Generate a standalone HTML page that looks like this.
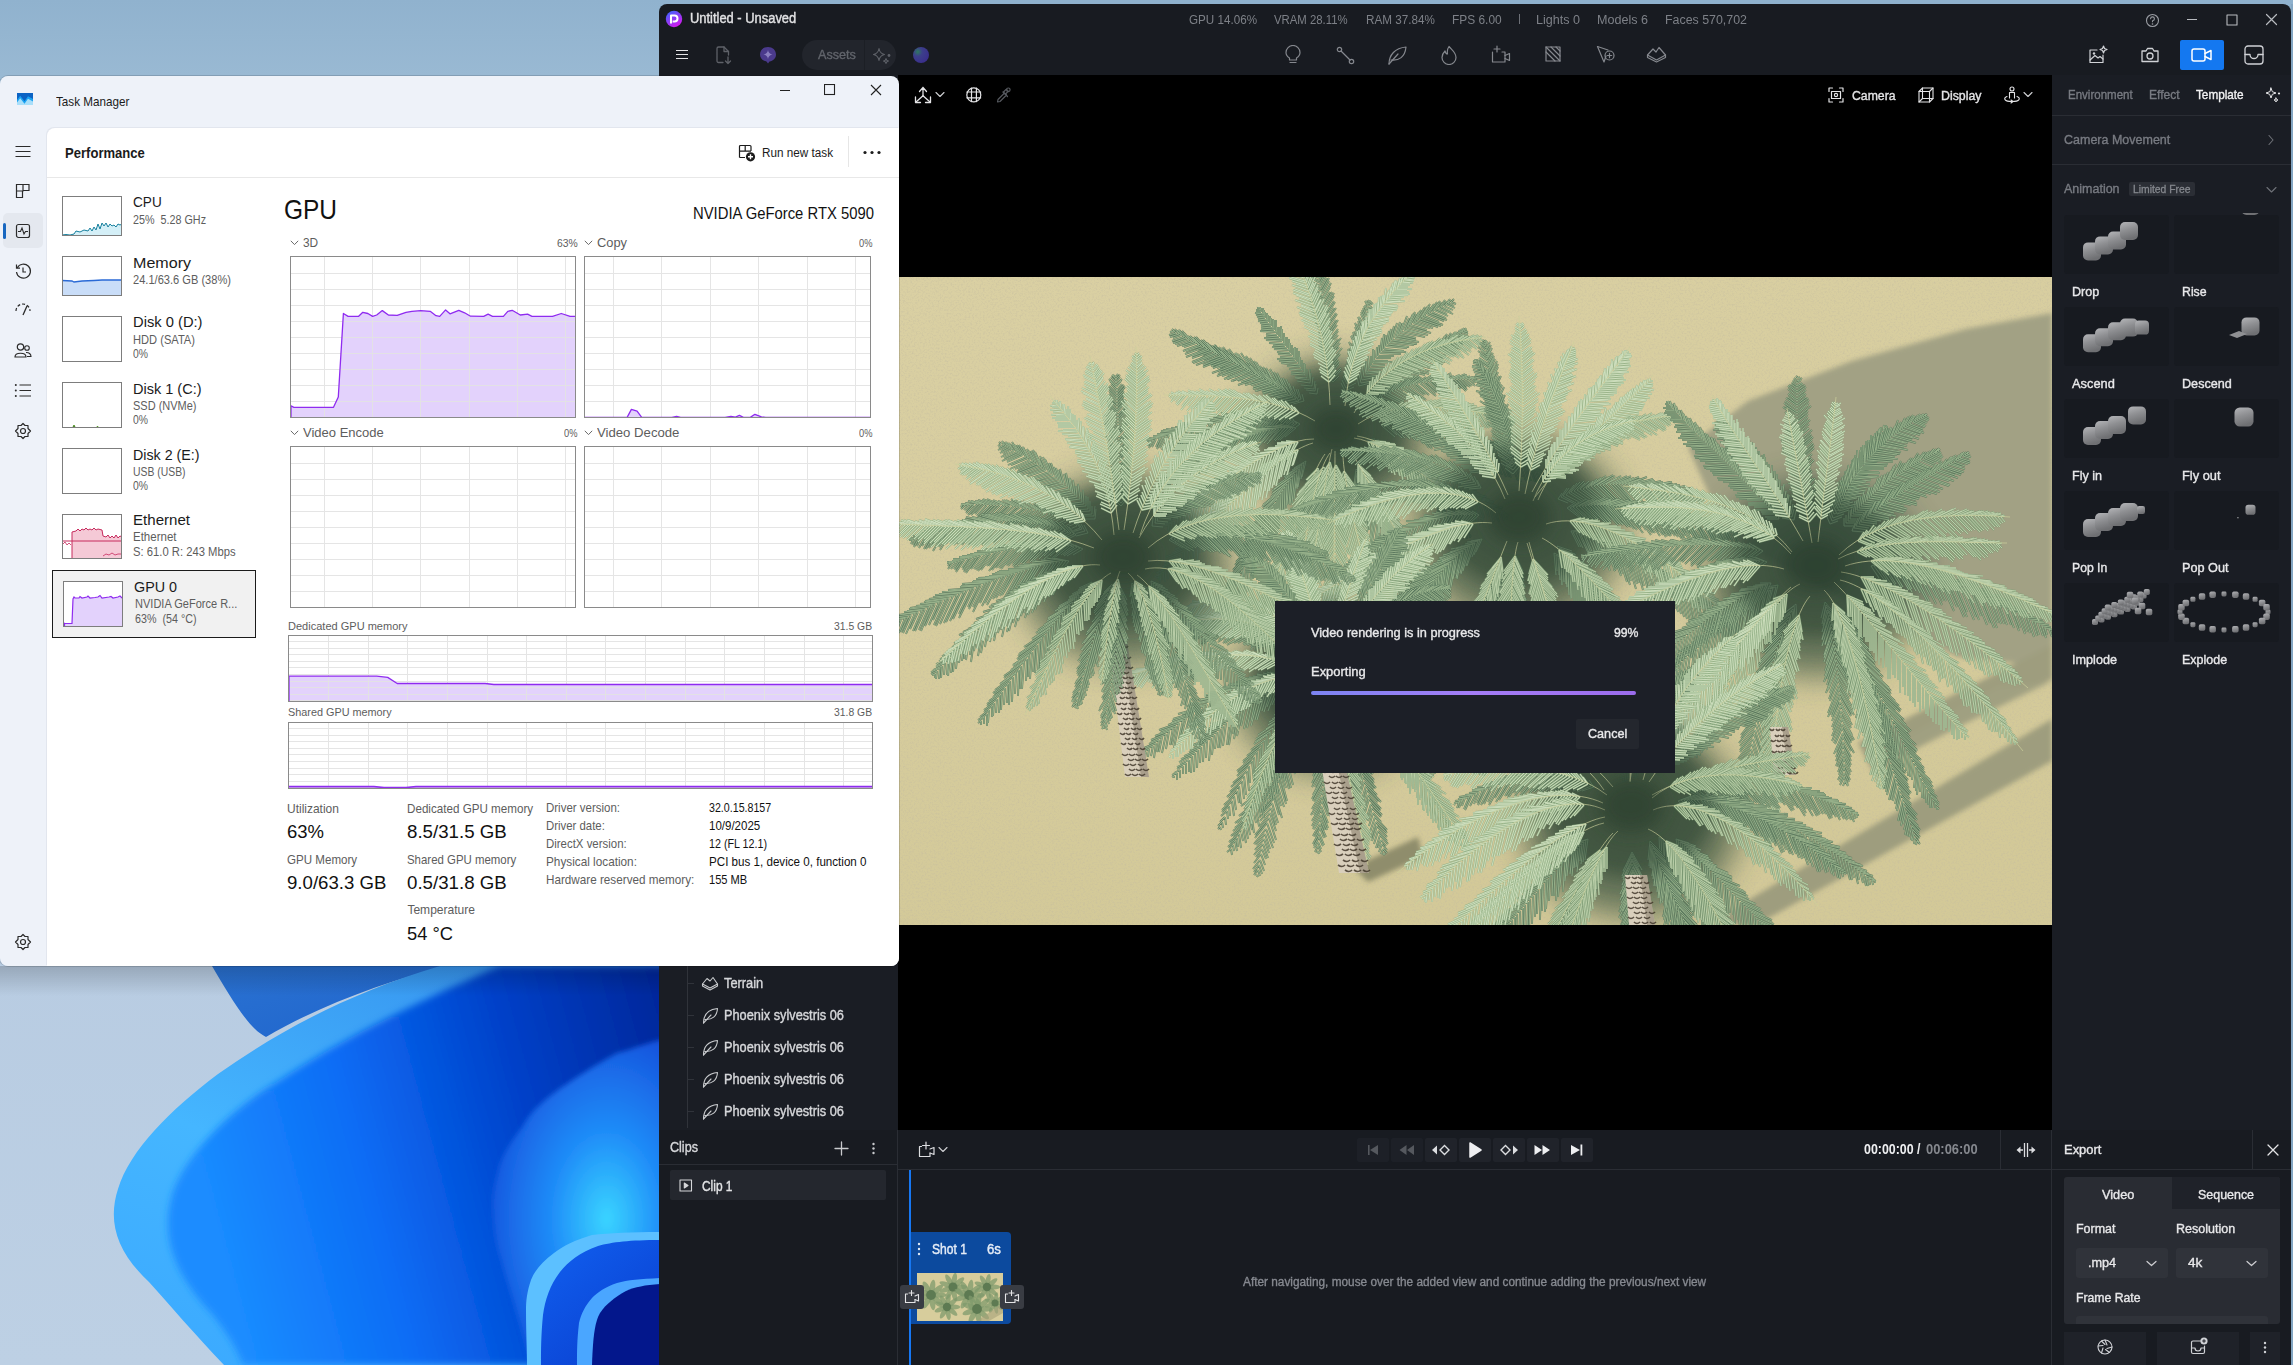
<!DOCTYPE html>
<html><head><meta charset="utf-8"><title>Screen</title>
<style>
html,body{margin:0;padding:0;}
body{width:2293px;height:1365px;position:relative;overflow:hidden;background:#8fb1cd;font-family:"Liberation Sans",sans-serif;}
.r{position:absolute;display:block;}
.t{position:absolute;white-space:pre;line-height:1;font-family:"Liberation Sans",sans-serif;}
</style></head><body>
<svg class="r" style="left:0px;top:0px;" width="700" height="1365" viewBox="0 0 700 1365"><defs>
<linearGradient id="dsk" x1="0" y1="0" x2="0" y2="1"><stop offset="0" stop-color="#90b2ce"/><stop offset="0.055" stop-color="#99b9d3"/><stop offset="0.7" stop-color="#b8cce2"/><stop offset="1" stop-color="#bdd0e4"/></linearGradient>
<linearGradient id="p1" x1="0" y1="0" x2="1" y2="1"><stop offset="0" stop-color="#2a72d2"/><stop offset="1" stop-color="#1f64cc"/></linearGradient>
<linearGradient id="p2" x1="0" y1="0.2" x2="1" y2="0"><stop offset="0" stop-color="#1a8cff"/><stop offset="0.3" stop-color="#0b6cf5"/><stop offset="0.62" stop-color="#0040c8"/><stop offset="1" stop-color="#02208e"/></linearGradient>
<linearGradient id="rim" x1="0" y1="1" x2="0.6" y2="0"><stop offset="0" stop-color="#3aa8ff"/><stop offset="0.5" stop-color="#45b6ff"/><stop offset="1" stop-color="#3796f0"/></linearGradient>
<linearGradient id="p3" x1="0" y1="0" x2="1" y2="0.2"><stop offset="0" stop-color="#2a84f5"/><stop offset="0.5" stop-color="#39c4ff"/><stop offset="1" stop-color="#2a8af5"/></linearGradient>
<radialGradient id="p3r" cx="0.55" cy="0.55" r="0.6"><stop offset="0" stop-color="#3ad4ff"/><stop offset="0.45" stop-color="#1f8cf8"/><stop offset="1" stop-color="#1652dc"/></radialGradient>
<linearGradient id="p5" x1="0" y1="0" x2="1" y2="1"><stop offset="0" stop-color="#1160f0"/><stop offset="1" stop-color="#0838c8"/></linearGradient>
<linearGradient id="p4" x1="0" y1="0" x2="1" y2="1"><stop offset="0" stop-color="#0b4fd8"/><stop offset="1" stop-color="#001a78"/></linearGradient>
<filter id="sb" x="-10%" y="-10%" width="120%" height="120%"><feGaussianBlur stdDeviation="3.5"/></filter><filter id="sb2" x="-10%" y="-10%" width="120%" height="120%"><feGaussianBlur stdDeviation="2.5"/></filter>
<linearGradient id="shd" x1="0" y1="0" x2="0" y2="1"><stop offset="0" stop-color="#000" stop-opacity="0.18"/><stop offset="1" stop-color="#000" stop-opacity="0"/></linearGradient>
</defs>
<rect width="700" height="1365" fill="url(#dsk)"/>
<path d="M212 966 C232 1000 250 1030 266 1037 C320 1005 390 980 448 966Z" fill="url(#p1)"/>
<path d="M440 966 C352 992 280 1030 218 1074 C170 1110 130 1150 118 1189 C108 1220 115 1250 149 1282 C170 1305 195 1335 224 1365 L700 1365 L700 966Z" fill="url(#rim)"/>
<path d="M500 966 C420 1000 340 1040 280 1080 C230 1110 190 1150 174 1189 C160 1230 170 1270 212 1314 C225 1330 235 1345 243 1365 L700 1365 L700 966Z" fill="url(#p2)" filter="url(#sb)"/>
<path d="M660 1040 C640 1045 630 1050 617 1053 C600 1062 585 1072 571 1081 C545 1098 530 1112 523 1126 C508 1145 500 1160 498 1172 C493 1190 492 1200 493 1212 C494 1235 497 1248 501 1260 C506 1280 512 1295 516 1311 C522 1330 527 1348 531 1365 L700 1365 L700 1040Z" fill="url(#p3r)" filter="url(#sb2)"/>
<path d="M660 1040 L700 1040 L700 1365 L640 1365 C650 1250 655 1150 660 1040Z" fill="#0b2aa8" opacity="0.0"/>
<path d="M660 1232 C630 1232 610 1233 592 1235 C575 1240 563 1246 554 1253 C542 1262 535 1270 531 1280 C527 1292 526 1300 526 1311 C526 1330 527 1350 527 1365 L700 1365 L700 1230Z" fill="#5cc0ff"/>
<path d="M660 1240 C630 1240 612 1242 598 1246 C580 1252 568 1262 560 1272 C550 1285 545 1300 543 1315 C541 1335 541 1350 541 1365 L700 1365 L700 1238Z" fill="url(#p5)"/>
<path d="M660 1278 C640 1279 628 1280 617 1283 C605 1287 598 1292 592 1298 C585 1306 581 1314 579 1323 C577 1340 577 1352 577 1365 L700 1365 L700 1275Z" fill="#4aa6ff"/>
<path d="M660 1284 C645 1285 635 1287 626 1291 C615 1297 606 1304 600 1313 C595 1322 593 1335 592 1365 L700 1365 L700 1282Z" fill="#03178c"/>
<rect x="0" y="966" width="700" height="30" fill="url(#shd)"/>
</svg>
<div class="r" style="left:659px;top:4px;width:1632px;height:1361px;background:#181b21;border-top-left-radius:8px;border-top-right-radius:8px;"></div>
<div class="r" style="left:659px;top:75px;width:239px;height:1055px;background:#1a1d24;"></div>
<div class="r" style="left:2052px;top:75px;width:239px;height:1055px;background:#1a1d24;"></div>
<div class="r" style="left:898px;top:75px;width:1154px;height:1055px;background:#000;"></div>
<div class="r" style="left:659px;top:1130px;width:1632px;height:235px;background:#181b21;"></div>
<div class="r" style="left:897px;top:1130px;width:1px;height:235px;background:#2a2d34;"></div>
<div class="r" style="left:2051px;top:1130px;width:1px;height:235px;background:#2a2d34;"></div>
<div class="r" style="left:659px;top:1164px;width:239px;height:1px;background:#2a2d34;"></div>
<div class="r" style="left:898px;top:1169px;width:1153px;height:1px;background:#2a2d34;"></div>
<div class="r" style="left:2052px;top:1169px;width:239px;height:1px;background:#2a2d34;"></div>
<svg class="r" style="left:665px;top:10px;" width="18" height="18" viewBox="0 0 18 18"><defs><linearGradient id="lg1" x1="0" y1="0" x2="0.6" y2="1"><stop offset="0" stop-color="#2f6bff"/><stop offset="1" stop-color="#d41bf0"/></linearGradient></defs><circle cx="9" cy="9" r="8.2" fill="url(#lg1)"/><path d="M6 13.5 V5.5 H9.5 A3 3 0 0 1 9.5 11.5 H7.6" fill="none" stroke="#fff" stroke-width="2" stroke-linejoin="round"/></svg>
<div class="t" style="left:690.00px;top:11.61px;font-size:13.81px;color:#e2e2e4;-webkit-text-stroke:0.39px #e2e2e4;transform:scaleX(0.9360);transform-origin:0 0;">Untitled - Unsaved</div>
<div class="t" style="left:1188.70px;top:12.86px;font-size:13.52px;color:#7d8087;transform:scaleX(0.8621);transform-origin:0 0;">GPU 14.06%</div>
<div class="t" style="left:1274.30px;top:12.86px;font-size:13.52px;color:#7d8087;transform:scaleX(0.8407);transform-origin:0 0;">VRAM 28.11%</div>
<div class="t" style="left:1365.90px;top:12.86px;font-size:13.52px;color:#7d8087;transform:scaleX(0.8641);transform-origin:0 0;">RAM 37.84%</div>
<div class="t" style="left:1452.20px;top:12.86px;font-size:13.52px;color:#7d8087;transform:scaleX(0.8817);transform-origin:0 0;">FPS 6.00</div>
<div class="t" style="left:1536.40px;top:12.86px;font-size:13.52px;color:#7d8087;transform:scaleX(0.9287);transform-origin:0 0;">Lights 0</div>
<div class="t" style="left:1597.40px;top:12.86px;font-size:13.52px;color:#7d8087;transform:scaleX(0.9293);transform-origin:0 0;">Models 6</div>
<div class="t" style="left:1665.40px;top:12.86px;font-size:13.52px;color:#7d8087;transform:scaleX(0.9170);transform-origin:0 0;">Faces 570,702</div>
<div class="r" style="left:1519px;top:14px;width:1px;height:10px;background:#6d7077;"></div>
<svg class="r" style="left:2145px;top:13px;" width="15" height="15" viewBox="0 0 15 15"><g fill="none" stroke="#9a9da3" stroke-width="1.1" stroke-linecap="round" stroke-linejoin="round"><circle cx="7.5" cy="7.5" r="6"/><path d="M5.6 5.8 A1.9 1.9 0 1 1 7.5 7.7 V8.8"/></g><circle cx="7.5" cy="11" r="0.8" fill="#9a9da3"/></svg>
<div class="r" style="left:2187px;top:19px;width:10px;height:1px;background:#b8bbc0;"></div>
<svg class="r" style="left:2226px;top:14px;" width="12" height="12" viewBox="0 0 12 12"><g fill="none" stroke="#b8bbc0" stroke-width="1.1" stroke-linecap="round" stroke-linejoin="round"><rect x="1" y="1" width="10" height="10"/></g></svg>
<svg class="r" style="left:2265px;top:13px;" width="13" height="13" viewBox="0 0 13 13"><g fill="none" stroke="#b8bbc0" stroke-width="1.2" stroke-linecap="round" stroke-linejoin="round"><path d="M1.5 1.5 L11.5 11.5 M11.5 1.5 L1.5 11.5"/></g></svg>
<svg class="r" style="left:675px;top:49px;" width="14" height="11" viewBox="0 0 14 11"><path d="M1 1.5 H13 M1 5.5 H13 M1 9.5 H13" stroke="#e4e4e6" stroke-width="1.1" fill="none"/></svg>
<svg class="r" style="left:714px;top:45px;" width="20" height="20" viewBox="0 0 20 20"><g fill="none" stroke="#5e6168" stroke-width="1.3" stroke-linecap="round" stroke-linejoin="round"><path d="M9 17.5 H4.5 A1.5 1.5 0 0 1 3 16 V3.5 A1.5 1.5 0 0 1 4.5 2 H10 L14.5 6.5 V10"/><path d="M10 2 V6.5 H14.5"/><path d="M14 12 V18.5 M11.5 16 L14 18.5 L16.5 16"/></g></svg>
<svg class="r" style="left:759px;top:46px;" width="18" height="18" viewBox="0 0 18 18"><path d="M9 1 C13.5 1 17 4 17 8.5 C17 12.5 14 15 10.5 15.5 L9 17.5 L7.5 15.5 C4 15 1 12.5 1 8.5 C1 4 4.5 1 9 1Z" fill="#4a3a8c"/><path d="M9 4 Q9.6 7.9 13.5 8.5 Q9.6 9.1 9 13 Q8.4 9.1 4.5 8.5 Q8.4 7.9 9 4Z" fill="#8a7fc0"/></svg>
<div class="r" style="left:802px;top:40px;width:94px;height:30px;background:#22252c;border-radius:15px;"></div>
<div class="r" style="left:864px;top:40px;width:1px;height:30px;background:#1c1f25;"></div>
<div class="t" style="left:818.30px;top:48.64px;font-size:12.35px;color:#62656c;-webkit-text-stroke:0.35px #62656c;transform:scaleX(1.0226);transform-origin:0 0;">Assets</div>
<svg class="r" style="left:872px;top:47px;" width="20" height="18" viewBox="0 0 20 18"><g fill="none" stroke="#5e6168" stroke-width="1.1" stroke-linecap="round" stroke-linejoin="round"><path d="M7 1.5 Q7.8 6.5 12.5 7.5 Q7.8 8.5 7 13.5 Q6.2 8.5 1.5 7.5 Q6.2 6.5 7 1.5Z"/><path d="M14 11.5 Q14.3 13.7 16.5 14 Q14.3 14.3 14 16.5 Q13.7 14.3 11.5 14 Q13.7 13.7 14 11.5Z"/></g><circle cx="17" cy="8.5" r="1.4" fill="#5e6168"/></svg>
<svg class="r" style="left:912px;top:46px;" width="18" height="18" viewBox="0 0 18 18"><defs><radialGradient id="orb" cx="0.3" cy="0.3" r="0.8"><stop offset="0" stop-color="#2e7a5e"/><stop offset="0.35" stop-color="#3c3f8a"/><stop offset="1" stop-color="#3a2d8c"/></radialGradient></defs><circle cx="9" cy="9" r="8" fill="url(#orb)"/></svg>
<svg class="r" style="left:1284px;top:45px;" width="18" height="20" viewBox="0 0 18 20"><g fill="none" stroke="#85888e" stroke-width="1.2" stroke-linecap="round" stroke-linejoin="round"><path d="M5.5 13 C3 11.5 2 9.5 2 7.5 A7 7 0 0 1 16 7.5 C16 9.5 15 11.5 12.5 13 V15 H5.5Z"/><path d="M6 17.5 H12"/></g></svg>
<svg class="r" style="left:1336px;top:46px;" width="19" height="19" viewBox="0 0 19 19"><g fill="none" stroke="#85888e" stroke-width="1.2" stroke-linecap="round" stroke-linejoin="round"><circle cx="3.5" cy="3.5" r="2.2"/><circle cx="15.5" cy="15.5" r="2.2"/><path d="M5 5 L14 14"/></g></svg>
<svg class="r" style="left:1387px;top:45px;" width="20" height="20" viewBox="0 0 20 20"><g fill="none" stroke="#85888e" stroke-width="1.2" stroke-linecap="round" stroke-linejoin="round"><path d="M2 19 C2 10 8 3 19 2 C18 12 12 16 4 15"/><path d="M2 19 L11 9"/></g></svg>
<svg class="r" style="left:1440px;top:45px;" width="18" height="20" viewBox="0 0 18 20"><g fill="none" stroke="#85888e" stroke-width="1.2" stroke-linecap="round" stroke-linejoin="round"><path d="M9 1.5 C12 5 16 7.5 16 12.5 A7 7 0 0 1 2 12.5 C2 9.5 3.5 7.5 5 6 C5.5 8 6.5 9 7.5 9 C7 6 7.5 3.5 9 1.5Z"/></g></svg>
<svg class="r" style="left:1491px;top:45px;" width="20" height="19" viewBox="0 0 20 19"><g fill="none" stroke="#85888e" stroke-width="1.2" stroke-linecap="round" stroke-linejoin="round"><path d="M6 1 V7 M3 4 H9"/><path d="M1.5 7 V17 H14 V7 H11"/><path d="M14 10.5 L18.5 8.5 V15.5 L14 13.5"/></g></svg>
<svg class="r" style="left:1545px;top:46px;" width="17" height="17" viewBox="0 0 17 17"><g fill="none" stroke="#85888e" stroke-width="1.2" stroke-linecap="round" stroke-linejoin="round"><rect x="1" y="1" width="14" height="14"/><path d="M6 1 L15 10 M1 1 L15 15 M1 6 L10 15 M11 1 L15 5"/></g></svg>
<svg class="r" style="left:1596px;top:45px;" width="20" height="20" viewBox="0 0 20 20"><g fill="none" stroke="#85888e" stroke-width="1.2" stroke-linecap="round" stroke-linejoin="round"><path d="M1.5 1.5 L8 17 L10 11"/><path d="M1.5 1.5 L12 5"/><circle cx="13.5" cy="10.5" r="4.5"/><path d="M13.5 8.3 V12.7 M11.3 10.5 H15.7"/></g></svg>
<svg class="r" style="left:1646px;top:46px;" width="21" height="17" viewBox="0 0 21 17"><g fill="none" stroke="#85888e" stroke-width="1.2" stroke-linecap="round" stroke-linejoin="round"><path d="M1.5 9 L10.5 14 L19.5 9 V11.5 L10.5 16 L1.5 11.5Z"/><path d="M1.5 9 L7 3 L10 6 L13 1.5 L19.5 9"/></g></svg>
<svg class="r" style="left:2088px;top:45px;" width="21" height="20" viewBox="0 0 21 20"><g fill="none" stroke="#d0d2d6" stroke-width="1.2" stroke-linecap="round" stroke-linejoin="round"><path d="M15 10 V17.5 H2 V5 H9"/><path d="M2 15 L7 10.5 L10 13 L12 11.5 L15 14"/><path d="M15.5 1 L16.5 3.5 L19 4.5 L16.5 5.5 L15.5 8 L14.5 5.5 L12 4.5 L14.5 3.5Z"/></g><circle cx="6" cy="8.5" r="1.2" fill="#d0d2d6"/></svg>
<svg class="r" style="left:2140px;top:45px;" width="20" height="19" viewBox="0 0 20 19"><g fill="none" stroke="#d0d2d6" stroke-width="1.3" stroke-linecap="round" stroke-linejoin="round"><path d="M2 6 H6 L7.5 3.5 H12.5 L14 6 H18 V16.5 H2Z"/><circle cx="10" cy="11" r="3"/></g></svg>
<div class="r" style="left:2180px;top:40px;width:44px;height:30px;background:#1478f0;border-radius:2px;"></div>
<svg class="r" style="left:2191px;top:47px;" width="22" height="16" viewBox="0 0 22 16"><g fill="none" stroke="#ffffff" stroke-width="1.5" stroke-linecap="round" stroke-linejoin="round"><rect x="1" y="2" width="13" height="12" rx="2"/><path d="M14 6.5 L20 3.5 V12.5 L14 9.5"/></g></svg>
<svg class="r" style="left:2244px;top:45px;" width="20" height="20" viewBox="0 0 20 20"><g fill="none" stroke="#d0d2d6" stroke-width="1.3" stroke-linecap="round" stroke-linejoin="round"><rect x="1" y="1" width="18" height="18" rx="3"/><path d="M1 9.5 H6 C6 12 8 13.5 10 13.5 C12 13.5 14 12 14 9.5 H19"/></g></svg>
<svg class="r" style="left:912px;top:85px;" width="22" height="20" viewBox="0 0 22 20"><g fill="none" stroke="#e4e4e6" stroke-width="1.3" stroke-linecap="round" stroke-linejoin="round"><path d="M11 10.7 V2.5 M7.5 6.5 L11 2.5 L14.5 6.5"/><path d="M11 10.7 L4 17 M11 10.7 L18 17"/><path d="M3.5 12 V17.5 H8.5 M18.5 12 V17.5 H13.5"/></g></svg>
<svg class="r" style="left:935px;top:91px;" width="10" height="7" viewBox="0 0 10 7"><g fill="none" stroke="#cfd0d3" stroke-width="1.1" stroke-linecap="round" stroke-linejoin="round"><path d="M1 1.5 L5 5.5 L9 1.5"/></g></svg>
<svg class="r" style="left:965px;top:86px;" width="18" height="18" viewBox="0 0 18 18"><g fill="none" stroke="#e4e4e6" stroke-width="1.2" stroke-linecap="round" stroke-linejoin="round"><circle cx="8.8" cy="8.9" r="7"/><path d="M6.5 2.2 V15.6 M11.4 2.2 V15.6 M1.9 6 H15.7 M1.9 11.8 H15.7"/></g></svg>
<svg class="r" style="left:995px;top:86px;" width="17" height="18" viewBox="0 0 17 18"><g fill="none" stroke="#55585e" stroke-width="1.2" stroke-linecap="round" stroke-linejoin="round"><path d="M2.5 16 L3 13.5 L9.5 7 L11.5 9 L5 15.5Z"/><path d="M8 6 L12.5 10.5"/><path d="M10.5 8 L13 5.5 A2 2 0 0 0 11 3.5 L8.5 6"/><circle cx="13.3" cy="3.8" r="1.8"/></g></svg>
<svg class="r" style="left:1828px;top:87px;" width="16" height="16" viewBox="0 0 16 16"><g fill="none" stroke="#e4e4e6" stroke-width="1.2" stroke-linecap="round" stroke-linejoin="round"><path d="M1 4.5 V1 H4.5 M11.5 1 H15 V4.5 M15 11.5 V15 H11.5 M4.5 15 H1 V11.5"/><rect x="3.5" y="4.5" width="9" height="7"/><circle cx="8" cy="8" r="1.6"/></g></svg>
<div class="t" style="left:1852.20px;top:88.93px;font-size:13.08px;color:#e4e4e6;-webkit-text-stroke:0.37px #e4e4e6;transform:scaleX(0.9362);transform-origin:0 0;">Camera</div>
<svg class="r" style="left:1918px;top:87px;" width="16" height="16" viewBox="0 0 16 16"><g fill="none" stroke="#e4e4e6" stroke-width="1.1" stroke-linecap="round" stroke-linejoin="round"><rect x="1" y="4.5" width="10.5" height="10.5"/><rect x="4.5" y="1" width="10.5" height="10.5"/><path d="M1 4.5 L4.5 1 M11.5 4.5 L15 1 M11.5 15 L15 11.5 M1 15 L4.5 11.5"/></g></svg>
<div class="t" style="left:1941.20px;top:88.93px;font-size:13.08px;color:#e4e4e6;-webkit-text-stroke:0.37px #e4e4e6;transform:scaleX(0.9439);transform-origin:0 0;">Display</div>
<svg class="r" style="left:2003px;top:86px;" width="18" height="18" viewBox="0 0 18 18"><g fill="none" stroke="#e4e4e6" stroke-width="1.1" stroke-linecap="round" stroke-linejoin="round"><circle cx="9" cy="3" r="2"/><path d="M6.5 12 V6.5 H11.5 V12"/><path d="M4 10.5 C0 12 1 15.5 9 15.5 C17 15.5 18 12 14 10.5"/><path d="M8 14 L10 15.5 L8 17"/></g></svg>
<svg class="r" style="left:2023px;top:91px;" width="10" height="7" viewBox="0 0 10 7"><g fill="none" stroke="#cfd0d3" stroke-width="1.1" stroke-linecap="round" stroke-linejoin="round"><path d="M1 1.5 L5 5.5 L9 1.5"/></g></svg>
<div class="t" style="left:2067.80px;top:88.48px;font-size:13.37px;color:#787b82;-webkit-text-stroke:0.37px #787b82;transform:scaleX(0.8630);transform-origin:0 0;">Environment</div>
<div class="t" style="left:2148.90px;top:88.48px;font-size:13.37px;color:#787b82;-webkit-text-stroke:0.37px #787b82;transform:scaleX(0.9039);transform-origin:0 0;">Effect</div>
<div class="t" style="left:2196.00px;top:88.48px;font-size:13.37px;color:#f2f2f3;-webkit-text-stroke:0.37px #f2f2f3;transform:scaleX(0.8786);transform-origin:0 0;">Template</div>
<svg class="r" style="left:2265px;top:87px;" width="16" height="16" viewBox="0 0 16 16"><g fill="none" stroke="#e4e4e6" stroke-width="1.0" stroke-linecap="round" stroke-linejoin="round"><path d="M6 1 L7.3 4.7 L11 6 L7.3 7.3 L6 11 L4.7 7.3 L1 6 L4.7 4.7Z"/><path d="M11 11 L11.6 12.4 L13 13 L11.6 13.6 L11 15 L10.4 13.6 L9 13 L10.4 12.4Z"/></g><circle cx="14" cy="6.5" r="1.1" fill="#e4e4e6"/></svg>
<div class="r" style="left:2052px;top:115px;width:239px;height:1px;background:#2a2d34;"></div>
<div class="t" style="left:2064.20px;top:132.98px;font-size:13.37px;color:#787b82;-webkit-text-stroke:0.37px #787b82;transform:scaleX(0.9356);transform-origin:0 0;">Camera Movement</div>
<svg class="r" style="left:2267px;top:134px;" width="8" height="12" viewBox="0 0 8 12"><g fill="none" stroke="#6e7177" stroke-width="1.1" stroke-linecap="round" stroke-linejoin="round"><path d="M2 1.5 L6 6 L2 10.5"/></g></svg>
<div class="r" style="left:2052px;top:164px;width:239px;height:1px;background:#2a2d34;"></div>
<div class="t" style="left:2064.20px;top:182.08px;font-size:13.37px;color:#787b82;-webkit-text-stroke:0.37px #787b82;transform:scaleX(0.9354);transform-origin:0 0;">Animation</div>
<div class="r" style="left:2129px;top:182px;width:66px;height:14px;background:#2b2e35;border-radius:2px;"></div>
<div class="t" style="left:2133.00px;top:183.90px;font-size:10.76px;color:#85888e;-webkit-text-stroke:0.30px #85888e;transform:scaleX(0.9615);transform-origin:0 0;">Limited Free</div>
<svg class="r" style="left:2266px;top:186px;" width="11" height="8" viewBox="0 0 11 8"><g fill="none" stroke="#6e7177" stroke-width="1.1" stroke-linecap="round" stroke-linejoin="round"><path d="M1 1.5 L5.5 6 L10 1.5"/></g></svg>
<div class="r" style="left:2064px;top:215px;width:105px;height:59px;background:#171a20;border-radius:3px;"></div>
<div class="r" style="left:2174px;top:215px;width:105px;height:59px;background:#171a20;border-radius:3px;"></div>
<div class="t" style="left:2072.00px;top:285.16px;font-size:13.52px;color:#e8e8ea;-webkit-text-stroke:0.38px #e8e8ea;transform:scaleX(0.9307);transform-origin:0 0;">Drop</div>
<div class="t" style="left:2182.00px;top:285.16px;font-size:13.52px;color:#e8e8ea;-webkit-text-stroke:0.38px #e8e8ea;transform:scaleX(0.9099);transform-origin:0 0;">Rise</div>
<div class="r" style="left:2064px;top:307px;width:105px;height:59px;background:#171a20;border-radius:3px;"></div>
<div class="r" style="left:2174px;top:307px;width:105px;height:59px;background:#171a20;border-radius:3px;"></div>
<div class="t" style="left:2072.00px;top:377.16px;font-size:13.52px;color:#e8e8ea;-webkit-text-stroke:0.38px #e8e8ea;transform:scaleX(0.9494);transform-origin:0 0;">Ascend</div>
<div class="t" style="left:2182.00px;top:377.16px;font-size:13.52px;color:#e8e8ea;-webkit-text-stroke:0.38px #e8e8ea;transform:scaleX(0.9339);transform-origin:0 0;">Descend</div>
<div class="r" style="left:2064px;top:399px;width:105px;height:59px;background:#171a20;border-radius:3px;"></div>
<div class="r" style="left:2174px;top:399px;width:105px;height:59px;background:#171a20;border-radius:3px;"></div>
<div class="t" style="left:2072.00px;top:469.16px;font-size:13.52px;color:#e8e8ea;-webkit-text-stroke:0.38px #e8e8ea;transform:scaleX(0.9286);transform-origin:0 0;">Fly in</div>
<div class="t" style="left:2182.00px;top:469.16px;font-size:13.52px;color:#e8e8ea;-webkit-text-stroke:0.38px #e8e8ea;transform:scaleX(0.9494);transform-origin:0 0;">Fly out</div>
<div class="r" style="left:2064px;top:491px;width:105px;height:59px;background:#171a20;border-radius:3px;"></div>
<div class="r" style="left:2174px;top:491px;width:105px;height:59px;background:#171a20;border-radius:3px;"></div>
<div class="t" style="left:2072.00px;top:561.16px;font-size:13.52px;color:#e8e8ea;-webkit-text-stroke:0.38px #e8e8ea;transform:scaleX(0.9036);transform-origin:0 0;">Pop In</div>
<div class="t" style="left:2182.00px;top:561.16px;font-size:13.52px;color:#e8e8ea;-webkit-text-stroke:0.38px #e8e8ea;transform:scaleX(0.9393);transform-origin:0 0;">Pop Out</div>
<div class="r" style="left:2064px;top:583px;width:105px;height:59px;background:#171a20;border-radius:3px;"></div>
<div class="r" style="left:2174px;top:583px;width:105px;height:59px;background:#171a20;border-radius:3px;"></div>
<div class="t" style="left:2072.00px;top:653.16px;font-size:13.52px;color:#e8e8ea;-webkit-text-stroke:0.38px #e8e8ea;transform:scaleX(0.9351);transform-origin:0 0;">Implode</div>
<div class="t" style="left:2182.00px;top:653.16px;font-size:13.52px;color:#e8e8ea;-webkit-text-stroke:0.38px #e8e8ea;transform:scaleX(0.9250);transform-origin:0 0;">Explode</div>
<svg class="r" style="left:2064px;top:213px;overflow:hidden;" width="216" height="430" viewBox="0 0 216 430"><defs><linearGradient id="cg" x1="0" y1="0" x2="0.3" y2="1"><stop offset="0" stop-color="#b4b5b8"/><stop offset="0.5" stop-color="#8e8f92"/><stop offset="1" stop-color="#6f7073"/></linearGradient></defs><rect x="19.0" y="29.4" width="18.0" height="18.0" rx="5.0" fill="url(#cg)"/><rect x="31.0" y="23.4" width="18.0" height="18.0" rx="5.0" fill="url(#cg)"/><rect x="44.0" y="18.5" width="18.0" height="18.0" rx="5.0" fill="url(#cg)"/><rect x="56.0" y="9.0" width="18.0" height="18.0" rx="5.0" fill="url(#cg)"/><rect x="177.5" y="-16.0" width="18.0" height="18.0" rx="5.0" fill="url(#cg)"/><rect x="19.0" y="121.3" width="18.0" height="18.0" rx="5.0" fill="url(#cg)"/><rect x="31.0" y="115.3" width="18.0" height="18.0" rx="5.0" fill="url(#cg)"/><rect x="44.0" y="109.3" width="18.0" height="18.0" rx="5.0" fill="url(#cg)"/><rect x="56.0" y="105.6" width="18.0" height="18.0" rx="5.0" fill="url(#cg)"/><rect x="71.0" y="107.6" width="14.0" height="14.0" rx="3.9" fill="url(#cg)"/><rect x="177.5" y="104.4" width="18.0" height="18.0" rx="5.0" fill="url(#cg)"/><path d="M165.0 122.0 l10 -4 l8 3 l-10 4z" fill="#8f9093"/><rect x="19.0" y="214.0" width="18.0" height="18.0" rx="5.0" fill="url(#cg)"/><rect x="31.0" y="208.0" width="18.0" height="18.0" rx="5.0" fill="url(#cg)"/><rect x="44.0" y="203.0" width="18.0" height="18.0" rx="5.0" fill="url(#cg)"/><rect x="64.0" y="193.4" width="18.0" height="18.0" rx="5.0" fill="url(#cg)"/><rect x="170.5" y="194.5" width="19.0" height="19.0" rx="5.3" fill="url(#cg)"/><rect x="19.0" y="306.0" width="18.0" height="18.0" rx="5.0" fill="url(#cg)"/><rect x="31.0" y="300.0" width="18.0" height="18.0" rx="5.0" fill="url(#cg)"/><rect x="44.0" y="295.0" width="18.0" height="18.0" rx="5.0" fill="url(#cg)"/><rect x="56.0" y="290.0" width="18.0" height="18.0" rx="5.0" fill="url(#cg)"/><rect x="73.0" y="293.0" width="8.0" height="8.0" rx="2.2" fill="url(#cg)"/><rect x="181.5" y="291.7" width="10.0" height="10.0" rx="2.8" fill="url(#cg)"/><rect x="173.2" y="304.0" width="1.5" height="1.5" rx="0.4" fill="url(#cg)"/><rect x="28.0" y="406.0" width="6.0" height="6.0" rx="1.7" fill="url(#cg)"/><rect x="34.5" y="403.4" width="6.0" height="6.0" rx="1.7" fill="url(#cg)"/><rect x="41.0" y="400.8" width="6.0" height="6.0" rx="1.7" fill="url(#cg)"/><rect x="47.5" y="398.2" width="6.0" height="6.0" rx="1.7" fill="url(#cg)"/><rect x="54.0" y="395.6" width="6.0" height="6.0" rx="1.7" fill="url(#cg)"/><rect x="60.5" y="393.0" width="6.0" height="6.0" rx="1.7" fill="url(#cg)"/><rect x="67.0" y="390.4" width="6.0" height="6.0" rx="1.7" fill="url(#cg)"/><rect x="31.2" y="402.4" width="6.0" height="6.0" rx="1.7" fill="url(#cg)"/><rect x="37.7" y="399.8" width="6.0" height="6.0" rx="1.7" fill="url(#cg)"/><rect x="44.2" y="397.2" width="6.0" height="6.0" rx="1.7" fill="url(#cg)"/><rect x="50.7" y="394.6" width="6.0" height="6.0" rx="1.7" fill="url(#cg)"/><rect x="57.2" y="392.0" width="6.0" height="6.0" rx="1.7" fill="url(#cg)"/><rect x="63.7" y="389.4" width="6.0" height="6.0" rx="1.7" fill="url(#cg)"/><rect x="70.2" y="386.8" width="6.0" height="6.0" rx="1.7" fill="url(#cg)"/><rect x="34.4" y="398.8" width="6.0" height="6.0" rx="1.7" fill="url(#cg)"/><rect x="40.9" y="396.2" width="6.0" height="6.0" rx="1.7" fill="url(#cg)"/><rect x="47.4" y="393.6" width="6.0" height="6.0" rx="1.7" fill="url(#cg)"/><rect x="53.9" y="391.0" width="6.0" height="6.0" rx="1.7" fill="url(#cg)"/><rect x="60.4" y="388.4" width="6.0" height="6.0" rx="1.7" fill="url(#cg)"/><rect x="66.9" y="385.8" width="6.0" height="6.0" rx="1.7" fill="url(#cg)"/><rect x="73.4" y="383.2" width="6.0" height="6.0" rx="1.7" fill="url(#cg)"/><rect x="37.6" y="395.2" width="6.0" height="6.0" rx="1.7" fill="url(#cg)"/><rect x="44.1" y="392.6" width="6.0" height="6.0" rx="1.7" fill="url(#cg)"/><rect x="50.6" y="390.0" width="6.0" height="6.0" rx="1.7" fill="url(#cg)"/><rect x="57.1" y="387.4" width="6.0" height="6.0" rx="1.7" fill="url(#cg)"/><rect x="63.6" y="384.8" width="6.0" height="6.0" rx="1.7" fill="url(#cg)"/><rect x="70.1" y="382.2" width="6.0" height="6.0" rx="1.7" fill="url(#cg)"/><rect x="76.6" y="379.6" width="6.0" height="6.0" rx="1.7" fill="url(#cg)"/><rect x="40.8" y="391.6" width="6.0" height="6.0" rx="1.7" fill="url(#cg)"/><rect x="47.3" y="389.0" width="6.0" height="6.0" rx="1.7" fill="url(#cg)"/><rect x="53.8" y="386.4" width="6.0" height="6.0" rx="1.7" fill="url(#cg)"/><rect x="60.3" y="383.8" width="6.0" height="6.0" rx="1.7" fill="url(#cg)"/><rect x="66.8" y="381.2" width="6.0" height="6.0" rx="1.7" fill="url(#cg)"/><rect x="73.3" y="378.6" width="6.0" height="6.0" rx="1.7" fill="url(#cg)"/><rect x="79.8" y="376.0" width="6.0" height="6.0" rx="1.7" fill="url(#cg)"/><rect x="62.8" y="378.8" width="6.5" height="6.5" rx="1.8" fill="url(#cg)"/><rect x="67.8" y="384.8" width="6.5" height="6.5" rx="1.8" fill="url(#cg)"/><rect x="74.8" y="389.8" width="6.5" height="6.5" rx="1.8" fill="url(#cg)"/><rect x="81.8" y="395.8" width="6.5" height="6.5" rx="1.8" fill="url(#cg)"/><rect x="70.8" y="394.8" width="6.5" height="6.5" rx="1.8" fill="url(#cg)"/><rect x="201.5" y="396.5" width="5.0" height="5.0" rx="1.4" fill="url(#cg)"/><rect x="199.3" y="400.4" width="6.5" height="6.5" rx="1.8" fill="url(#cg)"/><rect x="194.9" y="404.8" width="6.5" height="6.5" rx="1.8" fill="url(#cg)"/><rect x="188.6" y="409.2" width="5.0" height="5.0" rx="1.4" fill="url(#cg)"/><rect x="178.8" y="411.3" width="6.5" height="6.5" rx="1.8" fill="url(#cg)"/><rect x="168.1" y="413.1" width="6.5" height="6.5" rx="1.8" fill="url(#cg)"/><rect x="157.5" y="414.5" width="5.0" height="5.0" rx="1.4" fill="url(#cg)"/><rect x="145.4" y="413.1" width="6.5" height="6.5" rx="1.8" fill="url(#cg)"/><rect x="134.8" y="411.3" width="6.5" height="6.5" rx="1.8" fill="url(#cg)"/><rect x="126.4" y="409.2" width="5.0" height="5.0" rx="1.4" fill="url(#cg)"/><rect x="118.6" y="404.8" width="6.5" height="6.5" rx="1.8" fill="url(#cg)"/><rect x="114.2" y="400.4" width="6.5" height="6.5" rx="1.8" fill="url(#cg)"/><rect x="113.5" y="396.5" width="5.0" height="5.0" rx="1.4" fill="url(#cg)"/><rect x="114.2" y="391.1" width="6.5" height="6.5" rx="1.8" fill="url(#cg)"/><rect x="118.6" y="386.8" width="6.5" height="6.5" rx="1.8" fill="url(#cg)"/><rect x="126.4" y="383.8" width="5.0" height="5.0" rx="1.4" fill="url(#cg)"/><rect x="134.8" y="380.2" width="6.5" height="6.5" rx="1.8" fill="url(#cg)"/><rect x="145.4" y="378.4" width="6.5" height="6.5" rx="1.8" fill="url(#cg)"/><rect x="157.5" y="378.5" width="5.0" height="5.0" rx="1.4" fill="url(#cg)"/><rect x="168.1" y="378.4" width="6.5" height="6.5" rx="1.8" fill="url(#cg)"/><rect x="178.8" y="380.2" width="6.5" height="6.5" rx="1.8" fill="url(#cg)"/><rect x="188.6" y="383.8" width="5.0" height="5.0" rx="1.4" fill="url(#cg)"/><rect x="194.9" y="386.8" width="6.5" height="6.5" rx="1.8" fill="url(#cg)"/><rect x="199.3" y="391.1" width="6.5" height="6.5" rx="1.8" fill="url(#cg)"/></svg>
<div class="r" style="left:687px;top:966px;width:1px;height:162px;background:#30333a;"></div>
<div class="r" style="left:688px;top:983px;width:6px;height:1px;background:#30333a;"></div>
<svg class="r" style="left:701px;top:976px;" width="18" height="16" viewBox="0 0 18 16"><g fill="none" stroke="#c8cacd" stroke-width="1.1" stroke-linecap="round" stroke-linejoin="round"><path d="M1.5 8 L9 12 L16.5 8 V10 L9 14 L1.5 10Z"/><path d="M1.5 8 L6 2.5 L9 5 L12 1.5 L16.5 8"/></g></svg>
<div class="t" style="left:724.10px;top:977.21px;font-size:13.81px;color:#d6d7da;-webkit-text-stroke:0.39px #d6d7da;transform:scaleX(0.9293);transform-origin:0 0;">Terrain</div>
<div class="r" style="left:688px;top:1015px;width:6px;height:1px;background:#30333a;"></div>
<svg class="r" style="left:702px;top:1007px;" width="17" height="17" viewBox="0 0 17 17"><g fill="none" stroke="#c8cacd" stroke-width="1.1" stroke-linecap="round" stroke-linejoin="round"><path d="M1.5 16 C1.5 8 6 2.5 15.5 1.5 C15 9.5 10 13 3 12.5"/><path d="M1.5 16 L9 8"/></g></svg>
<div class="t" style="left:724.10px;top:1009.21px;font-size:13.81px;color:#d6d7da;-webkit-text-stroke:0.39px #d6d7da;transform:scaleX(0.9250);transform-origin:0 0;">Phoenix sylvestris 06</div>
<div class="r" style="left:688px;top:1047px;width:6px;height:1px;background:#30333a;"></div>
<svg class="r" style="left:702px;top:1039px;" width="17" height="17" viewBox="0 0 17 17"><g fill="none" stroke="#c8cacd" stroke-width="1.1" stroke-linecap="round" stroke-linejoin="round"><path d="M1.5 16 C1.5 8 6 2.5 15.5 1.5 C15 9.5 10 13 3 12.5"/><path d="M1.5 16 L9 8"/></g></svg>
<div class="t" style="left:724.10px;top:1041.21px;font-size:13.81px;color:#d6d7da;-webkit-text-stroke:0.39px #d6d7da;transform:scaleX(0.9250);transform-origin:0 0;">Phoenix sylvestris 06</div>
<div class="r" style="left:688px;top:1079px;width:6px;height:1px;background:#30333a;"></div>
<svg class="r" style="left:702px;top:1071px;" width="17" height="17" viewBox="0 0 17 17"><g fill="none" stroke="#c8cacd" stroke-width="1.1" stroke-linecap="round" stroke-linejoin="round"><path d="M1.5 16 C1.5 8 6 2.5 15.5 1.5 C15 9.5 10 13 3 12.5"/><path d="M1.5 16 L9 8"/></g></svg>
<div class="t" style="left:724.10px;top:1073.21px;font-size:13.81px;color:#d6d7da;-webkit-text-stroke:0.39px #d6d7da;transform:scaleX(0.9250);transform-origin:0 0;">Phoenix sylvestris 06</div>
<div class="r" style="left:688px;top:1111px;width:6px;height:1px;background:#30333a;"></div>
<svg class="r" style="left:702px;top:1103px;" width="17" height="17" viewBox="0 0 17 17"><g fill="none" stroke="#c8cacd" stroke-width="1.1" stroke-linecap="round" stroke-linejoin="round"><path d="M1.5 16 C1.5 8 6 2.5 15.5 1.5 C15 9.5 10 13 3 12.5"/><path d="M1.5 16 L9 8"/></g></svg>
<div class="t" style="left:724.10px;top:1105.21px;font-size:13.81px;color:#d6d7da;-webkit-text-stroke:0.39px #d6d7da;transform:scaleX(0.9250);transform-origin:0 0;">Phoenix sylvestris 06</div>
<div class="t" style="left:670.00px;top:1140.79px;font-size:13.95px;color:#d6d7da;-webkit-text-stroke:0.39px #d6d7da;transform:scaleX(0.9019);transform-origin:0 0;">Clips</div>
<svg class="r" style="left:834px;top:1141px;" width="15" height="15" viewBox="0 0 15 15"><g fill="none" stroke="#c8cacd" stroke-width="1.3" stroke-linecap="round" stroke-linejoin="round"><path d="M7.5 1 V14 M1 7.5 H14"/></g></svg>
<svg class="r" style="left:871px;top:1142px;" width="5" height="13" viewBox="0 0 5 13"><circle cx="2.5" cy="2" r="1.2" fill="#c8cacd"/><circle cx="2.5" cy="6.5" r="1.2" fill="#c8cacd"/><circle cx="2.5" cy="11" r="1.2" fill="#c8cacd"/></svg>
<div class="r" style="left:670px;top:1170px;width:216px;height:30px;background:#24272e;border-radius:2px;"></div>
<svg class="r" style="left:679px;top:1179px;" width="14" height="13" viewBox="0 0 14 13"><g fill="none" stroke="#d6d7da" stroke-width="1.1" stroke-linecap="round" stroke-linejoin="round"><rect x="1" y="1" width="11.5" height="11"/><path d="M5.3 4 L9 6.5 L5.3 9Z" fill="#d6d7da"/></g></svg>
<div class="t" style="left:701.70px;top:1178.54px;font-size:14.24px;color:#e2e3e5;-webkit-text-stroke:0.40px #e2e3e5;transform:scaleX(0.8381);transform-origin:0 0;">Clip 1</div>
<svg class="r" style="left:918px;top:1141px;" width="18" height="17" viewBox="0 0 18 17"><g fill="none" stroke="#dcdde0" stroke-width="1.2" stroke-linecap="round" stroke-linejoin="round"><path d="M3.5 5.5 H1.5 V15.5 H12 V12"/><path d="M8 1 V8 M4.5 4.5 H11.5"/><path d="M12 8 L16 6.5 V13.5 L12 12"/></g></svg>
<svg class="r" style="left:938px;top:1146px;" width="10" height="7" viewBox="0 0 10 7"><g fill="none" stroke="#cfd0d3" stroke-width="1.1" stroke-linecap="round" stroke-linejoin="round"><path d="M1 1.5 L5 5.5 L9 1.5"/></g></svg>
<div class="r" style="left:1357px;top:1138px;width:32px;height:24px;background:#1d2027;border-radius:2px;"></div>
<div class="r" style="left:1391px;top:1138px;width:32px;height:24px;background:#1d2027;border-radius:2px;"></div>
<div class="r" style="left:1425px;top:1138px;width:32px;height:24px;background:#20232a;border-radius:2px;"></div>
<div class="r" style="left:1459px;top:1138px;width:32px;height:24px;background:#20232a;border-radius:2px;"></div>
<div class="r" style="left:1493px;top:1138px;width:32px;height:24px;background:#20232a;border-radius:2px;"></div>
<div class="r" style="left:1527px;top:1138px;width:32px;height:24px;background:#20232a;border-radius:2px;"></div>
<div class="r" style="left:1561px;top:1138px;width:32px;height:24px;background:#20232a;border-radius:2px;"></div>
<svg class="r" style="left:1366px;top:1143px;" width="14" height="14" viewBox="0 0 14 14"><rect x="2" y="2" width="1.6" height="10" fill="#55585e"/><path d="M12 2 L4 7 L12 12Z" fill="#55585e"/></svg>
<svg class="r" style="left:1398px;top:1143px;" width="18" height="14" viewBox="0 0 18 14"><path d="M8.5 2 L1.5 7 L8.5 12Z M16 2 L9 7 L16 12Z" fill="#55585e"/></svg>
<svg class="r" style="left:1431px;top:1142px;" width="20" height="16" viewBox="0 0 20 16"><path d="M6 3.5 L1 8 L6 12.5Z" fill="#dcdde0"/><path d="M13.5 3.5 L18 8 L13.5 12.5 L9 8Z" fill="none" stroke="#dcdde0" stroke-width="1.4"/></svg>
<svg class="r" style="left:1467px;top:1141px;" width="16" height="18" viewBox="0 0 16 18"><path d="M3 2 L14 9 L3 16Z" fill="#eeeff1" stroke="#eeeff1" stroke-width="1.5" stroke-linejoin="round"/></svg>
<svg class="r" style="left:1499px;top:1142px;" width="20" height="16" viewBox="0 0 20 16"><path d="M6.5 3.5 L11 8 L6.5 12.5 L2 8Z" fill="none" stroke="#dcdde0" stroke-width="1.4"/><path d="M14 3.5 L19 8 L14 12.5Z" fill="#dcdde0"/></svg>
<svg class="r" style="left:1533px;top:1143px;" width="19" height="14" viewBox="0 0 19 14"><path d="M1.5 2 L9 7 L1.5 12Z M9.5 2 L17 7 L9.5 12Z" fill="#eeeff1"/></svg>
<svg class="r" style="left:1569px;top:1143px;" width="16" height="14" viewBox="0 0 16 14"><path d="M2 2 L11 7 L2 12Z" fill="#eeeff1"/><rect x="11.5" y="1.5" width="1.8" height="11" fill="#eeeff1"/></svg>
<div class="t" style="left:1864.30px;top:1142.20px;font-size:14.53px;color:#eeeff1;font-weight:700;transform:scaleX(0.8525);transform-origin:0 0;">00:00:00 /</div>
<div class="t" style="left:1926.30px;top:1142.20px;font-size:14.53px;color:#85888e;font-weight:700;transform:scaleX(0.8881);transform-origin:0 0;">00:06:00</div>
<div class="r" style="left:2000px;top:1130px;width:1px;height:39px;background:#2a2d34;"></div>
<svg class="r" style="left:2015px;top:1142px;" width="22" height="16" viewBox="0 0 22 16"><path d="M9.5 1 V15 M12.5 1 V15" stroke="#dcdde0" stroke-width="1.3"/><path d="M1.5 8 L5.5 4.5 V11.5Z M20.5 8 L16.5 4.5 V11.5Z" fill="#dcdde0"/><path d="M4 8 H8 M14 8 H18" stroke="#dcdde0" stroke-width="1.3"/></svg>
<div class="t" style="left:1243.00px;top:1276.06px;font-size:12.21px;color:#868990;-webkit-text-stroke:0.34px #868990;transform:scaleX(0.9684);transform-origin:0 0;">After navigating, mouse over the added view and continue adding the previous/next view</div>
<div class="r" style="left:909px;top:1170px;width:2px;height:195px;background:#1677f2;"></div>
<div class="r" style="left:911px;top:1232px;width:100px;height:92px;background:#0c4a9e;border-radius:0 4px 4px 0;"></div>
<svg class="r" style="left:917px;top:1242px;" width="4" height="14" viewBox="0 0 4 14"><circle cx="2" cy="2" r="1.2" fill="#dfe8f5"/><circle cx="2" cy="7" r="1.2" fill="#dfe8f5"/><circle cx="2" cy="12" r="1.2" fill="#dfe8f5"/></svg>
<div class="t" style="left:932.00px;top:1242.59px;font-size:13.95px;color:#e6edf7;-webkit-text-stroke:0.39px #e6edf7;transform:scaleX(0.8679);transform-origin:0 0;">Shot 1</div>
<div class="t" style="left:986.50px;top:1242.59px;font-size:13.95px;color:#e6edf7;-webkit-text-stroke:0.39px #e6edf7;transform:scaleX(0.9510);transform-origin:0 0;">6s</div>
<svg class="r" style="left:917px;top:1273px;" width="86" height="48" viewBox="0 0 86 48"><rect width="86" height="48" fill="#d7cd9c"/><ellipse cx="21.7" cy="22.0" rx="7.7" ry="2.8" transform="rotate(0 21.7 22.0)" fill="#7f9a6c" opacity="0.75"/><ellipse cx="19.9" cy="26.9" rx="7.7" ry="2.8" transform="rotate(40 19.9 26.9)" fill="#7f9a6c" opacity="0.75"/><ellipse cx="15.3" cy="29.6" rx="7.7" ry="2.8" transform="rotate(80 15.3 29.6)" fill="#7f9a6c" opacity="0.75"/><ellipse cx="10.2" cy="28.7" rx="7.7" ry="2.8" transform="rotate(120 10.2 28.7)" fill="#7f9a6c" opacity="0.75"/><ellipse cx="6.8" cy="24.6" rx="7.7" ry="2.8" transform="rotate(160 6.8 24.6)" fill="#7f9a6c" opacity="0.75"/><ellipse cx="6.8" cy="19.4" rx="7.7" ry="2.8" transform="rotate(200 6.8 19.4)" fill="#7f9a6c" opacity="0.75"/><ellipse cx="10.1" cy="15.3" rx="7.7" ry="2.8" transform="rotate(240 10.1 15.3)" fill="#7f9a6c" opacity="0.75"/><ellipse cx="15.3" cy="14.4" rx="7.7" ry="2.8" transform="rotate(280 15.3 14.4)" fill="#7f9a6c" opacity="0.75"/><ellipse cx="19.9" cy="17.1" rx="7.7" ry="2.8" transform="rotate(320 19.9 17.1)" fill="#7f9a6c" opacity="0.75"/><circle cx="14" cy="22" r="4.9" fill="#5d7a52"/><ellipse cx="43.1" cy="14.0" rx="7.2" ry="2.6" transform="rotate(0 43.1 14.0)" fill="#7f9a6c" opacity="0.75"/><ellipse cx="41.5" cy="18.6" rx="7.2" ry="2.6" transform="rotate(40 41.5 18.6)" fill="#7f9a6c" opacity="0.75"/><ellipse cx="37.2" cy="21.0" rx="7.2" ry="2.6" transform="rotate(80 37.2 21.0)" fill="#7f9a6c" opacity="0.75"/><ellipse cx="32.4" cy="20.2" rx="7.2" ry="2.6" transform="rotate(120 32.4 20.2)" fill="#7f9a6c" opacity="0.75"/><ellipse cx="29.3" cy="16.4" rx="7.2" ry="2.6" transform="rotate(160 29.3 16.4)" fill="#7f9a6c" opacity="0.75"/><ellipse cx="29.3" cy="11.6" rx="7.2" ry="2.6" transform="rotate(200 29.3 11.6)" fill="#7f9a6c" opacity="0.75"/><ellipse cx="32.4" cy="7.8" rx="7.2" ry="2.6" transform="rotate(240 32.4 7.8)" fill="#7f9a6c" opacity="0.75"/><ellipse cx="37.2" cy="7.0" rx="7.2" ry="2.6" transform="rotate(280 37.2 7.0)" fill="#7f9a6c" opacity="0.75"/><ellipse cx="41.5" cy="9.4" rx="7.2" ry="2.6" transform="rotate(320 41.5 9.4)" fill="#7f9a6c" opacity="0.75"/><circle cx="36" cy="14" r="4.5" fill="#5d7a52"/><ellipse cx="59.7" cy="22.0" rx="7.7" ry="2.8" transform="rotate(0 59.7 22.0)" fill="#7f9a6c" opacity="0.75"/><ellipse cx="57.9" cy="26.9" rx="7.7" ry="2.8" transform="rotate(40 57.9 26.9)" fill="#7f9a6c" opacity="0.75"/><ellipse cx="53.3" cy="29.6" rx="7.7" ry="2.8" transform="rotate(80 53.3 29.6)" fill="#7f9a6c" opacity="0.75"/><ellipse cx="48.1" cy="28.7" rx="7.7" ry="2.8" transform="rotate(120 48.1 28.7)" fill="#7f9a6c" opacity="0.75"/><ellipse cx="44.8" cy="24.6" rx="7.7" ry="2.8" transform="rotate(160 44.8 24.6)" fill="#7f9a6c" opacity="0.75"/><ellipse cx="44.8" cy="19.4" rx="7.7" ry="2.8" transform="rotate(200 44.8 19.4)" fill="#7f9a6c" opacity="0.75"/><ellipse cx="48.1" cy="15.3" rx="7.7" ry="2.8" transform="rotate(240 48.1 15.3)" fill="#7f9a6c" opacity="0.75"/><ellipse cx="53.3" cy="14.4" rx="7.7" ry="2.8" transform="rotate(280 53.3 14.4)" fill="#7f9a6c" opacity="0.75"/><ellipse cx="57.9" cy="17.1" rx="7.7" ry="2.8" transform="rotate(320 57.9 17.1)" fill="#7f9a6c" opacity="0.75"/><circle cx="52" cy="22" r="4.9" fill="#5d7a52"/><ellipse cx="76.6" cy="14.0" rx="6.6" ry="2.4" transform="rotate(0 76.6 14.0)" fill="#7f9a6c" opacity="0.75"/><ellipse cx="75.1" cy="18.2" rx="6.6" ry="2.4" transform="rotate(40 75.1 18.2)" fill="#7f9a6c" opacity="0.75"/><ellipse cx="71.1" cy="20.5" rx="6.6" ry="2.4" transform="rotate(80 71.1 20.5)" fill="#7f9a6c" opacity="0.75"/><ellipse cx="66.7" cy="19.7" rx="6.6" ry="2.4" transform="rotate(120 66.7 19.7)" fill="#7f9a6c" opacity="0.75"/><ellipse cx="63.8" cy="16.3" rx="6.6" ry="2.4" transform="rotate(160 63.8 16.3)" fill="#7f9a6c" opacity="0.75"/><ellipse cx="63.8" cy="11.7" rx="6.6" ry="2.4" transform="rotate(200 63.8 11.7)" fill="#7f9a6c" opacity="0.75"/><ellipse cx="66.7" cy="8.3" rx="6.6" ry="2.4" transform="rotate(240 66.7 8.3)" fill="#7f9a6c" opacity="0.75"/><ellipse cx="71.1" cy="7.5" rx="6.6" ry="2.4" transform="rotate(280 71.1 7.5)" fill="#7f9a6c" opacity="0.75"/><ellipse cx="75.1" cy="9.8" rx="6.6" ry="2.4" transform="rotate(320 75.1 9.8)" fill="#7f9a6c" opacity="0.75"/><circle cx="70" cy="14" r="4.2" fill="#5d7a52"/><ellipse cx="36.6" cy="34.0" rx="6.6" ry="2.4" transform="rotate(0 36.6 34.0)" fill="#7f9a6c" opacity="0.75"/><ellipse cx="35.1" cy="38.2" rx="6.6" ry="2.4" transform="rotate(40 35.1 38.2)" fill="#7f9a6c" opacity="0.75"/><ellipse cx="31.1" cy="40.5" rx="6.6" ry="2.4" transform="rotate(80 31.1 40.5)" fill="#7f9a6c" opacity="0.75"/><ellipse cx="26.7" cy="39.7" rx="6.6" ry="2.4" transform="rotate(120 26.7 39.7)" fill="#7f9a6c" opacity="0.75"/><ellipse cx="23.8" cy="36.3" rx="6.6" ry="2.4" transform="rotate(160 23.8 36.3)" fill="#7f9a6c" opacity="0.75"/><ellipse cx="23.8" cy="31.7" rx="6.6" ry="2.4" transform="rotate(200 23.8 31.7)" fill="#7f9a6c" opacity="0.75"/><ellipse cx="26.7" cy="28.3" rx="6.6" ry="2.4" transform="rotate(240 26.7 28.3)" fill="#7f9a6c" opacity="0.75"/><ellipse cx="31.1" cy="27.5" rx="6.6" ry="2.4" transform="rotate(280 31.1 27.5)" fill="#7f9a6c" opacity="0.75"/><ellipse cx="35.1" cy="29.8" rx="6.6" ry="2.4" transform="rotate(320 35.1 29.8)" fill="#7f9a6c" opacity="0.75"/><circle cx="30" cy="34" r="4.2" fill="#5d7a52"/><ellipse cx="67.7" cy="36.0" rx="7.7" ry="2.8" transform="rotate(0 67.7 36.0)" fill="#7f9a6c" opacity="0.75"/><ellipse cx="65.9" cy="40.9" rx="7.7" ry="2.8" transform="rotate(40 65.9 40.9)" fill="#7f9a6c" opacity="0.75"/><ellipse cx="61.3" cy="43.6" rx="7.7" ry="2.8" transform="rotate(80 61.3 43.6)" fill="#7f9a6c" opacity="0.75"/><ellipse cx="56.1" cy="42.7" rx="7.7" ry="2.8" transform="rotate(120 56.1 42.7)" fill="#7f9a6c" opacity="0.75"/><ellipse cx="52.8" cy="38.6" rx="7.7" ry="2.8" transform="rotate(160 52.8 38.6)" fill="#7f9a6c" opacity="0.75"/><ellipse cx="52.8" cy="33.4" rx="7.7" ry="2.8" transform="rotate(200 52.8 33.4)" fill="#7f9a6c" opacity="0.75"/><ellipse cx="56.1" cy="29.3" rx="7.7" ry="2.8" transform="rotate(240 56.1 29.3)" fill="#7f9a6c" opacity="0.75"/><ellipse cx="61.3" cy="28.4" rx="7.7" ry="2.8" transform="rotate(280 61.3 28.4)" fill="#7f9a6c" opacity="0.75"/><ellipse cx="65.9" cy="31.1" rx="7.7" ry="2.8" transform="rotate(320 65.9 31.1)" fill="#7f9a6c" opacity="0.75"/><circle cx="60" cy="36" r="4.9" fill="#5d7a52"/><ellipse cx="83.5" cy="30.0" rx="5.5" ry="2.0" transform="rotate(0 83.5 30.0)" fill="#7f9a6c" opacity="0.75"/><ellipse cx="82.2" cy="33.5" rx="5.5" ry="2.0" transform="rotate(40 82.2 33.5)" fill="#7f9a6c" opacity="0.75"/><ellipse cx="79.0" cy="35.4" rx="5.5" ry="2.0" transform="rotate(80 79.0 35.4)" fill="#7f9a6c" opacity="0.75"/><ellipse cx="75.2" cy="34.8" rx="5.5" ry="2.0" transform="rotate(120 75.2 34.8)" fill="#7f9a6c" opacity="0.75"/><ellipse cx="72.8" cy="31.9" rx="5.5" ry="2.0" transform="rotate(160 72.8 31.9)" fill="#7f9a6c" opacity="0.75"/><ellipse cx="72.8" cy="28.1" rx="5.5" ry="2.0" transform="rotate(200 72.8 28.1)" fill="#7f9a6c" opacity="0.75"/><ellipse cx="75.2" cy="25.2" rx="5.5" ry="2.0" transform="rotate(240 75.2 25.2)" fill="#7f9a6c" opacity="0.75"/><ellipse cx="79.0" cy="24.6" rx="5.5" ry="2.0" transform="rotate(280 79.0 24.6)" fill="#7f9a6c" opacity="0.75"/><ellipse cx="82.2" cy="26.5" rx="5.5" ry="2.0" transform="rotate(320 82.2 26.5)" fill="#7f9a6c" opacity="0.75"/><circle cx="78" cy="30" r="3.5" fill="#5d7a52"/><path d="M60 48 L86 30 V40 L72 48Z" fill="#a7a27a" opacity="0.6"/></svg>
<div class="r" style="left:900px;top:1285px;width:24px;height:24px;background:#393c43;border-radius:3px;"></div>
<svg class="r" style="left:904px;top:1289px;" width="16" height="16" viewBox="0 0 16 16"><g fill="none" stroke="#e4e4e6" stroke-width="1.1" stroke-linecap="round" stroke-linejoin="round"><path d="M3.5 5 H1.5 V13.5 H11 V10.5"/><path d="M7.5 1.5 V6.5 M5 4 H10"/><path d="M11 7 L14.5 5.5 V12 L11 10.5"/></g></svg>
<div class="r" style="left:1000px;top:1285px;width:24px;height:24px;background:#393c43;border-radius:3px;"></div>
<svg class="r" style="left:1004px;top:1289px;" width="16" height="16" viewBox="0 0 16 16"><g fill="none" stroke="#e4e4e6" stroke-width="1.1" stroke-linecap="round" stroke-linejoin="round"><path d="M3.5 5 H1.5 V13.5 H11 V10.5"/><path d="M7.5 1.5 V6.5 M5 4 H10"/><path d="M11 7 L14.5 5.5 V12 L11 10.5"/></g></svg>
<div class="t" style="left:2063.60px;top:1142.93px;font-size:13.08px;color:#e8e8ea;-webkit-text-stroke:0.37px #e8e8ea;transform:scaleX(0.9893);transform-origin:0 0;">Export</div>
<div class="r" style="left:2252px;top:1130px;width:1px;height:39px;background:#2a2d34;"></div>
<svg class="r" style="left:2266px;top:1143px;" width="14" height="14" viewBox="0 0 14 14"><g fill="none" stroke="#e4e4e6" stroke-width="1.3" stroke-linecap="round" stroke-linejoin="round"><path d="M2 2 L12 12 M12 2 L2 12"/></g></svg>
<div class="r" style="left:2064px;top:1177px;width:216px;height:147px;background:#292c33;border-radius:3px;"></div>
<div class="r" style="left:2172px;top:1177px;width:108px;height:32px;background:#1f2229;border-top-right-radius:3px;"></div>
<div class="t" style="left:2101.90px;top:1187.68px;font-size:13.37px;color:#e8e8ea;-webkit-text-stroke:0.37px #e8e8ea;transform:scaleX(0.9510);transform-origin:0 0;">Video</div>
<div class="t" style="left:2197.90px;top:1187.68px;font-size:13.37px;color:#e8e8ea;-webkit-text-stroke:0.37px #e8e8ea;transform:scaleX(0.9313);transform-origin:0 0;">Sequence</div>
<div class="t" style="left:2075.80px;top:1222.08px;font-size:13.37px;color:#e8e8ea;-webkit-text-stroke:0.37px #e8e8ea;transform:scaleX(0.9333);transform-origin:0 0;">Format</div>
<div class="t" style="left:2176.00px;top:1222.08px;font-size:13.37px;color:#e8e8ea;-webkit-text-stroke:0.37px #e8e8ea;transform:scaleX(0.9370);transform-origin:0 0;">Resolution</div>
<div class="r" style="left:2076px;top:1248px;width:92px;height:30px;background:#30333a;border-radius:3px;"></div>
<div class="r" style="left:2176px;top:1248px;width:92px;height:30px;background:#30333a;border-radius:3px;"></div>
<div class="t" style="left:2088.00px;top:1255.78px;font-size:13.37px;color:#e8e8ea;-webkit-text-stroke:0.37px #e8e8ea;transform:scaleX(0.9478);transform-origin:0 0;">.mp4</div>
<div class="t" style="left:2188.00px;top:1255.78px;font-size:13.37px;color:#e8e8ea;-webkit-text-stroke:0.37px #e8e8ea;transform:scaleX(1.0159);transform-origin:0 0;">4k</div>
<svg class="r" style="left:2146px;top:1260px;" width="11" height="7" viewBox="0 0 11 7"><g fill="none" stroke="#cfd0d3" stroke-width="1.2" stroke-linecap="round" stroke-linejoin="round"><path d="M1 1.5 L5.5 5.5 L10 1.5"/></g></svg>
<svg class="r" style="left:2246px;top:1260px;" width="11" height="7" viewBox="0 0 11 7"><g fill="none" stroke="#cfd0d3" stroke-width="1.2" stroke-linecap="round" stroke-linejoin="round"><path d="M1 1.5 L5.5 5.5 L10 1.5"/></g></svg>
<div class="t" style="left:2075.80px;top:1290.78px;font-size:13.37px;color:#e8e8ea;-webkit-text-stroke:0.37px #e8e8ea;transform:scaleX(0.9150);transform-origin:0 0;">Frame Rate</div>
<div class="r" style="left:2076px;top:1316px;width:192px;height:8px;background:#30333a;border-radius:3px 3px 0 0;"></div>
<div class="r" style="left:2064px;top:1332px;width:82px;height:33px;background:#1f2229;"></div>
<div class="r" style="left:2157px;top:1332px;width:82px;height:33px;background:#1f2229;"></div>
<div class="r" style="left:2250px;top:1332px;width:30px;height:33px;background:#1f2229;"></div>
<svg class="r" style="left:2097px;top:1339px;" width="16" height="16" viewBox="0 0 16 16"><g fill="none" stroke="#d0d2d6" stroke-width="1.1" stroke-linecap="round" stroke-linejoin="round"><circle cx="8" cy="8" r="7"/><path d="M8 1 L10 6 M15 8 L10 9.5 M12.5 13.5 L8.5 10.5 M4.5 14 L6 9 M1 7 L6 6.5 M4.5 2 L8 5.5"/></g></svg>
<svg class="r" style="left:2190px;top:1337px;" width="18" height="18" viewBox="0 0 18 18"><g fill="none" stroke="#d0d2d6" stroke-width="1.2" stroke-linecap="round" stroke-linejoin="round"><path d="M11 4 H3 A1.5 1.5 0 0 0 1.5 5.5 V15 A1.5 1.5 0 0 0 3 16.5 H13 A1.5 1.5 0 0 0 14.5 15 V9"/><path d="M1.5 11 H5 C5 13 6.5 14 8 14 C9.5 14 11 13 11 11 H14.5"/></g><circle cx="14" cy="4" r="3.6" fill="#d0d2d6"/><path d="M14 2.2 V5.8 M12.2 4 H15.8" stroke="#1f2229" stroke-width="1.1"/></svg>
<svg class="r" style="left:2263px;top:1341px;" width="4" height="13" viewBox="0 0 4 13"><circle cx="2" cy="2" r="1.2" fill="#d0d2d6"/><circle cx="2" cy="6.5" r="1.2" fill="#d0d2d6"/><circle cx="2" cy="11" r="1.2" fill="#d0d2d6"/></svg>
<div class="r" style="left:2291px;top:4px;width:2px;height:1361px;background:#84a6c2;"></div>
<svg class="r" style="left:898px;top:277px;overflow:hidden;" width="1154" height="648" viewBox="0 0 1154 648"><defs>
<linearGradient id="sand" x1="0" y1="0" x2="0.3" y2="1"><stop offset="0" stop-color="#dad0a3"/><stop offset="1" stop-color="#d3c998"/></linearGradient>
<filter id="bl" x="-50%" y="-50%" width="200%" height="200%"><feGaussianBlur stdDeviation="16"/></filter>
<filter id="bl3" x="-50%" y="-50%" width="200%" height="200%"><feGaussianBlur stdDeviation="9"/></filter>
<filter id="bl2" x="-20%" y="-20%" width="140%" height="140%"><feGaussianBlur stdDeviation="5"/></filter><filter id="bl3s" x="-20%" y="-20%" width="140%" height="140%"><feGaussianBlur stdDeviation="2.5"/></filter>
<filter id="nz" x="0" y="0" width="100%" height="100%"><feTurbulence type="fractalNoise" baseFrequency="0.55" numOctaves="2" seed="7" result="t"/><feColorMatrix in="t" type="matrix" values="0 0 0 0 0.55  0 0 0 0 0.5  0 0 0 0 0.35  2.2 0 0 0 -1.0"/></filter>
<path id="f1" d="M484 149l13 11M484 149l10-6M487 148l12 10M487 148l9-6M490 148l14 13M490 148l12-6M493 147l14 14M493 147l13-6M497 147l15 15M497 147l13-6M500 147l12 14M500 147l12-5M503 147l14 16M503 147l14-5M506 147l14 17M506 147l15-5M510 147l16 20M510 147l18-5M513 147l18 24M513 147l21-6M516 148l18 24M516 148l21-5M520 148l15 22M520 148l19-4M523 149l14 21M523 149l18-4M526 149l13 20M526 149l17-3M530 150l12 19M530 150l16-2M533 151l11 19M533 151l16-2M537 151l14 24M537 151l20-2M540 152l13 23M540 152l19-2M544 153l13 24M544 153l20-2M547 154l16 29M547 154l25-2M551 155l13 26M551 155l22-1M554 156l13 26M554 156l22-1M558 157l11 23M558 157l19 0M562 159l10 21M562 159l17 0M565 160l11 24M565 160l20 0M569 161l10 22M569 161l18 0M572 163l11 26M572 163l21 1M576 164l13 31M576 164l26 1M579 166l12 27M579 166l22 1M583 167l9 22M583 167l18 1M586 169l12 29M586 169l24 2M590 170l11 27M590 170l22 2M594 172l10 26M594 172l21 2M597 173l11 27M597 173l22 2M601 175l10 25M601 175l21 2M604 177l9 24M604 177l20 2M608 178l7 20M608 178l16 2M611 180l9 24M611 180l20 2M615 182l8 23M615 182l19 2M618 184l6 16M618 184l13 2M621 185l7 19M621 185l16 2M625 187l6 18M625 187l14 2M628 189l5 15M628 189l12 2M632 191l5 14M632 191l11 2M635 193l4 12M635 193l10 1M638 194l4 12M638 194l10 1M641 196l3 8M641 196l6 1M645 198l2 6M645 198l5 1M648 200l0 0M648 200l0 0M651 202l0 0M651 202l0 0"/><path id="f2" d="M402 147l-7-4M402 147l-9 7M399 146l-10-5M399 146l-12 9M396 146l-12-5M396 146l-13 11M393 146l-12-5M393 146l-13 12M390 146l-12-4M390 146l-13 12M387 145l-10-3M387 145l-10 9M384 145l-12-3M384 145l-12 12M381 145l-15-4M381 145l-15 15M378 145l-16-4M378 145l-16 17M375 146l-15-3M375 146l-13 15M372 146l-15-3M372 146l-14 16M369 146l-16-3M369 146l-14 17M365 146l-14-2M365 146l-12 14M362 147l-17-2M362 147l-14 18M359 147l-15-2M359 147l-12 16M356 148l-19-2M356 148l-15 20M352 148l-16-1M352 148l-13 17M349 149l-18-1M349 149l-14 19M346 150l-17-1M346 150l-13 18M342 150l-17-1M342 150l-13 18M339 151l-16-1M339 151l-12 18M336 152l-20-1M336 152l-14 21M332 153l-18 0M332 153l-13 20M329 153l-16 0M329 153l-11 17M326 154l-16 0M326 154l-11 17M322 155l-18 0M322 155l-13 20M319 156l-17 0M319 156l-12 19M315 157l-16 0M315 157l-11 17M312 158l-17 0M312 158l-12 19M309 159l-12 0M309 159l-8 13M305 160l-14 1M305 160l-9 15M302 161l-13 1M302 161l-9 15M299 162l-12 1M299 162l-8 13M296 163l-14 1M296 163l-9 15M292 164l-13 1M292 164l-8 14M289 165l-9 1M289 165l-6 10M286 167l-9 1M286 167l-6 10M283 168l-8 1M283 168l-5 9M280 169l-7 0M280 169l-4 7M277 170l-4 0M277 170l-3 5M273 171l-2 0M273 171l-1 2M270 172l0 0M270 172l0 0"/><path id="f3" d="M396 143l-9-7M396 143l-13 11M393 143l-8-6M393 143l-11 10M390 142l-11-8M390 142l-14 14M387 142l-10-7M387 142l-13 13M384 141l-10-6M384 141l-13 13M381 141l-12-7M381 141l-14 15M378 141l-14-7M378 141l-15 17M375 141l-15-8M375 141l-16 18M372 140l-14-7M372 140l-15 18M369 140l-15-7M369 140l-15 18M365 140l-14-6M365 140l-14 17M362 140l-12-5M362 140l-12 15M359 141l-15-6M359 141l-14 19M356 141l-13-5M356 141l-12 16M352 141l-19-7M352 141l-17 24M349 141l-16-5M349 141l-13 19M346 142l-18-5M346 142l-15 22M342 142l-19-6M342 142l-15 23M339 142l-15-4M339 142l-12 18M336 143l-20-5M336 143l-16 24M332 143l-16-4M332 143l-13 20M329 144l-14-3M329 144l-11 18M325 144l-18-4M325 144l-14 23M322 145l-17-4M322 145l-12 21M319 146l-21-4M319 146l-15 25M315 146l-17-3M315 146l-12 21M312 147l-14-3M312 147l-10 18M308 148l-14-2M308 148l-9 17M305 149l-13-2M305 149l-9 17M302 149l-16-3M302 149l-11 20M298 150l-18-3M298 150l-12 22M295 151l-13-2M295 151l-8 16M291 152l-14-2M291 152l-9 18M288 153l-15-2M288 153l-9 18M285 154l-17-2M285 154l-10 21M281 155l-16-2M281 155l-10 20M278 156l-15-2M278 156l-9 19M275 157l-13-1M275 157l-8 16M271 158l-12-1M271 158l-7 15M268 159l-9-1M268 159l-6 12M265 160l-10-1M265 160l-6 12M262 161l-7-1M262 161l-4 9M258 162l-7-1M258 162l-4 8M255 163l-7-1M255 163l-4 8M252 164l-4 0M252 164l-2 5M249 165l0 0M249 165l0 0M246 166l0 0M246 166l0 0"/><path id="f4" d="M398 151l-10-3M398 151l-11 9M395 151l-13-4M395 151l-13 12M393 151l-13-3M393 151l-13 12M390 151l-13-3M390 151l-13 13M387 151l-12-2M387 151l-11 12M384 151l-16-2M384 151l-15 16M381 152l-12-1M381 152l-10 12M378 152l-14-1M378 152l-12 14M375 152l-18-1M375 152l-15 18M372 153l-19-1M372 153l-15 20M369 153l-16 0M369 153l-13 17M366 154l-20 0M366 154l-15 21M363 155l-15 0M363 155l-11 16M360 156l-19 1M360 156l-13 20M357 157l-15 1M357 157l-10 16M354 158l-17 1M354 158l-11 18M351 159l-16 2M351 159l-11 18M348 160l-15 2M348 160l-10 16M345 161l-18 2M345 161l-12 20M341 162l-19 3M341 162l-12 21M338 163l-17 3M338 163l-11 19M335 165l-20 4M335 165l-12 23M332 166l-15 3M332 166l-9 17M329 167l-19 4M329 167l-11 22M326 169l-19 4M326 169l-11 22M322 170l-18 4M322 170l-10 20M319 172l-22 5M319 172l-12 25M316 174l-15 4M316 174l-8 17M313 175l-17 4M313 175l-9 20M310 177l-17 4M310 177l-9 20M307 179l-16 4M307 179l-8 19M303 180l-20 6M303 180l-10 23M300 182l-16 5M300 182l-8 19M297 184l-16 5M297 184l-8 18M294 186l-14 4M294 186l-7 17M291 188l-14 4M291 188l-7 16M288 189l-16 5M288 189l-8 19M285 191l-14 5M285 191l-7 17M282 193l-13 4M282 193l-6 15M279 195l-9 3M279 195l-4 11M276 197l-10 3M276 197l-5 12M273 199l-7 3M273 199l-3 9M270 201l-7 2M270 201l-3 8M267 203l-5 2M267 203l-2 6M264 205l-4 2M264 205l-2 5M261 207l0 0M261 207l0 0M258 208l0 0M258 208l0 0"/><path id="f5" d="M435 105l6-6M435 105l-6-6M435 102l8-9M435 102l-9-8M435 99l8-8M435 99l-9-8M434 95l7-8M434 95l-8-7M434 92l7-8M434 92l-8-7M434 89l6-7M434 89l-8-6M434 86l8-9M434 86l-9-8M434 83l10-12M434 83l-13-10M433 80l8-10M433 80l-11-8M433 77l9-11M433 77l-12-9M433 74l10-13M433 74l-13-10M433 71l7-9M433 71l-10-7M432 68l8-10M432 68l-11-8M432 65l8-11M432 65l-12-9M432 62l8-10M432 62l-11-8M431 59l8-11M431 59l-12-9M431 56l9-13M431 56l-14-10M431 53l7-10M431 53l-11-8M430 50l9-13M430 50l-15-10M430 47l8-11M430 47l-13-8M429 44l9-13M429 44l-15-10M429 42l7-11M429 42l-12-8M428 39l9-14M428 39l-16-10M428 36l8-12M428 36l-13-8M427 33l9-14M427 33l-16-10M427 31l9-15M427 31l-17-10M426 28l8-13M426 28l-14-9M426 25l6-10M426 25l-11-7M425 22l7-12M425 22l-13-8M425 20l8-14M425 20l-16-9M424 17l7-13M424 17l-14-8M424 14l7-13M424 14l-15-8M423 12l6-11M423 12l-13-7M422 9l7-13M422 9l-15-8M422 6l7-13M422 6l-14-8M421 4l6-11M421 4l-13-7M421 1l6-11M421 1l-12-6M420-2l4-8M420-2l-9-5M419-4l4-7M419-4l-8-4M419-7l4-8M419-7l-9-5M418-9l5-9M418-9l-10-5M417-12l4-9M417-12l-10-5M417-15l4-8M417-15l-9-5M416-17l4-8M416-17l-9-4M415-20l2-5M415-20l-5-3M415-22l2-4M415-22l-4-2M414-25l2-3M414-25l-4-2M413-27l1-2M413-27l-2-1M413-30l0 0M413-30l0 0M412-32l0 0M412-32l0 0"/><path id="f6" d="M408 184l-12 7M408 184l-4 16M406 186l-12 7M406 186l-3 16M404 188l-16 10M404 188l-4 22M402 190l-16 10M402 190l-3 22M401 192l-14 9M401 192l-3 19M399 194l-20 14M399 194l-3 28M397 197l-21 15M397 197l-3 29M395 199l-21 15M395 199l-3 29M393 202l-18 14M393 202l-2 25M391 204l-17 13M391 204l-2 24M389 207l-16 13M389 207l-1 24M387 210l-22 18M387 210l-1 31M385 213l-21 17M385 213l-1 30M383 216l-17 15M383 216l-1 26M381 219l-23 20M381 219l0 33M379 222l-20 18M379 222l0 30M377 226l-19 17M377 226l0 28M375 229l-19 17M375 229l0 28M373 232l-21 20M373 232l1 32M371 236l-19 18M371 236l1 29M369 239l-21 20M369 239l1 32M368 243l-16 16M368 243l1 25M366 247l-21 21M366 247l1 32M364 250l-17 17M364 250l1 27M362 254l-22 22M362 254l2 34M360 258l-16 17M360 258l2 26M358 262l-17 18M358 262l2 27M356 266l-18 19M356 266l2 29M354 270l-17 18M354 270l2 27M353 274l-18 19M353 274l2 28M351 278l-20 22M351 278l3 32M349 282l-15 16M349 282l2 23M347 286l-18 20M347 286l3 29M345 290l-17 19M345 290l3 28M344 294l-17 19M344 294l3 28M342 298l-15 16M342 298l2 23M340 302l-14 16M340 302l2 23M338 306l-13 15M338 306l2 21M337 310l-13 15M337 310l2 21M335 315l-11 13M335 315l2 18M333 319l-10 12M333 319l2 17M332 323l-11 13M332 323l2 18M330 327l-9 10M330 327l2 15M328 331l-9 11M328 331l2 15M327 335l-9 10M327 335l2 14M325 339l-7 8M325 339l1 11M324 344l-5 6M324 344l1 9M322 348l-5 6M322 348l1 8M321 352l-3 4M321 352l1 6M319 356l0 0M319 356l0 0M318 360l0 0M318 360l0 0"/><path id="f7" d="M458 192l-3 22M458 192l14 14M458 194l-2 16M458 194l11 11M459 196l-3 19M459 196l13 13M460 198l-2 17M460 198l11 11M461 201l-2 18M461 201l12 12M462 203l-4 26M462 203l17 17M464 205l-4 28M464 205l18 18M465 208l-4 25M465 208l17 17M466 211l-3 21M466 211l14 14M467 213l-3 23M467 213l15 15M468 216l-3 23M468 216l15 15M469 219l-4 28M469 219l18 19M470 221l-4 29M470 221l19 19M472 224l-4 26M472 224l17 17M473 227l-4 28M473 227l18 18M474 230l-3 23M474 230l15 15M476 233l-4 29M476 233l19 19M477 236l-5 34M477 236l22 22M478 240l-5 32M478 240l21 21M480 243l-3 24M480 243l16 16M481 246l-4 29M481 246l19 19M482 249l-5 32M482 249l21 21M484 252l-4 26M484 252l17 17M485 256l-5 34M485 256l22 23M486 259l-4 29M486 259l19 19M488 263l-4 32M488 263l21 21M489 266l-4 28M489 266l18 19M491 269l-5 35M491 269l23 23M492 273l-5 32M492 273l21 21M494 276l-4 30M494 276l19 20M495 280l-3 24M495 280l16 16M497 283l-4 28M497 283l18 18M498 287l-3 22M498 287l15 15M500 290l-4 29M500 290l19 19M501 294l-4 32M501 294l21 21M503 298l-3 23M503 298l15 15M505 301l-4 27M505 301l17 17M506 305l-3 26M506 305l17 17M508 308l-3 24M508 308l16 16M509 312l-4 27M509 312l18 18M511 316l-4 29M511 316l19 19M512 319l-3 26M512 319l17 17M514 323l-3 23M514 323l15 15M516 326l-3 26M516 326l17 17M517 330l-2 20M517 330l13 13M519 333l-3 23M519 333l15 15M520 337l-3 21M520 337l14 13M522 340l-3 21M522 340l14 13M524 344l-2 20M524 344l13 13M525 348l-2 15M525 348l10 9M527 351l-2 16M527 351l11 10M529 354l-2 13M529 354l9 8M530 358l-1 13M530 358l9 8M532 361l-1 13M532 361l9 8M533 365l-1 9M533 365l6 6M535 368l-1 5M535 368l4 3M537 371l0 3M537 371l2 2M538 375l0 0M538 375l0 0M540 378l0 0M540 378l0 0"/><path id="f8" d="M446 117l6-3M446 117l-3-5M447 114l9-4M447 114l-4-8M448 111l10-5M448 111l-4-8M449 107l10-5M449 107l-4-8M450 104l10-5M450 104l-4-8M451 101l8-4M451 101l-3-7M451 98l9-4M451 98l-4-8M452 95l9-4M452 95l-4-8M453 92l10-5M453 92l-4-8M454 89l10-5M454 89l-4-8M455 86l12-6M455 86l-5-10M455 83l12-6M455 83l-5-11M456 80l10-5M456 80l-4-9M457 77l14-6M457 77l-6-12M458 74l9-4M458 74l-4-8M459 71l14-6M459 71l-6-12M459 68l12-6M459 68l-5-10M460 66l12-6M460 66l-5-11M461 63l10-5M461 63l-4-9M462 60l12-6M462 60l-5-10M462 57l13-6M462 57l-5-11M463 55l9-4M463 55l-4-8M464 52l9-4M464 52l-4-8M465 50l11-5M465 50l-5-10M465 47l9-4M465 47l-4-7M466 44l8-4M466 44l-3-7M467 42l9-4M467 42l-4-7M467 39l7-3M467 39l-3-6M468 37l6-3M468 37l-3-6M469 34l6-3M469 34l-3-5M469 32l5-2M469 32l-2-4M470 29l5-3M470 29l-3-5M470 27l4-2M470 27l-2-3M471 25l2-1M471 25l-1-2M471 22l0 0M471 22l0 0"/><path id="f9" d="M419 117l1-6M419 117l-8-1M417 114l1-7M417 114l-9-1M416 112l1-8M416 112l-10-1M414 109l1-9M414 109l-11-1M412 106l1-10M412 106l-13-2M411 103l1-11M411 103l-14-2M409 101l0-9M409 101l-12-1M407 98l0-11M407 98l-14-1M406 96l0-10M406 96l-13-1M404 93l0-10M404 93l-13-1M402 90l0-10M402 90l-13-1M401 88l0-14M401 88l-18-2M399 85l0-14M399 85l-18-1M397 83l0-13M397 83l-18-1M396 81l0-10M396 81l-14-1M394 78l0-10M394 78l-14-1M392 76l0-10M392 76l-13-1M391 73l0-11M391 73l-15-1M389 71l0-11M389 71l-15-1M387 69l0-9M387 69l-12-1M386 67l0-11M386 67l-15-1M384 64l0-12M384 64l-16-1M383 62l0-13M383 62l-17-1M381 60l0-10M381 60l-13-1M379 58l0-8M379 58l-11-1M378 55l0-12M378 55l-16-1M376 53l0-10M376 53l-13-1M375 51l0-9M375 51l-12-1M373 49l0-8M373 49l-10-1M372 47l0-8M372 47l-10-1M370 45l0-7M370 45l-10-1M369 43l0-7M369 43l-9-1M367 41l0-6M367 41l-8-1M366 39l0-6M366 39l-8-1M365 37l0-6M365 37l-8-1M363 35l0-4M363 35l-5 0M362 33l0-3M362 33l-4 0M361 31l0-1M361 31l-2 0M359 29l0 0M359 29l0 0"/><path id="f10" d="M406 124l-2-7M406 124l-11 3M403 122l-3-10M403 122l-14 5M401 120l-3-8M401 120l-12 4M398 118l-3-9M398 118l-13 4M395 116l-4-10M395 116l-15 5M393 114l-5-12M393 114l-18 7M390 112l-5-11M390 112l-16 6M387 110l-4-9M387 110l-14 5M385 109l-6-13M385 109l-20 8M382 107l-6-12M382 107l-18 8M379 105l-7-13M379 105l-20 9M376 104l-6-10M376 104l-16 7M374 102l-6-11M374 102l-17 8M371 100l-6-10M371 100l-15 7M368 99l-6-10M368 99l-16 8M365 97l-7-12M365 97l-18 9M363 96l-7-12M363 96l-18 9M360 94l-8-13M360 94l-20 10M357 93l-9-14M357 93l-22 11M354 91l-7-11M354 91l-17 9M352 90l-9-14M352 90l-22 12M349 89l-9-12M349 89l-20 11M346 87l-8-11M346 87l-17 9M344 86l-7-10M344 86l-16 9M341 85l-10-13M341 85l-21 12M338 84l-9-11M338 84l-18 10M336 83l-6-8M336 83l-14 8M333 81l-8-11M333 81l-18 10M330 80l-7-9M330 80l-15 9M328 79l-7-9M328 79l-15 9M325 78l-8-10M325 78l-16 10M323 77l-6-7M323 77l-12 7M320 76l-6-7M320 76l-12 7M318 75l-6-7M318 75l-12 8M315 74l-7-8M315 74l-13 8M313 73l-4-5M313 73l-8 5M310 72l-5-6M310 72l-10 7M308 71l-4-5M308 71l-9 5M306 70l-3-3M306 70l-6 3M303 69l-3-3M303 69l-5 3M301 68l-1-1M301 68l-2 1M299 67l0 0M299 67l0 0"/><path id="f11" d="M468 122l12 2M468 122l3-8M471 120l14 2M471 120l3-10M473 117l11 2M473 117l3-7M476 115l15 3M476 115l4-10M478 113l15 3M478 113l4-10M481 111l15 3M481 111l4-10M483 109l14 3M483 109l4-9M486 107l15 3M486 107l5-10M488 105l19 4M488 105l6-12M491 103l21 5M491 103l7-13M494 101l22 5M494 101l7-14M496 99l20 5M496 99l7-13M499 97l22 6M499 97l7-14M501 95l22 6M501 95l8-14M504 93l17 5M504 93l6-10M506 92l21 6M506 92l8-13M509 90l22 7M509 90l8-14M511 88l22 7M511 88l8-14M514 86l18 5M514 86l7-11M517 85l21 7M517 85l8-13M519 83l18 6M519 83l7-11M522 81l19 6M522 81l7-12M524 80l21 7M524 80l8-13M527 78l20 7M527 78l8-12M529 77l16 5M529 77l6-10M532 75l19 7M532 75l8-12M534 74l14 5M534 74l6-9M537 72l15 5M537 72l6-9M539 71l19 7M539 71l8-12M541 69l19 7M541 69l8-12M544 68l14 5M544 68l6-9M546 66l17 6M546 66l7-10M549 65l12 4M549 65l5-8M551 63l14 5M551 63l6-8M553 62l12 4M553 62l5-7M555 61l10 3M555 61l4-6M558 59l10 4M558 59l4-6M560 58l10 3M560 58l4-6M562 57l9 3M562 57l4-6M564 55l6 2M564 55l2-3M566 54l4 1M566 54l2-3M568 53l1 0M568 53l0-1M571 51l0 0M571 51l0 0"/><path id="f12" d="M469 163l5 10M469 163l8-1M472 164l6 11M472 164l9-1M475 165l7 15M475 165l12 0M477 166l6 14M477 166l12 0M480 167l5 13M480 167l10 1M483 168l7 20M483 168l16 2M485 169l5 15M485 169l12 2M488 171l4 15M488 171l12 2M491 172l5 18M491 172l14 3M493 174l5 21M493 174l16 4M496 176l5 22M496 176l18 4M499 178l4 17M499 178l14 4M501 180l4 20M501 180l15 4M504 182l3 17M504 182l13 4M507 184l3 21M507 184l17 5M510 187l4 24M510 187l19 7M512 189l3 24M512 189l19 7M515 191l3 26M515 191l20 8M518 194l3 24M518 194l19 8M521 197l2 25M521 197l19 8M523 199l2 24M523 199l18 8M526 202l2 21M526 202l16 7M529 205l1 19M529 205l14 7M531 208l1 22M531 208l17 8M534 211l1 19M534 211l14 7M537 214l1 17M537 214l13 6M539 217l1 19M539 217l14 7M542 220l0 22M542 220l16 9M545 223l0 15M545 223l12 6M547 226l0 18M547 226l14 7M550 230l0 16M550 230l12 7M552 233l0 16M552 233l12 7M555 236l0 13M555 236l9 5M557 239l0 16M557 239l12 7M560 243l0 11M560 243l8 5M562 246l0 12M562 246l9 5M565 249l0 9M565 249l7 4M567 253l0 6M567 253l5 3M569 256l0 6M569 256l4 3M572 259l0 2M572 259l1 1M574 263l0 0M574 263l0 0"/><path id="f13" d="M470 129l11 3M470 129l3-7M472 127l13 4M472 127l4-9M475 125l12 4M475 125l4-8M477 123l10 4M477 123l4-7M480 122l16 7M480 122l6-10M483 120l16 7M483 120l7-10M486 118l16 8M486 118l7-10M488 117l18 9M488 117l8-11M491 116l15 8M491 116l7-9M494 114l15 9M494 114l8-9M497 113l17 10M497 113l9-10M500 112l19 12M500 112l11-10M503 111l15 9M503 111l9-8M506 110l18 12M506 110l11-10M509 109l19 14M509 109l12-10M512 108l14 10M512 108l10-7M515 107l13 10M515 107l9-6M518 107l13 11M518 107l10-7M522 106l16 13M522 106l12-8M525 105l13 11M525 105l10-6M528 105l18 15M528 105l14-8M531 104l12 11M531 104l10-6M534 104l16 15M534 104l13-7M537 104l13 12M537 104l11-6M540 103l15 15M540 103l13-7M544 103l12 11M544 103l10-5M547 103l10 10M547 103l9-4M550 103l12 12M550 103l11-5M553 102l10 10M553 102l9-4M556 102l12 12M556 102l11-5M559 102l10 11M559 102l10-4M562 102l7 8M562 102l7-3M565 102l7 8M565 102l7-3M568 102l6 7M568 102l7-2M571 102l6 7M571 102l6-2M574 102l3 4M574 102l4-1M577 102l2 2M577 102l2-1M580 103l0 0M580 103l0 0"/><path id="f14" d="M461 109l11-3M461 109l-2-9M463 106l11-2M463 106l-2-9M464 103l15-3M464 103l-2-11M466 100l16-2M466 100l-2-12M468 97l16-2M468 97l-2-13M469 95l14-1M469 95l-1-11M471 92l18-1M471 92l-1-13M473 89l14-1M473 89l0-10M475 86l19-1M475 86l0-14M476 84l14 0M476 84l0-11M478 81l15 0M478 81l1-11M480 79l16 0M480 79l1-11M482 76l21 1M482 76l2-15M484 74l24 1M484 74l2-17M486 72l20 2M486 72l2-14M488 69l21 2M488 69l3-15M490 67l21 3M490 67l3-15M492 65l24 3M492 65l4-16M494 63l25 4M494 63l5-17M497 61l24 4M497 61l5-16M499 59l19 4M499 59l4-13M501 57l17 4M501 57l4-11M503 55l24 5M503 55l6-16M506 53l19 4M506 53l5-12M508 52l22 6M508 52l7-15M510 50l23 6M510 50l7-15M512 48l17 5M512 48l6-11M515 46l17 5M515 46l6-11M517 45l18 6M517 45l6-12M519 43l21 7M519 43l8-13M522 42l21 7M522 42l8-13M524 40l21 8M524 40l8-13M526 39l15 6M526 39l6-9M529 37l17 7M529 37l7-10M531 36l18 7M531 36l8-11M534 35l14 6M534 35l6-8M536 33l14 6M536 33l6-9M538 32l11 5M538 32l5-7M541 31l14 6M541 31l6-8M543 30l10 5M543 30l5-6M546 29l9 4M546 29l5-5M548 27l9 4M548 27l4-5M550 26l6 3M550 26l3-3M553 25l5 2M553 25l3-3M555 24l0 0M555 24l0 0M557 23l0 0M557 23l0 0"/><path id="f15" d="M401 124l-6-9M401 124l-14 3M398 122l-6-9M398 122l-14 3M395 120l-7-10M395 120l-16 4M393 118l-6-9M393 118l-14 3M390 117l-6-8M390 117l-13 3M388 115l-9-12M388 115l-20 5M385 113l-7-9M385 113l-15 4M382 111l-8-10M382 111l-17 5M380 110l-7-9M380 110l-16 4M377 108l-9-11M377 108l-20 6M374 106l-9-11M374 106l-19 6M372 105l-8-10M372 105l-17 5M369 103l-8-9M369 103l-16 5M366 102l-9-11M366 102l-19 6M363 100l-12-13M363 100l-23 8M361 99l-9-10M361 99l-18 6M358 97l-10-11M358 97l-19 6M355 96l-12-13M355 96l-22 8M352 94l-12-13M352 94l-23 8M350 93l-13-13M350 93l-24 9M347 91l-12-13M347 91l-23 8M344 90l-13-14M344 90l-25 9M341 88l-10-10M341 88l-18 7M339 87l-13-14M339 87l-25 9M336 85l-9-9M336 85l-17 6M333 84l-10-10M333 84l-18 7M330 83l-9-10M330 83l-17 6M328 81l-12-13M328 81l-23 9M325 80l-11-11M325 80l-20 8M322 79l-13-13M322 79l-24 9M319 77l-13-13M319 77l-24 9M317 76l-12-13M317 76l-23 9M314 74l-11-11M314 74l-20 7M311 73l-9-9M311 73l-17 6M309 72l-11-12M309 72l-21 8M306 70l-10-10M306 70l-19 7M303 69l-8-8M303 69l-15 5M301 68l-9-9M301 68l-16 6M298 66l-6-7M298 66l-12 4M296 65l-6-6M296 65l-12 4M293 64l-7-8M293 64l-14 5M291 62l-7-8M291 62l-14 5M288 61l-7-8M288 61l-13 5M286 60l-6-7M286 60l-12 4M283 58l-4-4M283 58l-8 3M281 57l-4-5M281 57l-9 3M278 56l-4-4M278 56l-7 2M276 54l-2-2M276 54l-4 1M274 53l0 0M274 53l0 0M271 51l0 0M271 51l0 0"/><path id="f16" d="M420 191l-12 12M420 191l1 18M419 193l-10 10M419 193l1 16M418 196l-11 12M418 196l2 18M417 198l-16 17M417 198l2 25M415 201l-16 17M415 201l3 25M414 203l-15 16M414 203l3 23M413 206l-16 17M413 206l3 25M412 209l-18 19M412 209l3 28M411 212l-13 15M411 212l3 21M410 214l-16 18M410 214l3 26M408 217l-14 16M408 217l3 22M407 221l-14 16M407 221l3 22M406 224l-14 16M406 224l3 23M405 227l-15 17M405 227l3 24M404 230l-14 16M404 230l3 23M402 233l-15 18M402 233l4 25M401 237l-16 19M401 237l4 27M400 240l-18 22M400 240l5 30M399 244l-20 24M399 244l5 33M397 247l-21 25M397 247l5 34M396 251l-19 23M396 251l5 32M395 254l-18 21M395 254l5 29M394 258l-21 25M394 258l6 34M392 262l-15 18M392 262l4 25M391 266l-15 18M391 266l4 24M390 269l-20 24M390 269l6 33M388 273l-18 22M388 273l5 30M387 277l-15 18M387 277l4 25M386 281l-16 20M386 281l5 27M384 285l-15 19M384 285l4 26M383 289l-16 20M383 289l5 27M382 293l-16 20M382 293l5 26M381 296l-15 19M381 296l5 26M379 300l-18 22M379 300l5 30M378 304l-17 22M378 304l5 29M377 308l-15 19M377 308l5 26M375 312l-14 18M375 312l4 24M374 316l-13 16M374 316l4 22M373 320l-15 19M373 320l5 26M371 324l-16 20M371 324l5 27M370 328l-11 14M370 328l3 19M369 332l-13 17M369 332l4 22M368 336l-13 16M368 336l4 21M366 340l-12 15M366 340l4 20M365 343l-8 10M365 343l2 14M364 347l-10 12M364 347l3 16M362 351l-8 10M362 351l2 13M361 355l-7 9M361 355l2 12M360 359l-7 9M360 359l2 12M359 362l-6 8M359 362l2 10M358 366l-5 6M358 366l1 8M356 369l-3 4M356 369l1 5M355 373l0 0M355 373l0 0M354 377l0 0M354 377l0 0"/><path id="f17" d="M401 136l-5-6M401 136l-10 6M398 134l-5-6M398 134l-11 7M395 133l-8-9M395 133l-14 10M391 132l-8-9M391 132l-15 10M388 131l-7-7M388 131l-12 9M385 130l-9-9M385 130l-15 11M382 129l-8-8M382 129l-13 10M379 128l-11-10M379 128l-17 14M376 127l-11-9M376 127l-16 13M372 127l-11-9M372 127l-16 13M369 126l-9-7M369 126l-14 12M366 125l-11-8M366 125l-15 14M362 125l-12-9M362 125l-16 14M359 124l-11-8M359 124l-15 14M356 123l-11-7M356 123l-14 13M352 123l-11-7M352 123l-14 14M349 122l-14-9M349 122l-17 17M346 122l-15-10M346 122l-19 19M342 121l-15-9M342 121l-18 18M339 121l-14-8M339 121l-16 17M335 121l-15-9M335 121l-17 18M332 120l-11-6M332 120l-13 14M329 120l-12-6M329 120l-13 14M325 120l-14-8M325 120l-16 17M322 120l-10-5M322 120l-11 12M318 119l-10-5M318 119l-11 13M315 119l-14-7M315 119l-15 17M312 119l-10-5M312 119l-11 13M308 119l-10-5M308 119l-11 12M305 119l-11-5M305 119l-11 13M302 119l-12-6M302 119l-13 15M298 119l-8-4M298 119l-8 10M295 119l-11-5M295 119l-12 14M292 119l-8-4M292 119l-8 10M288 118l-8-4M288 118l-9 10M285 118l-7-3M285 118l-7 9M282 118l-5-2M282 118l-5 6M279 118l-6-3M279 118l-6 7M276 118l-3-1M276 118l-3 4M273 118l-2-1M273 118l-2 2M270 118l0 0M270 118l0 0"/><path id="f18" d="M469 117l12 0M469 117l1-9M471 115l16 1M471 115l1-11M473 112l17 1M473 112l2-12M475 110l12 1M475 110l2-8M477 108l15 2M477 108l2-10M479 105l16 2M479 105l3-11M482 103l18 3M482 103l4-12M484 101l18 3M484 101l4-12M486 99l20 4M486 99l5-14M489 97l15 4M489 97l4-10M491 95l19 5M491 95l5-12M493 94l22 6M493 94l7-14M496 92l17 5M496 92l6-11M498 90l17 6M498 90l6-11M501 88l21 7M501 88l8-13M503 87l17 6M503 87l7-11M506 85l21 8M506 85l9-13M508 84l17 7M508 84l7-10M511 82l18 8M511 82l8-11M513 81l19 8M513 81l9-11M516 80l23 11M516 80l11-13M519 78l21 10M519 78l11-12M521 77l21 11M521 77l11-12M524 76l21 11M524 76l11-12M527 75l19 10M527 75l10-10M529 74l23 13M529 74l13-13M532 73l20 11M532 73l12-11M535 72l19 12M535 72l12-10M538 71l15 9M538 71l9-8M540 70l16 10M540 70l10-8M543 69l18 12M543 69l12-9M546 68l20 13M546 68l13-10M548 67l17 12M548 67l12-9M551 67l12 9M551 67l9-6M554 66l17 12M554 66l12-8M557 65l12 9M557 65l9-6M559 65l14 10M559 65l10-6M562 64l11 8M562 64l8-5M565 64l9 7M565 64l7-4M567 63l12 9M567 63l9-5M570 63l9 8M570 63l7-4M573 62l9 7M573 62l7-4M575 62l8 6M575 62l6-3M578 62l6 5M578 62l5-2M581 61l4 3M581 61l3-2M583 61l0 0M583 61l0 0M586 61l0 0M586 61l0 0"/><path id="f19" d="M477 164l6 12M477 164l11 1M480 165l7 14M480 165l12 1M482 166l8 18M482 166l15 1M485 167l7 15M485 167l13 1M488 169l10 21M488 169l18 2M491 170l7 17M491 170l15 2M494 171l10 23M494 171l20 3M497 173l8 19M497 173l16 2M500 174l10 25M500 174l21 3M503 176l9 23M503 176l20 3M506 177l9 22M506 177l19 3M509 179l9 23M509 179l19 3M513 181l9 24M513 181l20 4M516 183l9 24M516 183l20 4M519 184l8 22M519 184l18 4M522 186l7 21M522 186l17 4M526 188l8 24M526 188l20 4M529 190l10 28M529 190l23 5M532 192l9 25M532 192l21 5M536 194l7 20M536 194l16 4M539 196l9 27M539 196l22 5M543 198l9 26M543 198l21 5M546 200l9 27M546 200l22 5M549 202l7 20M549 202l16 4M553 204l8 25M553 204l21 5M556 206l6 18M556 206l15 4M560 208l8 23M560 208l19 5M563 211l6 19M563 211l16 4M567 213l6 18M567 213l15 4M570 215l7 23M570 215l19 5M574 217l5 16M574 217l13 3M577 219l6 19M577 219l15 4M580 221l6 20M580 221l16 4M584 223l5 15M584 223l12 3M587 226l4 14M587 226l11 3M591 228l5 17M591 228l14 3M594 230l4 13M594 230l10 3M597 232l4 13M597 232l10 3M601 234l3 8M601 234l7 2M604 236l2 8M604 236l6 2M607 238l2 5M607 238l4 1M610 240l0 1M610 240l1 0M614 242l0 0M614 242l0 0"/><path id="f20" d="M451 106l8-5M451 106l-4-8M451 103l10-6M451 103l-5-9M452 100l10-6M452 100l-5-10M453 97l10-6M453 97l-4-9M454 94l13-7M454 94l-5-12M454 91l13-7M454 91l-4-11M455 88l15-8M455 88l-5-14M456 85l13-6M456 85l-4-11M457 82l15-7M457 82l-4-13M458 79l12-5M458 79l-3-10M459 76l15-6M459 76l-4-13M460 73l16-6M460 73l-3-14M461 71l14-5M461 71l-3-12M462 68l17-6M462 68l-3-14M463 65l14-5M463 65l-2-12M465 63l17-5M465 63l-2-14M466 60l18-5M466 60l-2-15M467 58l17-5M467 58l-2-14M468 55l15-4M468 55l-1-12M469 53l16-4M469 53l-1-13M471 50l17-4M471 50l-1-14M472 48l19-4M472 48l-1-16M473 46l18-4M473 46l0-14M475 44l16-3M475 44l0-13M476 41l17-3M476 41l0-14M477 39l17-3M477 39l1-13M479 37l16-2M479 37l1-12M480 35l19-2M480 35l1-15M482 33l18-2M482 33l1-14M483 31l17-2M483 31l2-13M485 29l14-1M485 29l1-11M486 26l21-2M486 26l2-15M488 25l14-1M488 25l2-10M489 23l14-1M489 23l2-10M491 21l15-1M491 21l2-11M492 19l18-1M492 19l3-13M494 17l18 0M494 17l3-13M495 15l16 0M495 15l3-12M497 13l12 0M497 13l2-9M499 12l15 0M499 12l3-11M500 10l10 0M500 10l2-7M502 8l10 0M502 8l2-7M503 6l9 0M503 6l2-6M505 5l10 1M505 5l3-7M507 3l9 1M507 3l2-6M508 2l8 1M508 2l2-5M510 0l7 1M510 0l2-5M511-2l4 0M511-2l1-3M513-3l0 0M513-3l0 0M515-5l0 0M515-5l0 0"/><path id="f21" d="M446 194l-8 20M446 194l12 17M447 197l-8 21M447 197l12 18M447 199l-6 16M447 199l9 13M448 202l-9 23M448 202l14 19M448 205l-9 23M448 205l14 19M449 208l-7 19M449 208l11 16M449 211l-9 25M449 211l15 20M450 214l-9 24M450 214l15 20M450 217l-7 21M450 217l13 17M451 220l-10 28M451 220l17 22M452 223l-7 21M452 223l13 17M452 227l-9 27M452 227l16 21M453 230l-8 25M453 230l16 20M454 234l-8 24M454 234l15 19M454 237l-9 28M454 237l17 22M455 241l-9 27M455 241l17 21M456 244l-8 24M456 244l15 19M457 248l-10 33M457 248l21 26M458 252l-7 23M458 252l14 18M459 255l-7 22M459 255l14 17M460 259l-9 28M460 259l17 21M461 263l-10 32M461 263l20 24M462 267l-9 30M462 267l19 23M463 271l-9 31M463 271l19 23M464 275l-8 28M464 275l17 21M465 279l-9 30M465 279l19 22M466 283l-7 25M466 283l16 19M467 286l-7 24M467 286l15 18M468 290l-8 27M468 290l17 20M469 294l-6 21M469 294l13 16M470 298l-6 21M470 298l14 16M471 302l-8 28M471 302l18 21M473 306l-6 22M473 306l14 16M474 310l-7 27M474 310l17 20M475 314l-7 27M475 314l17 19M476 318l-6 22M476 318l14 16M477 322l-6 24M477 322l16 17M479 326l-6 24M479 326l16 17M480 330l-6 24M480 330l15 17M481 334l-4 17M481 334l11 12M482 338l-4 16M482 338l10 11M484 342l-4 17M484 342l11 12M485 346l-4 16M485 346l11 11M486 349l-3 14M486 349l9 10M488 353l-2 11M488 353l7 7M489 357l-3 12M489 357l8 8M490 360l-3 12M490 360l8 8M492 364l-2 7M492 364l5 5M493 367l-1 5M493 367l3 3M494 371l0 0M494 371l0 0M496 374l0 0M496 374l0 0"/><path id="f22" d="M426 190l-14 13M426 190l5 20M425 193l-13 12M425 193l5 18M424 195l-14 14M424 195l5 21M423 197l-16 16M423 197l7 24M422 200l-15 16M422 200l7 23M421 202l-16 17M421 202l7 24M421 205l-17 18M421 205l8 25M420 208l-18 19M420 208l9 27M419 211l-17 19M419 211l8 26M418 214l-19 21M418 214l10 28M417 217l-14 16M417 217l8 22M417 220l-17 19M417 220l9 26M416 223l-17 20M416 223l10 27M415 226l-15 18M415 226l9 24M414 229l-16 19M414 229l9 24M414 233l-14 17M414 233l8 22M413 236l-20 24M413 236l12 31M412 240l-16 19M412 240l10 24M412 243l-16 21M412 243l10 26M411 247l-19 24M411 247l12 30M410 250l-14 18M410 250l9 23M410 254l-20 25M410 254l13 31M409 258l-14 18M409 258l9 22M408 262l-13 17M408 262l9 21M408 265l-15 20M408 265l10 24M407 269l-15 20M407 269l10 24M407 273l-19 25M407 273l13 30M406 277l-18 24M406 277l13 29M405 281l-17 23M405 281l12 27M405 285l-15 20M405 285l10 23M404 288l-15 21M404 288l11 24M404 292l-13 18M404 292l9 21M403 296l-16 22M403 296l12 26M403 300l-13 18M403 300l10 21M402 304l-12 17M402 304l9 20M402 308l-14 19M402 308l10 22M401 312l-11 15M401 312l8 17M401 316l-11 16M401 316l9 18M400 320l-14 20M400 320l11 22M400 324l-9 13M400 324l7 15M400 328l-9 13M400 328l7 15M399 332l-9 13M399 332l7 14M399 336l-8 12M399 336l7 14M398 340l-8 12M398 340l7 14M398 343l-7 10M398 343l6 12M398 347l-7 10M398 347l5 11M397 351l-6 8M397 351l5 9M397 355l-5 7M397 355l4 8M397 358l-4 6M397 358l3 7M397 362l-2 3M397 362l2 4M396 366l0 0M396 366l0 0M396 369l0 0M396 369l0 0"/><path id="f23" d="M460 187l0 19M460 187l13 12M461 189l0 16M461 189l10 10M463 191l0 18M463 191l12 11M464 193l0 24M464 193l16 15M465 196l0 23M465 196l15 14M467 198l0 18M467 198l12 11M468 201l0 23M468 201l15 14M470 204l0 23M470 204l15 14M471 206l0 24M471 206l16 15M473 209l0 22M473 209l15 14M474 212l0 27M474 212l18 17M476 215l0 21M476 215l14 13M477 218l0 24M477 218l16 15M479 221l0 26M479 221l17 16M481 224l0 32M481 224l21 20M483 227l0 23M483 227l15 14M484 230l0 31M484 230l20 19M486 233l0 24M486 233l16 15M488 236l0 29M488 236l19 18M490 239l0 27M490 239l18 16M492 243l0 28M492 243l19 17M494 246l0 31M494 246l21 19M496 249l0 27M496 249l18 16M498 253l0 23M498 253l16 14M500 256l0 23M500 256l16 14M502 259l0 23M502 259l15 14M504 263l0 31M504 263l21 19M506 266l0 28M506 266l19 17M508 269l0 32M508 269l21 19M510 273l0 28M510 273l19 17M512 276l0 20M512 276l14 12M514 280l1 27M514 280l18 16M516 283l1 27M516 283l19 16M518 287l1 26M518 287l18 15M520 290l1 23M520 290l16 14M523 293l1 21M523 293l14 12M525 297l1 21M525 297l14 12M527 300l1 23M527 300l16 13M529 303l1 18M529 303l12 10M531 307l1 19M531 307l13 11M533 310l1 17M533 310l12 10M535 313l1 19M535 313l13 11M538 317l1 17M538 317l12 10M540 320l1 16M540 320l11 9M542 323l1 14M542 323l9 8M544 326l1 9M544 326l6 5M546 329l0 7M546 329l5 4M549 332l0 5M549 332l3 3M551 335l0 0M551 335l0 0M553 338l0 0M553 338l0 0"/><path id="f24" d="M432 185l-8 12M432 185l4 14M431 187l-9 15M431 187l5 17M431 190l-8 13M431 190l4 15M430 193l-10 16M430 193l6 19M430 196l-10 16M430 196l6 19M429 199l-10 15M429 199l5 18M429 202l-12 20M429 202l7 23M428 205l-10 17M428 205l6 19M428 209l-11 18M428 209l6 20M427 212l-12 19M427 212l7 22M427 216l-10 17M427 216l6 20M426 220l-13 22M426 220l8 25M425 223l-12 20M425 223l7 23M425 227l-12 20M425 227l7 23M424 231l-12 20M424 231l7 23M424 235l-14 24M424 235l9 27M423 239l-14 24M423 239l9 27M422 243l-14 23M422 243l8 26M422 248l-12 19M422 248l7 22M421 252l-11 19M421 252l7 22M420 256l-12 20M420 256l7 22M420 261l-9 15M420 261l6 18M419 265l-9 16M419 265l6 18M418 269l-13 22M418 269l8 26M418 274l-9 15M418 274l5 17M417 278l-13 21M417 278l8 24M416 283l-11 18M416 283l7 21M416 287l-12 19M416 287l7 22M415 291l-8 13M415 291l5 15M414 296l-8 14M414 296l5 16M414 300l-10 16M414 300l6 18M413 305l-6 11M413 305l4 12M412 309l-6 10M412 309l4 12M412 313l-6 11M412 313l4 12M411 318l-5 9M411 318l3 10M410 322l-5 7M410 322l3 9M410 326l-5 8M410 326l3 9M409 331l-3 4M409 331l2 5M408 335l-2 2M408 335l1 3M408 339l0 0M408 339l0 0"/><path id="f25" d="M400 173l-12 2M400 173l-5 15M398 175l-11 2M398 175l-4 14M395 176l-18 3M395 176l-6 22M393 177l-14 3M393 177l-5 17M391 179l-15 3M391 179l-5 19M388 180l-16 4M388 180l-5 20M386 182l-16 4M386 182l-5 20M384 183l-20 5M384 183l-6 26M381 185l-18 5M381 185l-5 23M379 187l-19 5M379 187l-5 24M376 189l-19 6M376 189l-5 25M374 191l-23 7M374 191l-6 30M371 193l-17 5M371 193l-4 21M369 195l-22 7M369 195l-5 28M366 197l-18 6M366 197l-4 23M364 199l-19 6M364 199l-4 24M361 201l-23 8M361 201l-4 30M359 203l-21 7M359 203l-4 27M356 206l-18 6M356 206l-3 24M353 208l-23 8M353 208l-4 30M351 210l-27 10M351 210l-5 34M348 213l-24 9M348 213l-4 31M345 215l-23 8M345 215l-4 29M343 218l-26 10M343 218l-4 33M340 220l-27 10M340 220l-4 34M337 223l-19 7M337 223l-3 25M334 225l-21 8M334 225l-3 27M332 228l-27 11M332 228l-4 35M329 230l-26 10M329 230l-4 34M326 233l-19 8M326 233l-3 25M323 236l-24 10M323 236l-3 31M321 239l-25 10M321 239l-3 32M318 241l-22 9M318 241l-3 29M315 244l-23 9M315 244l-3 30M312 247l-21 9M312 247l-2 27M310 250l-18 8M310 250l-2 23M307 252l-17 7M307 252l-2 23M304 255l-16 7M304 255l-2 21M301 258l-20 9M301 258l-2 26M298 261l-15 7M298 261l-2 20M296 264l-19 8M296 264l-2 24M293 266l-16 7M293 266l-2 21M290 269l-16 7M290 269l-2 21M287 272l-19 8M287 272l-2 24M285 275l-14 6M285 275l-1 19M282 278l-14 6M282 278l-1 18M279 281l-13 5M279 281l-1 16M277 283l-11 5M277 283l-1 14M274 286l-10 4M274 286l-1 13M271 289l-10 4M271 289l-1 13M268 292l-10 4M268 292l-1 13M266 295l-6 3M266 295l-1 8M263 297l-7 3M263 297l-1 9M261 300l-3 1M261 300l0 4M258 303l0 0M258 303l0 0M255 305l0 0M255 305l0 0"/><path id="f26" d="M478 138l12 8M478 138l6-7M481 137l10 7M481 137l6-6M484 136l12 9M484 136l7-7M486 136l15 11M486 136l9-9M489 135l15 12M489 135l10-8M492 134l12 10M492 134l8-6M495 133l14 12M495 133l10-8M498 133l14 13M498 133l11-8M501 132l17 16M501 132l13-9M504 132l14 13M504 132l11-7M507 131l18 18M507 131l15-9M510 131l17 18M510 131l15-9M514 131l12 13M514 131l11-6M517 131l15 17M517 131l14-7M520 130l15 18M520 130l14-7M523 130l16 19M523 130l15-7M526 130l17 21M526 130l17-8M530 130l13 16M530 130l13-6M533 130l17 22M533 130l18-7M536 130l12 15M536 130l12-5M539 131l16 22M539 131l18-7M543 131l13 17M543 131l14-5M546 131l11 16M546 131l13-4M549 131l15 22M549 131l18-6M552 132l16 23M552 132l19-6M556 132l14 21M556 132l17-5M559 132l14 21M559 132l17-5M562 133l12 18M562 133l15-4M566 133l11 17M566 133l13-4M569 134l12 19M569 134l16-4M572 134l12 20M572 134l16-4M576 135l10 16M576 135l13-3M579 135l10 16M579 135l13-3M582 136l9 15M582 136l12-3M585 136l8 14M585 136l11-2M589 137l10 17M589 137l14-3M592 138l6 11M592 138l9-2M595 138l6 11M595 138l9-2M598 139l6 11M598 139l9-2M601 140l7 12M601 140l10-2M605 140l6 10M605 140l8-1M608 141l5 9M608 141l8-1M611 142l4 7M611 142l6-1M614 143l3 5M614 143l4-1M617 143l0 0M617 143l0 0M620 144l0 0M620 144l0 0"/><path id="f27" d="M431 105l6-7M431 105l-8-6M431 101l7-8M431 101l-9-6M430 98l6-8M430 98l-9-6M430 95l6-7M430 95l-8-5M429 91l6-7M429 91l-9-5M429 88l9-11M429 88l-13-8M429 85l9-12M429 85l-14-8M428 82l8-10M428 82l-12-7M428 79l7-9M428 79l-11-6M427 76l9-13M427 76l-15-8M426 73l8-11M426 73l-14-7M426 70l8-12M426 70l-14-7M425 67l9-13M425 67l-15-8M425 64l7-11M425 64l-13-6M424 61l7-11M424 61l-13-7M423 58l9-14M423 58l-17-8M423 55l9-14M423 55l-17-8M422 52l9-16M422 52l-19-9M421 49l7-13M421 49l-16-7M421 46l9-16M421 46l-19-8M420 44l9-16M420 44l-19-8M419 41l7-13M419 41l-17-7M418 38l8-16M418 38l-19-8M417 35l6-12M417 35l-14-6M417 33l6-11M417 33l-14-5M416 30l7-15M416 30l-19-7M415 27l5-11M415 27l-14-5M414 24l6-13M414 24l-16-6M413 22l7-14M413 22l-18-6M412 19l6-14M412 19l-17-6M411 17l5-11M411 17l-14-5M411 14l6-14M411 14l-17-6M410 11l4-10M410 11l-12-4M409 9l5-12M409 9l-15-5M408 6l5-14M408 6l-17-5M407 4l5-11M407 4l-14-4M406 1l4-10M406 1l-12-4M405-1l5-13M405-1l-16-5M404-4l4-11M404-4l-14-4M403-6l4-11M403-6l-13-4M402-9l4-10M402-9l-13-4M401-11l4-10M401-11l-12-3M400-14l3-8M400-14l-10-3M399-16l3-8M399-16l-10-3M398-19l2-6M398-19l-8-2M397-21l2-5M397-21l-6-2M396-24l1-4M396-24l-5-1M395-26l1-2M395-26l-3-1M394-28l0 0M394-28l0 0M393-31l0 0M393-31l0 0"/><path id="f28" d="M400 165l-12-1M400 165l-8 14M397 166l-14-1M397 166l-8 17M394 166l-15 0M394 166l-8 18M392 167l-13 0M392 167l-7 15M389 169l-12 0M389 169l-6 15M386 170l-16 1M386 170l-8 19M383 171l-14 1M383 171l-7 17M381 172l-15 1M381 172l-7 18M378 174l-16 2M378 174l-7 20M375 175l-18 2M375 175l-8 23M372 177l-19 3M372 177l-8 24M369 178l-20 3M369 178l-8 25M366 180l-23 4M366 180l-9 28M363 182l-16 3M363 182l-6 20M360 183l-20 4M360 183l-7 25M357 185l-16 3M357 185l-6 21M354 187l-22 4M354 187l-7 27M351 189l-20 4M351 189l-7 25M348 191l-17 4M348 191l-6 22M345 193l-19 4M345 193l-6 23M342 195l-22 5M342 195l-7 27M338 197l-20 5M338 197l-6 25M335 200l-24 6M335 200l-7 30M332 202l-19 5M332 202l-5 23M329 204l-18 5M329 204l-5 23M326 206l-23 6M326 206l-6 29M323 209l-20 5M323 209l-5 25M320 211l-16 4M320 211l-4 20M317 213l-21 6M317 213l-5 26M313 215l-17 5M313 215l-4 21M310 218l-21 6M310 218l-5 26M307 220l-18 5M307 220l-5 23M304 223l-18 5M304 223l-5 23M301 225l-18 5M301 225l-5 23M298 227l-15 4M298 227l-4 19M295 230l-17 5M295 230l-4 22M292 232l-11 3M292 232l-3 14M289 234l-12 4M289 234l-3 15M286 237l-13 4M286 237l-3 17M283 239l-8 3M283 239l-2 11M280 241l-10 3M280 241l-2 13M277 244l-10 3M277 244l-2 12M274 246l-7 2M274 246l-2 9M271 248l-5 1M271 248l-1 6M268 250l0 0M268 250l0 0M266 252l0 0M266 252l0 0"/><path id="f29" d="M438 188l-6 11M438 188l6 11M438 190l-10 16M438 190l9 16M438 193l-8 14M438 193l8 14M438 196l-10 17M438 196l10 17M438 198l-11 19M438 198l11 19M438 201l-11 18M438 201l11 18M438 204l-10 17M438 204l10 17M438 207l-12 21M438 207l12 21M437 210l-9 16M437 210l9 16M437 214l-12 20M437 214l12 21M437 217l-11 19M437 217l11 19M437 220l-12 20M437 220l12 20M437 224l-14 23M437 224l14 24M437 227l-14 23M437 227l13 23M437 231l-13 22M437 231l13 22M437 234l-11 19M437 234l11 19M437 238l-11 19M437 238l11 19M437 242l-12 21M437 242l12 21M437 246l-11 19M437 246l11 19M437 250l-11 19M437 250l11 19M437 253l-15 25M437 253l15 25M437 257l-10 17M437 257l10 18M437 261l-14 23M437 261l14 24M437 265l-12 19M437 265l11 20M437 269l-11 19M437 269l11 19M437 273l-11 18M437 273l11 19M437 278l-10 16M437 278l9 16M437 282l-11 19M437 282l11 19M437 286l-10 16M437 286l9 16M437 290l-11 18M437 290l10 18M437 294l-10 16M437 294l9 16M437 298l-12 20M437 298l12 20M436 302l-12 19M436 302l11 20M436 306l-9 15M436 306l9 16M436 310l-9 16M436 310l9 16M436 314l-10 17M436 314l10 17M436 318l-7 12M436 318l7 12M436 322l-6 10M436 322l6 10M436 326l-6 10M436 326l6 10M436 330l-5 9M436 330l5 9M436 334l-5 9M436 334l5 9M436 338l-4 6M436 338l4 6M436 341l-3 4M436 341l3 4M436 345l0 0M436 345l0 0M436 349l0 0M436 349l0 0"/><path id="f30" d="M470 165l6 15M470 165l12 0M473 166l7 17M473 166l14 0M475 167l5 13M475 167l11 0M478 168l5 16M478 168l13 1M480 170l5 15M480 170l12 1M483 171l6 19M483 171l15 1M486 172l6 20M486 172l16 2M488 174l6 22M488 174l17 2M491 176l6 22M491 176l17 2M494 177l5 18M494 177l15 2M497 179l5 20M497 179l16 3M500 181l5 22M500 181l17 3M503 183l4 17M503 183l14 2M506 185l4 18M506 185l14 3M509 187l5 22M509 187l17 3M512 189l4 19M512 189l15 3M515 191l5 25M515 191l20 4M518 193l4 20M518 193l16 4M521 195l4 19M521 195l15 3M524 197l4 20M524 197l15 4M527 199l4 20M527 199l16 4M530 202l4 20M530 202l15 4M533 204l4 22M533 204l17 4M536 206l4 21M536 206l17 4M539 208l3 19M539 208l15 4M542 211l4 22M542 211l17 4M545 213l3 18M545 213l14 4M548 215l4 23M548 215l18 5M551 218l4 22M551 218l18 5M554 220l3 20M554 220l15 4M558 223l3 17M558 223l13 3M561 225l3 16M561 225l13 3M564 227l3 16M564 227l12 3M567 229l2 11M567 229l9 2M570 232l2 12M570 232l10 3M573 234l2 12M573 234l9 2M575 236l2 9M575 236l7 2M578 238l1 7M578 238l5 1M581 241l1 7M581 241l5 1M584 243l0 2M584 243l2 0M587 245l0 0M587 245l0 0"/><path id="f31" d="M611 191l4-8M611 191l-8-5M611 188l4-8M611 188l-8-5M610 185l5-10M610 185l-10-7M609 182l4-9M609 182l-9-6M609 179l6-12M609 179l-12-8M608 176l5-11M608 176l-12-8M608 173l6-12M608 173l-12-8M607 170l6-13M607 170l-13-9M606 168l6-12M606 168l-12-8M606 165l6-12M606 165l-12-8M605 162l5-11M605 162l-12-8M605 159l5-10M605 159l-11-7M604 156l7-14M604 156l-15-10M603 154l6-13M603 154l-14-9M603 151l5-11M603 151l-11-7M602 148l8-16M602 148l-16-11M602 146l7-14M602 146l-14-9M601 143l7-14M601 143l-15-10M601 140l6-13M601 140l-14-9M600 138l6-12M600 138l-12-8M599 135l8-17M599 135l-17-11M599 132l6-12M599 132l-12-8M598 130l6-13M598 130l-13-9M598 127l8-17M598 127l-17-11M597 125l6-11M597 125l-12-8M597 122l7-14M597 122l-14-9M596 120l7-13M596 120l-14-9M596 117l6-12M596 117l-12-8M595 115l8-16M595 115l-16-11M595 112l6-13M595 112l-13-9M594 110l5-10M594 110l-10-7M594 108l6-13M594 108l-13-9M593 105l5-10M593 105l-10-7M593 103l7-13M593 103l-13-9M593 101l7-14M593 101l-14-10M592 98l7-14M592 98l-14-10M592 96l5-9M592 96l-9-7M591 94l6-12M591 94l-12-8M591 91l5-10M591 91l-10-7M591 89l5-10M591 89l-10-7M590 87l5-9M590 87l-9-6M590 84l5-8M590 84l-8-6M589 82l4-7M589 82l-7-5M589 80l5-9M589 80l-9-6M589 78l4-6M589 78l-6-5M588 76l5-8M588 76l-8-6M588 73l3-5M588 73l-5-4M588 71l4-6M588 71l-6-5M587 69l2-4M587 69l-4-3M587 67l2-3M587 67l-3-2M587 65l1-2M587 65l-2-2M586 63l0 0M586 63l0 0M586 60l0 0M586 60l0 0"/><path id="f32" d="M584 196l-1-9M584 196l-12-1M582 194l-1-8M582 194l-11-1M580 191l-2-11M580 191l-15 0M578 189l-2-11M578 189l-15 0M576 186l-3-13M576 186l-19 0M574 184l-4-14M574 184l-19 1M572 182l-3-10M572 182l-14 1M570 180l-4-12M570 180l-18 1M567 177l-4-12M567 177l-18 2M565 175l-4-11M565 175l-17 2M563 173l-5-12M563 173l-18 2M561 171l-5-12M561 171l-18 3M558 169l-7-15M558 169l-22 4M556 167l-6-13M556 167l-20 3M554 165l-6-12M554 165l-18 3M551 163l-7-12M551 163l-19 4M549 162l-8-14M549 162l-21 5M546 160l-9-14M546 160l-23 5M544 158l-8-12M544 158l-20 5M542 156l-10-15M542 156l-24 7M539 155l-8-12M539 155l-20 6M537 153l-11-15M537 153l-24 7M534 151l-11-14M534 151l-24 7M531 150l-9-12M531 150l-20 6M529 148l-12-15M529 148l-25 9M526 147l-10-13M526 147l-22 8M524 145l-11-13M524 145l-23 8M521 144l-12-13M521 144l-23 9M518 143l-12-13M518 143l-24 9M516 141l-11-12M516 141l-22 9M513 140l-10-10M513 140l-18 7M510 139l-13-13M510 139l-24 10M508 137l-14-13M508 137l-25 11M505 136l-12-11M505 136l-21 9M502 135l-12-11M502 135l-21 10M500 134l-11-10M500 134l-18 9M497 133l-14-12M497 133l-23 11M494 132l-13-11M494 132l-21 10M492 131l-10-9M492 131l-17 8M489 130l-13-11M489 130l-21 11M486 129l-14-11M486 129l-22 11M483 127l-10-8M483 127l-16 9M481 127l-13-10M481 127l-20 11M478 126l-10-8M478 126l-16 9M475 125l-9-7M475 125l-14 7M473 124l-11-8M473 124l-16 9M470 123l-9-6M470 123l-13 7M467 122l-10-7M467 122l-15 8M464 121l-9-6M464 121l-13 7M462 120l-7-5M462 120l-10 6M459 119l-7-5M459 119l-11 6M456 119l-7-5M456 119l-11 6M454 118l-6-4M454 118l-8 5M451 117l-5-3M451 117l-7 4M448 116l-4-3M448 116l-6 4M446 115l-2-1M446 115l-3 2M443 115l0 0M443 115l0 0M440 114l0 0M440 114l0 0"/><path id="f33" d="M571 221l-7-7M571 221l-12 5M568 220l-7-7M568 220l-13 6M565 219l-7-6M565 219l-12 6M562 218l-12-10M562 218l-19 10M559 216l-10-8M559 216l-16 9M556 215l-13-9M556 215l-20 11M552 214l-10-7M552 214l-15 9M549 214l-10-6M549 214l-14 9M546 213l-16-9M546 213l-21 14M543 212l-16-8M543 212l-21 14M540 211l-18-9M540 211l-23 16M536 211l-17-8M536 211l-20 16M533 210l-17-7M533 210l-19 15M530 210l-19-7M530 210l-21 18M526 210l-14-5M526 210l-16 14M523 209l-18-6M523 209l-20 17M519 209l-18-6M519 209l-19 17M516 209l-16-5M516 209l-16 15M513 209l-20-5M513 209l-20 19M509 209l-18-4M509 209l-18 18M506 209l-20-4M506 209l-19 20M502 209l-19-4M502 209l-18 19M498 210l-19-3M498 210l-17 19M495 210l-19-3M495 210l-17 19M491 210l-21-3M491 210l-19 22M488 211l-25-3M488 211l-21 25M484 211l-24-3M484 211l-21 25M481 211l-24-3M481 211l-20 24M477 212l-23-2M477 212l-19 24M473 213l-19-2M473 213l-15 19M470 213l-24-2M470 213l-19 25M466 214l-18-1M466 214l-14 19M463 215l-17-1M463 215l-13 18M459 215l-20-1M459 215l-15 21M455 216l-21-1M455 216l-16 22M452 217l-18 0M452 217l-13 19M448 218l-20 0M448 218l-15 21M445 219l-17 0M445 219l-12 18M441 220l-21 0M441 220l-15 23M437 220l-17 0M437 220l-12 18M434 221l-17 0M434 221l-12 18M430 223l-16 1M430 223l-11 18M427 224l-18 1M427 224l-12 19M423 225l-18 1M423 225l-12 19M420 226l-14 1M420 226l-9 15M416 227l-13 1M416 227l-9 14M413 228l-13 1M413 228l-8 14M409 229l-9 1M409 229l-6 10M406 230l-10 1M406 230l-6 11M402 231l-10 1M402 231l-6 11M399 233l-8 1M399 233l-5 9M396 234l-5 0M396 234l-3 5M392 235l-4 0M392 235l-2 4M389 236l0 0M389 236l0 0M386 238l0 0M386 238l0 0"/><path id="f34" d="M673 254l8 16M673 254l14-1M675 255l8 15M675 255l13-1M678 256l7 15M678 256l12 0M681 257l10 21M681 257l18 0M683 258l11 24M683 258l19 0M686 259l7 17M686 259l14 0M688 260l10 24M688 260l19 0M691 261l9 21M691 261l17 1M694 262l8 19M694 262l16 1M697 263l8 21M697 263l17 1M699 264l10 26M699 264l21 1M702 266l10 28M702 266l23 2M705 267l7 20M705 267l16 1M708 268l9 26M708 268l21 2M711 270l7 21M711 270l17 2M713 271l10 28M713 271l23 3M716 273l8 24M716 273l20 2M719 274l10 31M719 274l25 3M722 276l10 32M722 276l26 4M725 277l8 27M725 277l22 3M728 279l10 33M728 279l27 4M731 281l8 26M731 281l21 3M734 283l7 23M734 283l18 3M737 284l8 29M737 284l23 4M740 286l6 23M740 286l18 3M743 288l7 25M743 288l20 4M746 290l7 27M746 290l22 4M749 292l8 30M749 292l24 5M752 294l6 24M752 294l19 4M755 296l6 23M755 296l18 4M758 298l8 33M758 298l26 6M761 300l6 26M761 300l21 5M764 302l8 33M764 302l27 6M767 304l8 32M767 304l26 6M771 306l6 26M771 306l21 5M774 308l6 27M774 308l21 5M777 310l6 27M777 310l22 5M780 312l6 28M780 312l22 5M783 315l6 27M783 315l22 5M786 317l6 27M786 317l21 5M789 319l6 27M789 319l21 5M792 321l6 30M792 321l24 6M795 323l5 25M795 323l19 5M798 326l5 23M798 326l18 5M801 328l5 26M801 328l20 5M805 330l4 20M805 330l16 4M808 332l4 20M808 332l16 4M811 335l5 26M811 335l20 6M814 337l4 21M814 337l17 5M817 339l4 20M817 339l16 4M820 341l3 15M820 341l12 3M823 344l3 18M823 344l14 4M826 346l3 18M826 346l14 4M829 348l3 13M829 348l10 3M832 351l3 16M832 351l13 4M835 353l3 15M835 353l12 3M838 355l2 10M838 355l8 2M841 357l2 12M841 357l9 3M844 360l2 10M844 360l8 2M846 362l2 9M846 362l7 2M849 364l1 5M849 364l4 1M852 366l0 2M852 366l2 0M855 369l0 0M855 369l0 0M858 371l0 0M858 371l0 0"/><path id="f35" d="M581 238l-7-4M581 238l-9 8M578 238l-11-6M578 238l-13 13M575 238l-11-5M575 238l-12 13M572 238l-12-5M572 238l-12 14M569 238l-10-4M569 238l-10 12M567 238l-10-4M567 238l-9 12M564 238l-15-5M564 238l-13 18M561 238l-12-3M561 238l-10 15M558 238l-13-3M558 238l-10 15M555 239l-17-4M555 239l-13 21M552 239l-18-3M552 239l-13 22M549 240l-13-2M549 240l-9 16M546 241l-20-3M546 241l-13 24M542 242l-17-2M542 242l-11 21M539 242l-17-1M539 242l-10 20M536 243l-15-1M536 243l-9 18M533 244l-17-1M533 244l-10 21M530 245l-22-1M530 245l-12 27M527 247l-17 0M527 247l-9 21M524 248l-16 0M524 248l-8 19M520 249l-16 0M520 249l-8 20M517 251l-16 1M517 251l-7 19M514 252l-18 1M514 252l-8 22M511 253l-22 2M511 253l-10 27M508 255l-15 1M508 255l-6 19M505 257l-16 2M505 257l-7 20M501 258l-21 2M501 258l-9 27M498 260l-22 3M498 260l-8 27M495 262l-21 3M495 262l-8 26M492 263l-15 2M492 263l-6 19M489 265l-16 2M489 265l-6 20M486 267l-20 3M486 267l-7 24M482 269l-16 3M482 269l-5 20M479 271l-17 3M479 271l-5 21M476 273l-14 3M476 273l-4 17M473 275l-11 2M473 275l-4 14M470 277l-13 3M470 277l-4 16M467 279l-14 3M467 279l-4 18M464 281l-13 3M464 281l-4 17M461 283l-11 2M461 283l-3 14M458 285l-10 2M458 285l-3 12M455 287l-9 2M455 287l-2 11M452 289l-7 2M452 289l-2 9M449 291l-6 1M449 291l-2 8M446 293l-5 1M446 293l-1 6M443 295l0 0M443 295l0 0M441 297l0 0M441 297l0 0"/><path id="f36" d="M659 269l6 18M659 269l15 5M661 271l6 20M661 271l16 6M663 272l5 18M663 272l15 6M665 274l5 17M665 274l13 6M667 276l5 18M667 276l15 7M669 278l5 21M669 278l17 8M672 280l5 24M672 280l19 9M674 282l6 27M674 282l21 11M676 284l5 23M676 284l18 10M678 286l5 28M678 286l22 12M680 288l5 27M680 288l20 12M683 290l4 26M683 290l19 11M685 293l4 25M685 293l19 12M687 295l4 27M687 295l20 13M689 298l4 30M689 298l22 14M691 300l3 27M691 300l20 13M694 303l3 31M694 303l22 15M696 306l3 28M696 306l21 14M698 309l2 26M698 309l19 13M700 311l3 30M700 311l21 15M702 314l2 32M702 314l23 16M705 317l2 24M705 317l17 13M707 320l2 29M707 320l20 15M709 323l2 29M709 323l20 15M711 326l2 34M711 326l24 19M714 330l2 35M714 330l25 19M716 333l1 28M716 333l20 15M718 336l1 34M718 336l24 19M720 339l1 33M720 339l23 18M722 343l1 26M722 343l18 15M725 346l1 28M725 346l20 16M727 349l0 24M727 349l17 14M729 353l0 32M729 353l22 18M731 356l0 30M731 356l20 17M733 360l0 32M733 360l22 19M735 363l0 30M735 363l21 18M738 367l0 28M738 367l19 17M740 370l0 28M740 370l19 17M742 374l0 26M742 374l18 15M744 377l0 21M744 377l14 12M746 381l0 25M746 381l17 15M748 385l0 18M748 385l12 11M750 388l0 19M750 388l13 12M752 392l-1 24M752 392l16 15M754 395l0 17M754 395l11 10M756 399l0 17M756 399l11 10M758 403l-1 16M758 403l11 10M760 406l-1 21M760 406l14 13M762 410l-1 14M762 410l10 9M764 414l0 12M764 414l8 8M766 417l-1 16M766 417l11 10M768 421l0 11M768 421l7 7M770 424l-1 13M770 424l8 8M772 428l0 10M772 428l6 6M774 431l0 8M774 431l5 5M775 435l0 4M775 435l3 3M777 438l0 0M777 438l0 0M779 442l0 0M779 442l0 0"/><path id="f37" d="M583 211l-4-8M583 211l-12 1M581 209l-5-10M581 209l-15 2M578 207l-6-11M578 207l-18 3M576 205l-5-8M576 205l-13 2M573 203l-5-8M573 203l-13 3M570 201l-7-10M570 201l-17 4M568 199l-8-10M568 199l-17 5M565 198l-10-12M565 198l-21 6M562 196l-11-12M562 196l-21 7M559 195l-9-10M559 195l-18 6M556 193l-10-10M556 193l-19 7M554 192l-12-11M554 192l-21 8M551 190l-14-12M551 190l-23 10M548 189l-11-9M548 189l-18 8M545 188l-12-10M545 188l-20 9M542 187l-11-8M542 187l-17 9M539 186l-15-10M539 186l-22 12M535 185l-11-8M535 185l-17 9M532 184l-17-11M532 184l-25 14M529 183l-15-9M529 183l-21 12M526 182l-16-9M526 182l-21 13M523 181l-13-7M523 181l-17 11M520 180l-14-7M520 180l-18 12M516 180l-16-8M516 180l-20 13M513 179l-18-9M513 179l-23 16M510 178l-16-7M510 178l-20 14M507 178l-14-6M507 178l-17 13M503 177l-19-8M503 177l-22 17M500 177l-17-7M500 177l-20 15M497 177l-16-6M497 177l-18 14M494 176l-13-5M494 176l-15 12M490 176l-14-5M490 176l-15 13M487 176l-17-6M487 176l-19 16M484 175l-12-4M484 175l-13 11M480 175l-14-5M480 175l-15 13M477 175l-14-4M477 175l-15 13M474 175l-12-4M474 175l-13 11M471 175l-14-4M471 175l-14 13M467 174l-14-4M467 174l-14 13M464 174l-13-3M464 174l-13 12M461 174l-11-3M461 174l-11 11M458 174l-8-2M458 174l-8 8M454 174l-7-2M454 174l-7 6M451 174l-7-2M451 174l-7 6M448 174l-5-1M448 174l-5 5M445 174l-3-1M445 174l-3 3M442 174l0 0M442 174l0 0M438 175l0 0M438 175l0 0"/><path id="f38" d="M669 231l11 7M669 231l9-4M672 230l16 12M672 230l13-6M675 230l13 10M675 230l11-5M678 230l14 11M678 230l12-5M681 229l19 15M681 229l17-6M685 229l16 13M685 229l15-5M688 229l19 16M688 229l18-5M691 229l17 15M691 229l16-5M694 228l18 17M694 228l18-5M697 228l15 14M697 228l15-4M701 228l19 18M701 228l19-4M704 228l21 20M704 228l21-4M707 229l18 18M707 229l19-4M710 229l20 21M710 229l21-4M714 229l19 21M714 229l21-3M717 229l15 16M717 229l16-2M721 229l20 22M721 229l23-3M724 230l19 21M724 230l21-3M727 230l16 19M727 230l19-2M731 231l14 17M731 231l17-2M734 231l20 24M734 231l24-2M738 232l17 21M738 232l21-2M741 232l19 23M741 232l23-2M745 233l20 25M745 233l25-1M748 233l19 24M748 233l23-1M752 234l20 25M752 234l25-1M755 235l16 21M755 235l20-1M759 235l18 24M759 235l23-1M762 236l16 21M762 236l20 0M766 237l18 25M766 237l24 0M769 238l18 24M769 238l23 0M773 238l12 17M773 238l16 0M776 239l12 17M776 239l16 0M780 240l12 17M780 240l17 0M783 241l16 23M783 241l22 0M787 242l13 18M787 242l17 0M790 243l13 19M790 243l18 1M794 244l11 16M794 244l15 1M797 245l12 17M797 245l16 1M800 246l10 15M800 246l15 1M804 247l10 14M804 247l14 1M807 248l10 15M807 248l14 1M810 249l9 14M810 249l13 1M814 250l10 15M814 250l14 1M817 251l8 12M817 251l11 1M820 252l8 12M820 252l11 1M824 253l6 10M824 253l9 1M827 254l5 8M827 254l7 1M830 255l3 4M830 255l4 0M833 256l0 0M833 256l0 0M837 257l0 0M837 257l0 0"/><path id="f39" d="M660 222l10 4M660 222l4-6M663 220l14 7M663 220l6-9M665 219l13 7M665 219l6-8M668 218l17 9M668 218l8-10M671 216l16 10M671 216l8-10M673 215l16 10M673 215l9-10M676 214l18 12M676 214l10-10M679 213l13 9M679 213l8-7M682 212l15 11M682 212l9-8M685 212l16 12M685 212l10-8M688 211l16 13M688 211l11-9M690 210l18 15M690 210l13-9M693 209l20 17M693 209l15-10M696 209l19 17M696 209l15-9M699 208l20 19M699 208l16-10M702 208l18 18M702 208l15-9M705 208l16 16M705 208l14-7M708 207l17 17M708 207l15-8M712 207l19 20M712 207l17-8M715 207l19 20M715 207l18-8M718 207l16 17M718 207l15-6M721 207l15 18M721 207l15-6M724 207l17 20M724 207l17-7M727 207l14 17M727 207l15-5M730 207l18 22M730 207l19-7M733 207l12 15M733 207l13-4M737 207l16 21M737 207l18-5M740 208l14 19M740 208l16-5M743 208l12 17M743 208l14-4M746 208l14 20M746 208l17-4M749 209l13 19M749 209l16-4M753 209l15 22M753 209l19-4M756 209l14 21M756 209l18-4M759 210l12 19M759 210l16-3M762 210l13 20M762 210l17-3M765 211l13 20M765 211l17-3M769 211l9 14M769 211l12-2M772 212l11 18M772 212l15-3M775 213l11 18M775 213l15-2M778 213l11 18M778 213l15-2M781 214l9 15M781 214l13-2M784 215l7 12M784 215l10-1M787 215l6 11M787 215l9-1M790 216l7 12M790 216l10-1M793 217l5 8M793 217l7-1M797 218l5 9M797 218l8-1M800 219l4 7M800 219l6-1M803 219l3 5M803 219l4 0M806 220l0 0M806 220l0 0M808 221l0 0M808 221l0 0"/><path id="f40" d="M656 276l2 22M656 276l17 8M658 278l1 16M658 278l12 6M660 279l1 19M660 279l14 7M661 281l1 22M661 281l16 8M663 283l1 25M663 283l19 10M665 285l1 20M665 285l15 8M667 287l1 20M667 287l15 8M668 289l1 21M668 289l16 9M670 292l1 26M670 292l19 10M672 294l1 28M672 294l21 11M674 296l0 25M674 296l18 10M676 299l0 25M676 299l18 10M678 301l0 26M678 301l19 11M680 304l0 25M680 304l19 11M682 306l0 27M682 306l20 11M684 309l0 23M684 309l17 10M686 311l0 28M686 311l21 12M688 314l0 34M688 314l25 15M690 317l0 28M690 317l20 12M692 319l-1 32M692 319l24 14M694 322l0 25M694 322l18 11M696 325l-1 32M696 325l23 14M698 328l-1 33M698 328l24 15M700 331l-1 32M700 331l23 14M702 334l-1 30M702 334l22 14M704 337l-1 29M704 337l22 14M706 340l-1 31M706 340l23 14M709 343l-1 35M709 343l25 16M711 346l-1 25M711 346l18 12M713 349l-1 24M713 349l18 11M715 352l-1 32M715 352l24 15M717 355l-1 34M717 355l25 16M719 359l-1 29M719 359l21 14M722 362l-1 28M722 362l21 13M724 365l-1 31M724 365l23 15M726 368l-1 24M726 368l18 12M728 372l-1 25M728 372l18 12M731 375l-1 24M731 375l18 11M733 378l-1 28M733 378l21 13M735 382l-1 25M735 382l18 12M737 385l-1 23M737 385l17 11M739 388l-1 28M739 388l20 13M742 391l-2 30M742 391l22 14M744 395l-1 23M744 395l16 11M746 398l-1 26M746 398l19 13M748 401l-1 23M748 401l16 11M751 405l-1 26M751 405l19 13M753 408l-1 23M753 408l17 11M755 412l-1 19M755 412l14 9M757 415l-1 18M757 415l13 9M759 418l-1 16M759 418l11 8M762 422l-1 19M762 422l14 9M764 425l-1 17M764 425l12 8M766 428l-1 14M766 428l10 7M768 431l-1 15M768 431l11 7M770 435l-1 13M770 435l10 6M773 438l-1 15M773 438l11 7M775 441l0 10M775 441l7 5M777 444l-1 12M777 444l9 6M779 448l0 8M779 448l6 4M781 451l0 6M781 451l4 3M783 454l0 2M783 454l1 1M786 457l0 0M786 457l0 0M788 460l0 0M788 460l0 0"/><path id="f41" d="M576 267l-13 2M576 267l-5 16M573 268l-13 2M573 268l-5 17M571 269l-18 3M571 269l-6 22M568 271l-13 3M568 271l-4 16M566 273l-15 3M566 273l-4 18M563 274l-18 4M563 274l-5 23M560 276l-19 5M560 276l-5 24M558 278l-16 4M558 278l-4 21M555 280l-16 4M555 280l-4 20M552 282l-17 5M552 282l-4 22M550 284l-23 7M550 284l-5 29M547 286l-20 7M547 286l-4 26M544 289l-25 8M544 289l-5 32M542 291l-24 8M542 291l-5 31M539 293l-26 9M539 293l-5 33M536 296l-18 6M536 296l-3 23M533 298l-19 7M533 298l-3 25M530 301l-18 7M530 301l-3 23M527 304l-22 8M527 304l-3 28M525 306l-21 8M525 306l-3 27M522 309l-18 7M522 309l-3 24M519 312l-23 9M519 312l-3 30M516 314l-19 8M516 314l-3 24M513 317l-21 9M513 317l-3 27M510 320l-20 9M510 320l-2 26M507 323l-25 11M507 323l-3 33M504 326l-22 9M504 326l-2 28M501 329l-20 9M501 329l-2 26M498 332l-18 8M498 332l-2 23M495 335l-21 10M495 335l-2 28M492 338l-23 10M492 338l-2 30M489 341l-23 10M489 341l-2 30M486 344l-25 11M486 344l-2 33M483 348l-24 11M483 348l-2 31M481 351l-18 9M481 351l-2 24M478 354l-17 8M478 354l-1 22M475 357l-22 10M475 357l-2 29M472 360l-22 10M472 360l-2 29M469 364l-19 9M469 364l-1 25M466 367l-21 10M466 367l-1 28M463 370l-18 9M463 370l-1 24M460 373l-16 8M460 373l-1 21M457 377l-14 7M457 377l-1 19M454 380l-13 6M454 380l-1 17M451 383l-16 8M451 383l-1 21M448 386l-17 8M448 386l-1 22M445 390l-16 8M445 390l-1 21M443 393l-13 6M443 393l-1 17M440 396l-13 6M440 396l-1 17M437 399l-13 6M437 399l-1 17M434 403l-11 5M434 403l-1 15M431 406l-9 4M431 406l0 12M429 409l-7 3M429 409l0 9M426 412l-5 3M426 412l0 7M423 415l-2 1M423 415l0 3M420 418l0 0M420 418l0 0M418 421l0 0M418 421l0 0"/><path id="f42" d="M618 279l-8 14M618 279l7 15M618 281l-10 16M618 281l8 17M618 284l-9 15M618 284l7 16M618 286l-10 17M618 286l8 18M617 289l-12 20M617 289l10 21M617 292l-10 18M617 292l9 19M617 295l-10 17M617 295l8 18M617 298l-14 23M617 298l11 25M617 301l-13 22M617 301l11 24M616 304l-12 20M616 304l10 21M616 308l-12 20M616 308l10 22M616 311l-13 22M616 311l11 24M616 314l-14 23M616 314l11 25M616 318l-12 20M616 318l10 21M615 321l-11 18M615 321l9 19M615 325l-12 20M615 325l10 22M615 329l-15 26M615 329l13 28M615 333l-12 20M615 333l10 21M614 336l-13 23M614 336l11 25M614 340l-12 21M614 340l10 22M614 344l-12 21M614 344l10 22M614 348l-12 20M614 348l10 22M614 352l-13 23M614 352l11 24M613 356l-12 20M613 356l10 22M613 360l-11 19M613 360l9 20M613 364l-11 19M613 364l10 21M613 368l-11 20M613 368l10 21M612 373l-13 23M612 373l11 24M612 377l-10 18M612 377l9 19M612 381l-10 18M612 381l9 19M612 385l-12 21M612 385l10 22M612 389l-12 20M612 389l10 21M611 393l-13 22M611 393l11 24M611 398l-9 16M611 398l8 17M611 402l-11 19M611 402l9 20M611 406l-10 18M611 406l9 19M610 410l-8 14M610 410l7 15M610 414l-12 20M610 414l10 22M610 418l-8 14M610 418l7 15M610 422l-7 13M610 422l6 13M610 426l-8 14M610 426l7 15M609 430l-6 11M609 430l6 12M609 434l-7 12M609 434l6 13M609 438l-6 10M609 438l5 10M609 442l-4 7M609 442l4 8M608 446l-3 6M608 446l3 6M608 450l-3 5M608 450l2 5M608 453l0 0M608 453l0 0M608 457l0 0M608 457l0 0"/><path id="f43" d="M615 197l6-7M615 197l-8-6M615 193l5-6M615 193l-7-5M614 190l6-8M614 190l-9-6M614 187l7-9M614 187l-10-7M614 183l7-9M614 183l-10-7M613 180l6-8M613 180l-9-6M613 177l6-8M613 177l-9-6M612 173l7-10M612 173l-12-7M611 170l8-12M611 170l-14-8M611 167l6-9M611 167l-11-6M610 164l5-9M610 164l-10-5M609 161l5-9M609 161l-11-5M609 157l7-13M609 157l-15-7M608 154l6-11M608 154l-13-6M607 151l6-12M607 151l-14-6M606 148l7-15M606 148l-18-7M605 145l6-13M605 145l-15-6M605 142l5-11M605 142l-13-5M604 140l6-13M604 140l-16-6M603 137l4-10M603 137l-12-4M602 134l4-11M602 134l-14-5M601 131l5-13M601 131l-16-5M600 128l4-11M600 128l-13-4M598 126l3-10M598 126l-12-4M597 123l4-12M597 123l-15-4M596 120l3-11M596 120l-14-4M595 118l4-14M595 118l-17-4M594 115l3-9M594 115l-12-3M593 112l3-12M593 112l-15-4M592 110l2-10M592 110l-13-3M590 107l3-11M590 107l-14-3M589 105l2-9M589 105l-12-2M588 102l2-10M588 102l-12-2M587 100l2-8M587 100l-10-2M585 97l1-7M585 97l-9-2M584 95l1-7M584 95l-9-2M583 92l1-7M583 92l-9-2M581 90l1-5M581 90l-7-1M580 87l1-4M580 87l-5-1M579 85l0-3M579 85l-4-1M577 83l0-1M577 83l-1 0M576 80l0 0M576 80l0 0"/><path id="f44" d="M602 287l-13 12M602 287l5 18M601 290l-12 11M601 290l4 17M601 292l-11 11M601 292l4 16M600 294l-15 14M600 294l5 21M599 297l-17 17M599 297l6 25M598 299l-15 15M598 299l6 22M597 302l-12 12M597 302l4 17M596 304l-12 12M596 304l5 18M595 307l-13 13M595 307l5 19M594 310l-14 14M594 310l5 20M593 312l-13 13M593 312l5 20M592 315l-14 14M592 315l5 20M591 318l-18 18M591 318l7 27M590 321l-20 20M590 321l8 30M589 324l-15 15M589 324l6 23M588 327l-21 21M588 327l8 32M587 330l-18 18M587 330l7 26M586 333l-21 21M586 333l8 30M585 337l-22 22M585 337l8 32M584 340l-22 22M584 340l9 33M583 343l-15 15M583 343l6 22M582 346l-17 17M582 346l7 26M580 350l-20 20M580 350l8 29M579 353l-23 23M579 353l9 33M578 357l-16 16M578 357l6 23M577 360l-17 17M577 360l7 26M576 363l-22 22M576 363l9 33M574 367l-16 16M574 367l6 24M573 371l-18 18M573 371l7 27M572 374l-18 18M572 374l7 26M571 378l-21 21M571 378l8 30M569 381l-22 22M569 381l9 33M568 385l-16 16M568 385l6 24M567 389l-21 21M567 389l8 31M566 392l-21 21M566 392l8 30M564 396l-21 21M564 396l8 31M563 400l-19 19M563 400l7 28M562 404l-22 21M562 404l8 32M560 407l-17 17M560 407l6 25M559 411l-17 17M559 411l7 25M558 415l-16 15M558 415l6 23M556 419l-19 19M556 419l7 29M555 422l-17 17M555 422l6 25M554 426l-15 15M554 426l6 22M552 430l-14 14M552 430l5 21M551 434l-18 17M551 434l7 26M550 437l-17 16M550 437l6 24M548 441l-17 16M548 441l6 25M547 445l-14 14M547 445l5 21M546 449l-14 14M546 449l5 21M544 452l-12 12M544 452l4 18M543 456l-15 14M543 456l5 22M541 460l-10 10M541 460l4 15M540 464l-12 12M540 464l4 18M539 467l-13 13M539 467l5 19M537 471l-12 12M537 471l4 18M536 475l-9 8M536 475l3 13M535 478l-9 8M535 478l3 13M533 482l-11 10M533 482l4 15M532 486l-9 8M532 486l3 13M530 489l-9 8M530 489l3 13M529 493l-7 7M529 493l2 11M528 496l-5 5M528 496l2 7M526 500l-4 4M526 500l1 6M525 503l-1 1M525 503l0 1M524 506l0 0M524 506l0 0M522 510l0 0M522 510l0 0"/><path id="f45" d="M584 262l-11 2M584 262l-6 13M582 263l-13 2M582 263l-6 15M580 264l-13 3M580 264l-6 16M577 266l-19 5M577 266l-8 23M575 267l-18 5M575 267l-7 22M572 269l-20 6M572 269l-7 25M570 270l-21 7M570 270l-7 27M568 272l-19 7M568 272l-6 24M565 274l-22 9M565 274l-6 28M563 276l-19 8M563 276l-5 25M560 278l-19 8M560 278l-5 24M558 280l-24 11M558 280l-5 30M556 283l-23 11M556 283l-5 30M553 285l-24 12M553 285l-5 31M551 287l-20 10M551 287l-4 27M548 290l-23 12M548 290l-4 30M546 292l-20 11M546 292l-3 26M544 295l-25 14M544 295l-3 33M541 298l-24 14M541 298l-3 33M539 301l-19 11M539 301l-2 25M536 303l-25 15M536 303l-2 33M534 306l-18 11M534 306l-1 24M532 309l-17 11M532 309l-1 23M529 312l-22 14M529 312l-1 31M527 315l-18 12M527 315l-1 25M525 319l-20 14M525 319l-1 28M522 322l-21 14M522 322l-1 29M520 325l-16 11M520 325l0 22M518 328l-21 15M518 328l0 29M515 331l-17 12M515 331l0 24M513 335l-18 13M513 335l0 25M511 338l-17 12M511 338l0 24M509 342l-19 14M509 342l0 27M506 345l-19 14M506 345l1 27M504 348l-15 12M504 348l1 21M502 352l-13 10M502 352l1 19M500 355l-14 11M500 355l1 20M498 359l-14 11M498 359l1 20M495 363l-12 9M495 363l1 17M493 366l-12 9M493 366l1 17M491 370l-14 11M491 370l1 20M489 373l-13 11M489 373l1 19M487 377l-13 11M487 377l1 19M485 380l-12 10M485 380l1 18M483 384l-11 9M483 384l1 15M481 387l-8 6M481 387l1 11M479 391l-6 5M479 391l1 8M477 394l-5 4M477 394l1 7M475 398l-3 3M475 398l0 5M474 401l0 0M474 401l0 0M472 405l0 0M472 405l0 0"/><path id="f46" d="M669 231l13 10M669 231l9-6M672 231l12 10M672 231l9-6M675 230l16 14M675 230l13-8M678 230l16 15M678 230l13-7M681 229l16 15M681 229l14-7M684 229l14 13M684 229l12-6M687 229l13 13M687 229l12-6M690 228l17 17M690 228l16-7M693 228l18 19M693 228l17-7M696 228l17 18M696 228l17-6M699 228l14 16M699 228l14-5M702 228l18 20M702 228l18-6M705 228l17 19M705 228l17-6M708 228l16 19M708 228l17-5M712 228l17 21M712 228l19-5M715 229l16 20M715 229l18-5M718 229l18 23M718 229l20-5M721 229l18 24M721 229l21-5M725 230l20 26M725 230l23-5M728 230l14 19M728 230l16-4M731 230l17 23M731 230l20-4M734 231l19 27M734 231l24-5M738 231l17 25M738 231l22-4M741 232l16 24M741 232l21-4M744 232l18 27M744 232l23-4M748 233l12 19M748 233l16-2M751 234l17 26M751 234l23-3M754 234l16 25M754 234l21-3M758 235l15 24M758 235l21-3M761 236l13 21M761 236l19-2M765 236l15 24M765 236l21-2M768 237l12 19M768 237l17-2M771 238l14 23M771 238l20-2M775 239l12 20M775 239l18-2M778 240l15 26M778 240l23-2M781 240l14 25M781 240l21-2M785 241l12 21M785 241l18-1M788 242l13 23M788 242l20-1M791 243l11 20M791 243l17-1M795 244l11 20M795 244l17-1M798 245l9 17M798 245l14-1M801 246l12 22M801 246l19-1M805 247l11 20M805 247l17-1M808 248l10 19M808 248l17-1M811 249l7 14M811 249l12 0M814 250l9 18M814 250l15 0M818 251l6 12M818 251l10 0M821 252l7 14M821 252l12 0M824 253l7 13M824 253l11 0M827 254l5 9M827 254l8 0M830 255l5 10M830 255l8 0M834 256l5 10M834 256l8 0M837 257l3 7M837 257l6 0M840 258l2 3M840 258l3 0M843 259l0 0M843 259l0 0M846 260l0 0M846 260l0 0"/><path id="f47" d="M603 280l-9 11M603 280l2 15M602 282l-13 15M602 282l3 20M601 284l-11 13M601 284l2 18M600 287l-11 12M600 287l2 17M599 290l-12 13M599 290l3 19M598 292l-15 17M598 292l3 24M597 295l-15 17M597 295l3 25M596 298l-12 14M596 298l3 19M595 301l-14 16M595 301l3 22M594 304l-19 22M594 304l4 31M592 308l-14 16M592 308l3 23M591 311l-17 20M591 311l4 28M590 314l-16 19M590 314l4 26M589 317l-19 22M589 317l4 31M587 321l-18 21M587 321l4 29M586 324l-20 23M586 324l4 32M584 328l-18 21M584 328l4 29M583 332l-15 18M583 332l3 25M582 335l-15 18M582 335l3 25M580 339l-15 17M580 339l3 24M579 343l-21 24M579 343l4 33M577 347l-15 17M577 347l3 25M576 351l-14 17M576 351l3 23M574 355l-22 25M574 355l5 35M573 359l-16 18M573 359l3 25M571 363l-21 24M571 363l4 34M569 367l-15 17M569 367l3 24M568 371l-17 20M568 371l4 28M566 375l-16 18M566 375l3 25M564 379l-20 22M564 379l4 32M563 383l-18 20M563 383l4 29M561 387l-18 20M561 387l4 29M559 391l-18 21M559 391l4 30M558 396l-19 21M558 396l4 30M556 400l-15 17M556 400l3 24M554 404l-16 18M554 404l3 26M552 408l-15 16M552 408l3 24M551 413l-12 14M551 413l2 20M549 417l-16 18M549 417l3 26M547 421l-14 16M547 421l3 23M545 425l-15 16M545 425l3 24M544 430l-11 12M544 430l2 17M542 434l-12 13M542 434l2 19M540 438l-11 12M540 438l2 17M538 442l-11 12M538 442l2 18M536 446l-8 9M536 446l1 12M535 451l-8 9M535 451l1 13M533 455l-7 8M533 455l1 12M531 459l-5 6M531 459l1 8M529 463l-5 5M529 463l1 8M528 467l-3 3M528 467l1 5M526 471l0 0M526 471l0 0M524 475l0 0M524 475l0 0"/><path id="f48" d="M597 201l1-10M597 201l-13-2M595 198l1-11M595 198l-14-2M594 196l0-10M594 196l-13-2M592 193l0-12M592 193l-16-2M590 190l0-12M590 190l-16-2M588 187l-1-12M588 187l-16-1M586 185l-1-10M586 185l-14-1M584 182l-1-9M584 182l-13-1M583 180l-2-13M583 180l-18 0M581 177l-2-13M581 177l-18 0M579 175l-2-12M579 175l-16 0M577 173l-3-13M577 173l-17 0M575 170l-3-13M575 170l-18 1M572 168l-3-12M572 168l-16 1M570 166l-4-14M570 166l-20 1M568 163l-4-13M568 163l-19 2M566 161l-4-12M566 161l-18 2M564 159l-4-11M564 159l-16 2M562 157l-5-13M562 157l-19 2M560 155l-4-12M560 155l-17 2M557 153l-5-14M557 153l-20 3M555 151l-4-11M555 151l-16 3M553 149l-5-12M553 149l-18 3M551 147l-5-10M551 147l-16 3M548 145l-5-11M548 145l-17 3M546 143l-6-12M546 143l-18 4M544 142l-5-9M544 142l-14 3M542 140l-5-9M542 140l-14 3M539 138l-6-10M539 138l-16 4M537 136l-5-9M537 136l-14 3M535 135l-5-10M535 135l-15 4M532 133l-5-8M532 133l-13 3M530 131l-4-7M530 131l-12 3M528 130l-5-8M528 130l-13 3M526 128l-5-9M526 128l-14 4M523 126l-5-8M523 126l-13 4M521 125l-4-6M521 125l-10 3M519 123l-3-5M519 123l-9 2M516 122l-3-4M516 122l-6 2M514 120l-2-4M514 120l-6 2M512 119l-2-3M512 119l-4 1M510 117l0-1M510 117l-1 0M508 116l0 0M508 116l0 0"/><path id="f49" d="M635 282l-4 15M635 282l10 11M635 284l-5 20M635 284l12 14M636 287l-5 20M636 287l13 15M637 289l-5 18M637 289l11 13M638 292l-7 25M638 292l16 18M638 295l-6 23M638 295l15 17M639 298l-5 19M639 298l12 14M640 301l-8 28M640 301l18 21M641 304l-6 20M641 304l13 15M642 307l-6 23M642 307l14 17M643 310l-8 28M643 310l17 20M644 313l-7 27M644 313l17 20M645 317l-7 27M645 317l17 20M646 320l-8 28M646 320l18 21M646 324l-7 26M646 324l17 20M647 327l-7 25M647 327l16 19M649 331l-7 24M649 331l15 18M650 334l-6 23M650 334l14 17M651 338l-8 31M651 338l19 23M652 342l-9 31M652 342l20 23M653 346l-8 29M653 346l18 21M654 349l-8 31M654 349l20 23M655 353l-7 27M655 353l17 20M656 357l-7 25M656 357l16 19M657 361l-7 27M657 361l17 20M658 365l-9 32M658 365l21 24M659 369l-6 23M659 369l14 17M661 373l-8 28M661 373l18 21M662 377l-7 25M662 377l16 18M663 381l-8 30M663 381l19 22M664 386l-7 25M664 386l16 19M665 390l-7 25M665 390l16 18M667 394l-7 25M667 394l16 18M668 398l-7 26M668 398l17 19M669 402l-7 28M669 402l18 21M670 406l-6 23M670 406l15 17M671 411l-7 27M671 411l17 20M673 415l-5 19M673 415l12 14M674 419l-5 20M674 419l13 15M675 423l-5 18M675 423l12 13M676 427l-5 18M676 427l11 13M678 431l-6 22M678 431l14 16M679 435l-5 21M679 435l13 15M680 439l-4 16M680 439l10 11M681 444l-4 15M681 444l9 11M683 448l-4 15M683 448l10 11M684 452l-4 16M684 452l10 11M685 456l-4 15M685 456l9 11M687 460l-3 13M687 460l8 9M688 463l-2 10M688 463l6 7M689 467l-2 6M689 467l4 4M690 471l-1 4M690 471l3 3M692 475l0 0M692 475l0 0M693 479l0 0M693 479l0 0"/><path id="f50" d="M648 191l11-2M648 191l0-9M650 188l11-2M650 188l0-9M651 186l17-3M651 186l0-13M653 183l17-3M653 183l0-13M654 181l18-3M654 181l0-14M656 178l16-2M656 178l0-13M657 176l14-2M657 176l0-11M659 173l16-2M659 173l0-13M660 171l14-2M660 171l0-11M662 168l21-3M662 168l0-16M664 166l16-2M664 166l0-13M665 164l17-2M665 164l0-13M667 161l22-3M667 161l0-17M668 159l17-2M668 159l0-13M670 157l23-3M670 157l1-18M671 154l18-2M671 154l1-14M673 152l21-2M673 152l1-16M674 150l17-2M674 150l1-13M676 148l24-2M676 148l1-18M677 145l20-2M677 145l1-15M679 143l19-2M679 143l1-15M680 141l22-2M680 141l1-17M682 139l22-2M682 139l1-17M683 137l19-2M683 137l1-14M685 135l18-1M685 135l1-13M686 133l22-2M686 133l1-16M688 131l17-1M688 131l1-13M689 129l24-2M689 129l2-18M691 127l20-1M691 127l1-15M692 124l18-1M692 124l1-14M694 123l19-1M694 123l1-14M695 121l17-1M695 121l1-13M697 119l19-1M697 119l1-14M698 117l21-1M698 117l2-15M700 115l19-1M700 115l1-14M701 113l18-1M701 113l1-14M702 111l18-1M702 111l1-13M704 109l19-1M704 109l2-14M705 107l21-1M705 107l2-16M707 105l18-1M707 105l1-13M708 104l20-1M708 104l2-15M709 102l17-1M709 102l1-13M711 100l14-1M711 100l1-11M712 98l14-1M712 98l1-11M713 96l18-1M713 96l1-14M714 95l15-1M714 95l1-11M716 93l14-1M716 93l1-10M717 91l14-1M717 91l1-11M718 90l15-1M718 90l1-11M720 88l12-1M720 88l1-9M721 86l11-1M721 86l1-8M722 85l10-1M722 85l1-8M723 83l8-1M723 83l1-6M724 81l9-1M724 81l1-7M726 80l8-1M726 80l0-6M727 78l6 0M727 78l0-5M728 77l5 0M728 77l0-3M729 75l2 0M729 75l0-2M730 73l0 0M730 73l0 0M731 72l0 0M731 72l0 0"/><path id="f51" d="M580 225l-6-8M580 225l-13 7M577 224l-6-7M577 224l-12 7M575 223l-7-7M575 223l-12 8M572 222l-8-8M572 222l-14 10M569 221l-9-8M569 221l-14 10M566 220l-9-8M566 220l-14 11M563 219l-11-8M563 219l-16 13M560 219l-13-9M560 219l-18 15M557 218l-12-8M557 218l-16 15M554 218l-11-6M554 218l-13 13M551 217l-12-6M551 217l-14 14M548 217l-13-7M548 217l-15 16M545 217l-15-7M545 217l-16 18M541 217l-13-6M541 217l-13 15M538 217l-13-5M538 217l-13 15M535 217l-15-6M535 217l-14 17M532 217l-15-5M532 217l-14 18M528 217l-13-4M528 217l-12 16M525 217l-17-5M525 217l-15 20M522 218l-20-6M522 218l-17 24M518 218l-18-4M518 218l-14 21M515 218l-19-4M515 218l-15 23M512 219l-20-4M512 219l-15 24M508 219l-20-4M508 219l-15 24M505 220l-21-4M505 220l-15 25M502 221l-17-3M502 221l-12 21M498 222l-19-3M498 222l-13 23M495 222l-14-2M495 222l-10 17M492 223l-20-2M492 223l-13 24M488 224l-16-2M488 224l-10 19M485 225l-16-1M485 225l-10 20M481 226l-19-1M481 226l-11 23M478 227l-14-1M478 227l-8 17M475 228l-13-1M475 228l-8 16M471 229l-17-1M471 229l-9 20M468 231l-15 0M468 231l-8 18M465 232l-11 0M465 232l-6 13M461 233l-10 0M461 233l-5 12M458 234l-11 0M458 234l-6 14M455 236l-9 0M455 236l-4 11M452 237l-11 0M452 237l-6 14M448 238l-8 0M448 238l-4 9M445 240l-7 0M445 240l-3 8M442 241l-6 0M442 241l-3 7M439 243l-4 0M439 243l-2 5M436 244l0 0M436 244l0 0M433 246l0 0M433 246l0 0"/><path id="f52" d="M623 190l7-4M623 190l-6-5M623 187l8-5M623 187l-7-6M623 183l11-7M623 183l-10-8M623 180l12-8M623 180l-11-9M623 177l11-7M623 177l-10-8M624 173l12-8M624 173l-11-9M624 170l12-8M624 170l-11-9M624 167l12-8M624 167l-11-9M624 163l12-8M624 163l-11-9M624 160l13-9M624 160l-12-10M624 157l10-7M624 157l-10-8M624 154l12-8M624 154l-11-9M624 150l15-10M624 150l-14-11M624 147l12-9M624 147l-12-9M624 144l14-10M624 144l-13-10M625 141l12-9M625 141l-12-9M625 138l13-9M625 138l-13-10M625 135l15-11M625 135l-15-11M625 132l15-11M625 132l-15-11M625 128l17-12M625 128l-17-12M625 125l14-10M625 125l-14-10M625 122l12-9M625 122l-12-9M625 119l13-10M625 119l-13-9M625 116l11-8M625 116l-11-8M625 113l12-9M625 113l-12-9M625 110l14-11M625 110l-14-10M625 107l14-11M625 107l-14-10M624 104l12-9M624 104l-12-9M624 101l11-9M624 101l-12-8M624 99l10-8M624 99l-11-8M624 96l11-8M624 96l-11-8M624 93l12-10M624 93l-13-9M624 90l11-8M624 90l-11-8M624 87l13-11M624 87l-14-10M624 84l11-9M624 84l-12-8M624 81l10-8M624 81l-11-7M624 78l10-8M624 78l-11-7M624 76l8-6M624 76l-9-6M623 73l10-8M623 73l-11-7M623 70l10-8M623 70l-11-7M623 67l8-7M623 67l-9-6M623 64l8-7M623 64l-10-6M623 62l6-5M623 62l-7-5M623 59l6-5M623 59l-6-4M623 56l5-4M623 56l-6-4M622 53l4-4M622 53l-5-3M622 50l4-3M622 50l-4-3M622 48l3-2M622 48l-3-2M622 45l0 0M622 45l0 0M622 42l0 0M622 42l0 0"/><path id="f53" d="M661 273l3 18M661 273l14 5M664 275l3 17M664 275l13 5M666 276l3 19M666 276l14 5M668 278l3 18M668 278l14 6M670 280l3 18M670 280l14 6M672 282l3 23M672 282l18 7M674 284l3 21M674 284l16 7M677 286l3 27M677 286l21 9M679 289l2 20M679 289l15 7M681 291l3 29M681 291l23 10M684 293l3 28M684 293l21 10M686 296l3 31M686 296l24 11M688 298l3 31M688 298l24 11M691 301l3 32M691 301l24 11M693 303l3 28M693 303l22 10M696 306l2 22M696 306l17 8M698 309l3 31M698 309l24 12M701 311l2 25M701 311l19 9M703 314l2 26M703 314l20 10M706 317l2 31M706 317l24 12M709 320l2 30M709 320l22 11M711 323l2 28M711 323l21 11M714 326l2 35M714 326l26 14M716 329l2 31M716 329l23 12M719 332l2 28M719 332l21 11M722 335l2 26M722 335l20 10M724 338l2 34M724 338l26 13M727 341l2 29M727 341l22 12M730 344l2 33M730 344l25 13M732 347l2 27M732 347l21 11M735 350l1 25M735 350l19 10M738 353l2 29M738 353l22 12M741 357l2 32M741 357l24 13M743 360l1 24M743 360l18 10M746 363l2 31M746 363l23 13M749 366l2 32M749 366l24 13M752 370l1 30M752 370l23 12M754 373l1 30M754 373l23 12M757 376l1 21M757 376l15 8M760 379l1 27M760 379l20 11M763 383l1 29M763 383l22 12M765 386l1 20M765 386l15 8M768 389l1 21M768 389l16 9M771 392l1 21M771 392l16 8M774 396l1 22M774 396l17 9M777 399l1 21M777 399l15 8M779 402l1 20M779 402l15 8M782 405l1 22M782 405l16 9M785 409l1 15M785 409l11 6M788 412l1 14M788 412l11 6M790 415l1 14M790 415l10 6M793 418l1 13M793 418l10 5M796 421l1 11M796 421l8 5M798 425l1 15M798 425l11 6M801 428l1 12M801 428l9 5M804 431l0 7M804 431l5 3M806 434l0 7M806 434l5 3M809 437l0 3M809 437l2 1M812 440l0 0M812 440l0 0M814 443l0 0M814 443l0 0"/><path id="f54" d="M654 200l14 1M654 200l1-10M656 198l12 1M656 198l1-9M658 195l17 1M658 195l2-12M660 193l18 1M660 193l2-13M662 191l19 2M662 191l2-14M664 188l16 1M664 188l2-11M667 186l16 2M667 186l2-11M669 184l16 2M669 184l2-11M671 181l22 2M671 181l3-15M673 179l19 2M673 179l3-13M675 177l19 2M675 177l3-13M677 175l20 3M677 175l3-14M680 172l22 3M680 172l4-15M682 170l19 3M682 170l3-13M684 168l20 3M684 168l4-14M686 166l24 3M686 166l4-16M688 164l24 4M688 164l4-17M690 162l20 3M690 162l4-14M693 160l18 3M693 160l3-12M695 158l26 4M695 158l5-18M697 155l24 4M697 155l5-16M699 153l23 4M699 153l5-16M701 151l21 3M701 151l4-14M703 149l26 4M703 149l5-18M706 147l21 3M706 147l4-14M708 145l19 3M708 145l4-13M710 143l18 3M710 143l4-12M712 141l20 3M712 141l4-13M714 140l21 4M714 140l4-15M716 138l19 3M716 138l4-13M718 136l24 4M718 136l5-16M720 134l21 3M720 134l4-14M722 132l19 3M722 132l4-13M724 130l20 3M724 130l4-13M726 128l19 3M726 128l4-13M728 126l18 3M728 126l4-12M730 124l17 3M730 124l3-11M732 122l16 2M732 122l3-11M734 121l15 2M734 121l3-10M736 119l16 2M736 119l3-11M738 117l12 2M738 117l2-8M740 115l14 2M740 115l3-10M742 113l11 1M742 113l2-7M744 111l12 2M744 111l2-8M746 109l8 1M746 109l1-5M747 108l8 1M747 108l1-5M749 106l6 1M749 106l1-4M751 104l4 0M751 104l1-3M753 102l0 0M753 102l0 0M754 100l0 0M754 100l0 0"/><path id="f55" d="M617 279l-11 15M617 279l8 18M617 281l-12 17M617 281l8 20M617 283l-10 14M617 283l7 17M616 286l-11 16M616 286l8 19M616 288l-12 17M616 288l9 19M616 291l-12 18M616 291l10 21M616 293l-14 22M616 293l11 24M615 296l-13 20M615 296l11 22M615 299l-12 18M615 299l9 19M615 301l-15 23M615 301l12 25M615 304l-13 20M615 304l11 22M615 307l-14 22M615 307l12 23M614 310l-15 23M614 310l13 25M614 313l-11 17M614 313l9 18M614 316l-15 25M614 316l13 26M614 320l-15 24M614 320l13 25M614 323l-14 23M614 323l12 24M614 326l-14 23M614 326l13 24M613 329l-14 23M613 329l13 24M613 333l-12 20M613 333l11 21M613 336l-14 24M613 336l13 24M613 340l-11 19M613 340l11 19M613 343l-14 24M613 343l13 24M613 347l-15 25M613 347l14 26M613 350l-13 23M613 350l13 23M613 354l-14 24M613 354l14 25M613 357l-16 28M613 357l16 28M613 361l-16 27M613 361l16 27M613 365l-11 20M613 365l11 20M613 368l-15 26M613 368l15 26M613 372l-14 24M613 372l14 24M613 376l-10 18M613 376l11 18M613 379l-12 21M613 379l12 21M613 383l-11 20M613 383l11 19M613 387l-10 18M613 387l10 17M613 391l-12 22M613 391l12 21M613 394l-13 25M613 394l14 24M613 398l-10 19M613 398l11 18M614 402l-12 23M614 402l13 22M614 405l-11 21M614 405l12 20M614 409l-8 16M614 409l9 15M614 413l-11 21M614 413l12 20M614 417l-9 18M614 417l10 17M614 420l-10 19M614 420l11 18M614 424l-9 17M614 424l10 16M614 427l-8 16M614 427l9 15M615 431l-7 13M615 431l7 12M615 435l-7 14M615 435l8 13M615 438l-7 13M615 438l8 12M615 442l-6 11M615 442l7 11M615 445l-4 8M615 445l5 7M616 448l-3 7M616 448l4 6M616 452l-2 4M616 452l2 3M616 455l0 0M616 455l0 0M616 458l0 0M616 458l0 0"/><path id="f56" d="M600 195l1-9M600 195l-12-3M598 192l1-10M598 192l-12-3M596 189l1-9M596 189l-11-3M595 186l1-10M595 186l-12-3M593 183l1-14M593 183l-17-4M592 180l1-13M592 180l-17-4M590 177l1-14M590 177l-17-4M588 174l1-15M588 174l-19-4M587 171l1-11M587 171l-14-3M585 168l1-15M585 168l-18-4M584 165l1-15M584 165l-19-4M582 162l1-12M582 162l-15-3M580 159l1-14M580 159l-17-3M579 156l1-17M579 156l-22-4M577 154l1-13M577 154l-17-3M576 151l1-16M576 151l-20-4M574 148l0-13M574 148l-16-3M572 145l0-16M572 145l-20-4M571 143l0-13M571 143l-17-3M569 140l0-15M569 140l-19-3M568 138l0-14M568 138l-18-3M566 135l0-17M566 135l-21-4M565 132l0-16M565 132l-20-3M563 130l0-14M563 130l-18-3M562 127l0-15M562 127l-19-3M560 125l0-13M560 125l-17-3M559 122l0-15M559 122l-19-3M557 120l0-12M557 120l-15-3M556 118l0-13M556 118l-17-3M554 115l0-13M554 115l-16-3M553 113l0-11M553 113l-15-2M551 110l0-9M551 110l-12-2M550 108l0-10M550 108l-12-2M548 106l0-11M548 106l-14-2M547 104l0-9M547 104l-11-2M546 101l0-10M546 101l-13-2M544 99l0-9M544 99l-11-2M543 97l0-9M543 97l-12-2M542 95l0-8M542 95l-10-2M540 92l0-6M540 92l-8-2M539 90l0-5M539 90l-6-1M538 88l0-3M538 88l-3-1M537 86l0-1M537 86l-1 0M535 84l0 0M535 84l0 0"/><path id="f57" d="M653 201l15-2M653 201l1-11M654 198l13-1M654 198l1-10M656 196l15-1M656 196l2-11M658 193l14 0M658 193l2-10M660 191l17 0M660 191l3-12M662 189l19 0M662 189l3-13M664 187l18 1M664 187l4-13M666 185l14 1M666 185l3-10M668 182l18 2M668 182l4-12M670 180l19 2M670 180l5-13M672 178l16 2M672 178l5-11M675 177l22 4M675 177l7-15M677 175l19 3M677 175l6-12M679 173l19 4M679 173l7-12M681 171l22 5M681 171l8-14M684 169l22 5M684 169l9-14M686 168l21 6M686 168l9-13M688 166l25 7M688 166l11-15M691 165l22 7M691 165l10-13M693 163l20 7M693 163l9-12M695 162l18 6M695 162l9-10M698 161l22 8M698 161l11-13M700 159l21 8M700 159l11-12M703 158l22 9M703 158l12-12M705 157l20 9M705 157l11-11M708 156l17 8M708 156l10-9M710 154l17 8M710 154l10-9M713 153l18 9M713 153l11-9M716 152l17 9M716 152l11-9M718 151l24 12M718 151l15-12M721 150l21 11M721 150l13-10M723 149l18 10M723 149l12-9M726 149l21 12M726 149l14-10M729 148l20 12M729 148l14-9M731 147l15 9M731 147l10-7M734 146l20 12M734 146l14-9M737 146l15 10M737 146l11-7M739 145l20 13M739 145l15-9M742 144l14 9M742 144l10-6M745 144l14 10M745 144l11-6M747 143l13 9M747 143l10-5M750 143l16 11M750 143l13-7M753 142l15 11M753 142l12-6M755 142l13 9M755 142l10-5M758 141l10 7M758 141l8-4M761 141l10 8M761 141l8-4M763 140l10 8M763 140l9-4M766 140l7 5M766 140l6-2M769 140l8 6M769 140l7-3M771 139l6 5M771 139l5-2M774 139l4 3M774 139l3-1M776 139l0 0M776 139l0 0M779 139l0 0M779 139l0 0"/><path id="f58" d="M636 283l-6 21M636 283l14 15M637 285l-5 19M637 285l12 13M638 288l-5 18M638 288l12 13M638 290l-5 18M638 290l12 13M639 293l-7 23M639 293l15 17M640 296l-7 24M640 296l16 17M641 298l-8 27M641 298l18 19M642 301l-7 27M642 301l18 19M643 304l-6 22M643 304l14 15M644 307l-6 22M644 307l14 15M645 310l-6 23M645 310l15 16M646 314l-6 22M646 314l15 16M647 317l-8 28M647 317l19 20M648 320l-8 31M648 320l20 22M649 323l-9 32M649 323l21 22M650 327l-7 24M650 327l16 17M651 330l-9 32M651 330l21 22M652 334l-7 26M652 334l17 18M653 337l-7 27M653 337l18 19M654 341l-8 31M654 341l20 22M656 344l-6 23M656 344l15 16M657 348l-6 23M657 348l16 16M658 352l-9 32M658 352l21 23M659 356l-7 26M659 356l17 18M661 359l-7 27M661 359l18 18M662 363l-8 29M662 363l19 20M663 367l-8 30M663 367l20 21M664 371l-6 22M664 371l15 15M666 375l-7 26M666 375l17 18M667 379l-7 27M667 379l18 18M668 383l-7 27M668 383l18 19M670 387l-6 24M670 387l16 16M671 391l-7 28M671 391l18 19M673 395l-8 31M673 395l21 21M674 399l-6 25M674 399l16 17M675 403l-6 26M675 403l17 18M677 407l-5 21M677 407l14 14M678 411l-5 22M678 411l15 15M680 415l-6 25M680 415l17 17M681 419l-5 19M681 419l13 13M682 423l-6 26M682 423l17 17M684 427l-6 25M684 427l17 17M685 431l-4 17M685 431l11 11M687 435l-6 23M687 435l16 16M688 439l-4 18M688 439l12 12M690 444l-5 20M690 444l13 13M691 447l-4 18M691 447l12 12M693 451l-3 14M693 451l9 9M694 455l-3 15M694 455l10 10M696 459l-3 13M696 459l9 9M697 463l-3 12M697 463l8 8M699 467l-2 8M699 467l6 5M700 471l-2 8M700 471l5 5M702 475l-1 5M702 475l3 3M703 479l0 0M703 479l0 0M705 482l0 0M705 482l0 0"/><path id="f59" d="M575 247l-12-3M575 247l-9 14M572 247l-15-3M572 247l-12 18M569 248l-12-2M569 248l-9 14M566 248l-13-2M566 248l-10 16M563 249l-15-2M563 249l-11 18M561 249l-15-2M561 249l-10 18M558 250l-19-2M558 250l-13 23M555 251l-20-2M555 251l-13 24M552 252l-21-1M552 252l-13 25M549 253l-19-1M549 253l-12 23M546 254l-15-1M546 254l-9 18M543 255l-20 0M543 255l-12 24M540 256l-20 0M540 256l-11 25M537 257l-20 0M537 257l-11 25M534 258l-19 0M534 258l-10 23M531 259l-23 1M531 259l-12 28M527 261l-25 1M527 261l-13 30M524 262l-18 1M524 262l-9 22M521 263l-23 1M521 263l-11 28M518 265l-21 1M518 265l-10 25M515 266l-22 2M515 266l-10 27M511 268l-26 2M511 268l-12 32M508 269l-27 2M508 269l-12 33M505 271l-24 2M505 271l-11 29M502 272l-19 2M502 272l-9 24M498 274l-26 3M498 274l-11 32M495 276l-19 2M495 276l-8 24M492 277l-21 3M492 277l-9 26M489 279l-25 3M489 279l-10 31M485 281l-20 3M485 281l-8 25M482 282l-19 3M482 282l-8 24M479 284l-25 4M479 284l-10 31M475 286l-25 4M475 286l-10 31M472 288l-19 3M472 288l-7 24M469 290l-19 3M469 290l-7 24M465 292l-18 3M465 292l-7 22M462 294l-16 3M462 294l-6 20M459 295l-17 3M459 295l-6 21M456 297l-22 4M456 297l-8 27M452 299l-15 3M452 299l-5 18M449 301l-15 3M449 301l-6 19M446 303l-14 3M446 303l-5 18M443 305l-13 2M443 305l-5 16M439 307l-15 3M439 307l-5 19M436 309l-16 3M436 309l-6 20M433 311l-15 3M433 311l-5 19M430 313l-13 3M430 313l-5 16M427 315l-13 3M427 315l-4 16M423 317l-8 2M423 317l-3 10M420 319l-8 2M420 319l-3 10M417 321l-9 2M417 321l-3 11M414 323l-5 1M414 323l-2 6M411 325l-3 1M411 325l-1 4M408 327l0 0M408 327l0 0M405 329l0 0M405 329l0 0"/><path id="f60" d="M672 244l10 12M672 244l11-3M675 244l11 14M675 244l12-3M678 245l11 14M678 245l13-3M681 245l11 16M681 245l14-2M684 245l12 18M684 245l16-2M687 246l11 17M687 246l15-2M690 247l11 19M690 247l16-1M693 247l13 23M693 247l20-1M696 248l10 17M696 248l15-1M699 249l12 23M699 249l20 0M702 250l13 25M702 250l21 0M705 251l11 22M705 251l18 1M709 252l10 21M709 252l18 1M712 254l13 28M712 254l24 2M715 255l10 22M715 255l19 2M718 256l9 22M718 256l19 2M721 258l10 25M721 258l21 3M724 259l11 29M724 259l24 3M728 261l8 22M728 261l19 3M731 263l9 25M731 263l21 3M734 264l9 25M734 264l21 4M737 266l11 31M737 266l26 5M741 268l9 27M741 268l22 5M744 270l10 32M744 270l26 6M747 272l7 24M747 272l20 5M751 274l8 26M751 274l21 5M754 276l8 30M754 276l24 6M757 279l9 32M757 279l26 7M760 281l7 27M760 281l22 6M764 283l6 24M764 283l20 6M767 285l6 23M767 285l18 6M770 288l7 27M770 288l22 7M774 290l5 23M774 290l19 6M777 293l7 30M777 293l24 8M780 295l6 30M780 295l24 8M783 298l5 22M783 298l17 6M787 300l5 23M787 300l18 6M790 303l5 28M790 303l22 8M793 306l5 25M793 306l20 7M796 309l5 26M796 309l21 8M800 311l4 21M800 311l16 6M803 314l3 18M803 314l14 6M806 317l3 19M806 317l15 6M809 320l4 22M809 320l17 7M812 323l3 17M812 323l13 6M816 326l2 17M816 326l13 6M819 329l2 16M819 329l13 5M822 332l2 15M822 332l12 5M825 335l2 14M825 335l11 5M828 338l2 15M828 338l12 5M831 341l1 10M831 341l7 3M834 344l1 7M834 344l6 3M837 347l1 8M837 347l6 3M840 350l0 5M840 350l3 2M843 353l0 0M843 353l0 0M846 356l0 0M846 356l0 0"/><path id="f61" d="M645 205l8-1M645 205l0-7M647 202l11-1M647 202l0-9M649 199l14-1M649 199l1-11M651 197l15-1M651 197l1-11M653 194l16-1M653 194l2-12M655 191l17 0M655 191l2-13M657 189l12 0M657 189l2-9M659 186l15 1M659 186l3-11M661 184l14 1M661 184l3-10M663 182l19 2M663 182l4-13M665 180l17 2M665 180l4-12M668 178l19 3M668 178l5-13M670 175l20 3M670 175l6-13M672 174l22 4M672 174l7-14M675 172l20 4M675 172l7-13M677 170l21 5M677 170l8-14M679 168l19 5M679 168l7-12M682 166l15 4M682 166l6-9M684 165l21 6M684 165l9-13M687 163l15 5M687 163l7-9M689 162l15 5M689 162l7-9M692 160l20 7M692 160l10-12M694 159l16 6M694 159l8-9M697 157l18 8M697 157l10-10M700 156l13 6M700 156l7-7M702 155l14 6M702 155l8-8M705 154l17 8M705 154l10-9M707 153l12 6M707 153l7-6M710 152l15 7M710 152l9-8M713 151l16 9M713 151l10-8M715 150l11 6M715 150l7-6M718 149l13 8M718 149l9-6M720 148l12 7M720 148l8-6M723 147l11 6M723 147l7-5M726 147l10 6M726 147l7-5M728 146l8 5M728 146l6-4M731 145l5 3M731 145l4-2M733 145l4 3M733 145l3-2M736 144l2 1M736 144l1-1M738 144l0 0M738 144l0 0"/><path id="f62" d="M633 193l9-5M633 193l-4-8M634 190l10-6M634 190l-4-9M634 187l11-6M634 187l-5-10M635 184l13-7M635 184l-5-12M636 181l10-5M636 181l-4-9M637 178l14-7M637 178l-6-13M638 174l14-7M638 174l-5-13M639 171l14-7M639 171l-5-13M639 168l16-8M639 168l-6-14M640 165l12-6M640 165l-4-10M641 162l16-8M641 162l-6-14M642 159l17-8M642 159l-6-15M643 156l13-6M643 156l-4-11M644 154l16-7M644 154l-5-14M645 151l18-8M645 151l-6-16M646 148l14-6M646 148l-5-12M647 145l18-8M647 145l-6-16M648 142l19-8M648 142l-6-16M649 139l16-7M649 139l-5-14M649 137l14-6M649 137l-4-12M650 134l14-6M650 134l-4-12M651 131l18-8M651 131l-5-16M652 129l16-6M652 129l-4-14M653 126l15-6M653 126l-4-13M654 123l16-6M654 123l-4-13M655 121l19-8M655 121l-5-16M656 118l14-6M656 118l-4-12M657 116l12-5M657 116l-3-11M658 113l18-7M658 113l-5-16M659 111l14-5M659 111l-3-12M660 108l14-5M660 108l-3-12M661 106l17-7M661 106l-4-15M662 103l13-5M662 103l-3-11M663 101l11-4M663 101l-3-10M664 98l15-6M664 98l-4-13M665 96l11-4M665 96l-3-10M665 93l11-4M665 93l-3-9M666 91l14-5M666 91l-3-12M667 89l10-4M667 89l-2-8M668 86l12-4M668 86l-3-10M669 84l9-3M669 84l-2-7M670 82l8-3M670 82l-2-7M671 79l7-2M671 79l-2-6M672 77l6-2M672 77l-2-5M673 75l5-2M673 75l-1-4M674 72l3-1M674 72l-1-3M674 70l0 0M674 70l0 0M675 68l0 0M675 68l0 0"/><path id="f63" d="M898 327l-13 10M898 327l1 18M896 329l-12 9M896 329l2 17M895 332l-17 14M895 332l3 24M894 334l-15 13M894 334l3 22M892 337l-13 11M892 337l3 18M891 340l-14 12M891 340l3 20M890 343l-14 13M890 343l3 20M888 346l-18 17M888 346l5 27M887 349l-20 19M887 349l6 30M886 352l-15 15M886 352l5 23M884 356l-20 20M884 356l6 30M883 359l-16 17M883 359l5 25M882 363l-19 20M882 363l7 29M881 366l-21 22M881 366l7 32M879 370l-19 20M879 370l7 29M878 374l-20 22M878 374l8 31M877 378l-17 19M877 378l7 27M876 382l-14 16M876 382l6 22M874 386l-18 21M874 386l8 28M873 390l-19 22M873 390l8 29M872 394l-16 18M872 394l7 24M871 398l-17 20M871 398l8 27M870 403l-16 19M870 403l8 26M868 407l-14 17M868 407l7 22M867 411l-16 19M867 411l8 25M866 416l-16 20M866 416l8 26M865 420l-17 21M865 420l8 27M864 425l-18 22M864 425l9 29M863 429l-16 20M863 429l8 25M862 434l-19 24M862 434l10 31M861 439l-18 22M861 439l9 29M859 443l-18 23M859 443l10 29M858 448l-16 21M858 448l9 26M857 453l-15 20M857 453l8 25M856 457l-14 18M856 457l8 23M855 462l-15 20M855 462l8 25M854 467l-12 16M854 467l7 20M853 472l-13 17M853 472l7 21M853 476l-13 17M853 476l7 21M852 481l-11 15M852 481l7 18M851 486l-9 13M851 486l6 16M850 491l-8 11M850 491l5 13M849 496l-7 10M849 496l4 12M848 500l-7 10M848 500l5 12M847 505l-7 10M847 505l4 12M846 510l-7 9M846 510l4 11M846 514l-5 7M846 514l3 8M845 519l-3 4M845 519l2 4M844 524l0 0M844 524l0 0M843 528l0 0M843 528l0 0"/><path id="f64" d="M896 243l2-9M896 243l-12-2M894 240l2-8M894 240l-11-2M893 237l2-10M893 237l-13-2M891 234l2-11M891 234l-14-2M889 231l2-13M889 231l-17-2M888 228l2-11M888 228l-14-2M886 225l2-11M886 225l-15-2M884 222l2-15M884 222l-19-2M883 220l1-11M883 220l-14-1M881 217l1-14M881 217l-18-2M879 214l1-12M879 214l-16-1M878 212l1-15M878 212l-20-1M876 209l1-15M876 209l-20-1M874 206l1-12M874 206l-16-1M873 204l1-16M873 204l-22-1M871 201l0-14M871 201l-20 0M869 199l0-14M869 199l-19 0M867 197l0-17M867 197l-24 0M866 194l0-17M866 194l-23 0M864 192l0-14M864 192l-19 0M862 190l-1-16M862 190l-23 1M860 187l-1-13M860 187l-18 1M859 185l-1-15M859 185l-21 1M857 183l-1-12M857 183l-17 1M855 181l-1-16M855 181l-22 1M853 179l-2-17M853 179l-24 2M852 177l-2-15M852 177l-21 2M850 175l-1-11M850 175l-16 1M848 173l-2-14M848 173l-20 2M846 171l-2-13M846 171l-19 2M845 169l-2-13M845 169l-18 2M843 167l-2-11M843 167l-16 2M841 165l-2-11M841 165l-16 2M839 163l-2-12M839 163l-17 2M838 161l-2-9M838 161l-13 2M836 160l-2-12M836 160l-17 2M834 158l-2-9M834 158l-13 2M833 156l-2-9M833 156l-13 2M831 154l-2-8M831 154l-11 2M829 153l-2-8M829 153l-11 2M828 151l-2-9M828 151l-13 2M826 150l-2-6M826 150l-9 1M824 148l-1-5M824 148l-7 1M823 147l-1-4M823 147l-6 1M821 145l-1-4M821 145l-5 1M819 144l0 0M819 144l0 0M818 142l0 0M818 142l0 0"/><path id="f65" d="M880 308l-16 3M880 308l-5 20M878 310l-13 2M878 310l-4 16M875 311l-12 2M875 311l-4 15M873 313l-18 4M873 313l-6 23M871 314l-20 4M871 314l-6 25M868 316l-18 4M868 316l-5 23M866 318l-15 4M866 318l-4 19M863 319l-16 4M863 319l-4 21M861 321l-22 6M861 321l-6 28M858 323l-23 6M858 323l-6 29M856 325l-16 4M856 325l-4 20M853 327l-17 5M853 327l-4 22M850 329l-20 5M850 329l-5 25M848 331l-19 5M848 331l-4 24M845 333l-23 7M845 333l-5 30M842 335l-20 6M842 335l-4 26M839 338l-24 7M839 338l-5 31M837 340l-18 6M837 340l-4 24M834 342l-22 7M834 342l-4 28M831 344l-26 8M831 344l-5 33M828 347l-24 7M828 347l-5 30M825 349l-18 6M825 349l-3 23M822 352l-18 6M822 352l-3 23M819 354l-23 7M819 354l-4 29M816 357l-20 7M816 357l-4 26M813 359l-20 7M813 359l-4 26M810 362l-21 7M810 362l-4 27M807 364l-22 7M807 364l-4 28M804 367l-25 8M804 367l-4 32M802 369l-18 6M802 369l-3 23M799 372l-21 7M799 372l-4 26M796 375l-18 6M796 375l-3 23M792 377l-20 7M792 377l-3 25M789 380l-21 7M789 380l-4 26M786 382l-15 5M786 382l-3 20M783 385l-18 6M783 385l-3 23M780 388l-19 6M780 388l-3 24M777 390l-13 4M777 390l-2 17M774 393l-18 6M774 393l-3 23M771 396l-15 5M771 396l-2 19M768 398l-14 5M768 398l-2 18M765 401l-14 5M765 401l-2 18M762 404l-14 5M762 404l-2 18M760 406l-9 3M760 406l-2 12M757 409l-10 4M757 409l-2 13M754 411l-7 2M754 411l-1 9M751 414l-7 2M751 414l-1 9M748 416l-6 2M748 416l-1 7M745 419l-3 1M745 419l-1 4M742 421l0 0M742 421l0 0M739 424l0 0M739 424l0 0"/><path id="f66" d="M927 325l-4 16M927 325l10 12M928 328l-3 14M928 328l9 11M928 330l-4 17M928 330l10 13M929 333l-4 16M929 333l10 12M930 335l-6 20M930 335l12 16M931 338l-7 24M931 338l15 19M931 341l-7 22M931 341l13 18M932 344l-8 25M932 344l15 21M933 347l-6 20M933 347l12 16M933 350l-6 18M933 350l11 15M934 354l-8 24M934 354l14 20M934 357l-8 24M934 357l14 20M935 360l-9 25M935 360l14 21M936 364l-8 23M936 364l13 20M936 368l-9 26M936 368l15 23M937 371l-10 28M937 371l15 24M937 375l-11 30M937 375l17 26M938 379l-9 23M938 379l13 21M938 383l-9 25M938 383l14 22M939 387l-11 29M939 387l16 26M939 391l-9 22M939 391l12 20M940 395l-8 21M940 395l12 19M940 399l-9 23M940 399l13 21M940 403l-8 21M940 403l11 19M941 408l-11 28M941 408l15 25M941 412l-11 28M941 412l15 26M942 416l-9 22M942 416l12 21M942 420l-8 20M942 420l11 19M942 425l-8 19M942 425l10 18M943 429l-9 21M943 429l11 19M943 434l-8 19M943 434l10 17M943 438l-9 21M943 438l11 20M944 442l-10 22M944 442l12 21M944 447l-8 19M944 447l10 17M944 451l-7 16M944 451l9 15M945 456l-9 21M945 456l11 20M945 460l-7 15M945 460l8 14M945 465l-7 15M945 465l8 15M945 469l-7 15M945 469l8 15M945 474l-7 15M945 474l8 14M946 478l-6 12M946 478l6 12M946 482l-6 13M946 482l7 13M946 487l-5 11M946 487l6 11M946 491l-6 12M946 491l6 12M946 496l-4 9M946 496l5 9M946 500l-4 8M946 500l4 8M947 504l-2 5M947 504l3 5M947 508l0 0M947 508l0 0M947 513l0 0M947 513l0 0"/><path id="f67" d="M940 338l-3 17M940 338l11 11M941 340l-4 21M941 340l14 14M942 342l-4 20M942 342l13 13M943 344l-3 18M943 344l12 11M944 347l-3 19M944 347l13 12M945 349l-4 21M945 349l14 14M946 352l-5 25M946 352l16 17M947 354l-4 20M947 354l13 13M948 357l-5 26M948 357l17 17M949 360l-5 26M949 360l17 17M950 363l-4 20M950 363l13 14M951 365l-5 27M951 365l18 18M952 368l-4 21M952 368l14 14M953 371l-5 22M953 371l14 15M954 374l-6 27M954 374l18 19M956 377l-5 24M956 377l16 16M957 381l-7 31M957 381l20 22M958 384l-6 27M958 384l18 19M959 387l-6 26M959 387l17 18M960 390l-7 31M960 390l20 22M961 394l-5 22M961 394l15 16M963 397l-7 31M963 397l20 21M964 400l-5 23M964 400l15 16M965 404l-5 24M965 404l16 17M966 407l-8 34M966 407l22 24M967 411l-7 31M967 411l20 22M969 414l-6 25M969 414l16 18M970 418l-5 24M970 418l16 17M971 421l-8 34M971 421l22 24M972 425l-7 31M972 425l20 22M974 429l-7 32M974 429l21 23M975 433l-6 24M975 433l16 17M976 436l-7 30M976 436l19 21M977 440l-6 27M977 440l17 19M979 444l-6 25M979 444l16 18M980 448l-6 26M980 448l17 18M981 451l-7 29M981 451l19 21M982 455l-6 26M982 455l17 18M984 459l-6 26M984 459l17 18M985 463l-5 23M985 463l15 16M986 467l-7 30M986 467l19 21M988 471l-7 28M988 471l18 20M989 475l-7 29M989 475l19 21M990 479l-6 25M990 479l16 18M992 483l-7 29M992 483l18 20M993 487l-6 25M993 487l16 18M994 490l-6 25M994 490l16 18M995 494l-6 24M995 494l16 17M997 498l-6 25M997 498l16 18M998 502l-5 21M998 502l14 15M999 506l-4 18M999 506l12 13M1001 510l-4 17M1001 510l11 12M1002 514l-4 18M1002 514l11 13M1003 518l-4 16M1003 518l10 11M1005 522l-5 22M1005 522l14 16M1006 526l-4 18M1006 526l12 13M1007 530l-4 19M1007 530l12 13M1008 534l-3 13M1008 534l8 9M1010 538l-4 15M1010 538l10 11M1011 541l-4 17M1011 541l11 12M1012 545l-3 14M1012 545l9 10M1014 549l-3 11M1014 549l7 8M1015 553l-2 10M1015 553l7 7M1016 557l-2 7M1016 557l5 5M1017 561l-1 6M1017 561l4 4M1019 564l-1 4M1019 564l3 3M1020 568l0 0M1020 568l0 0M1021 572l0 0M1021 572l0 0M1022 575l0 0M1022 575l0 0"/><path id="f68" d="M973 289l8 12M973 289l10-3M976 289l11 15M976 289l13-4M979 289l13 19M979 289l16-5M982 290l12 18M982 290l15-4M985 290l14 21M985 290l17-4M988 291l10 16M988 291l13-3M991 291l12 19M991 291l16-3M994 292l11 18M994 292l15-3M998 292l13 21M998 292l18-3M1001 293l13 22M1001 293l18-3M1004 294l10 18M1004 294l15-2M1007 294l11 20M1007 294l16-2M1011 295l11 21M1011 295l17-2M1014 296l15 28M1014 296l23-3M1017 297l14 27M1017 297l22-3M1021 298l11 21M1021 298l17-2M1024 299l14 28M1024 299l23-2M1028 300l11 21M1028 300l18-2M1031 301l13 27M1031 301l22-2M1035 302l10 22M1035 302l18-1M1038 303l10 21M1038 303l17-1M1042 304l14 30M1042 304l25-1M1045 306l10 23M1045 306l19-1M1049 307l10 23M1049 307l19-1M1052 308l14 32M1052 308l26-1M1056 309l13 31M1056 309l25-1M1059 311l10 24M1059 311l20 0M1063 312l13 31M1063 312l25 0M1067 313l11 27M1067 313l22 0M1070 315l11 28M1070 315l23 0M1074 316l9 23M1074 316l18 0M1077 318l12 30M1077 318l25 0M1081 319l11 27M1081 319l22 0M1084 321l12 30M1084 321l24 1M1088 322l11 29M1088 322l23 1M1092 324l8 22M1092 324l18 1M1095 325l8 22M1095 325l18 1M1099 327l7 20M1099 327l16 1M1102 329l7 19M1102 329l15 1M1106 330l7 18M1106 330l14 1M1109 332l7 19M1109 332l16 1M1113 333l8 21M1113 333l17 1M1116 335l6 16M1116 335l13 1M1120 337l7 20M1120 337l16 1M1123 338l6 17M1123 338l13 1M1127 340l5 16M1127 340l13 1M1130 342l6 18M1130 342l15 1M1134 344l5 15M1134 344l12 1M1137 345l4 13M1137 345l10 1M1141 347l4 12M1141 347l10 1M1144 349l4 12M1144 349l9 1M1147 351l2 7M1147 351l6 1M1151 352l3 8M1151 352l6 1M1154 354l1 3M1154 354l2 0M1157 356l0 0M1157 356l0 0M1160 357l0 0M1160 357l0 0"/><path id="f69" d="M941 330l-2 20M941 330l14 13M942 332l-2 16M942 332l11 10M943 335l-2 18M943 335l12 11M944 337l-3 23M944 337l16 15M945 339l-2 18M945 339l12 11M947 342l-3 25M947 342l17 16M948 345l-3 25M948 345l17 16M949 347l-3 23M949 347l15 14M950 350l-3 22M950 350l15 14M952 353l-3 28M952 353l18 18M953 355l-4 30M953 355l20 19M954 358l-3 22M954 358l15 14M956 361l-3 26M956 361l17 17M957 364l-3 27M957 364l18 17M958 367l-3 27M958 367l18 17M960 370l-3 26M960 370l17 16M961 374l-3 24M961 374l16 15M963 377l-3 29M963 377l19 18M964 380l-4 32M964 380l21 20M966 383l-3 24M966 383l16 15M967 387l-3 26M967 387l17 16M969 390l-4 33M969 390l22 21M971 393l-4 33M971 393l22 21M972 397l-4 31M972 397l21 20M974 400l-3 23M974 400l16 15M976 404l-4 32M976 404l21 20M977 407l-4 35M977 407l24 22M979 411l-4 35M979 411l24 22M981 415l-4 32M981 415l21 20M982 418l-3 24M982 418l16 15M984 422l-4 33M984 422l22 21M986 426l-3 25M986 426l17 16M988 429l-3 30M988 429l20 19M990 433l-4 34M990 433l23 21M991 437l-3 31M991 437l20 19M993 440l-3 23M993 440l16 15M995 444l-3 25M995 444l17 16M997 448l-3 32M997 448l21 20M999 452l-2 23M999 452l15 14M1001 456l-3 27M1001 456l18 17M1002 459l-3 25M1002 459l17 15M1004 463l-2 21M1004 463l14 13M1006 467l-3 26M1006 467l17 16M1008 471l-2 19M1008 471l13 12M1010 475l-2 19M1010 475l13 12M1012 478l-2 21M1012 478l14 13M1014 482l-2 18M1014 482l12 11M1016 486l-2 17M1016 486l11 10M1018 490l-2 21M1018 490l14 13M1020 493l-2 21M1020 493l14 13M1021 497l-2 21M1021 497l14 13M1023 501l-1 14M1023 501l10 9M1025 505l-1 16M1025 505l11 9M1027 508l-1 14M1027 508l9 8M1029 512l-1 14M1029 512l10 8M1031 516l-1 12M1031 516l8 7M1033 519l-1 12M1033 519l8 7M1035 523l-1 8M1035 523l6 5M1037 526l0 5M1037 526l3 3M1039 530l0 3M1039 530l2 2M1041 534l0 0M1041 534l0 0M1043 537l0 0M1043 537l0 0"/><path id="f70" d="M881 242l-2-9M881 242l-12 0M879 240l-2-8M879 240l-12 0M877 237l-2-9M877 237l-13 0M875 235l-2-9M875 235l-12 0M873 233l-3-11M873 233l-16 0M871 230l-3-11M871 230l-15 0M869 228l-4-13M869 228l-19 0M867 226l-4-12M867 226l-17 0M865 223l-3-11M865 223l-16 0M863 221l-5-16M863 221l-22 1M860 219l-5-16M860 219l-22 1M858 217l-5-15M858 217l-21 1M856 215l-4-12M856 215l-17 1M854 212l-4-14M854 212l-19 1M852 210l-5-14M852 210l-20 1M850 208l-5-14M850 208l-20 1M848 206l-4-12M848 206l-17 1M846 204l-5-15M846 204l-21 1M844 202l-6-17M844 202l-24 1M842 200l-6-16M842 200l-23 1M840 197l-6-17M840 197l-25 1M838 195l-6-16M838 195l-24 1M836 193l-6-17M836 193l-24 1M834 191l-6-18M834 191l-26 1M832 189l-6-18M832 189l-26 2M830 187l-6-17M830 187l-25 2M828 185l-5-15M828 185l-21 1M826 183l-6-16M826 183l-24 1M824 181l-6-16M824 181l-23 1M822 179l-6-18M822 179l-25 2M820 177l-6-16M820 177l-24 2M818 175l-5-15M818 175l-21 1M816 173l-5-13M816 173l-19 1M814 171l-5-14M814 171l-20 1M812 169l-5-13M812 169l-19 1M810 168l-6-15M810 168l-22 1M808 166l-6-16M808 166l-23 1M806 164l-4-12M806 164l-17 1M804 162l-5-14M804 162l-20 1M802 160l-5-15M802 160l-22 1M800 158l-4-12M800 158l-18 1M798 156l-4-11M798 156l-15 1M797 154l-5-13M797 154l-19 1M795 153l-4-11M795 153l-16 1M793 151l-3-10M793 151l-14 1M791 149l-3-10M791 149l-15 1M789 147l-3-9M789 147l-12 1M788 145l-3-9M788 145l-13 0M786 143l-3-10M786 143l-14 0M784 142l-3-8M784 142l-11 0M783 140l-2-7M783 140l-10 0M781 138l-3-9M781 138l-12 0M779 136l-3-9M779 136l-13 0M778 134l-2-8M778 134l-11 0M776 133l-2-6M776 133l-8 0M774 131l-2-7M774 131l-9 0M773 129l-1-4M773 129l-5 0M771 127l-1-3M771 127l-4 0M770 125l0-1M770 125l-2 0M768 124l0 0M768 124l0 0M767 122l0 0M767 122l0 0"/><path id="f71" d="M946 249l11 0M946 249l0-8M948 246l11 0M948 246l0-8M950 244l16 0M950 244l1-11M952 242l12 0M952 242l1-9M953 239l15 0M953 239l1-11M955 237l18 1M955 237l2-13M957 235l17 1M957 235l2-12M959 233l20 1M959 233l2-14M961 231l16 1M961 231l2-12M963 229l21 2M963 229l3-15M965 227l15 2M965 227l2-10M967 225l22 3M967 225l4-15M969 223l19 3M969 223l3-13M971 221l15 2M971 221l3-11M973 219l18 3M973 219l4-12M975 217l24 4M975 217l5-16M977 215l22 4M977 215l5-15M979 213l22 5M979 213l5-15M981 212l23 5M981 212l6-15M983 210l16 4M983 210l4-11M985 208l19 5M985 208l5-13M987 207l20 5M987 207l6-13M989 205l24 6M989 205l7-16M991 203l24 7M991 203l7-16M993 202l17 5M993 202l6-11M995 200l24 7M995 200l8-16M997 199l20 6M997 199l7-13M1000 197l18 6M1000 197l6-11M1002 196l16 5M1002 196l6-10M1004 195l19 6M1004 195l7-12M1006 193l19 7M1006 193l7-12M1008 192l18 6M1008 192l7-11M1010 191l16 6M1010 191l7-10M1012 189l21 8M1012 189l8-13M1014 188l17 6M1014 188l7-10M1016 187l15 6M1016 187l6-9M1018 186l18 7M1018 186l8-11M1020 185l13 6M1020 185l6-8M1022 183l14 6M1022 183l6-8M1025 182l11 5M1025 182l5-7M1027 181l11 5M1027 181l5-7M1029 180l14 6M1029 180l7-8M1031 179l11 5M1031 179l5-7M1033 178l10 5M1033 178l5-6M1035 177l9 4M1035 177l5-5M1037 176l8 4M1037 176l4-5M1038 175l6 3M1038 175l3-3M1040 174l3 2M1040 174l2-2M1042 173l0 0M1042 173l0 0M1044 173l0 0M1044 173l0 0"/><path id="f72" d="M873 306l-11 0M873 306l-6 13M870 307l-13 1M870 307l-7 16M868 308l-13 1M868 308l-7 15M865 309l-16 1M865 309l-8 19M863 310l-20 2M863 310l-10 24M860 311l-18 2M860 311l-8 21M858 312l-17 2M858 312l-8 21M855 314l-22 3M855 314l-10 26M853 315l-16 2M853 315l-7 19M850 316l-18 3M850 316l-8 22M847 318l-22 4M847 318l-9 28M845 319l-16 3M845 319l-6 20M842 321l-23 5M842 321l-9 28M839 323l-20 4M839 323l-7 24M837 324l-17 4M837 324l-6 21M834 326l-19 4M834 326l-7 24M831 328l-22 5M831 328l-8 27M828 330l-21 5M828 330l-7 26M825 331l-22 6M825 331l-8 28M823 333l-18 5M823 333l-6 23M820 335l-20 5M820 335l-6 25M817 337l-27 7M817 337l-9 34M814 339l-22 6M814 339l-7 28M811 341l-23 6M811 341l-7 28M808 343l-19 5M808 343l-6 24M805 345l-21 6M805 345l-6 26M803 347l-27 8M803 347l-8 34M800 350l-24 7M800 350l-7 31M797 352l-23 7M797 352l-6 28M794 354l-18 6M794 354l-5 23M791 356l-21 7M791 356l-6 27M788 359l-25 8M788 359l-7 31M785 361l-21 7M785 361l-6 27M782 363l-22 7M782 363l-6 28M779 365l-25 8M779 365l-6 31M776 368l-22 7M776 368l-6 28M773 370l-22 7M773 370l-6 28M770 372l-16 5M770 372l-4 21M767 375l-16 5M767 375l-4 20M765 377l-22 7M765 377l-5 27M762 379l-18 6M762 379l-4 23M759 382l-21 7M759 382l-5 27M756 384l-20 7M756 384l-5 26M753 387l-20 7M753 387l-5 26M750 389l-16 5M750 389l-4 20M747 391l-19 7M747 391l-5 24M744 394l-17 6M744 394l-4 21M742 396l-17 6M742 396l-4 21M739 398l-12 4M739 398l-3 15M736 401l-14 5M736 401l-3 18M733 403l-11 4M733 403l-3 15M730 405l-13 5M730 405l-3 16M727 408l-12 4M727 408l-3 15M725 410l-7 3M725 410l-2 9M722 412l-7 2M722 412l-2 8M719 414l-5 2M719 414l-1 6M717 417l-3 1M717 417l-1 3M714 419l0 0M714 419l0 0M711 421l0 0M711 421l0 0"/><path id="f73" d="M932 247l8-3M932 247l-3-7M934 244l10-4M934 244l-3-8M935 241l11-4M935 241l-3-9M936 237l10-3M936 237l-3-8M937 234l13-4M937 234l-4-11M938 231l14-4M938 231l-4-11M939 228l13-4M939 228l-3-11M941 225l14-4M941 225l-3-11M942 222l16-4M942 222l-3-13M943 219l18-4M943 219l-3-14M945 216l16-4M945 216l-3-13M946 213l13-3M946 213l-2-10M948 210l16-3M948 210l-2-12M949 207l17-3M949 207l-2-13M951 204l15-3M951 204l-2-12M952 202l18-3M952 202l-2-14M954 199l16-2M954 199l-1-12M955 196l17-2M955 196l-1-13M957 194l17-2M957 194l-1-13M958 191l18-2M958 191l-1-13M960 188l19-2M960 188l-1-15M962 186l18-2M962 186l0-13M963 183l17-1M963 183l0-13M965 181l17-1M965 181l0-13M966 178l14-1M966 178l0-10M968 176l16-1M968 176l0-12M970 174l15-1M970 174l0-11M971 171l11 0M971 171l0-8M973 169l15-1M973 169l0-11M975 167l11 0M975 167l0-8M976 165l12 0M976 165l1-9M978 162l11 0M978 162l1-8M980 160l11 0M980 160l1-8M981 158l10 0M981 158l1-7M983 156l8 0M983 156l0-6M985 154l8 0M985 154l1-6M986 152l5 0M986 152l0-3M988 150l2 0M988 150l0-2M990 147l0 0M990 147l0 0"/><path id="f74" d="M865 274l-10-6M865 274l-14 10M862 273l-11-7M862 273l-15 11M859 273l-10-6M859 273l-13 10M856 272l-11-6M856 272l-14 11M852 271l-12-6M852 271l-14 11M849 271l-11-5M849 271l-13 11M846 270l-11-5M846 270l-13 11M843 270l-16-7M843 270l-18 16M839 270l-14-6M839 270l-16 14M836 269l-18-8M836 269l-20 18M832 269l-13-5M832 269l-14 13M829 269l-15-6M829 269l-16 15M826 269l-15-5M826 269l-16 15M822 268l-20-7M822 268l-22 21M819 268l-20-7M819 268l-21 20M815 268l-21-7M815 268l-22 21M812 268l-18-6M812 268l-19 19M808 268l-15-5M808 268l-16 16M805 268l-18-6M805 268l-18 19M801 268l-17-5M801 268l-17 17M797 268l-15-4M797 268l-15 16M794 268l-20-5M794 268l-19 21M790 268l-18-5M790 268l-17 18M787 268l-16-4M787 268l-15 17M783 268l-20-5M783 268l-18 21M780 269l-23-6M780 269l-21 24M776 269l-23-5M776 269l-21 24M772 269l-19-4M772 269l-17 20M769 269l-16-4M769 269l-15 17M765 270l-21-5M765 270l-19 23M762 270l-16-3M762 270l-14 17M758 270l-19-4M758 270l-17 20M755 271l-15-3M755 271l-14 16M751 271l-22-4M751 271l-19 24M747 271l-18-3M747 271l-16 20M744 272l-17-3M744 272l-15 18M740 272l-16-3M740 272l-13 17M737 272l-17-3M737 272l-15 19M733 273l-20-3M733 273l-17 21M730 273l-16-3M730 273l-13 17M726 274l-14-2M726 274l-11 15M723 274l-15-2M723 274l-13 16M719 275l-17-3M719 275l-14 18M716 275l-13-2M716 275l-11 14M713 276l-14-2M713 276l-11 15M709 276l-14-2M709 276l-12 15M706 277l-10-1M706 277l-9 11M702 277l-12-2M702 277l-9 13M699 278l-9-1M699 278l-8 10M696 278l-7-1M696 278l-6 8M693 279l-6-1M693 279l-4 6M689 279l-6-1M689 279l-5 7M686 280l-3 0M686 280l-2 3M683 280l0 0M683 280l0 0M680 281l0 0M680 281l0 0"/><path id="f75" d="M869 285l-12-5M869 285l-14 10M866 284l-14-5M866 284l-16 13M862 284l-11-3M862 284l-12 10M859 284l-16-4M859 284l-16 15M856 284l-14-3M856 284l-13 13M853 284l-15-3M853 284l-14 14M850 284l-13-2M850 284l-12 13M847 284l-19-2M847 284l-17 19M843 285l-18-2M843 285l-15 18M840 285l-22-1M840 285l-18 22M837 286l-19-1M837 286l-15 20M834 286l-17 0M834 286l-13 18M830 287l-18 0M830 287l-13 19M827 288l-19 1M827 288l-14 20M824 289l-25 1M824 289l-18 27M820 290l-19 1M820 290l-13 20M817 291l-18 2M817 291l-12 20M813 292l-21 2M813 292l-13 23M810 293l-18 2M810 293l-12 20M806 295l-22 3M806 295l-13 24M803 296l-24 4M803 296l-14 26M799 298l-24 4M799 298l-14 27M796 299l-20 4M796 299l-11 22M792 301l-19 4M792 301l-11 22M789 302l-22 5M789 302l-12 26M785 304l-24 6M785 304l-13 28M782 306l-22 6M782 306l-11 25M778 308l-23 6M778 308l-12 26M775 310l-26 7M775 310l-13 30M771 312l-18 5M771 312l-9 22M768 314l-19 6M768 314l-9 23M764 316l-21 7M764 316l-10 25M761 318l-21 7M761 318l-9 25M758 320l-23 8M758 320l-10 28M754 323l-20 7M754 323l-9 24M751 325l-20 7M751 325l-9 24M747 327l-18 7M747 327l-7 22M744 330l-20 8M744 330l-8 24M740 332l-19 8M740 332l-8 24M737 335l-15 6M737 335l-6 18M733 337l-13 5M733 337l-5 16M730 340l-13 6M730 340l-5 16M727 342l-13 6M727 342l-5 16M723 345l-15 7M723 345l-5 19M720 347l-11 5M720 347l-4 13M717 350l-11 5M717 350l-4 14M714 353l-10 5M714 353l-3 12M710 355l-9 4M710 355l-3 12M707 358l-5 2M707 358l-2 6M704 361l-4 2M704 361l-1 5M701 364l0 0M701 364l0 0M698 366l0 0M698 366l0 0"/><path id="f76" d="M954 254l12 1M954 254l3-8M956 251l14 2M956 251l4-10M958 249l13 2M958 249l4-9M961 247l18 3M961 247l5-12M963 245l16 2M963 245l5-11M965 243l14 2M965 243l4-9M968 241l15 3M968 241l5-10M970 239l21 4M970 239l7-14M972 237l19 4M972 237l6-13M975 235l18 4M975 235l6-11M977 234l21 5M977 234l7-14M980 232l16 4M980 232l6-10M982 230l24 6M982 230l9-15M984 228l24 6M984 228l9-15M987 226l22 6M987 226l9-14M989 225l17 4M989 225l7-11M992 223l21 5M992 223l8-13M994 221l25 7M994 221l10-15M997 220l22 6M997 220l9-14M999 218l19 5M999 218l8-12M1002 216l19 6M1002 216l8-12M1004 215l18 5M1004 215l8-11M1007 213l22 7M1007 213l9-13M1009 212l19 6M1009 212l8-11M1012 210l21 7M1012 210l9-13M1014 209l25 8M1014 209l11-15M1017 207l25 8M1017 207l11-15M1019 206l21 7M1019 206l9-12M1022 204l23 8M1022 204l11-14M1024 203l17 6M1024 203l8-10M1027 201l24 8M1027 201l11-14M1029 200l23 8M1029 200l10-13M1032 198l19 6M1032 198l9-11M1034 197l22 7M1034 197l10-13M1036 196l17 6M1036 196l8-10M1039 194l21 7M1039 194l10-12M1041 193l16 5M1041 193l7-9M1044 191l19 7M1044 191l9-11M1046 190l18 6M1046 190l8-10M1048 189l18 6M1048 189l8-10M1051 187l16 5M1051 187l7-9M1053 186l11 4M1053 186l5-6M1056 185l11 4M1056 185l5-7M1058 183l12 4M1058 183l6-7M1060 182l12 4M1060 182l6-7M1062 181l10 3M1062 181l4-6M1065 179l6 2M1065 179l3-4M1067 178l6 2M1067 178l3-3M1069 177l3 1M1069 177l2-2M1071 175l0 0M1071 175l0 0M1073 174l0 0M1073 174l0 0"/><path id="f77" d="M910 238l6-7M910 238l-9-4M910 234l6-7M910 234l-10-4M909 231l6-7M909 231l-9-4M909 228l6-7M909 228l-10-4M908 225l10-11M908 225l-15-7M908 222l9-10M908 222l-14-7M907 219l10-12M907 219l-16-7M907 216l11-11M907 216l-15-7M906 213l11-12M906 213l-16-7M906 210l9-9M906 210l-13-6M905 207l9-9M905 207l-12-6M905 204l9-10M905 204l-13-7M904 201l9-9M904 201l-12-6M904 198l9-10M904 198l-13-7M904 195l12-12M904 195l-16-9M903 192l11-11M903 192l-15-8M903 189l9-9M903 189l-12-6M903 187l11-10M903 187l-14-8M902 184l14-13M902 184l-18-10M902 181l14-13M902 181l-18-10M902 178l13-12M902 178l-17-9M901 175l13-12M901 175l-17-10M901 173l14-13M901 173l-18-10M901 170l13-11M901 170l-15-9M901 167l12-10M901 167l-14-8M901 164l13-11M901 164l-15-9M900 161l11-10M900 161l-13-8M900 159l10-8M900 159l-11-7M900 156l11-9M900 156l-13-8M900 153l12-10M900 153l-14-9M900 151l10-8M900 151l-11-7M900 148l10-8M900 148l-11-7M899 145l11-8M899 145l-11-8M899 143l11-9M899 143l-12-8M899 140l14-11M899 140l-14-10M899 137l11-9M899 137l-12-8M899 135l12-9M899 135l-13-9M899 132l12-9M899 132l-12-8M899 129l11-8M899 129l-11-8M899 127l9-7M899 127l-9-7M899 124l9-7M899 124l-9-7M899 122l8-6M899 122l-8-6M899 119l9-6M899 119l-9-7M899 116l9-6M899 116l-9-7M899 114l8-6M899 114l-8-6M899 111l6-4M899 111l-6-4M899 109l5-3M899 109l-5-4M899 106l4-3M899 106l-4-3M900 104l4-3M900 104l-4-3M900 101l2-1M900 101l-2-2M900 99l0 0M900 99l0 0M900 96l0 0M900 96l0 0"/><path id="f78" d="M939 237l12-4M939 237l-4-9M941 234l14-4M941 234l-5-11M942 231l16-4M942 231l-5-12M943 228l12-3M943 228l-3-9M944 224l15-3M944 224l-4-12M946 222l17-3M946 222l-4-13M947 219l18-3M947 219l-4-14M948 216l20-3M948 216l-4-16M950 213l20-3M950 213l-3-15M951 210l21-3M951 210l-3-16M953 207l15-2M953 207l-2-12M954 205l19-2M954 205l-2-14M956 202l23-2M956 202l-2-17M957 200l24-1M957 200l-2-18M959 197l23-1M959 197l-1-17M961 195l20 0M961 195l-1-14M962 192l24 0M962 192l0-17M964 190l22 0M964 190l0-16M966 188l23 1M966 188l1-17M967 186l23 1M967 186l1-17M969 183l26 2M969 183l2-18M971 181l24 2M971 181l2-17M973 179l27 3M973 179l3-19M975 177l22 3M975 177l2-16M977 175l22 3M977 175l3-16M978 173l24 4M978 173l3-17M980 171l23 4M980 171l4-16M982 169l18 3M982 169l3-12M984 168l26 5M984 168l5-18M986 166l20 4M986 166l4-13M988 164l21 5M988 164l5-14M990 162l17 4M990 162l4-11M992 161l18 5M992 161l5-12M994 159l24 7M994 159l6-16M996 158l18 5M996 158l5-12M998 156l17 5M998 156l5-11M1000 155l21 7M1000 155l7-14M1002 153l16 5M1002 153l5-10M1004 152l18 6M1004 152l6-12M1006 150l17 6M1006 150l6-11M1008 149l18 7M1008 149l7-11M1010 148l15 6M1010 148l6-9M1012 147l13 5M1012 147l5-8M1015 145l12 5M1015 145l5-7M1017 144l11 5M1017 144l5-7M1019 143l8 4M1019 143l4-5M1021 142l8 4M1021 142l4-5M1023 141l7 3M1023 141l3-4M1025 140l6 3M1025 140l3-3M1027 139l4 2M1027 139l2-2M1029 138l0 0M1029 138l0 0M1031 137l0 0M1031 137l0 0"/><path id="f79" d="M959 275l10 5M959 275l6-5M962 274l10 6M962 274l7-5M964 273l14 9M964 273l10-7M967 273l13 8M967 273l9-6M970 272l14 9M970 272l10-6M973 271l16 11M973 271l12-7M976 270l18 13M976 270l14-8M979 270l17 12M979 270l14-7M982 269l14 11M982 269l12-6M985 269l20 15M985 269l16-8M988 268l15 11M988 268l12-6M991 268l18 14M991 268l15-7M994 267l18 15M994 267l16-7M997 267l16 13M997 267l14-6M1000 267l21 17M1000 267l18-7M1003 266l19 16M1003 266l17-6M1006 266l19 17M1006 266l18-7M1009 266l15 13M1009 266l14-5M1013 266l20 18M1013 266l19-7M1016 266l16 15M1016 266l15-5M1019 265l19 17M1019 265l18-6M1022 265l19 18M1022 265l19-6M1025 265l16 15M1025 265l16-5M1029 265l16 15M1029 265l15-5M1032 265l16 15M1032 265l16-5M1035 265l20 20M1035 265l20-6M1038 265l18 18M1038 265l18-5M1041 265l16 16M1041 265l16-5M1045 265l17 17M1045 265l17-5M1048 265l17 17M1048 265l17-5M1051 265l14 14M1051 265l14-4M1054 265l12 13M1054 265l13-3M1057 265l12 13M1057 265l13-3M1061 265l15 15M1061 265l15-4M1064 265l14 15M1064 265l15-4M1067 266l16 17M1067 266l16-4M1070 266l13 14M1070 266l14-3M1073 266l14 15M1073 266l14-4M1076 266l14 14M1076 266l14-3M1079 266l11 11M1079 266l11-3M1083 266l10 10M1083 266l10-2M1086 266l9 10M1086 266l10-2M1089 266l8 8M1089 266l8-2M1092 266l8 9M1092 266l9-2M1095 266l6 7M1095 266l7-2M1098 267l4 4M1098 267l4-1M1100 267l4 4M1100 267l4-1M1103 267l0 0M1103 267l0 0M1106 267l0 0M1106 267l0 0"/><path id="f80" d="M973 284l11 9M973 284l10-3M975 284l16 14M975 284l15-4M978 284l12 11M978 284l11-3M981 284l16 14M981 284l15-4M983 284l17 16M983 284l17-4M986 284l17 17M986 284l18-4M989 284l14 14M989 284l15-3M992 284l14 15M992 284l15-3M994 285l16 17M994 285l17-3M997 285l17 19M997 285l19-3M1000 285l13 15M1000 285l15-2M1003 285l18 20M1003 285l20-2M1006 286l18 21M1006 286l21-2M1009 286l19 22M1009 286l22-2M1012 287l13 16M1012 287l16-1M1015 287l19 24M1015 287l24-1M1018 288l13 17M1018 288l17-1M1021 288l15 20M1021 288l19-1M1024 289l17 22M1024 289l22 0M1027 289l19 26M1027 289l25 0M1030 290l15 21M1030 290l20 0M1033 291l19 26M1033 291l25 0M1036 291l16 23M1036 291l22 0M1039 292l15 21M1039 292l20 1M1042 293l15 21M1042 293l20 1M1045 294l14 20M1045 294l19 1M1048 295l13 19M1048 295l18 1M1051 296l13 20M1051 296l19 1M1054 297l17 25M1054 297l24 2M1058 297l18 29M1058 297l27 2M1061 298l13 20M1061 298l19 2M1064 299l12 19M1064 299l18 2M1067 301l18 28M1067 301l26 3M1070 302l15 24M1070 302l22 2M1073 303l14 23M1073 303l21 2M1076 304l12 21M1076 304l19 2M1079 305l14 24M1079 305l22 3M1083 306l15 26M1083 306l24 3M1086 307l13 22M1086 307l20 3M1089 308l13 22M1089 308l20 3M1092 310l10 18M1092 310l16 2M1095 311l15 26M1095 311l23 3M1098 312l10 17M1098 312l16 2M1101 313l12 21M1101 313l19 3M1105 315l13 24M1105 315l21 3M1108 316l9 17M1108 316l15 3M1111 317l12 22M1111 317l19 3M1114 318l12 23M1114 318l21 4M1117 320l11 20M1117 320l18 3M1120 321l11 20M1120 321l18 3M1123 322l8 14M1123 322l13 2M1126 324l8 16M1126 324l14 3M1129 325l7 14M1129 325l12 2M1132 327l9 17M1132 327l15 3M1135 328l7 13M1135 328l12 2M1138 329l7 13M1138 329l12 2M1141 331l8 15M1141 331l13 3M1144 332l6 13M1144 332l11 2M1147 333l6 12M1147 333l11 2M1150 335l4 8M1150 335l7 2M1153 336l3 7M1153 336l6 1M1156 337l3 5M1156 337l5 1M1159 339l1 1M1159 339l1 0M1162 340l0 0M1162 340l0 0M1164 342l0 0M1164 342l0 0"/><path id="f81" d="M935 326l-1 18M935 326l12 10M937 328l-1 15M937 328l10 9M938 330l-2 23M938 330l16 15M939 332l-2 20M939 332l13 13M940 335l-3 26M940 335l17 17M941 337l-3 24M941 337l16 16M942 340l-3 25M942 340l16 17M943 342l-3 24M943 342l15 16M944 345l-4 29M944 345l18 20M946 348l-3 21M946 348l13 15M947 350l-4 28M947 350l17 19M948 353l-4 24M948 353l15 17M949 356l-5 29M949 356l18 21M950 359l-5 30M950 359l18 22M951 363l-5 23M951 363l14 17M952 366l-5 24M952 366l15 18M953 369l-5 22M953 369l13 17M954 372l-5 25M954 372l15 19M955 376l-5 23M955 376l14 18M956 379l-6 27M956 379l16 21M957 382l-8 34M957 382l20 26M958 386l-6 27M958 386l16 21M959 390l-6 26M959 390l15 20M960 393l-7 28M960 393l16 22M961 397l-6 26M961 397l15 20M962 400l-8 31M962 400l18 25M963 404l-8 31M963 404l18 24M964 408l-6 24M964 408l14 19M965 412l-6 25M965 412l14 20M966 416l-8 30M966 416l17 24M966 419l-9 32M966 419l18 26M967 423l-8 29M967 423l16 23M968 427l-7 26M968 427l15 21M969 431l-9 31M969 431l18 26M970 435l-6 20M970 435l11 17M971 439l-6 20M971 439l12 17M972 443l-8 27M972 443l15 23M972 447l-7 23M972 447l13 19M973 451l-6 19M973 451l11 16M974 455l-7 23M974 455l13 19M975 459l-8 26M975 459l15 22M975 463l-6 21M975 463l12 18M976 467l-6 19M976 467l11 16M977 471l-5 16M977 471l9 14M978 474l-5 15M978 474l8 13M978 478l-6 20M978 478l11 17M979 482l-5 16M979 482l9 14M980 486l-6 18M980 486l10 15M980 490l-4 11M980 490l6 10M981 494l-4 11M981 494l6 9M982 498l-3 9M982 498l5 8M982 501l-3 9M982 501l5 7M983 505l-2 6M983 505l3 5M983 509l-1 3M983 509l2 3M984 513l0 0M984 513l0 0M985 516l0 0M985 516l0 0"/><path id="f82" d="M879 258l-2-7M879 258l-11 3M876 256l-3-10M876 256l-15 4M874 254l-3-10M874 254l-15 5M871 252l-3-9M871 252l-14 4M868 250l-4-10M868 250l-15 5M866 248l-6-14M866 248l-21 8M863 246l-7-14M863 246l-21 8M860 244l-6-11M860 244l-17 7M857 243l-8-14M857 243l-22 10M854 241l-8-13M854 241l-21 10M852 240l-8-12M852 240l-19 9M849 238l-9-13M849 238l-22 11M846 236l-8-11M846 236l-18 10M843 235l-9-12M843 235l-19 10M840 234l-8-10M840 234l-17 10M837 232l-11-14M837 232l-23 13M834 231l-12-13M834 231l-22 14M831 230l-13-14M831 230l-24 15M827 229l-12-12M827 229l-21 14M824 228l-12-12M824 228l-21 14M821 227l-12-11M821 227l-20 13M818 226l-14-13M818 226l-23 16M815 225l-12-11M815 225l-20 14M812 224l-14-12M812 224l-22 16M808 223l-15-13M808 223l-23 17M805 222l-13-11M805 222l-20 15M802 221l-15-12M802 221l-22 17M799 220l-11-9M799 220l-16 13M795 220l-12-9M795 220l-17 14M792 219l-16-11M792 219l-22 18M789 218l-11-8M789 218l-16 13M786 217l-11-8M786 217l-15 13M782 217l-10-7M782 217l-14 12M779 216l-14-10M779 216l-19 17M776 216l-11-7M776 216l-14 12M773 215l-12-8M773 215l-16 14M769 215l-12-7M769 215l-15 14M766 214l-13-8M766 214l-16 15M763 214l-11-7M763 214l-14 13M760 213l-11-6M760 213l-13 13M757 213l-8-5M757 213l-10 9M753 213l-11-6M753 213l-13 12M750 212l-10-6M750 212l-12 11M747 212l-8-5M747 212l-10 10M744 211l-8-4M744 211l-9 9M741 211l-6-3M741 211l-7 7M738 211l-5-3M738 211l-6 6M734 210l-3-2M734 210l-4 4M731 210l0 0M731 210l0 0M728 210l0 0M728 210l0 0"/><path id="f83" d="M923 242l7-4M923 242l-5-6M924 239l11-6M924 239l-8-9M924 236l8-5M924 236l-6-7M924 233l11-6M924 233l-8-8M925 230l12-7M925 230l-8-9M925 226l12-7M925 226l-9-10M926 223l11-7M926 223l-8-9M926 220l14-8M926 220l-10-11M926 217l13-7M926 217l-9-10M927 214l13-8M927 214l-10-11M927 211l10-6M927 211l-7-8M928 208l11-7M928 208l-8-9M928 205l13-8M928 205l-9-10M928 203l14-8M928 203l-10-11M929 200l11-7M929 200l-8-9M929 197l15-9M929 197l-11-12M929 194l13-7M929 194l-9-10M930 191l14-8M930 191l-10-11M930 189l14-8M930 189l-10-11M930 186l16-9M930 186l-11-13M931 183l13-7M931 183l-9-10M931 180l14-8M931 180l-10-11M932 178l14-8M932 178l-10-11M932 175l14-8M932 175l-10-12M932 173l12-7M932 173l-9-10M933 170l12-7M933 170l-8-10M933 167l13-7M933 167l-9-10M933 165l13-8M933 165l-9-11M934 162l13-8M934 162l-9-11M934 160l10-6M934 160l-7-8M934 157l12-7M934 157l-8-9M935 155l12-7M935 155l-8-9M935 152l10-6M935 152l-7-8M935 150l9-5M935 150l-6-7M935 148l12-7M935 148l-9-10M936 145l8-5M936 145l-6-6M936 143l9-5M936 143l-7-7M936 140l8-5M936 140l-6-6M937 138l6-4M937 138l-5-5M937 136l6-4M937 136l-5-5M937 134l5-3M937 134l-4-4M937 131l5-3M937 131l-4-4M938 129l5-3M938 129l-4-4M938 127l2-1M938 127l-2-2M938 125l0 0M938 125l0 0M938 122l0 0M938 122l0 0"/><path id="f84" d="M901 338l-11 11M901 338l3 17M900 341l-15 14M900 341l5 22M899 343l-13 13M899 343l4 19M898 346l-12 12M898 346l4 17M898 349l-12 12M898 349l4 17M897 352l-12 13M897 352l5 19M896 354l-13 15M896 354l6 20M895 357l-16 18M895 357l7 25M894 360l-14 16M894 360l6 21M893 363l-13 15M893 363l6 20M892 367l-17 21M892 367l9 27M891 370l-16 19M891 370l8 25M891 373l-13 16M891 373l7 20M890 377l-13 16M890 377l7 21M889 380l-14 17M889 380l8 22M888 384l-15 19M888 384l9 24M888 387l-19 24M888 387l11 30M887 391l-19 25M887 391l12 31M886 395l-17 23M886 395l10 28M885 398l-15 19M885 398l9 24M885 402l-16 22M885 402l10 26M884 406l-15 21M884 406l10 25M883 410l-15 21M883 410l10 25M883 414l-13 18M883 414l9 21M882 418l-17 24M882 418l11 28M881 422l-18 26M881 422l13 31M881 426l-18 25M881 426l12 29M880 430l-13 19M880 430l9 22M880 435l-16 23M880 435l11 27M879 439l-14 20M879 439l10 23M879 443l-17 25M879 443l12 28M878 447l-15 22M878 447l11 25M878 452l-18 27M878 452l13 30M877 456l-17 25M877 456l13 28M877 460l-12 19M877 460l9 21M876 465l-13 20M876 465l10 23M876 469l-17 26M876 469l13 29M875 474l-14 21M875 474l11 24M875 478l-13 21M875 478l11 23M875 482l-13 20M875 482l10 22M874 487l-15 23M874 487l12 25M874 491l-15 24M874 491l12 26M874 496l-13 20M874 496l10 22M873 500l-14 23M873 500l12 25M873 505l-12 20M873 505l10 21M873 509l-9 15M873 509l8 16M872 514l-12 20M872 514l10 21M872 518l-10 16M872 518l9 18M872 523l-8 13M872 523l7 14M872 527l-11 19M872 527l10 20M871 531l-7 12M871 531l6 13M871 536l-9 14M871 536l8 15M871 540l-8 13M871 540l7 14M871 545l-8 14M871 545l8 15M871 549l-6 11M871 549l6 11M871 553l-5 9M871 553l5 9M870 558l-4 8M870 558l4 8M870 562l-4 6M870 562l3 6M870 566l-3 5M870 566l3 5M870 570l-1 2M870 570l1 2M870 575l0 0M870 575l0 0M870 579l0 0M870 579l0 0"/><path id="f85" d="M889 317l-14 5M889 317l-2 19M887 319l-16 7M887 319l-2 21M885 321l-17 7M885 321l-1 22M883 323l-17 8M883 323l-1 22M881 326l-14 7M881 326l0 19M879 328l-17 9M879 328l0 23M877 331l-21 11M877 331l0 27M874 334l-16 9M874 334l0 21M872 336l-22 13M872 336l1 30M870 339l-19 11M870 339l1 26M868 342l-18 11M868 342l1 25M866 346l-15 9M866 346l1 21M863 349l-19 12M863 349l2 25M861 352l-17 11M861 352l2 23M859 356l-21 14M859 356l3 29M857 359l-23 16M857 359l3 32M854 363l-24 16M854 363l3 32M852 367l-21 15M852 367l3 29M850 371l-19 13M850 371l3 26M848 374l-17 12M848 374l3 23M845 378l-21 15M845 378l4 30M843 382l-20 15M843 382l4 28M841 386l-21 16M841 386l4 29M839 391l-18 14M839 391l4 25M837 395l-22 17M837 395l5 31M834 399l-16 12M834 399l4 23M832 403l-17 13M832 403l4 23M830 408l-16 12M830 408l4 23M828 412l-18 14M828 412l4 26M825 416l-20 16M825 416l5 28M823 421l-14 11M823 421l3 20M821 425l-17 13M821 425l4 23M819 430l-17 14M819 430l4 24M817 434l-13 10M817 434l3 18M815 439l-11 9M815 439l3 16M813 443l-13 11M813 443l4 19M811 448l-14 11M811 448l4 19M808 452l-13 11M808 452l4 18M806 457l-11 9M806 457l3 16M804 461l-9 7M804 461l2 12M802 466l-7 6M802 466l2 10M800 470l-6 5M800 470l2 9M798 474l-5 4M798 474l1 7M797 479l0 0M797 479l0 0M795 483l0 0M795 483l0 0"/><path id="f86" d="M963 300l8 15M963 300l13 0M966 301l7 14M966 301l12 1M969 302l8 16M969 302l14 1M971 303l10 21M971 303l18 1M974 305l11 23M974 305l20 2M977 306l9 20M977 306l17 2M980 307l11 24M980 307l21 3M983 308l11 25M983 308l21 3M986 310l10 25M986 310l21 3M989 311l10 25M989 311l21 3M992 313l11 27M992 313l23 4M995 314l9 24M995 314l20 4M998 316l10 28M998 316l23 4M1001 318l9 24M1001 318l20 4M1004 320l9 26M1004 320l22 4M1008 321l10 30M1008 321l25 5M1011 323l10 29M1011 323l24 5M1014 325l8 25M1014 325l21 5M1017 327l11 33M1017 327l27 6M1021 329l10 29M1021 329l24 6M1024 331l9 29M1024 331l24 6M1027 333l7 22M1027 333l18 5M1031 335l9 29M1031 335l23 6M1034 338l8 25M1034 338l20 6M1037 340l9 30M1037 340l24 7M1041 342l8 27M1041 342l22 6M1044 344l9 31M1044 344l25 7M1047 347l8 29M1047 347l23 7M1051 349l8 30M1051 349l25 7M1054 351l7 25M1054 351l20 6M1058 354l8 28M1058 354l23 7M1061 356l8 29M1061 356l23 7M1064 359l8 29M1064 359l23 7M1068 361l6 23M1068 361l19 6M1071 364l7 28M1071 364l22 7M1075 366l7 27M1075 366l22 7M1078 369l6 25M1078 369l20 7M1081 371l6 27M1081 371l21 7M1085 374l6 26M1085 374l20 7M1088 377l5 21M1088 377l17 6M1092 379l5 20M1092 379l16 6M1095 382l4 16M1095 382l13 5M1098 384l5 20M1098 384l16 6M1102 387l4 19M1102 387l15 6M1105 390l3 15M1105 390l12 4M1108 392l3 15M1108 392l12 4M1111 395l3 13M1111 395l10 4M1115 398l2 11M1115 398l9 3M1118 400l1 7M1118 400l5 2M1121 403l1 5M1121 403l4 2M1124 406l0 0M1124 406l0 0M1128 408l0 0M1128 408l0 0"/><path id="f87" d="M911 245l7-8M911 245l-10-5M910 242l6-7M910 242l-9-4M910 238l7-9M910 238l-12-5M909 235l8-10M909 235l-13-6M908 231l6-7M908 231l-10-4M908 228l8-10M908 228l-13-6M907 225l8-10M907 225l-13-6M907 222l8-9M907 222l-12-6M906 218l7-9M906 218l-12-5M905 215l7-9M905 215l-12-5M905 212l8-10M905 212l-13-6M904 209l10-12M904 209l-16-7M904 206l8-10M904 206l-14-6M903 203l8-10M903 203l-13-6M903 200l9-11M903 200l-15-7M902 197l9-11M902 197l-14-6M901 194l9-11M901 194l-15-7M901 191l9-11M901 191l-14-6M900 188l8-10M900 188l-13-6M900 186l7-9M900 186l-12-5M899 183l10-12M899 183l-16-7M899 180l9-11M899 180l-15-7M898 177l8-9M898 177l-12-5M898 175l8-10M898 175l-14-6M897 172l9-10M897 172l-14-6M897 170l8-10M897 170l-13-6M896 167l9-11M896 167l-15-7M896 164l9-10M896 164l-14-6M895 162l7-8M895 162l-11-5M895 159l7-8M895 159l-11-5M894 157l7-9M894 157l-11-5M894 154l6-7M894 154l-9-4M893 152l7-9M893 152l-11-5M893 150l5-5M893 150l-7-3M892 147l5-6M892 147l-8-4M892 145l4-5M892 145l-7-3M892 143l4-5M892 143l-6-3M891 140l3-3M891 140l-4-2M891 138l2-2M891 138l-3-2M891 136l1-1M891 136l-2-1M890 134l0 0M890 134l0 0"/><path id="f88" d="M949 318l1 21M949 318l16 7M950 320l1 20M950 320l15 7M952 322l1 18M952 322l14 6M954 324l1 26M954 324l19 9M956 326l1 22M956 326l17 8M958 328l0 22M958 328l17 8M960 330l0 22M960 330l17 8M961 332l0 30M961 332l22 11M963 335l0 25M963 335l19 9M966 337l0 23M966 337l18 9M968 339l0 26M968 339l20 10M970 342l0 23M970 342l17 8M972 345l0 29M972 345l22 11M974 347l0 27M974 347l20 10M976 350l0 26M976 350l19 10M978 352l0 32M978 352l24 12M981 355l0 33M981 355l25 12M983 358l0 23M983 358l17 9M985 361l0 30M985 361l22 11M988 364l0 26M988 364l20 10M990 367l0 35M990 367l26 13M992 369l0 33M992 369l25 12M995 372l0 26M995 372l20 10M997 375l0 26M997 375l20 10M1000 378l0 25M1000 378l19 9M1002 381l0 35M1002 381l26 13M1005 384l0 26M1005 384l20 10M1007 388l0 30M1007 388l23 11M1010 391l0 28M1010 391l21 11M1012 394l0 30M1012 394l22 11M1015 397l0 29M1015 397l22 11M1017 400l0 30M1017 400l23 11M1020 403l0 22M1020 403l17 8M1022 406l0 29M1022 406l22 11M1025 409l0 23M1025 409l18 9M1028 412l0 25M1028 412l19 9M1030 416l0 23M1030 416l17 8M1033 419l0 22M1033 419l16 8M1035 422l0 23M1035 422l17 9M1038 425l0 22M1038 425l16 8M1041 428l0 20M1041 428l15 7M1043 431l0 22M1043 431l17 8M1046 434l0 20M1046 434l15 7M1048 437l0 14M1048 437l11 5M1051 440l0 15M1051 440l11 5M1054 443l0 15M1054 443l11 5M1056 446l0 16M1056 446l12 6M1059 449l0 14M1059 449l11 5M1061 452l0 10M1061 452l8 4M1064 455l0 6M1064 455l5 2M1067 458l0 5M1067 458l4 2M1069 461l0 0M1069 461l0 0M1072 463l0 0M1072 463l0 0"/><path id="f89" d="M862 289l-13-6M862 289l-13 15M859 289l-14-6M859 289l-14 17M856 289l-11-4M856 289l-11 14M853 289l-11-4M853 289l-10 14M850 289l-16-5M850 289l-14 20M847 289l-12-4M847 289l-10 14M844 290l-15-4M844 290l-12 18M841 290l-17-4M841 290l-14 21M838 291l-17-4M838 291l-13 20M835 291l-16-3M835 291l-12 20M831 292l-21-4M831 292l-15 25M828 292l-16-3M828 292l-12 20M825 293l-19-3M825 293l-13 23M822 294l-21-3M822 294l-14 26M818 295l-16-2M818 295l-11 20M815 295l-18-2M815 295l-12 23M812 296l-20-2M812 296l-12 24M808 297l-21-2M808 297l-13 26M805 298l-18-1M805 298l-11 22M802 300l-20-1M802 300l-12 25M798 301l-17-1M798 301l-10 21M795 302l-18-1M795 302l-10 22M791 303l-20-1M791 303l-11 25M788 304l-18 0M788 304l-10 23M784 306l-26 0M784 306l-13 32M781 307l-20 0M781 307l-10 24M777 308l-20 0M777 308l-10 24M774 310l-24 0M774 310l-12 30M770 311l-24 1M770 311l-11 30M767 313l-20 1M767 313l-9 24M763 314l-25 1M763 314l-11 31M760 316l-23 1M760 316l-10 28M756 318l-20 1M756 318l-9 25M753 319l-22 1M753 319l-10 28M749 321l-19 1M749 321l-8 23M746 323l-19 1M746 323l-8 23M742 324l-24 2M742 324l-10 30M739 326l-20 2M739 326l-8 25M735 328l-23 2M735 328l-9 29M732 330l-17 2M732 330l-7 21M728 331l-16 2M728 331l-6 20M725 333l-15 2M725 333l-6 19M722 335l-20 2M722 335l-8 25M718 337l-18 2M718 337l-7 23M715 339l-14 2M715 339l-5 17M711 341l-13 2M711 341l-5 17M708 343l-18 2M708 343l-7 23M704 345l-15 2M704 345l-6 19M701 347l-17 2M701 347l-6 21M698 349l-11 2M698 349l-4 14M694 351l-14 2M694 351l-5 17M691 353l-10 2M691 353l-4 13M687 355l-12 2M687 355l-4 16M684 357l-11 2M684 357l-4 14M681 359l-10 2M681 359l-3 12M678 361l-7 1M678 361l-2 9M674 363l-8 1M674 363l-3 10M671 365l-4 1M671 365l-1 5M668 367l-2 0M668 367l-1 2M665 369l0 0M665 369l0 0M662 370l0 0M662 370l0 0"/><path id="f90" d="M963 312l6 14M963 312l12 3M966 313l7 17M966 313l15 4M968 315l8 20M968 315l17 5M971 316l7 17M971 316l15 5M974 318l8 22M974 318l19 7M976 320l8 23M976 320l19 7M979 322l6 18M979 322l15 6M981 323l8 23M981 323l19 8M984 325l7 21M984 325l17 7M987 327l6 20M987 327l16 7M990 330l6 21M990 330l17 8M992 332l7 24M992 332l19 9M995 334l6 23M995 334l18 8M998 336l6 23M998 336l18 9M1001 339l6 22M1001 339l17 8M1004 341l7 27M1004 341l21 11M1007 344l7 26M1007 344l21 10M1010 346l7 29M1010 346l23 12M1012 349l7 29M1012 349l23 12M1015 352l6 25M1015 352l20 10M1018 354l7 33M1018 354l26 14M1021 357l5 23M1021 357l17 10M1024 360l6 28M1024 360l21 12M1027 363l5 26M1027 363l20 11M1030 366l6 28M1030 366l21 12M1033 369l5 24M1033 369l18 11M1036 372l6 33M1036 372l25 14M1039 375l5 27M1039 375l20 12M1042 378l4 23M1042 378l17 10M1045 381l5 29M1045 381l22 13M1049 385l4 23M1049 385l17 11M1052 388l5 28M1052 388l21 13M1055 391l4 25M1055 391l19 12M1058 394l5 28M1058 394l21 13M1061 398l5 31M1061 398l23 15M1064 401l5 29M1064 401l22 14M1067 405l4 24M1067 405l18 12M1070 408l4 28M1070 408l21 13M1073 411l4 25M1073 411l19 12M1076 415l3 22M1076 415l16 11M1079 418l3 19M1079 418l14 9M1082 422l3 23M1082 422l17 11M1085 425l3 22M1085 425l16 10M1088 429l3 24M1088 429l18 12M1091 432l3 23M1091 432l17 11M1094 436l3 19M1094 436l14 9M1097 439l2 16M1097 439l12 8M1100 443l2 18M1100 443l13 9M1103 446l1 11M1103 446l8 6M1106 450l1 11M1106 450l8 5M1109 453l1 12M1109 453l8 6M1112 457l1 10M1112 457l7 5M1115 460l1 6M1115 460l4 3M1117 464l0 4M1117 464l3 2M1120 467l0 0M1120 467l0 0M1123 471l0 0M1123 471l0 0"/><path id="f91" d="M891 240l1-11M891 240l-14-2M889 237l0-11M889 237l-14-2M887 234l1-13M887 234l-17-2M886 231l0-10M886 231l-12-2M884 228l0-11M884 228l-14-2M882 225l0-12M882 225l-15-2M880 222l0-12M880 222l-15-2M878 219l0-15M878 219l-20-2M877 217l0-14M877 217l-18-2M875 214l0-13M875 214l-17-2M873 211l0-15M873 211l-19-2M871 208l0-17M871 208l-22-2M870 206l0-16M870 206l-20-2M868 203l0-15M868 203l-20-2M866 200l0-16M866 200l-22-2M865 198l0-16M865 198l-21-2M863 195l0-15M863 195l-20-2M861 193l0-15M861 193l-20-2M859 190l0-13M859 190l-18-2M858 188l0-16M858 188l-20-2M856 185l0-19M856 185l-24-2M854 183l0-15M854 183l-19-2M853 180l0-15M853 180l-20-2M851 178l0-17M851 178l-22-2M850 175l0-16M850 175l-21-2M848 173l0-13M848 173l-18-2M846 170l0-15M846 170l-20-2M845 168l0-17M845 168l-22-2M843 166l0-12M843 166l-16-2M842 163l0-12M842 163l-16-2M840 161l0-16M840 161l-21-2M839 159l0-17M839 159l-22-2M837 157l0-11M837 157l-15-2M836 154l0-11M836 154l-15-2M834 152l0-14M834 152l-18-2M833 150l0-12M833 150l-15-2M831 148l0-13M831 148l-17-2M830 145l0-9M830 145l-12-2M829 143l0-11M829 143l-14-2M827 141l0-9M827 141l-12-2M826 139l0-9M826 139l-12-2M825 137l0-10M825 137l-13-2M823 135l0-9M823 135l-11-2M822 133l1-9M822 133l-11-2M821 131l1-8M821 131l-10-2M820 128l0-6M820 128l-8-1M819 126l0-5M819 126l-7-1M817 124l0-2M817 124l-3-1M816 122l0 0M816 122l0 0M815 120l0 0M815 120l0 0"/><path id="f92" d="M960 264l15 6M960 264l6-9M962 263l17 7M962 263l7-10M965 261l12 5M965 261l5-7M968 259l18 8M968 259l8-11M971 258l14 7M971 258l7-8M974 257l15 8M974 257l8-9M977 255l19 10M977 255l10-11M980 254l20 11M980 254l11-11M983 253l19 11M983 253l11-11M986 251l19 11M986 251l11-10M990 250l21 13M990 250l13-11M993 249l19 12M993 249l12-10M996 248l17 12M996 248l11-9M999 247l17 12M999 247l12-9M1002 247l17 12M1002 247l12-8M1006 246l16 12M1006 246l11-8M1009 245l24 18M1009 245l17-11M1012 244l24 19M1012 244l18-11M1016 244l18 15M1016 244l14-9M1019 243l19 16M1019 243l15-9M1022 243l18 15M1022 243l14-8M1026 242l22 19M1026 242l18-10M1029 242l19 17M1029 242l16-8M1033 241l16 15M1033 241l14-7M1036 241l21 20M1036 241l19-9M1039 240l21 20M1039 240l19-9M1043 240l14 14M1043 240l13-6M1046 240l17 17M1046 240l15-7M1050 240l15 15M1050 240l14-6M1053 239l17 18M1053 239l16-7M1057 239l15 15M1057 239l14-6M1060 239l14 15M1060 239l14-5M1063 239l14 14M1063 239l13-5M1067 239l15 16M1067 239l15-5M1070 239l14 15M1070 239l14-5M1073 239l13 14M1073 239l13-5M1077 239l13 15M1077 239l13-5M1080 239l11 13M1080 239l12-4M1083 239l13 14M1083 239l13-4M1087 239l10 11M1087 239l10-3M1090 239l10 11M1090 239l10-3M1093 239l9 11M1093 239l10-3M1096 239l7 8M1096 239l7-2M1100 240l5 6M1100 240l6-2M1103 240l4 5M1103 240l4-1M1106 240l0 0M1106 240l0 0M1109 240l0 0M1109 240l0 0"/><path id="f93" d="M876 261l-5-10M876 261l-15 4M874 259l-5-10M874 259l-15 5M871 257l-5-8M871 257l-13 4M869 256l-6-9M869 256l-14 5M866 254l-8-11M866 254l-18 7M864 253l-8-12M864 253l-19 8M861 251l-7-9M861 251l-15 6M858 250l-11-13M858 250l-22 10M856 249l-8-9M856 249l-16 7M853 247l-9-9M853 247l-17 8M850 246l-9-9M850 246l-16 8M848 245l-11-11M848 245l-20 10M845 244l-12-12M845 244l-21 12M842 243l-14-13M842 243l-24 14M839 242l-11-9M839 242l-18 11M836 241l-14-12M836 241l-23 14M834 240l-12-9M834 240l-18 11M831 239l-15-11M831 239l-22 14M828 238l-13-9M828 238l-19 13M825 238l-14-10M825 238l-20 14M822 237l-12-8M822 237l-17 12M819 236l-17-11M819 236l-23 17M816 236l-13-8M816 236l-18 13M813 235l-18-10M813 235l-23 18M810 234l-15-8M810 234l-19 15M807 234l-17-9M807 234l-21 17M804 233l-18-9M804 233l-21 18M801 233l-17-8M801 233l-20 17M798 233l-19-9M798 233l-23 20M795 232l-20-9M795 232l-23 20M792 232l-15-7M792 232l-17 16M789 232l-15-7M789 232l-17 16M786 231l-19-8M786 231l-21 20M783 231l-14-6M783 231l-15 14M780 231l-16-6M780 231l-17 16M777 231l-15-6M777 231l-16 16M774 231l-19-7M774 231l-20 20M771 231l-13-5M771 231l-13 14M768 231l-16-6M768 231l-16 17M765 231l-16-5M765 231l-16 17M762 231l-16-5M762 231l-16 17M759 231l-11-3M759 231l-11 12M756 231l-16-5M756 231l-15 17M753 231l-12-3M753 231l-11 12M750 231l-14-4M750 231l-13 15M747 231l-12-3M747 231l-11 13M744 231l-10-3M744 231l-10 11M741 231l-11-3M741 231l-10 12M738 231l-9-2M738 231l-9 10M735 231l-7-2M735 231l-7 8M732 232l-7-2M732 232l-6 8M729 232l-5-1M729 232l-4 5M726 232l-3-1M726 232l-3 3M723 232l0 0M723 232l0 0M721 233l0 0M721 233l0 0"/><path id="f94" d="M878 326l-15 7M878 326l-2 19M876 328l-13 6M876 328l-2 17M874 330l-13 7M874 330l-2 17M873 332l-16 8M873 332l-2 22M871 333l-17 9M871 333l-2 23M869 335l-18 9M869 335l-2 24M867 337l-19 10M867 337l-2 25M866 339l-14 8M866 339l-2 19M864 341l-18 10M864 341l-2 24M862 344l-21 11M862 344l-2 28M860 346l-23 12M860 346l-2 30M858 348l-18 10M858 348l-2 24M856 350l-22 12M856 350l-2 30M854 352l-21 11M854 352l-2 28M852 355l-24 13M852 355l-2 32M850 357l-18 10M850 357l-2 24M848 360l-22 12M848 360l-2 30M846 362l-24 13M846 362l-2 32M844 364l-21 12M844 364l-2 28M841 367l-18 10M841 367l-2 24M839 369l-19 10M839 369l-2 25M837 372l-18 10M837 372l-2 25M835 374l-18 10M835 374l-2 24M833 377l-19 10M833 377l-2 25M830 380l-23 13M830 380l-2 31M828 382l-18 10M828 382l-2 25M826 385l-24 14M826 385l-2 33M824 388l-24 14M824 388l-2 32M821 390l-25 14M821 390l-2 33M819 393l-25 14M819 393l-2 33M817 396l-24 13M817 396l-2 32M814 399l-26 15M814 399l-2 35M812 401l-26 15M812 401l-2 35M810 404l-23 13M810 404l-2 31M807 407l-26 15M807 407l-2 35M805 410l-18 10M805 410l-2 24M802 413l-18 10M802 413l-2 24M800 416l-17 10M800 416l-1 23M798 418l-19 10M798 418l-2 25M795 421l-20 11M795 421l-2 27M793 424l-20 11M793 424l-2 27M790 427l-22 12M790 427l-2 30M788 430l-22 12M788 430l-2 30M785 433l-17 9M785 433l-1 22M783 436l-19 10M783 436l-2 25M780 439l-20 11M780 439l-2 26M778 442l-18 10M778 442l-2 24M775 444l-16 9M775 444l-1 21M773 447l-19 10M773 447l-2 25M770 450l-17 9M770 450l-2 23M768 453l-19 10M768 453l-2 25M765 456l-17 9M765 456l-2 23M763 459l-20 11M763 459l-2 26M760 462l-19 10M760 462l-2 25M758 464l-13 7M758 464l-1 17M755 467l-17 9M755 467l-2 22M753 470l-16 8M753 470l-2 21M750 473l-13 7M750 473l-1 17M748 476l-11 6M748 476l-1 15M745 478l-12 6M745 478l-1 16M743 481l-11 6M743 481l-1 14M740 484l-12 6M740 484l-1 16M738 487l-12 6M738 487l-1 15M735 489l-9 4M735 489l-1 11M733 492l-7 4M733 492l-1 10M730 495l-7 3M730 495l-1 9M728 497l-6 3M728 497l-1 8M726 500l-4 2M726 500l-1 5M723 502l0 0M723 502l0 0M721 505l0 0M721 505l0 0M718 508l0 0M718 508l0 0"/><path id="f95" d="M442 429l-3 13M442 429l9 8M443 431l-4 17M443 431l12 11M444 433l-3 14M444 433l10 9M445 436l-5 18M445 436l13 12M446 439l-5 19M446 439l13 12M447 442l-5 18M447 442l12 12M448 445l-5 18M448 445l12 12M449 448l-4 16M449 448l11 11M450 451l-6 21M450 451l14 14M451 454l-5 18M451 454l12 12M452 457l-6 21M452 457l14 15M453 461l-5 17M453 461l12 12M454 465l-5 17M454 465l11 12M456 468l-5 17M456 468l12 12M457 472l-7 23M457 472l16 16M458 476l-6 18M458 476l12 13M459 480l-8 24M459 480l16 17M460 484l-6 20M460 484l13 14M462 488l-7 21M462 488l14 15M463 492l-6 19M463 492l13 14M464 496l-7 21M464 496l14 15M465 500l-5 17M465 500l11 12M466 505l-6 19M466 505l13 13M468 509l-7 23M468 509l15 16M469 513l-5 16M469 513l11 12M470 518l-6 20M470 518l13 14M471 522l-5 17M471 522l11 12M473 527l-5 16M473 527l11 11M474 531l-4 13M474 531l9 9M475 536l-4 13M475 536l8 9M477 540l-6 18M477 540l12 13M478 545l-5 16M478 545l11 11M479 549l-5 15M479 549l10 11M480 554l-4 13M480 554l9 10M482 558l-4 13M482 558l8 9M483 563l-3 8M483 563l5 6M484 567l-3 8M484 567l5 6M485 572l-2 5M485 572l4 4M486 576l-1 2M486 576l1 2M488 581l0 0M488 581l0 0"/><path id="f96" d="M450 354l10-1M450 354l-2-7M451 351l13-2M451 351l-3-10M453 348l12-2M453 348l-3-9M454 345l14-2M454 345l-3-10M456 342l16-2M456 342l-4-12M457 339l17-2M457 339l-4-13M458 337l14-2M458 337l-3-11M460 334l14-2M460 334l-3-11M461 331l14-2M461 331l-3-11M463 328l19-2M463 328l-4-15M464 325l21-2M464 325l-4-15M466 323l15-2M466 323l-3-11M467 320l16-2M467 320l-3-12M468 318l16-2M468 318l-3-12M470 315l23-3M470 315l-5-17M471 312l16-2M471 312l-3-12M472 310l20-2M472 310l-4-15M474 307l23-2M474 307l-5-17M475 305l17-2M475 305l-3-13M476 303l21-2M476 303l-4-16M477 300l18-2M477 300l-4-14M479 298l21-2M479 298l-4-16M480 296l19-2M480 296l-4-14M481 294l17-2M481 294l-3-12M482 291l23-2M482 291l-4-17M483 289l19-2M483 289l-4-14M484 287l23-2M484 287l-4-17M486 285l19-2M486 285l-4-14M487 283l22-2M487 283l-4-16M488 281l19-2M488 281l-4-14M489 279l14-1M489 279l-3-10M490 277l13-1M490 277l-3-10M491 275l20-2M491 275l-4-15M492 273l17-2M492 273l-3-13M493 271l17-2M493 271l-3-13M494 270l16-2M494 270l-3-12M495 268l13-1M495 268l-3-10M496 266l14-2M496 266l-3-10M497 264l13-1M497 264l-3-10M497 263l9-1M497 263l-2-7M498 261l10-1M498 261l-2-8M499 259l10-1M499 259l-2-8M500 258l8-1M500 258l-2-6M501 256l7-1M501 256l-2-5M502 255l3 0M502 255l-1-2M502 253l0 0M502 253l0 0M503 252l0 0M503 252l0 0"/><path id="f97" d="M466 414l5 11M466 414l10 2M468 415l6 12M468 415l10 2M471 416l6 13M471 416l12 2M474 417l8 18M474 417l15 3M476 419l6 15M476 419l13 3M479 420l6 15M479 420l12 3M482 422l8 19M482 422l16 4M484 423l7 17M484 423l15 4M487 425l10 24M487 425l20 5M490 426l7 17M490 426l15 4M493 428l8 21M493 428l18 5M496 430l9 24M496 430l20 6M499 432l8 21M499 432l17 5M502 434l10 27M502 434l22 7M505 436l8 22M505 436l18 6M508 438l7 20M508 438l17 5M511 440l8 22M511 440l18 6M514 442l6 18M514 442l15 5M517 444l7 22M517 444l18 6M521 446l7 20M521 446l17 6M524 448l9 26M524 448l22 7M527 450l8 25M527 450l21 7M530 452l7 22M530 452l18 6M533 454l6 18M533 454l14 5M537 457l6 19M537 457l16 6M540 459l6 19M540 459l15 5M543 461l6 18M543 461l15 5M546 463l6 18M546 463l15 5M549 466l7 23M549 466l19 7M553 468l5 16M553 468l13 5M556 470l5 15M556 470l12 4M559 473l6 21M559 473l17 6M562 475l5 17M562 475l14 5M566 477l6 19M566 477l15 6M569 480l4 14M569 480l12 4M572 482l5 16M572 482l13 5M575 484l4 13M575 484l11 4M578 486l4 12M578 486l10 4M582 489l3 10M582 489l9 3M585 491l2 8M585 491l6 2M588 493l1 4M588 493l4 1M591 495l0 1M591 495l1 0M594 497l0 0M594 497l0 0"/><path id="f98" d="M405 418l-8 2M405 418l-3 10M403 420l-10 3M403 420l-3 12M400 422l-13 5M400 422l-3 16M398 424l-12 5M398 424l-3 15M395 426l-11 5M395 426l-2 14M393 429l-13 6M393 429l-2 17M390 431l-14 7M390 431l-2 18M388 434l-14 8M388 434l-1 18M385 437l-14 8M385 437l-1 19M383 440l-13 8M383 440l-1 17M380 444l-12 8M380 444l0 17M377 447l-17 11M377 447l0 23M375 451l-17 11M375 451l0 23M372 455l-15 10M372 455l0 21M369 458l-13 9M369 458l0 18M367 463l-14 10M367 463l1 20M364 467l-15 12M364 467l1 22M362 471l-17 13M362 471l1 25M359 475l-14 11M359 475l1 21M356 480l-17 14M356 480l2 25M354 484l-14 12M354 484l2 20M351 489l-12 10M351 489l1 17M349 494l-14 12M349 494l2 20M346 499l-13 11M346 499l2 19M344 504l-12 11M344 504l2 18M341 509l-12 11M341 509l2 18M339 514l-8 8M339 514l2 12M336 519l-10 9M336 519l2 14M334 524l-10 9M334 524l2 15M331 529l-7 6M331 529l1 10M329 534l-6 5M329 534l1 8M327 540l-5 5M327 540l1 8M324 545l-4 4M324 545l1 6M322 550l-2 2M322 550l1 3M320 556l0 0M320 556l0 0"/><path id="f99" d="M391 371l-5-8M391 371l-13 2M389 370l-5-8M389 370l-13 3M386 368l-7-10M386 368l-16 4M384 366l-7-10M384 366l-16 5M381 365l-8-10M381 365l-18 5M379 363l-10-12M379 363l-20 7M376 362l-10-11M376 362l-20 7M374 361l-11-11M374 361l-20 8M371 359l-13-12M371 359l-22 9M368 358l-13-12M368 358l-22 10M366 357l-13-11M366 357l-21 10M363 356l-12-9M363 356l-18 9M360 355l-13-9M360 355l-20 11M358 354l-15-10M358 354l-22 12M355 353l-16-10M355 353l-22 13M352 353l-17-10M352 353l-23 15M349 352l-17-9M349 352l-22 14M346 351l-17-9M346 351l-21 15M344 351l-14-7M344 351l-18 13M341 350l-17-8M341 350l-21 15M338 350l-14-6M338 350l-17 13M335 349l-18-7M335 349l-21 16M332 349l-15-6M332 349l-17 14M329 349l-14-5M329 349l-15 13M326 348l-21-7M326 348l-22 20M323 348l-20-6M323 348l-21 19M320 348l-16-5M320 348l-17 15M317 348l-14-4M317 348l-14 14M314 348l-20-5M314 348l-20 19M311 348l-20-4M311 348l-19 19M308 348l-15-3M308 348l-14 15M305 349l-20-4M305 349l-18 19M303 349l-19-3M303 349l-17 19M300 349l-17-2M300 349l-15 17M297 349l-15-2M297 349l-13 15M294 350l-13-1M294 350l-11 13M291 350l-13-1M291 350l-11 13M288 351l-15-1M288 351l-12 15M285 351l-16-1M285 351l-13 17M282 352l-15-1M282 352l-12 15M279 352l-12 0M279 352l-9 12M276 353l-14 0M276 353l-11 15M273 354l-10 0M273 354l-7 10M270 354l-11 0M270 354l-8 12M267 355l-8 0M267 355l-6 9M264 356l-7 0M264 356l-5 7M262 357l-6 0M262 357l-4 7M259 358l-6 0M259 358l-4 7M256 359l-3 0M256 359l-2 3M253 359l0 0M253 359l0 0M250 360l0 0M250 360l0 0"/><path id="f100" d="M411 358l2-9M411 358l-11-4M410 355l2-10M410 355l-12-4M409 352l2-11M409 352l-14-4M407 350l2-12M407 350l-15-4M406 347l1-11M406 347l-13-4M405 344l1-11M405 344l-14-4M404 342l1-14M404 342l-17-4M402 339l1-10M402 339l-12-3M401 337l1-12M401 337l-15-3M400 334l0-13M400 334l-16-3M398 332l0-14M398 332l-17-3M397 330l0-14M397 330l-18-3M395 327l0-12M395 327l-15-3M394 325l0-14M394 325l-18-3M393 323l-1-12M393 323l-15-2M391 321l-1-13M391 321l-17-2M390 319l-1-12M390 319l-16-2M388 316l-1-13M388 316l-17-2M387 314l-2-15M387 314l-20-2M385 312l-2-14M385 312l-18-2M384 311l-2-12M384 311l-17-1M383 309l-3-14M383 309l-19-1M381 307l-3-15M381 307l-21-1M380 305l-3-13M380 305l-18-1M378 303l-3-13M378 303l-18 0M377 302l-3-14M377 302l-19 0M375 300l-4-15M375 300l-21 0M374 298l-3-11M374 298l-15 0M372 297l-4-14M372 297l-20 1M371 295l-4-11M371 295l-15 1M369 294l-5-15M369 294l-21 1M368 292l-4-11M368 292l-16 1M367 291l-5-14M367 291l-20 2M365 289l-4-9M365 289l-14 1M364 288l-5-11M364 288l-17 2M362 287l-5-10M362 287l-15 2M361 286l-6-12M361 286l-18 3M359 284l-6-11M359 284l-17 3M358 283l-4-8M358 283l-12 2M356 282l-4-7M356 282l-11 2M355 281l-5-9M355 281l-14 3M354 280l-5-7M354 280l-12 3M352 279l-4-6M352 279l-11 2M351 278l-4-6M351 278l-9 2M350 277l-4-5M350 277l-8 2M348 276l-4-5M348 276l-8 2M347 275l-3-3M347 275l-6 2M345 275l-2-2M345 275l-3 1M344 274l0 0M344 274l0 0M343 273l0 0M343 273l0 0"/><path id="f101" d="M438 426l-3 12M438 426l8 8M439 429l-4 15M439 429l10 11M440 432l-3 12M440 432l8 9M441 435l-4 14M441 435l9 11M442 438l-4 13M442 438l8 10M442 442l-4 13M442 442l8 10M443 445l-4 13M443 445l8 10M444 449l-5 15M444 449l9 12M445 453l-5 14M445 453l9 11M446 457l-5 14M446 457l8 11M446 461l-8 21M446 461l13 17M447 465l-6 16M447 465l9 13M448 470l-8 20M448 470l12 17M448 474l-8 19M448 474l11 16M449 479l-8 19M449 479l11 16M450 484l-8 18M450 484l11 16M450 489l-8 20M450 489l12 17M451 493l-8 19M451 493l11 17M451 498l-8 17M451 498l10 15M452 503l-7 16M452 503l9 14M452 509l-7 16M452 509l9 14M453 514l-7 15M453 514l9 14M453 519l-6 13M453 519l8 12M454 524l-6 12M454 524l7 11M454 529l-5 10M454 529l6 9M454 534l-6 12M454 534l7 11M455 540l-4 9M455 540l5 8M455 545l-3 6M455 545l3 6M455 550l-2 5M455 550l3 5M455 555l-2 4M455 555l2 4M456 560l0 0M456 560l0 0"/><path id="f102" d="M458 362l11 0M458 362l1-8M460 360l11 0M460 360l1-8M462 357l12 0M462 357l2-9M464 355l15 0M464 355l2-10M466 352l17 1M466 352l3-12M468 350l14 1M468 350l3-10M471 348l17 2M471 348l4-12M473 346l17 2M473 346l4-12M475 344l22 3M475 344l5-15M477 342l18 3M477 342l5-12M479 340l21 4M479 340l6-14M482 338l17 3M482 338l5-11M484 336l23 5M484 336l8-15M486 334l16 4M486 334l6-10M489 333l17 5M489 333l6-11M491 331l21 6M491 331l8-13M493 330l20 6M493 330l9-12M496 328l20 7M496 328l9-12M498 327l21 8M498 327l10-12M500 325l19 7M500 325l9-11M503 324l21 9M503 324l11-12M505 323l19 8M505 323l10-10M507 322l20 9M507 322l11-11M510 321l21 10M510 321l12-11M512 320l17 9M512 320l10-9M515 319l20 11M515 319l12-10M517 318l20 11M517 318l13-10M519 317l21 12M519 317l14-10M522 316l13 8M522 316l9-6M524 316l15 10M524 316l11-7M527 315l13 9M527 315l9-6M529 314l12 9M529 314l9-5M531 314l13 10M531 314l10-6M534 314l14 11M534 314l11-6M536 313l10 8M536 313l8-4M538 313l12 10M538 313l10-5M540 313l11 9M540 313l10-4M543 312l10 9M543 312l9-4M545 312l8 7M545 312l7-3M547 312l5 5M547 312l5-2M549 312l4 4M549 312l4-1M552 312l1 1M552 312l1 0M554 312l0 0M554 312l0 0"/><path id="f103" d="M395 408l-11-2M395 408l-8 14M393 408l-9-2M393 408l-6 12M390 409l-11-1M390 409l-7 13M387 410l-13-1M387 410l-7 15M384 411l-13-1M384 411l-7 17M381 412l-13 0M381 412l-7 16M378 413l-17 0M378 413l-8 21M375 414l-13 1M375 414l-6 16M372 416l-16 1M372 416l-6 19M369 417l-14 1M369 417l-5 17M366 419l-19 2M366 419l-7 24M363 421l-18 3M363 421l-6 22M360 423l-21 3M360 423l-7 26M357 425l-15 3M357 425l-4 19M354 427l-19 4M354 427l-5 24M351 429l-19 4M351 429l-5 23M347 431l-14 3M347 431l-4 18M344 433l-20 5M344 433l-5 26M341 436l-21 6M341 436l-5 26M338 438l-15 4M338 438l-3 19M335 441l-21 6M335 441l-4 27M332 443l-20 6M332 443l-3 25M328 446l-18 6M328 446l-3 23M325 449l-17 6M325 449l-3 22M322 452l-15 5M322 452l-2 19M319 455l-13 5M319 455l-2 17M316 458l-16 6M316 458l-2 20M313 461l-18 7M313 461l-2 23M309 464l-13 5M309 464l-1 17M306 467l-14 6M306 467l-1 18M303 470l-12 5M303 470l-1 16M300 473l-14 6M300 473l-1 18M297 476l-14 6M297 476l-1 19M294 479l-13 6M294 479l-1 17M291 483l-9 4M291 483l0 12M288 486l-9 4M288 486l0 11M285 489l-6 3M285 489l0 8M282 493l-6 3M282 493l0 8M279 496l-5 2M279 496l0 7M276 499l-2 1M276 499l0 2M273 503l0 0M273 503l0 0"/><path id="f104" d="M412 429l-11 7M412 429l0 15M410 431l-12 8M410 431l1 16M409 433l-15 10M409 433l1 20M407 436l-12 9M407 436l1 17M406 438l-11 8M406 438l2 15M404 441l-15 12M404 441l3 21M402 444l-14 12M402 444l3 20M401 447l-15 13M401 447l3 21M399 450l-15 14M399 450l4 22M398 454l-13 12M398 454l4 19M396 457l-13 12M396 457l4 19M395 461l-12 12M395 461l4 18M393 465l-17 17M393 465l6 25M392 468l-18 18M392 468l6 27M391 472l-17 17M391 472l6 25M389 476l-13 13M389 476l5 20M388 480l-18 19M388 480l7 28M386 485l-17 19M386 485l7 26M385 489l-15 17M385 489l6 23M383 493l-12 13M383 493l5 18M382 498l-17 19M382 498l7 26M381 503l-15 17M381 503l7 24M379 507l-15 17M379 507l7 23M378 512l-11 13M378 512l5 17M377 517l-15 18M377 517l7 24M376 521l-11 13M376 521l5 17M374 526l-13 15M374 526l6 20M373 531l-11 13M373 531l5 17M372 536l-11 14M372 536l6 18M371 541l-14 17M371 541l7 22M369 546l-12 15M369 546l7 20M368 552l-12 15M368 552l7 19M367 557l-9 11M367 557l5 15M366 562l-9 11M366 562l5 14M365 567l-9 11M365 567l5 14M364 572l-6 8M364 572l4 10M363 577l-7 9M363 577l4 11M362 583l-7 9M362 583l4 11M361 588l-5 7M361 588l3 9M360 593l-4 5M360 593l2 6M359 598l-1 1M359 598l1 2M358 603l0 0M358 603l0 0"/><path id="f105" d="M410 429l-13 8M410 429l1 18M408 431l-11 7M408 431l1 14M407 433l-14 9M407 433l2 19M406 435l-12 8M406 435l2 17M404 437l-14 10M404 437l2 20M403 440l-16 11M403 440l2 22M401 442l-13 9M401 442l2 19M400 445l-16 11M400 445l3 22M398 447l-14 10M398 447l2 19M397 450l-16 11M397 450l3 22M395 453l-13 9M395 453l2 18M394 456l-15 11M394 456l3 20M392 459l-15 11M392 459l3 21M390 462l-20 14M390 462l4 27M388 465l-14 11M388 465l3 20M387 468l-19 14M387 468l4 26M385 472l-14 11M385 472l3 20M383 475l-21 15M383 475l4 29M381 478l-15 11M381 478l3 21M380 482l-14 11M380 482l3 20M378 485l-15 11M378 485l3 21M376 489l-20 15M376 489l4 28M374 492l-18 14M374 492l4 25M372 496l-19 15M372 496l4 27M370 500l-17 13M370 500l4 23M368 503l-14 10M368 503l3 19M366 507l-15 11M366 507l3 21M364 511l-15 12M364 511l3 22M362 515l-19 14M362 515l4 26M360 518l-13 10M360 518l3 18M359 522l-13 10M359 522l3 18M357 526l-16 13M357 526l4 23M355 530l-11 9M355 530l3 16M353 534l-16 12M353 534l3 22M351 537l-12 9M351 537l3 16M349 541l-12 10M349 541l3 17M347 545l-12 9M347 545l3 17M345 549l-12 10M345 549l3 17M343 553l-8 6M343 553l2 11M341 557l-10 8M341 557l2 14M339 561l-7 5M339 561l1 9M337 564l-7 6M337 564l2 10M335 568l-4 3M335 568l1 6M333 572l-4 3M333 572l1 6M331 576l0 0M331 576l0 0M329 580l0 0M329 580l0 0"/><path id="f106" d="M471 384l13 7M471 384l6-8M474 382l13 8M474 382l7-7M476 381l14 9M476 381l8-8M479 380l16 11M479 380l10-9M482 380l17 13M482 380l11-9M485 379l15 12M485 379l11-8M488 378l13 11M488 378l9-6M491 378l13 12M491 378l10-6M494 377l16 16M494 377l14-7M497 377l17 17M497 377l15-7M500 377l15 16M500 377l14-6M503 377l17 19M503 377l16-6M506 377l13 16M506 377l14-5M509 377l14 18M509 377l16-5M512 377l14 19M512 377l16-4M516 377l16 22M516 377l19-5M519 378l17 25M519 378l21-5M522 378l13 19M522 378l16-3M525 379l11 18M525 379l15-2M529 380l12 21M529 380l18-2M532 380l15 26M532 380l22-2M535 381l15 27M535 381l23-2M538 382l10 19M538 382l16-1M542 383l11 21M542 383l18-1M545 384l11 23M545 384l19 0M548 385l12 27M548 385l22 0M552 387l10 24M552 387l20 1M555 388l9 22M555 388l18 1M559 390l11 27M559 390l22 2M562 391l9 25M562 391l20 2M565 393l9 26M565 393l21 2M569 394l9 24M569 394l20 3M572 396l9 25M572 396l21 3M575 398l7 22M575 398l18 3M579 400l7 22M579 400l18 3M582 402l6 19M582 402l16 3M585 404l6 20M585 404l16 3M589 406l6 21M589 406l17 4M592 408l5 20M592 408l16 4M595 410l4 18M595 410l15 4M598 413l4 15M598 413l12 3M602 415l3 13M602 415l10 3M605 417l2 11M605 417l9 3M608 420l2 9M608 420l7 2M611 422l2 9M611 422l7 2M614 425l1 6M614 425l4 2M617 428l0 0M617 428l0 0M620 430l0 0M620 430l0 0"/><path id="f107" d="M388 399l-9-3M388 399l-9 10M385 399l-13-4M385 399l-13 15M382 399l-13-4M382 399l-12 14M379 399l-14-3M379 399l-12 16M376 400l-17-3M376 400l-14 19M373 400l-14-2M373 400l-11 16M369 401l-14-2M369 401l-11 16M366 401l-15-1M366 401l-11 17M363 402l-16-1M363 402l-11 18M360 403l-16-1M360 403l-10 18M357 404l-17 0M357 404l-10 19M353 405l-16 0M353 405l-10 19M350 406l-19 1M350 406l-11 22M347 407l-17 1M347 407l-10 21M343 409l-18 1M343 409l-10 22M340 410l-21 2M340 410l-11 25M337 412l-18 2M337 412l-9 22M333 413l-23 3M333 413l-11 28M330 415l-23 3M330 415l-11 27M326 417l-19 3M326 417l-8 23M323 419l-23 4M323 419l-10 28M319 420l-17 3M319 420l-7 21M316 422l-17 4M316 422l-7 20M313 424l-24 5M313 424l-9 30M309 427l-16 4M309 427l-6 19M306 429l-15 4M306 429l-6 19M302 431l-22 6M302 431l-8 27M299 433l-15 4M299 433l-5 19M295 436l-20 6M295 436l-6 25M292 438l-18 6M292 438l-6 23M288 441l-15 5M288 441l-5 19M285 443l-15 5M285 443l-4 19M281 446l-20 7M281 446l-5 25M278 449l-15 5M278 449l-4 19M275 451l-13 5M275 451l-3 17M271 454l-14 5M271 454l-3 18M268 457l-15 6M268 457l-4 19M264 460l-11 5M264 460l-3 15M261 463l-10 4M261 463l-2 12M258 466l-12 5M258 466l-2 15M255 469l-8 3M255 469l-2 10M251 472l-6 3M251 472l-1 8M248 475l-5 2M248 475l-1 6M245 478l-5 2M245 478l-1 7M242 481l0 0M242 481l0 0M239 485l0 0M239 485l0 0"/><path id="f108" d="M462 378l10 3M462 378l2-6M464 376l10 4M464 376l3-7M467 375l10 4M467 375l3-7M469 373l14 6M469 373l5-9M472 371l15 7M472 371l6-10M475 370l12 6M475 370l5-8M477 369l17 9M477 369l8-10M480 367l12 7M480 367l6-7M483 366l13 8M483 366l7-8M486 365l13 8M486 365l7-7M488 364l18 12M488 364l10-10M491 363l13 10M491 363l8-7M494 362l17 13M494 362l12-9M497 362l14 11M497 362l10-7M500 361l14 12M500 361l11-7M503 361l13 12M503 361l10-6M506 360l17 16M506 360l14-8M509 360l14 14M509 360l12-7M512 359l18 18M512 359l15-8M515 359l16 17M515 359l14-7M518 359l15 16M518 359l14-6M522 359l14 16M522 359l13-6M525 359l14 16M525 359l14-6M528 359l13 17M528 359l14-5M531 359l15 19M531 359l16-6M534 359l11 14M534 359l12-4M537 360l10 14M537 360l12-3M540 360l13 19M540 360l16-4M544 360l11 16M544 360l14-3M547 361l11 16M547 361l13-3M550 361l9 14M550 361l12-3M553 362l7 11M553 362l9-2M556 362l7 12M556 362l10-2M559 363l8 14M559 363l12-2M563 364l6 11M563 364l9-1M566 364l6 11M566 364l9-1M569 365l5 10M569 365l8-1M572 366l4 7M572 366l6-1M575 367l3 6M575 367l5 0M578 368l2 4M578 368l3 0M581 369l1 2M581 369l1 0M584 370l0 0M584 370l0 0"/><path id="f109" d="M429 430l-5 9M429 430l5 9M429 433l-7 14M429 433l7 15M429 436l-6 11M429 436l5 11M429 438l-9 17M429 438l8 17M429 441l-7 13M429 441l6 13M428 444l-7 13M428 444l6 14M428 447l-10 18M428 447l9 19M428 451l-10 19M428 451l9 19M428 454l-8 15M428 454l7 15M428 458l-10 17M428 458l8 18M428 461l-9 17M428 461l8 18M428 465l-11 19M428 465l9 20M427 469l-9 15M427 469l7 16M427 473l-11 20M427 473l10 22M427 477l-12 22M427 477l10 23M427 481l-11 20M427 481l9 21M426 485l-12 21M426 485l10 22M426 489l-12 21M426 489l10 23M426 493l-9 17M426 493l8 18M426 498l-11 20M426 498l9 21M425 502l-11 20M425 502l9 21M425 506l-10 18M425 506l8 19M425 511l-8 14M425 511l6 15M424 515l-10 17M424 515l8 18M424 520l-11 18M424 520l9 20M424 524l-8 14M424 524l6 15M423 529l-9 15M423 529l7 17M423 533l-9 16M423 533l7 18M423 538l-8 14M423 538l6 15M422 542l-6 10M422 542l5 11M422 547l-7 12M422 547l6 13M422 551l-5 9M422 551l4 10M421 556l-6 11M421 556l5 12M421 560l-5 9M421 560l4 9M420 565l-4 6M420 565l3 7M420 569l-3 6M420 569l3 6M420 574l-1 2M420 574l1 3M419 578l0 0M419 578l0 0"/><path id="f110" d="M438 362l8-4M438 362l-4-7M439 359l7-4M439 359l-3-6M440 356l8-5M440 356l-4-7M440 353l8-5M440 353l-4-8M441 350l11-6M441 350l-5-10M442 347l8-4M442 347l-4-7M442 344l10-6M442 344l-5-9M443 341l11-6M443 341l-5-9M444 338l10-5M444 338l-4-9M445 335l11-6M445 335l-4-10M445 332l11-6M445 332l-5-10M446 330l11-6M446 330l-5-10M447 327l13-6M447 327l-5-11M448 324l13-6M448 324l-5-11M448 321l12-6M448 321l-5-11M449 319l12-6M449 319l-5-11M450 316l13-6M450 316l-5-12M451 314l13-6M451 314l-5-11M451 311l11-5M451 311l-4-9M452 309l14-6M452 309l-5-12M453 306l12-5M453 306l-4-11M454 304l15-6M454 304l-5-13M455 301l11-5M455 301l-3-9M455 299l13-5M455 299l-4-11M456 296l11-5M456 296l-4-10M457 294l13-5M457 294l-4-11M458 292l13-6M458 292l-4-11M459 289l12-5M459 289l-4-10M459 287l11-5M459 287l-3-10M460 285l12-5M460 285l-4-11M461 282l9-4M461 282l-3-8M462 280l11-5M462 280l-3-10M462 278l9-4M462 278l-3-7M463 276l9-4M463 276l-3-7M464 274l6-3M464 274l-2-5M465 272l5-2M465 272l-2-5M465 269l5-2M465 269l-1-4M466 267l5-2M466 267l-1-4M467 265l3-1M467 265l-1-3M468 263l1-1M468 263l0-1M468 261l0 0M468 261l0 0"/><path id="f111" d="M400 362l0-9M400 362l-12-1M398 360l-1-10M398 360l-14 0M396 357l-1-11M396 357l-15 0M394 355l-2-9M394 355l-13 1M392 353l-3-13M392 353l-18 1M390 350l-3-12M390 350l-17 2M388 348l-3-10M388 348l-14 2M386 346l-4-11M386 346l-16 3M384 344l-4-10M384 344l-15 3M381 342l-6-12M381 342l-19 5M379 341l-6-10M379 341l-16 4M377 339l-8-13M377 339l-20 6M374 338l-8-11M374 338l-18 6M372 336l-10-14M372 336l-23 9M369 335l-11-13M369 335l-23 9M367 333l-9-10M367 333l-18 8M364 332l-13-13M364 332l-23 11M362 331l-12-11M362 331l-21 11M359 330l-11-10M359 330l-19 10M356 329l-15-12M356 329l-24 14M354 328l-11-8M354 328l-16 10M351 328l-14-9M351 328l-19 13M348 327l-15-9M348 327l-20 15M346 326l-13-7M346 326l-16 12M343 326l-15-8M343 326l-19 15M340 326l-18-8M340 326l-21 18M338 325l-15-6M338 325l-17 15M335 325l-17-7M335 325l-19 17M332 325l-14-5M332 325l-14 14M329 325l-19-6M329 325l-19 20M326 325l-19-5M326 325l-18 19M324 325l-13-3M324 325l-12 14M321 325l-17-4M321 325l-15 18M318 325l-14-3M318 325l-12 15M315 326l-12-2M315 326l-10 13M312 326l-12-2M312 326l-10 13M309 326l-15-2M309 326l-12 16M307 327l-13-1M307 327l-9 14M304 328l-12-1M304 328l-9 14M301 328l-10 0M301 328l-7 11M298 329l-9 0M298 329l-6 10M295 330l-9 0M295 330l-6 10M292 331l-8 0M292 331l-5 9M290 332l-7 1M290 332l-4 8M287 333l-4 0M287 333l-2 5M284 334l0 0M284 334l0 0M281 335l0 0M281 335l0 0"/><path id="f112" d="M467 390l13 8M467 390l8-6M470 389l13 9M470 389l9-6M473 388l13 9M473 388l10-6M475 388l11 8M475 388l9-5M478 387l13 11M478 387l11-5M481 387l12 10M481 387l10-4M484 387l11 10M484 387l10-4M487 386l11 11M487 386l11-4M490 386l11 12M490 386l12-3M493 386l15 17M493 386l16-4M496 387l15 17M496 387l16-4M499 387l15 18M499 387l17-3M502 387l14 19M502 387l17-3M505 388l11 15M505 388l14-2M508 388l11 16M508 388l15-2M511 389l13 19M511 389l17-1M514 389l13 20M514 389l18-1M517 390l13 21M517 390l19-1M520 391l13 22M520 391l19 0M523 392l9 16M523 392l14 0M526 393l11 20M526 393l17 1M530 394l11 20M530 394l18 1M533 395l10 19M533 395l17 1M536 396l8 16M536 396l14 1M539 398l9 19M539 398l16 2M542 399l7 15M542 399l13 2M545 401l10 22M545 401l19 3M549 402l9 21M549 402l18 3M552 404l7 18M552 404l15 3M555 405l6 16M555 405l13 3M558 407l8 19M558 407l16 3M561 409l6 16M561 409l14 3M564 410l6 18M564 410l15 3M567 412l6 17M567 412l14 3M571 414l5 14M571 414l11 3M574 416l4 12M574 416l10 3M577 418l4 12M577 418l10 3M580 420l3 10M580 420l8 2M583 422l2 8M583 422l6 2M586 424l2 7M586 424l5 2M589 426l2 6M589 426l5 2M592 428l0 1M592 428l1 0M594 430l0 0M594 430l0 0"/><path id="f113" d="M463 379l12 4M463 379l6-7M466 378l10 4M466 378l5-6M469 377l11 4M469 377l6-6M471 375l16 7M471 375l9-8M474 374l12 6M474 374l7-6M477 373l13 6M477 373l8-7M480 372l14 7M480 372l9-7M483 371l17 9M483 371l11-8M485 370l14 8M485 370l9-6M488 369l15 9M488 369l10-7M491 368l13 8M491 368l10-6M494 367l15 9M494 367l11-6M497 367l19 12M497 367l14-8M500 366l18 12M500 366l14-7M502 366l18 13M502 366l14-7M505 365l20 15M505 365l16-7M508 365l14 10M508 365l11-5M511 364l15 12M511 364l13-5M514 364l18 14M514 364l16-6M517 364l15 13M517 364l14-5M520 363l19 17M520 363l18-6M523 363l14 13M523 363l13-4M526 363l19 17M526 363l18-5M528 363l17 16M528 363l17-4M531 363l16 16M531 363l16-4M534 363l17 17M534 363l18-4M537 363l13 14M537 363l14-3M540 364l12 14M540 364l14-2M543 364l12 14M543 364l14-2M545 364l13 16M545 364l15-2M548 364l13 16M548 364l16-2M551 365l11 14M551 365l14-1M554 365l11 15M554 365l14-1M556 366l10 13M556 366l13-1M559 366l10 13M559 366l13 0M562 367l7 9M562 367l9 0M564 368l8 12M564 368l11 0M567 368l6 9M567 368l9 0M570 369l5 8M570 369l7 0M572 370l3 6M572 370l5 0M575 371l3 5M575 371l5 0M577 372l1 1M577 372l1 0M580 373l0 0M580 373l0 0"/><path id="f114" d="M382 385l-9-6M382 385l-13 7M379 384l-12-7M379 384l-16 9M376 383l-12-6M376 383l-16 10M373 382l-12-6M373 382l-16 10M370 382l-15-7M370 382l-19 13M367 381l-13-6M367 381l-16 11M364 380l-16-7M364 380l-19 14M361 380l-15-6M361 380l-17 13M358 380l-13-5M358 380l-15 11M354 379l-16-5M354 379l-17 14M351 379l-15-5M351 379l-16 13M348 379l-14-4M348 379l-15 13M345 379l-16-4M345 379l-17 15M341 379l-16-4M341 379l-16 14M338 378l-19-4M338 378l-19 17M335 378l-21-5M335 378l-21 20M332 379l-22-4M332 379l-21 20M328 379l-23-4M328 379l-22 22M325 379l-19-3M325 379l-17 18M322 379l-22-3M322 379l-20 21M318 379l-24-3M318 379l-22 23M315 380l-20-2M315 380l-18 19M311 380l-25-3M311 380l-21 24M308 380l-17-2M308 380l-15 17M305 381l-25-2M305 381l-21 24M301 381l-24-2M301 381l-20 24M298 382l-25-1M298 382l-21 25M294 382l-24-1M294 382l-19 24M291 383l-22-1M291 383l-18 23M287 384l-20 0M287 384l-16 20M284 384l-22 0M284 384l-17 22M281 385l-23 0M281 385l-18 24M277 386l-20 0M277 386l-15 21M274 387l-20 0M274 387l-15 21M270 388l-22 1M270 388l-16 23M267 388l-17 1M267 388l-12 17M264 389l-17 1M264 389l-12 17M260 390l-14 1M260 390l-10 15M257 391l-19 1M257 391l-14 20M254 392l-17 1M254 392l-12 18M250 393l-16 1M250 393l-11 17M247 394l-13 1M247 394l-9 14M244 395l-12 1M244 395l-8 13M240 397l-13 1M240 397l-8 14M237 398l-14 2M237 398l-9 15M234 399l-10 1M234 399l-6 11M231 400l-9 1M231 400l-6 10M228 401l-8 1M228 401l-5 8M224 402l-7 1M224 402l-4 8M221 404l-3 1M221 404l-2 3M218 405l0 0M218 405l0 0M215 406l0 0M215 406l0 0"/><path id="f115" d="M469 405l7 11M469 405l9-2M472 405l8 13M472 405l11-2M475 406l7 13M475 406l11-2M477 407l9 17M477 407l14-2M480 407l8 15M480 407l12-1M483 408l8 17M483 408l13-1M486 409l9 21M486 409l17-1M489 410l7 18M489 410l14 0M492 411l8 21M492 411l17 0M495 413l9 24M495 413l20 0M498 414l6 18M498 414l14 1M501 415l6 18M501 415l14 1M504 417l6 20M504 417l16 1M508 419l8 25M508 419l20 2M511 420l7 24M511 420l19 2M514 422l6 21M514 422l16 2M517 424l6 22M517 424l17 3M520 426l5 20M520 426l16 3M524 428l5 23M524 428l18 3M527 430l4 19M527 430l15 3M530 432l5 26M530 432l20 4M533 435l5 28M533 435l22 5M536 437l5 28M536 437l22 5M540 439l5 26M540 439l20 5M543 442l5 27M543 442l21 6M546 444l3 18M546 444l14 4M549 447l3 20M549 447l16 4M553 450l4 26M553 450l20 6M556 452l3 24M556 452l18 6M559 455l3 20M559 455l15 5M562 458l3 24M562 458l18 6M566 461l2 20M566 461l16 5M569 464l2 21M569 464l16 6M572 466l2 16M572 466l12 4M575 469l1 14M575 469l11 4M578 472l1 15M578 472l12 4M581 475l1 12M581 475l9 4M585 478l1 12M585 478l10 4M588 482l1 14M588 482l11 4M591 485l1 9M591 485l7 3M594 488l0 6M594 488l5 2M597 491l0 4M597 491l3 1M600 494l0 1M600 494l1 0M603 497l0 0M603 497l0 0"/><path id="f116" d="M453 358l12-2M453 358l-2-9M454 355l12-1M454 355l-2-9M456 352l12-1M456 352l-2-9M458 349l16-2M458 349l-2-12M459 347l14-1M459 347l-1-10M461 344l17-1M461 344l-2-13M462 341l15-1M462 341l-1-11M464 339l20-1M464 339l-1-15M466 336l15-1M466 336l-1-11M467 334l17 0M467 334l-1-13M469 331l17 0M469 331l-1-13M471 329l22 0M471 329l0-16M472 327l21 0M472 327l0-15M474 324l18 0M474 324l0-13M476 322l18 1M476 322l0-13M477 320l22 1M477 320l1-16M479 318l20 1M479 318l1-14M481 316l18 1M481 316l1-13M483 314l17 1M483 314l1-12M484 312l23 2M484 312l2-16M486 310l22 2M486 310l2-16M488 308l24 3M488 308l2-17M490 306l17 2M490 306l2-12M491 304l21 3M491 304l2-15M493 302l18 2M493 302l2-12M495 300l21 3M495 300l3-15M497 298l18 3M497 298l3-13M498 297l18 3M498 297l3-12M500 295l20 4M500 295l3-14M502 293l17 3M502 293l3-12M504 292l22 4M504 292l4-15M505 290l16 3M505 290l3-11M507 288l17 4M507 288l3-11M509 287l20 5M509 287l4-13M511 285l16 4M511 285l4-10M512 284l15 4M512 284l4-10M514 283l18 5M514 283l4-12M516 281l16 4M516 281l4-10M517 280l16 5M517 280l4-11M519 279l16 5M519 279l4-10M521 277l15 5M521 277l4-10M522 276l10 3M522 276l3-6M524 275l10 3M524 275l3-7M526 274l9 3M526 274l3-6M527 273l7 2M527 273l2-5M529 272l7 2M529 272l2-5M530 270l4 1M530 270l1-3M532 269l0 0M532 269l0 0M534 268l0 0M534 268l0 0"/><path id="f117" d="M422 359l4-5M422 359l-7-3M421 356l6-8M421 356l-10-5M421 353l6-7M421 353l-10-4M420 350l6-7M420 350l-9-4M419 347l6-8M419 347l-10-4M419 344l6-8M419 344l-10-4M418 341l7-10M418 341l-13-5M417 338l7-9M417 338l-12-5M417 335l7-10M417 335l-13-5M416 332l7-11M416 332l-14-5M415 330l8-12M415 330l-16-6M415 327l8-11M415 327l-15-5M414 324l6-10M414 324l-13-5M413 321l7-12M413 321l-15-5M413 319l8-12M413 319l-16-5M412 316l8-13M412 316l-17-6M411 314l6-11M411 314l-14-5M410 311l7-12M410 311l-15-5M410 309l7-13M410 309l-17-5M409 307l6-11M409 307l-14-4M408 304l6-11M408 304l-14-4M407 302l6-12M407 302l-16-4M407 300l6-11M407 300l-14-4M406 297l7-13M406 297l-17-5M405 295l5-10M405 295l-14-4M404 293l5-10M404 293l-13-3M403 291l5-11M403 291l-15-4M403 289l5-11M403 289l-14-3M402 287l6-12M402 287l-16-4M401 285l5-11M401 285l-15-3M400 283l4-9M400 283l-12-3M400 281l4-9M400 281l-12-2M399 280l4-9M399 280l-12-2M398 278l3-8M398 278l-11-2M397 276l3-8M397 276l-10-2M397 274l3-6M397 274l-9-2M396 273l3-7M396 273l-9-2M395 271l2-6M395 271l-8-1M394 269l2-5M394 269l-6-1M394 268l1-3M394 268l-4-1M393 266l0-1M393 266l-2 0M392 265l0 0M392 265l0 0"/><path id="f118" d="M420 355l4-6M420 355l-8-3M419 351l6-9M419 351l-11-5M419 348l5-7M419 348l-9-4M418 345l6-9M418 345l-12-5M417 342l6-9M417 342l-12-5M417 340l7-11M417 340l-14-6M416 337l5-8M416 337l-11-4M415 334l7-11M415 334l-15-6M414 331l8-12M414 331l-16-6M414 328l6-9M414 328l-12-4M413 326l8-12M413 326l-16-6M412 323l6-11M412 323l-14-5M411 320l8-13M411 320l-17-6M411 318l9-15M411 318l-19-7M410 315l6-10M410 315l-13-4M409 313l7-12M409 313l-16-5M408 310l7-13M408 310l-16-5M408 308l8-15M408 308l-20-7M407 305l8-15M407 305l-20-6M406 303l6-10M406 303l-13-4M405 301l6-11M405 301l-14-4M405 298l6-13M405 298l-16-5M404 296l7-15M404 296l-19-6M403 294l7-15M403 294l-19-5M402 292l6-13M402 292l-17-5M402 290l7-15M402 290l-20-5M401 288l7-14M401 288l-19-5M400 286l7-15M400 286l-19-5M399 284l6-13M399 284l-17-4M399 282l5-11M399 282l-14-4M398 280l6-13M398 280l-17-4M397 278l5-13M397 278l-17-4M397 276l6-13M397 276l-17-4M396 274l4-9M396 274l-12-3M395 273l3-8M395 273l-11-2M394 271l4-10M394 271l-12-3M394 269l3-9M394 269l-12-2M393 268l3-9M393 268l-12-2M392 266l3-7M392 266l-9-2M392 264l3-9M392 264l-11-2M391 263l3-7M391 263l-10-2M390 261l2-6M390 261l-8-1M390 260l2-5M390 260l-7-1M389 258l2-5M389 258l-7-1M388 257l1-3M388 257l-5-1M388 256l1-3M388 256l-4-1M387 254l0 0M387 254l0 0M386 253l0 0M386 253l0 0"/><path id="f119" d="M397 372l-3-8M397 372l-12 2M395 369l-3-7M395 369l-11 2M392 367l-4-8M392 367l-12 2M390 365l-4-8M390 365l-12 3M387 363l-6-11M387 363l-18 5M384 361l-6-9M384 361l-15 4M382 360l-8-11M382 360l-18 6M379 358l-9-12M379 358l-20 7M376 356l-8-10M376 356l-17 7M373 355l-8-9M373 355l-16 7M371 353l-9-9M371 353l-16 7M368 352l-10-10M368 352l-19 9M365 351l-11-10M365 351l-18 9M362 350l-10-8M362 350l-16 9M359 349l-14-11M359 349l-22 13M356 348l-14-10M356 348l-20 12M353 347l-15-10M353 347l-22 14M350 346l-16-10M350 346l-22 15M347 345l-15-9M347 345l-20 15M344 345l-16-9M344 345l-21 16M341 344l-16-8M341 344l-20 15M337 344l-14-7M337 344l-17 14M334 343l-17-7M334 343l-20 17M331 343l-18-7M331 343l-20 18M328 343l-13-5M328 343l-14 13M325 343l-13-4M325 343l-14 13M322 342l-13-4M322 342l-13 13M319 342l-15-4M319 342l-15 15M315 342l-17-4M315 342l-16 18M312 343l-15-3M312 343l-14 15M309 343l-16-3M309 343l-15 17M306 343l-13-2M306 343l-11 14M303 343l-14-2M303 343l-12 14M300 344l-11-2M300 344l-9 12M297 344l-13-2M297 344l-10 13M294 345l-10-1M294 345l-8 11M290 345l-8-1M290 345l-6 9M287 346l-9-1M287 346l-7 10M284 347l-8 0M284 347l-6 9M281 347l-7 0M281 347l-5 8M278 348l-4 0M278 348l-3 5M275 349l-2 0M275 349l-1 2M272 350l0 0M272 350l0 0"/><path id="f120" d="M409 421l-11 4M409 421l-3 14M407 423l-9 4M407 423l-2 11M405 425l-10 5M405 425l-2 13M403 427l-14 8M403 427l-2 19M401 429l-15 9M401 429l-2 20M399 431l-14 9M399 431l-1 19M397 434l-16 10M397 434l-1 22M395 437l-11 8M395 437l0 15M393 439l-16 12M393 439l0 23M391 442l-15 12M391 442l0 21M389 446l-15 12M389 446l1 22M387 449l-16 13M387 449l1 23M385 452l-12 10M385 452l1 17M383 456l-12 11M383 456l1 18M381 459l-12 11M381 459l1 18M380 463l-14 13M380 463l2 21M378 467l-14 13M378 467l2 21M376 470l-14 13M376 470l2 21M374 474l-13 12M374 474l2 19M372 478l-15 15M372 478l3 22M370 483l-15 15M370 483l3 23M369 487l-14 15M369 487l3 22M367 491l-10 10M367 491l2 15M365 495l-10 11M365 495l3 16M363 500l-10 11M363 500l3 16M362 504l-10 11M362 504l3 15M360 508l-11 12M360 508l3 17M358 513l-9 10M358 513l3 14M357 517l-10 11M357 517l3 15M355 522l-8 9M355 522l3 13M354 526l-7 9M354 526l2 12M352 531l-8 9M352 531l3 12M351 535l-7 9M351 535l3 12M349 540l-4 5M349 540l2 7M348 545l-3 4M348 545l1 6M347 549l-2 3M347 549l1 4M345 554l0 0M345 554l0 0"/><path id="f121" d="M458 421l3 16M458 421l13 4M460 422l2 13M460 422l10 3M462 424l2 17M462 424l13 4M464 426l2 16M464 426l13 5M466 428l2 20M466 428l16 6M468 430l2 17M468 430l13 6M471 432l1 17M471 432l13 6M473 434l1 20M473 434l15 7M475 437l1 25M475 437l19 9M477 439l1 18M477 439l13 7M479 442l0 18M479 442l14 7M482 444l0 23M482 444l17 9M484 447l0 26M484 447l20 10M486 450l0 23M486 450l17 9M488 453l0 22M488 453l17 9M491 456l0 26M491 456l20 11M493 459l-1 26M493 459l19 11M495 462l-1 19M495 462l14 8M498 465l-1 27M498 465l20 12M500 469l-1 20M500 469l15 9M502 472l-1 21M502 472l15 10M505 475l-2 26M505 475l19 12M507 479l-1 22M507 479l16 10M510 482l-2 25M510 482l18 12M512 486l-1 19M512 486l14 9M514 490l-2 25M514 490l18 12M517 494l-2 18M517 494l13 9M519 497l-2 18M519 497l13 9M521 501l-2 20M521 501l15 10M524 505l-2 18M524 505l13 9M526 509l-2 19M526 509l14 10M528 513l-2 21M528 513l15 11M531 517l-2 19M531 517l14 10M533 521l-2 13M533 521l9 7M535 525l-2 14M535 525l10 8M538 529l-2 15M538 529l11 8M540 533l-2 13M540 533l10 7M542 538l-2 13M542 538l10 7M545 542l-1 11M545 542l8 6M547 546l-1 8M547 546l5 4M549 550l-1 7M549 550l5 4M551 554l-1 6M551 554l4 3M553 559l0 1M553 559l1 0M556 563l0 0M556 563l0 0"/><path id="f122" d="M395 401l-9-5M395 401l-10 11M392 401l-10-4M392 401l-10 12M389 401l-9-3M389 401l-8 10M386 401l-13-4M386 401l-11 15M383 401l-14-3M383 401l-11 16M380 402l-15-3M380 402l-11 18M377 402l-11-2M377 402l-7 13M374 403l-11-1M374 403l-7 13M371 404l-13-1M371 404l-8 16M368 405l-15-1M368 405l-9 18M365 406l-15 0M365 406l-8 18M362 407l-13 0M362 407l-7 16M359 409l-17 1M359 409l-8 21M356 410l-18 1M356 410l-8 22M353 411l-18 2M353 411l-8 22M350 413l-17 2M350 413l-7 21M346 415l-18 3M346 415l-7 22M343 417l-19 3M343 417l-7 23M340 419l-14 3M340 419l-5 18M337 421l-17 4M337 421l-5 21M334 423l-15 3M334 423l-4 18M331 425l-14 3M331 425l-4 18M327 427l-19 5M327 427l-5 24M324 429l-16 4M324 429l-4 20M321 432l-15 4M321 432l-4 20M318 434l-15 4M318 434l-3 19M315 437l-16 5M315 437l-3 21M311 440l-13 4M311 440l-2 16M308 442l-16 5M308 442l-3 20M305 445l-12 4M305 445l-2 15M302 448l-16 6M302 448l-2 21M299 451l-11 4M299 451l-2 14M296 454l-14 5M296 454l-2 18M293 457l-12 5M293 457l-1 15M290 460l-10 4M290 460l-1 13M287 463l-9 4M287 463l-1 12M284 466l-8 4M284 466l-1 11M281 469l-8 4M281 469l-1 11M278 472l-6 3M278 472l0 8M275 476l-4 2M275 476l0 6M272 479l-1 1M272 479l0 2M269 482l0 0M269 482l0 0"/><path id="f123" d="M437 432l-5 14M437 432l9 11M438 434l-6 17M438 434l10 13M439 437l-5 14M439 437l9 11M439 440l-7 19M439 440l12 15M440 443l-6 17M440 443l10 13M440 445l-7 19M440 445l12 15M441 449l-8 22M441 449l14 17M442 452l-8 21M442 452l13 17M442 455l-7 18M442 455l11 15M443 458l-7 18M443 458l11 14M444 462l-7 19M444 462l12 15M444 465l-8 22M444 465l14 18M445 469l-9 26M445 469l16 21M446 473l-9 25M446 473l16 20M447 476l-8 21M447 476l13 17M447 480l-8 21M447 480l13 17M448 484l-9 25M448 484l16 20M449 488l-7 20M449 488l13 16M450 492l-8 21M450 492l13 17M451 496l-6 17M451 496l11 14M452 500l-7 19M452 500l12 15M452 505l-8 22M452 505l14 17M453 509l-8 23M453 509l14 18M454 513l-8 22M454 513l14 17M455 517l-7 19M455 517l12 15M456 522l-9 24M456 522l15 19M457 526l-7 20M457 526l13 16M458 530l-6 16M458 530l10 13M459 534l-5 15M459 534l9 12M460 539l-7 21M460 539l13 17M460 543l-7 20M460 543l13 16M461 547l-7 18M461 547l12 15M462 552l-5 15M462 552l10 12M463 556l-4 13M463 556l8 10M464 560l-4 10M464 560l7 8M465 564l-4 10M465 564l6 8M466 568l-3 8M466 568l5 7M467 573l-3 9M467 573l6 7M468 577l-2 7M468 577l4 5M469 581l-1 2M469 581l1 2M470 585l0 0M470 585l0 0"/><path id="f124" d="M461 426l3 19M461 426l15 6M463 428l3 18M463 428l14 6M466 430l3 20M466 430l16 7M468 432l3 22M468 432l17 7M470 434l2 19M470 434l15 7M472 436l3 26M472 436l20 9M475 439l3 27M475 439l21 10M477 441l2 19M477 441l15 7M479 444l2 29M479 444l22 11M482 446l2 30M482 446l22 12M484 449l2 27M484 449l21 11M487 452l1 21M487 452l16 9M489 455l1 31M489 455l23 13M491 458l1 23M491 458l17 10M494 461l1 32M494 461l24 14M497 464l1 29M497 464l22 13M499 468l0 22M499 468l17 10M502 471l0 24M502 471l18 10M504 474l0 29M504 474l22 13M507 478l0 28M507 478l21 13M510 481l0 30M510 481l22 14M512 485l0 32M512 485l24 15M515 488l0 24M515 488l18 11M518 492l0 21M518 492l16 10M520 496l0 32M520 496l23 15M523 500l0 21M523 500l15 10M526 503l-1 30M526 503l22 14M528 507l0 21M528 507l16 10M531 511l-1 28M531 511l21 14M534 515l-1 27M534 515l20 13M536 519l-1 27M536 519l20 13M539 523l-1 23M539 523l17 11M542 527l-1 26M542 527l19 13M544 531l-1 19M544 531l14 9M547 535l-1 22M547 535l16 11M550 539l-1 18M550 539l13 9M552 543l-1 21M552 543l15 11M555 547l-1 19M555 547l14 9M558 551l-1 16M558 551l11 8M560 555l-1 14M560 555l10 7M563 559l0 10M563 559l7 5M566 563l0 9M566 563l6 4M568 567l0 9M568 567l6 5M571 571l0 6M571 571l4 3M573 575l0 0M573 575l0 0M576 579l0 0M576 579l0 0"/><path id="f125" d="M185 272l-8-4M185 272l-10 6M182 271l-10-5M182 271l-13 8M179 270l-10-5M179 270l-13 9M176 270l-9-4M176 270l-11 8M174 269l-10-4M174 269l-11 9M171 269l-14-5M171 269l-16 13M168 269l-14-5M168 269l-15 13M165 268l-12-4M165 268l-13 11M162 268l-16-5M162 268l-17 15M158 268l-12-3M158 268l-12 11M155 268l-14-4M155 268l-14 14M152 268l-18-4M152 268l-18 17M149 268l-17-4M149 268l-17 17M146 268l-15-3M146 268l-14 14M143 268l-19-3M143 268l-18 19M139 269l-18-3M139 269l-16 17M136 269l-20-3M136 269l-18 20M133 269l-20-3M133 269l-18 20M130 270l-17-2M130 270l-15 17M126 270l-19-2M126 270l-16 19M123 270l-18-2M123 270l-15 18M120 271l-21-2M120 271l-17 21M117 271l-20-2M117 271l-16 20M113 272l-19-1M113 272l-15 19M110 273l-19-1M110 273l-16 20M107 273l-21-1M107 273l-16 21M103 274l-15-1M103 274l-12 15M100 274l-14-1M100 274l-11 15M97 275l-18-1M97 275l-14 18M93 276l-17 0M93 276l-13 18M90 277l-15 0M90 277l-12 16M87 277l-15 0M87 277l-11 15M83 278l-14 0M83 278l-10 14M80 279l-16 0M80 279l-12 17M77 280l-15 0M77 280l-11 15M74 280l-13 0M74 280l-9 13M71 281l-9 0M71 281l-7 10M67 282l-12 0M67 282l-9 13M64 283l-9 0M64 283l-7 10M61 284l-7 0M61 284l-5 8M58 285l-7 0M58 285l-5 7M55 285l-6 0M55 285l-5 7M52 286l-3 0M52 286l-2 3M49 287l0 0M49 287l0 0M46 288l0 0M46 288l0 0"/><path id="f126" d="M223 311l-6 12M223 311l6 12M223 313l-7 14M223 313l6 15M223 316l-5 11M223 316l5 11M223 318l-8 16M223 318l7 16M223 321l-8 16M223 321l7 17M223 324l-8 15M223 324l6 15M222 327l-9 16M222 327l7 17M222 330l-8 14M222 330l6 15M222 333l-10 19M222 333l8 20M222 336l-8 14M222 336l6 15M221 339l-12 21M221 339l9 23M221 342l-11 20M221 342l8 22M221 346l-11 19M221 346l8 21M221 349l-9 17M221 349l7 18M220 353l-12 22M220 353l9 24M220 357l-13 22M220 357l9 25M219 360l-9 16M219 360l6 18M219 364l-12 21M219 364l8 23M219 368l-12 21M219 368l8 24M218 372l-12 20M218 372l8 22M218 376l-12 20M218 376l8 22M217 380l-10 18M217 380l7 20M217 383l-12 21M217 383l8 24M216 387l-13 21M216 387l8 24M216 391l-10 16M216 391l6 18M215 395l-11 19M215 395l7 21M214 399l-10 16M214 399l6 18M214 403l-8 13M214 403l5 15M213 407l-9 14M213 407l5 16M213 411l-8 12M213 411l5 14M212 415l-10 16M212 415l6 19M211 419l-10 15M211 419l6 18M211 423l-6 10M211 423l4 12M210 427l-7 12M210 427l4 14M209 431l-6 10M209 431l4 11M209 435l-5 8M209 435l3 9M208 439l-5 7M208 439l3 8M207 443l-4 6M207 443l2 7M207 447l-3 5M207 447l2 6M206 450l-1 1M206 450l0 2M205 454l0 0M205 454l0 0"/><path id="f127" d="M271 263l14 8M271 263l8-8M273 262l13 8M273 262l8-7M276 262l15 10M276 262l9-8M279 261l14 9M279 261l9-7M282 260l13 9M282 260l9-6M284 259l15 11M284 259l11-7M287 258l14 11M287 258l10-7M290 258l17 14M290 258l13-8M293 257l17 14M293 257l14-8M296 257l20 18M296 257l16-9M299 256l20 18M299 256l16-9M302 256l20 18M302 256l17-8M305 256l22 21M305 256l19-9M308 256l16 16M308 256l15-7M311 255l17 17M311 255l16-7M314 255l16 17M314 255l15-6M317 255l15 16M317 255l15-6M320 255l18 20M320 255l18-6M324 255l18 20M324 255l18-6M327 255l15 17M327 255l16-5M330 255l21 25M330 255l22-7M333 255l21 26M333 255l23-6M336 256l14 18M336 256l16-4M339 256l13 17M339 256l15-4M343 256l14 18M343 256l16-4M346 257l18 24M346 257l22-5M349 257l19 25M349 257l23-5M352 257l13 18M352 257l16-3M355 258l12 18M355 258l16-3M359 258l16 22M359 258l20-3M362 259l14 20M362 259l18-3M365 260l12 17M365 260l15-2M368 260l11 17M368 260l15-2M372 261l12 19M372 261l16-2M375 261l12 18M375 261l16-2M378 262l12 19M378 262l17-2M381 263l13 21M381 263l18-2M384 264l11 18M384 264l15-1M388 265l10 17M388 265l15-1M391 265l10 17M391 265l14-1M394 266l12 21M394 266l18-1M397 267l9 16M397 267l13 0M400 268l9 17M400 268l15 0M403 269l8 16M403 269l13 0M406 270l7 14M406 270l12 0M410 271l7 13M410 271l12 0M413 272l5 10M413 272l9 0M416 273l5 10M416 273l9 0M419 274l5 11M419 274l9 0M422 275l5 10M422 275l8 0M425 277l3 6M425 277l5 0M428 278l2 3M428 278l3 0M431 279l0 0M431 279l0 0M433 280l0 0M433 280l0 0"/><path id="f128" d="M223 229l5-6M223 229l-6-6M223 226l9-10M223 226l-10-9M223 222l7-8M223 222l-8-7M223 218l7-8M223 218l-8-8M223 215l8-9M223 215l-9-8M223 211l9-10M223 211l-10-9M222 208l11-12M222 208l-12-11M222 204l10-11M222 204l-11-11M222 201l9-10M222 201l-10-9M222 198l10-11M222 198l-11-10M222 194l10-11M222 194l-11-10M222 191l10-11M222 191l-12-11M222 188l10-11M222 188l-11-10M221 184l9-10M221 184l-10-9M221 181l10-11M221 181l-11-10M221 178l10-11M221 178l-11-11M221 175l9-11M221 175l-11-10M221 172l12-14M221 172l-14-13M221 168l10-11M221 168l-11-10M221 165l9-10M221 165l-10-9M221 162l11-12M221 162l-12-11M220 159l12-14M220 159l-14-13M220 156l12-13M220 156l-13-12M220 153l11-12M220 153l-12-11M220 150l11-13M220 150l-13-12M220 147l9-11M220 147l-11-10M220 144l8-10M220 144l-10-9M220 141l9-10M220 141l-10-9M220 138l9-10M220 138l-10-9M219 135l8-9M219 135l-10-9M219 133l9-10M219 133l-10-9M219 130l7-8M219 130l-8-8M219 127l7-8M219 127l-8-7M219 124l7-8M219 124l-8-7M219 121l7-7M219 121l-8-7M219 119l8-9M219 119l-9-8M219 116l7-8M219 116l-8-7M219 113l5-6M219 113l-6-6M218 110l5-6M218 110l-6-6M218 108l6-6M218 108l-7-6M218 105l4-5M218 105l-5-5M218 102l4-4M218 102l-4-4M218 100l2-3M218 100l-3-2M218 97l0 0M218 97l0 0M218 94l0 0M218 94l0 0"/><path id="f129" d="M254 249l11 1M254 249l1-8M257 246l10 1M257 246l1-7M259 244l11 1M259 244l2-7M261 241l12 1M261 241l2-8M264 239l16 2M264 239l4-11M266 237l17 3M266 237l4-11M269 235l19 4M269 235l5-13M271 233l16 4M271 233l5-11M274 231l19 5M274 231l6-12M276 229l17 5M276 229l6-11M279 227l15 4M279 227l5-9M282 225l18 6M282 225l7-11M285 223l20 7M285 223l8-12M287 222l21 8M287 222l9-13M290 220l23 9M290 220l10-13M293 218l22 9M293 218l10-13M296 217l20 9M296 217l10-11M298 216l19 9M298 216l10-11M301 214l19 9M301 214l10-11M304 213l19 9M304 213l10-10M307 212l20 10M307 212l11-11M310 211l19 10M310 211l11-10M313 209l21 12M313 209l12-11M316 208l17 10M316 208l11-9M319 207l17 10M319 207l11-9M322 206l19 12M322 206l12-10M325 206l17 11M325 206l12-9M327 205l16 10M327 205l11-8M330 204l15 10M330 204l11-7M333 203l16 11M333 203l11-8M336 202l14 10M336 202l10-7M339 202l11 8M339 202l8-5M342 201l11 8M342 201l8-5M345 201l11 9M345 201l9-5M348 200l8 6M348 200l6-3M351 200l9 7M351 200l7-4M354 199l9 7M354 199l7-4M356 199l5 4M356 199l4-2M359 198l4 4M359 198l4-2M362 198l2 1M362 198l1-1M365 198l0 0M365 198l0 0"/><path id="f130" d="M171 284l-15-3M171 284l-13 16M168 284l-14-3M168 284l-12 16M165 284l-16-3M165 284l-13 17M162 285l-16-2M162 285l-13 18M159 285l-16-2M159 285l-12 17M156 286l-19-2M156 286l-14 21M153 286l-19-2M153 286l-14 21M150 287l-16-1M150 287l-12 17M147 288l-15-1M147 288l-11 17M143 288l-17-1M143 288l-12 19M140 289l-19-1M140 289l-13 21M137 290l-16-1M137 290l-11 18M134 291l-18-1M134 291l-13 21M131 292l-21 0M131 292l-14 23M127 293l-16 0M127 293l-11 19M124 294l-23 0M124 294l-15 27M121 295l-22 0M121 295l-14 25M117 296l-20 0M117 296l-13 22M114 297l-20 0M114 297l-12 22M111 298l-20 1M111 298l-13 23M107 299l-20 1M107 299l-12 23M104 300l-24 1M104 300l-15 28M100 301l-22 1M100 301l-13 25M97 303l-22 1M97 303l-13 26M93 304l-19 1M93 304l-11 22M90 305l-26 2M90 305l-15 30M87 306l-20 1M87 306l-12 24M83 308l-20 1M83 308l-12 24M80 309l-18 1M80 309l-10 21M76 311l-26 2M76 311l-15 30M73 312l-22 2M73 312l-12 25M69 313l-25 2M69 313l-14 29M66 315l-25 2M66 315l-14 29M62 316l-25 2M62 316l-14 29M59 318l-24 2M59 318l-13 28M55 319l-24 3M55 319l-13 28M51 321l-24 3M51 321l-13 28M48 322l-22 3M48 322l-12 26M44 324l-16 2M44 324l-9 19M41 325l-19 2M41 325l-10 23M37 327l-19 2M37 327l-10 22M34 328l-22 3M34 328l-11 26M31 330l-20 2M31 330l-10 23M27 332l-18 2M27 332l-10 22M24 333l-18 2M24 333l-9 21M20 335l-15 2M20 335l-8 17M17 336l-18 2M17 336l-9 21M13 338l-15 2M13 338l-8 18M10 340l-13 2M10 340l-7 15M7 341l-12 2M7 341l-6 15M3 343l-14 2M3 343l-7 17M0 344l-11 2M0 344l-5 13M-4 346l-8 1M-4 346l-4 10M-7 347l-7 1M-7 347l-4 8M-10 349l-7 1M-10 349l-4 9M-13 351l-5 1M-13 351l-3 6M-17 352l-3 0M-17 352l-1 3M-20 354l0 0M-20 354l0 0M-23 355l0 0M-23 355l0 0"/><path id="f131" d="M246 309l1 19M246 309l14 8M247 311l0 17M247 311l12 8M249 313l0 19M249 313l14 9M250 316l0 20M250 316l14 10M252 318l-1 17M252 318l12 9M253 320l-1 20M253 320l15 11M255 323l-1 19M255 323l14 10M257 325l-2 19M257 325l13 11M258 328l-2 18M258 328l13 10M260 331l-2 20M260 331l14 12M261 334l-4 27M261 334l19 16M263 337l-3 23M263 337l16 14M264 340l-4 25M264 340l17 15M266 343l-4 25M266 343l17 16M267 347l-5 28M267 347l19 18M269 350l-4 23M269 350l16 15M270 353l-4 22M270 353l15 14M271 357l-4 23M271 357l15 15M273 361l-5 22M273 361l15 15M274 364l-6 28M274 364l18 19M276 368l-6 28M276 368l19 19M277 372l-5 22M277 372l15 15M278 376l-5 22M278 376l15 15M280 379l-6 24M280 379l16 17M281 383l-6 24M281 383l16 17M283 387l-6 24M283 387l16 17M284 391l-5 20M284 391l13 14M285 395l-5 18M285 395l11 13M286 400l-5 19M286 400l12 14M288 404l-5 17M288 404l11 13M289 408l-6 21M289 408l13 15M290 412l-4 16M290 412l10 12M291 416l-4 16M291 416l10 12M293 421l-5 19M293 421l12 14M294 425l-5 16M294 425l10 12M295 429l-5 19M295 429l12 14M296 433l-5 16M296 433l10 12M297 438l-5 17M297 438l11 13M298 442l-3 11M298 442l7 9M299 446l-4 12M299 446l8 9M301 450l-4 12M301 450l8 9M302 454l-2 8M302 454l5 6M303 459l-3 9M303 459l5 7M304 463l-1 4M304 463l3 3M305 467l0 0M305 467l0 0M306 471l0 0M306 471l0 0"/><path id="f132" d="M197 242l1-10M197 242l-13 0M196 239l1-10M196 239l-14 0M194 237l0-8M194 237l-11 1M192 234l0-10M192 234l-14 1M190 232l0-12M190 232l-17 1M188 229l0-10M188 229l-14 1M186 227l-1-14M186 227l-20 2M184 225l-1-10M184 225l-15 2M182 222l-2-15M182 222l-21 3M179 220l-1-11M179 220l-16 3M177 218l-2-15M177 218l-21 4M175 216l-3-15M175 216l-22 4M173 214l-2-13M173 214l-18 4M171 212l-3-16M171 212l-23 5M169 209l-3-12M169 209l-17 4M166 208l-4-16M166 208l-23 6M164 206l-4-13M164 206l-19 5M162 204l-4-13M162 204l-20 6M160 202l-4-12M160 202l-17 5M158 200l-5-14M158 200l-21 6M155 198l-4-12M155 198l-18 6M153 196l-6-14M153 196l-22 7M151 195l-6-15M151 195l-23 8M148 193l-6-14M148 193l-21 7M146 192l-5-10M146 192l-16 6M144 190l-7-15M144 190l-23 9M142 188l-7-15M142 188l-23 9M139 187l-6-13M139 187l-20 8M137 185l-6-11M137 185l-17 7M135 184l-6-12M135 184l-18 8M132 183l-7-13M132 183l-20 9M130 181l-6-11M130 181l-17 7M128 180l-7-12M128 180l-18 8M125 178l-6-10M125 178l-16 7M123 177l-6-9M123 177l-14 7M121 176l-7-11M121 176l-17 8M119 175l-5-8M119 175l-13 6M116 174l-5-8M116 174l-13 6M114 172l-4-6M114 172l-9 5M112 171l-4-6M112 171l-10 5M110 170l-3-5M110 170l-7 4M108 169l-4-5M108 169l-8 4M106 168l-2-3M106 168l-5 3M103 167l-2-2M103 167l-3 2M101 166l0 0M101 166l0 0M99 165l0 0M99 165l0 0"/><path id="f133" d="M182 291l-10-2M182 291l-8 12M180 291l-12-2M180 291l-9 14M177 292l-14-2M177 292l-10 16M174 293l-14-1M174 293l-9 16M172 293l-13-1M172 293l-9 16M169 294l-15 0M169 294l-9 17M166 295l-19 0M166 295l-11 23M164 296l-17 0M164 296l-10 21M161 297l-19 1M161 297l-10 23M158 298l-17 1M158 298l-8 20M156 299l-21 2M156 299l-10 26M153 300l-19 2M153 300l-9 22M150 302l-21 3M150 302l-9 26M147 303l-24 4M147 303l-10 30M145 305l-26 4M145 305l-11 31M142 306l-17 3M142 306l-7 21M139 308l-24 5M139 308l-9 30M136 310l-25 5M136 310l-9 31M133 311l-21 5M133 311l-7 25M130 313l-21 5M130 313l-7 26M128 315l-23 6M128 315l-8 29M125 317l-27 7M125 317l-8 33M122 319l-22 6M122 319l-7 27M119 321l-26 7M119 321l-8 33M116 323l-25 7M116 323l-7 32M113 325l-19 6M113 325l-5 24M111 327l-26 8M111 327l-7 33M108 330l-18 6M108 330l-5 23M105 332l-19 6M105 332l-5 24M102 334l-24 8M102 334l-6 30M99 337l-18 6M99 337l-4 23M96 339l-20 7M96 339l-4 26M93 341l-18 7M93 341l-4 23M91 344l-21 8M91 344l-4 26M88 346l-23 9M88 346l-5 30M85 349l-24 9M85 349l-5 30M82 351l-16 6M82 351l-3 20M79 354l-16 6M79 354l-3 20M77 357l-21 9M77 357l-4 28M74 359l-15 6M74 359l-2 19M71 362l-16 7M71 362l-3 21M68 364l-14 6M68 364l-2 18M66 367l-13 6M66 367l-2 17M63 370l-12 5M63 370l-2 16M60 372l-16 7M60 372l-2 20M57 375l-15 7M57 375l-2 20M55 378l-14 6M55 378l-2 18M52 381l-14 6M52 381l-2 18M50 383l-12 6M50 383l-1 15M47 386l-9 4M47 386l-1 12M44 389l-9 4M44 389l-1 12M42 391l-9 4M42 391l-1 11M39 394l-6 3M39 394l-1 8M37 397l-3 1M37 397l0 4M34 400l0 0M34 400l0 0M32 402l0 0M32 402l0 0"/><path id="f134" d="M277 265l15 9M277 265l9-8M280 264l16 10M280 264l11-8M283 263l12 8M283 263l8-6M286 262l12 9M286 262l9-6M289 261l18 13M289 261l13-8M292 261l16 12M292 261l12-7M295 260l18 15M295 260l15-8M298 260l13 11M298 260l11-5M301 259l17 15M301 259l14-7M304 259l19 17M304 259l17-7M307 259l15 15M307 259l14-6M310 259l21 20M310 259l20-7M313 259l20 21M313 259l20-7M316 259l14 15M316 259l14-4M320 259l14 15M320 259l14-4M323 259l18 20M323 259l19-5M326 259l21 24M326 259l22-6M329 259l16 20M329 259l18-4M333 259l15 19M333 259l17-4M336 260l16 21M336 260l19-4M339 260l13 18M339 260l16-3M342 260l15 20M342 260l18-3M346 261l16 22M346 261l20-3M349 262l16 23M349 262l21-3M352 262l14 21M352 262l19-2M356 263l14 21M356 263l19-2M359 264l14 21M359 264l19-1M363 264l15 23M363 264l21-1M366 265l13 22M366 265l19-1M369 266l12 19M369 266l17-1M373 267l16 27M373 267l24-1M376 268l14 24M376 268l21 0M379 269l14 25M379 269l22 0M383 270l11 20M383 270l18 0M386 271l15 28M386 271l24 1M390 272l14 26M390 272l23 1M393 273l10 19M393 273l17 1M396 275l11 21M396 275l18 1M400 276l12 24M400 276l21 1M403 277l12 23M403 277l20 1M407 278l12 25M407 278l21 2M410 280l9 20M410 280l17 2M413 281l11 23M413 281l19 2M417 283l10 21M417 283l18 2M420 284l8 17M420 284l14 2M423 285l8 18M423 285l16 2M427 287l9 20M427 287l17 2M430 289l8 18M430 289l16 2M433 290l6 15M433 290l13 2M436 292l6 15M436 292l12 2M440 293l4 10M440 293l9 1M443 295l4 10M443 295l9 2M446 297l4 11M446 297l9 2M449 298l3 8M449 298l7 1M452 300l2 5M452 300l5 1M455 302l1 3M455 302l3 1M459 303l0 0M459 303l0 0M462 305l0 0M462 305l0 0"/><path id="f135" d="M190 256l-4-8M190 256l-12 3M187 254l-4-7M187 254l-11 3M184 252l-5-8M184 252l-13 4M182 251l-5-8M182 251l-13 5M179 249l-7-10M179 249l-16 7M176 247l-6-9M176 247l-14 6M173 246l-7-8M173 246l-14 7M170 244l-8-9M170 244l-16 8M167 243l-9-10M167 243l-17 9M164 241l-9-9M164 241l-16 9M161 240l-11-10M161 240l-19 10M158 239l-9-8M158 239l-16 9M155 238l-13-11M155 238l-21 13M152 237l-13-10M152 237l-20 13M148 236l-12-10M148 236l-19 12M145 235l-10-7M145 235l-15 10M142 234l-12-8M142 234l-17 12M139 233l-14-9M139 233l-20 14M135 233l-14-9M135 233l-19 14M132 232l-15-9M132 232l-20 16M129 231l-16-9M129 231l-20 16M126 231l-13-7M126 231l-16 13M122 230l-14-7M122 230l-17 14M119 230l-13-7M119 230l-15 13M116 229l-12-6M116 229l-14 12M112 229l-12-5M112 229l-13 12M109 229l-12-5M109 229l-14 13M106 228l-11-5M106 228l-12 12M102 228l-13-6M102 228l-14 14M99 228l-14-6M99 228l-15 14M96 228l-12-5M96 228l-13 13M93 228l-13-5M93 228l-13 13M89 228l-10-4M89 228l-10 11M86 227l-9-3M86 227l-9 10M83 227l-10-3M83 227l-10 11M80 227l-10-3M80 227l-10 11M76 228l-8-2M76 228l-8 8M73 228l-6-2M73 228l-5 6M70 228l-5-1M70 228l-4 5M67 228l-4-1M67 228l-4 4M64 228l-1 0M64 228l-1 2M61 228l0 0M61 228l0 0"/><path id="f136" d="M178 258l-7-8M178 258l-14 7M176 257l-7-8M176 257l-15 7M173 256l-9-10M173 256l-17 9M170 255l-11-10M170 255l-19 10M167 253l-9-9M167 253l-16 9M164 252l-11-9M164 252l-18 11M161 251l-10-8M161 251l-16 10M159 251l-11-8M159 251l-16 11M156 250l-12-9M156 250l-18 13M153 249l-13-9M153 249l-19 14M150 248l-14-9M150 248l-19 14M147 248l-17-11M147 248l-23 18M144 247l-13-7M144 247l-16 13M140 246l-16-9M140 246l-20 17M137 246l-19-10M137 246l-23 20M134 246l-18-9M134 246l-21 19M131 245l-17-8M131 245l-20 18M128 245l-16-7M128 245l-18 17M125 245l-17-7M125 245l-18 18M122 244l-21-8M122 244l-22 23M118 244l-21-8M118 244l-22 23M115 244l-20-7M115 244l-20 21M112 244l-22-7M112 244l-22 24M109 244l-22-7M109 244l-22 24M105 244l-22-7M105 244l-21 24M102 244l-18-5M102 244l-17 20M99 245l-19-5M99 245l-17 21M96 245l-22-5M96 245l-19 24M92 245l-18-4M92 245l-16 20M89 245l-21-5M89 245l-18 23M86 246l-19-4M86 246l-16 21M82 246l-18-3M82 246l-15 20M79 247l-18-3M79 247l-15 21M76 247l-16-3M76 247l-13 17M73 248l-17-3M73 248l-14 19M69 248l-17-2M69 248l-13 20M66 249l-14-2M66 249l-11 16M63 249l-15-2M63 249l-11 17M59 250l-15-2M59 250l-11 17M56 251l-19-2M56 251l-14 22M53 251l-17-1M53 251l-12 19M50 252l-14-1M50 252l-10 16M47 253l-18-1M47 253l-12 21M43 254l-13-1M43 254l-9 15M40 255l-14-1M40 255l-9 16M37 256l-14 0M37 256l-9 16M34 257l-13 0M34 257l-8 15M31 257l-11 0M31 257l-7 12M28 258l-11 0M28 258l-7 13M24 259l-9 0M24 259l-5 10M21 261l-8 0M21 261l-5 9M18 262l-6 0M18 262l-3 6M15 263l-4 0M15 263l-2 4M12 264l0 0M12 264l0 0M9 265l0 0M9 265l0 0"/><path id="f137" d="M214 307l-8 8M214 307l2 12M213 309l-8 8M213 309l2 12M212 311l-9 9M212 311l2 14M211 313l-11 12M211 313l3 17M210 316l-11 12M210 316l3 17M209 318l-11 12M209 318l3 17M208 321l-12 13M208 321l4 18M207 324l-11 12M207 324l4 17M207 327l-10 11M207 327l3 16M206 330l-9 11M206 330l3 15M205 333l-11 12M205 333l4 17M204 336l-12 15M204 336l5 20M203 339l-14 16M203 339l5 22M202 342l-14 16M202 342l5 22M201 346l-12 15M201 346l5 20M199 349l-15 18M199 349l6 24M198 352l-12 14M198 352l5 19M197 356l-14 17M197 356l6 22M196 359l-12 14M196 359l5 19M195 363l-13 16M195 363l5 21M194 367l-14 17M194 367l6 23M193 370l-11 13M193 370l4 17M192 374l-10 12M192 374l4 16M191 378l-12 14M191 378l5 19M190 381l-11 14M190 381l5 18M189 385l-10 12M189 385l4 16M188 389l-8 10M188 389l3 13M187 393l-9 12M187 393l4 15M186 396l-9 11M186 396l4 15M185 400l-8 10M185 400l4 14M184 404l-9 12M184 404l4 15M183 408l-8 10M183 408l3 13M182 411l-8 10M182 411l3 12M181 415l-7 9M181 415l3 12M180 418l-6 7M180 418l3 10M179 422l-4 6M179 422l2 7M178 426l-4 4M178 426l2 6M178 429l-1 2M178 429l1 2M177 432l0 0M177 432l0 0"/><path id="f138" d="M253 304l2 15M253 304l12 5M255 306l2 16M255 306l12 5M257 308l2 17M257 308l13 5M259 310l2 17M259 310l13 6M261 312l2 21M261 312l16 7M264 315l2 20M264 315l16 7M266 317l2 19M266 317l14 7M268 319l2 19M268 319l14 7M271 322l2 25M271 322l19 9M273 324l2 22M273 324l16 8M276 327l2 24M276 327l18 9M278 330l2 23M278 330l17 9M281 333l2 29M281 333l22 11M283 335l2 30M283 335l22 11M286 338l1 20M286 338l15 8M289 341l1 23M289 341l17 9M291 344l1 24M291 344l18 9M294 347l2 31M294 347l24 12M297 350l2 29M297 350l22 11M299 354l1 24M299 354l18 9M302 357l1 23M302 357l17 9M305 360l2 28M305 360l21 11M308 363l2 29M308 363l22 11M311 366l2 30M311 366l22 12M313 370l1 23M313 370l17 9M316 373l2 28M316 373l21 11M319 376l1 26M319 376l19 10M322 380l1 23M322 380l17 9M325 383l2 27M325 383l21 11M328 386l1 19M328 386l15 7M331 389l1 23M331 389l17 9M334 393l1 17M334 393l13 6M337 396l1 17M337 396l12 6M340 399l1 21M340 399l16 8M342 402l1 15M342 402l11 6M345 406l1 17M345 406l13 7M348 409l1 15M348 409l11 6M351 412l1 15M351 412l11 5M354 415l1 10M354 415l8 4M357 418l1 8M357 418l6 3M360 421l0 6M360 421l4 2M362 424l0 2M362 424l2 1M365 427l0 0M365 427l0 0"/><path id="f139" d="M194 305l-13 6M194 305l-4 17M192 307l-12 6M192 307l-3 15M190 309l-16 8M190 309l-4 21M188 311l-17 9M188 311l-4 23M186 313l-15 8M186 313l-3 19M184 315l-14 8M184 315l-3 19M181 318l-20 11M181 318l-4 27M179 320l-19 11M179 320l-4 25M177 322l-20 12M177 322l-4 27M175 325l-15 9M175 325l-3 20M172 328l-22 13M172 328l-4 29M170 330l-20 12M170 330l-3 27M167 333l-18 11M167 333l-3 24M165 336l-19 12M165 336l-3 25M162 339l-22 14M162 339l-3 29M160 342l-22 14M160 342l-3 30M157 345l-17 11M157 345l-2 23M155 348l-21 14M155 348l-3 29M152 351l-17 11M152 351l-2 23M150 354l-24 16M150 354l-3 33M147 358l-19 13M147 358l-2 27M144 361l-23 16M144 361l-2 32M142 364l-22 15M142 364l-2 30M139 368l-20 14M139 368l-2 28M137 371l-17 12M137 371l-2 24M134 375l-19 13M134 375l-2 27M131 378l-16 11M131 378l-1 22M129 382l-16 11M129 382l-1 22M126 385l-20 14M126 385l-2 27M123 389l-17 12M123 389l-1 23M121 393l-19 14M121 393l-1 26M118 396l-15 11M118 396l-1 21M115 400l-18 13M115 400l-1 25M112 404l-17 12M112 404l-1 24M110 407l-14 10M110 407l-1 19M107 411l-12 9M107 411l-1 17M104 415l-13 9M104 415l-1 18M102 418l-13 9M102 418l-1 18M99 422l-10 7M99 422l-1 14M96 426l-10 7M96 426l-1 13M94 429l-8 6M94 429l0 11M91 433l-9 7M91 433l-1 13M89 437l-9 6M89 437l0 12M86 440l-5 4M86 440l0 7M83 444l-3 2M83 444l0 4M81 448l0 0M81 448l0 0M78 451l0 0M78 451l0 0"/><path id="f140" d="M234 306l-2 14M234 306l9 10M235 308l-2 11M235 308l7 8M236 311l-3 16M236 311l10 12M237 314l-2 12M237 314l7 9M237 317l-3 14M237 317l9 11M238 320l-4 19M238 320l11 14M239 323l-4 19M239 323l11 14M240 326l-5 20M240 326l12 15M241 330l-5 20M241 330l12 15M242 334l-5 20M242 334l12 15M243 337l-5 19M243 337l12 15M244 341l-4 16M244 341l9 12M245 345l-4 18M245 345l10 14M246 349l-4 16M246 349l9 12M248 353l-5 20M248 353l12 15M249 357l-5 19M249 357l11 15M250 361l-4 16M250 361l9 12M251 365l-4 14M251 365l8 11M252 369l-5 20M252 369l12 16M253 374l-5 18M253 374l11 14M254 378l-4 16M254 378l9 13M255 382l-4 15M255 382l9 12M256 386l-4 16M256 386l10 13M257 390l-3 13M257 390l8 10M258 395l-3 12M258 395l7 9M259 399l-3 10M259 399l6 8M260 403l-2 9M260 403l5 7M261 407l-2 7M261 407l4 5M262 411l-2 7M262 411l4 5M263 415l-1 4M263 415l2 3M264 418l0 0M264 418l0 0"/><path id="f141" d="M230 227l10-6M230 227l-7-8M231 223l9-5M231 223l-6-7M231 220l11-7M231 220l-8-9M232 217l9-6M232 217l-7-8M232 213l10-6M232 213l-8-9M232 210l12-7M232 210l-8-10M233 207l11-7M233 207l-8-9M233 204l14-9M233 204l-10-11M234 201l16-10M234 201l-12-13M234 198l13-8M234 198l-10-10M234 194l16-10M234 194l-12-13M235 191l12-8M235 191l-9-10M235 188l15-10M235 188l-12-13M235 185l13-9M235 185l-10-11M235 182l15-10M235 182l-12-12M236 179l12-8M236 179l-10-10M236 176l17-11M236 176l-13-14M236 173l13-9M236 173l-10-11M236 170l15-10M236 170l-12-12M237 167l14-9M237 167l-11-11M237 164l17-12M237 164l-14-14M237 161l15-11M237 161l-13-13M237 158l16-11M237 158l-13-13M238 155l16-12M238 155l-14-14M238 152l13-9M238 152l-11-11M238 150l12-9M238 150l-10-10M238 147l16-12M238 147l-14-14M238 144l13-10M238 144l-11-11M238 141l16-12M238 141l-14-13M238 138l17-12M238 138l-15-14M239 135l14-11M239 135l-13-12M239 133l11-8M239 133l-10-9M239 130l15-12M239 130l-14-13M239 127l14-10M239 127l-12-11M239 124l11-9M239 124l-10-9M239 121l11-8M239 121l-10-9M239 119l12-9M239 119l-11-10M239 116l10-8M239 116l-9-8M239 113l13-10M239 113l-12-11M239 110l12-9M239 110l-11-10M239 108l12-9M239 108l-11-10M239 105l9-8M239 105l-9-8M239 102l11-9M239 102l-11-9M239 100l7-6M239 100l-7-6M239 97l9-7M239 97l-9-7M239 94l7-6M239 94l-7-6M239 91l5-5M239 91l-6-5M239 89l5-4M239 89l-5-4M239 86l5-4M239 86l-5-4M239 83l5-4M239 83l-5-4M239 81l3-3M239 81l-3-3M239 78l2-2M239 78l-2-2M239 75l0 0M239 75l0 0M239 73l0 0M239 73l0 0"/><path id="f142" d="M256 239l12 0M256 239l0-9M257 237l12 0M257 237l0-9M259 234l15 1M259 234l1-11M261 232l18 1M261 232l1-13M263 230l15 1M263 230l1-11M265 227l20 2M265 227l2-14M267 225l20 2M267 225l2-14M269 223l20 2M269 223l3-14M271 221l18 2M271 221l3-13M273 219l23 3M273 219l4-16M275 217l22 3M275 217l4-15M278 214l21 4M278 214l4-14M280 212l17 3M280 212l3-12M282 211l21 4M282 211l5-15M284 209l17 4M284 209l4-11M286 207l25 6M286 207l6-17M288 205l20 5M288 205l5-13M291 203l20 5M291 203l6-14M293 201l22 6M293 201l6-15M295 200l23 7M295 200l7-15M297 198l23 7M297 198l7-15M299 197l22 7M299 197l7-14M302 195l23 7M302 195l8-15M304 193l25 8M304 193l9-16M306 192l21 7M306 192l8-13M308 190l21 8M308 190l8-13M311 189l24 9M311 189l9-15M313 188l16 6M313 188l6-10M315 186l17 7M315 186l7-11M317 185l19 8M317 185l8-11M320 184l17 7M320 184l7-11M322 183l22 10M322 183l10-14M324 181l16 7M324 181l7-10M326 180l15 7M326 180l7-9M329 179l16 8M329 179l8-10M331 178l17 8M331 178l8-10M333 177l19 9M333 177l9-11M335 176l19 10M335 176l10-11M338 175l17 9M338 175l9-10M340 174l15 8M340 174l8-8M342 173l11 6M342 173l6-6M344 172l10 6M344 172l5-6M346 171l12 7M346 171l7-7M349 170l12 7M349 170l6-6M351 169l8 5M351 169l5-4M353 169l9 5M353 169l5-5M355 168l6 4M355 168l4-3M357 167l4 2M357 167l2-2M359 166l0 0M359 166l0 0M361 166l0 0M361 166l0 0"/><path id="f143" d="M173 264l-11-8M173 264l-15 11M170 263l-9-6M170 263l-13 9M167 262l-11-8M167 262l-16 11M164 262l-12-8M164 262l-17 12M162 261l-9-6M162 261l-13 9M159 261l-12-8M159 261l-17 12M156 260l-15-9M156 260l-20 15M153 259l-13-8M153 259l-17 13M150 259l-13-8M150 259l-17 14M147 258l-13-7M147 258l-16 13M144 258l-17-9M144 258l-21 17M141 257l-17-9M141 257l-22 18M138 257l-12-7M138 257l-15 13M135 256l-16-8M135 256l-19 16M132 256l-15-8M132 256l-18 15M129 255l-17-9M129 255l-20 17M126 255l-14-7M126 255l-16 14M123 255l-15-7M123 255l-17 15M120 254l-15-7M120 254l-18 16M117 254l-17-8M117 254l-19 17M114 254l-19-9M114 254l-22 20M111 253l-20-9M111 253l-23 21M107 253l-19-9M107 253l-22 20M104 253l-19-8M104 253l-21 20M101 253l-15-6M101 253l-16 15M98 252l-17-7M98 252l-19 18M95 252l-19-8M95 252l-21 20M92 252l-16-7M92 252l-18 17M89 252l-18-7M89 252l-20 19M86 251l-21-8M86 251l-23 22M83 251l-15-6M83 251l-16 15M79 251l-20-8M79 251l-22 21M76 251l-15-6M76 251l-16 15M73 251l-17-7M73 251l-18 17M70 251l-20-8M70 251l-22 21M67 250l-15-6M67 250l-16 16M64 250l-17-7M64 250l-18 18M61 250l-16-6M61 250l-17 17M58 250l-19-7M58 250l-20 20M54 250l-19-7M54 250l-21 20M51 250l-14-6M51 250l-15 15M48 250l-15-6M48 250l-16 16M45 249l-18-7M45 249l-19 18M42 249l-15-6M42 249l-16 16M39 249l-13-5M39 249l-13 13M36 249l-15-6M36 249l-16 16M33 249l-12-5M33 249l-13 13M30 249l-13-5M30 249l-14 13M27 249l-10-4M27 249l-10 10M24 248l-14-5M24 248l-15 15M21 248l-12-5M21 248l-13 12M18 248l-12-5M18 248l-13 13M15 248l-12-5M15 248l-13 12M12 248l-8-3M12 248l-9 9M10 248l-8-3M10 248l-9 9M7 248l-7-3M7 248l-8 7M4 247l-7-3M4 247l-8 7M1 247l-6-2M1 247l-6 6M-2 247l-3-1M-2 247l-4 3M-4 247l-1-1M-4 247l-2 1M-7 247l0 0M-7 247l0 0M-10 246l0 0M-10 246l0 0"/><path id="f144" d="M213 236l6-8M213 236l-10-5M213 232l6-9M213 232l-11-5M212 229l5-8M212 229l-9-4M211 225l7-10M211 225l-13-6M210 222l5-9M210 222l-11-5M210 219l6-10M210 219l-13-5M209 215l5-10M209 215l-12-5M208 212l5-9M208 212l-12-4M207 209l6-13M207 209l-16-5M206 205l6-14M206 205l-18-6M204 202l5-11M204 202l-14-4M203 199l6-15M203 199l-19-5M202 196l5-12M202 196l-15-4M201 193l5-14M201 193l-18-4M200 190l5-16M200 190l-21-5M198 187l5-15M198 187l-19-4M197 184l3-11M197 184l-14-3M196 182l3-13M196 182l-17-3M194 179l3-13M194 179l-17-3M193 176l3-13M193 176l-16-2M191 173l3-16M191 173l-20-3M190 171l2-13M190 171l-18-2M188 168l2-15M188 168l-19-2M187 165l2-14M187 165l-19-2M185 163l1-13M185 163l-18-1M184 160l1-11M184 160l-14-1M182 158l1-14M182 158l-18-1M180 155l1-14M180 155l-20-1M179 153l0-10M179 153l-14 0M177 150l0-12M177 150l-17 0M175 148l0-11M175 148l-15 0M173 146l0-10M173 146l-14 0M172 143l0-11M172 143l-15 0M170 141l0-12M170 141l-16 0M168 139l0-7M168 139l-10 0M167 137l-1-10M167 137l-14 1M165 134l0-7M165 134l-10 1M163 132l-1-8M163 132l-11 1M161 130l0-5M161 130l-7 0M159 128l0-5M159 128l-7 1M158 126l0-3M158 126l-4 0M156 124l0-1M156 124l-1 0M154 122l0 0M154 122l0 0"/><path id="f145" d="M204 303l-12 5M204 303l-2 15M202 305l-12 5M202 305l-1 16M200 307l-13 6M200 307l-1 18M198 309l-13 7M198 309l-1 17M196 312l-12 7M196 312l0 17M194 314l-12 7M194 314l0 17M192 317l-16 9M192 317l0 21M190 320l-17 10M190 320l1 23M188 323l-15 10M188 323l1 21M186 326l-13 9M186 326l1 18M183 329l-18 12M183 329l2 24M181 332l-16 11M181 332l2 22M179 336l-16 11M179 336l2 22M177 339l-13 9M177 339l2 18M175 343l-16 12M175 343l2 22M173 347l-18 13M173 347l3 25M171 350l-15 12M171 350l2 22M168 354l-15 11M168 354l3 21M166 358l-17 13M166 358l3 23M164 362l-12 10M164 362l2 17M162 366l-15 12M162 366l3 21M160 371l-18 14M160 371l4 25M158 375l-16 13M158 375l3 22M155 379l-13 11M155 379l3 19M153 383l-15 12M153 383l3 21M151 387l-14 11M151 387l3 19M149 392l-11 9M149 392l3 16M147 396l-10 9M147 396l2 15M145 400l-13 11M145 400l3 18M143 405l-9 8M143 405l2 13M141 409l-8 7M141 409l2 11M139 413l-10 8M139 413l2 14M137 418l-7 6M137 418l2 11M135 422l-6 5M135 422l1 8M133 426l-5 4M133 426l1 6M131 430l-2 2M131 430l1 4M129 435l0 0M129 435l0 0"/><path id="f146" d="M220 302l-5 7M220 302l2 9M219 305l-6 9M219 305l3 11M219 307l-6 9M219 307l3 11M218 310l-7 11M218 310l4 13M217 313l-7 10M217 313l3 12M217 317l-8 12M217 317l4 15M216 320l-9 14M216 320l5 16M215 324l-9 14M215 324l5 17M215 328l-10 15M215 328l6 18M214 331l-8 13M214 331l5 15M213 335l-8 13M213 335l5 15M213 340l-9 15M213 340l6 18M212 344l-9 15M212 344l6 17M211 348l-8 14M211 348l5 15M211 352l-7 12M211 352l5 14M210 357l-7 12M210 357l4 13M210 361l-6 10M210 361l4 12M209 366l-8 13M209 366l5 15M208 370l-6 10M208 370l4 11M208 375l-7 12M208 375l5 13M207 379l-6 10M207 379l4 11M207 384l-6 11M207 384l4 12M206 388l-5 9M206 388l4 10M206 393l-5 8M206 393l3 9M205 397l-3 5M205 397l2 5M205 401l-2 3M205 401l1 4M204 405l0 0M204 405l0 0"/><path id="f147" d="M271 284l11 13M271 284l12-2M274 285l9 12M274 285l11-2M277 285l9 12M277 285l11-1M280 285l13 18M280 285l16-2M283 286l14 21M283 286l19-2M286 287l13 19M286 287l17-1M288 287l12 18M288 287l16-1M292 288l11 17M292 288l15-1M295 289l13 20M295 289l18 0M298 290l15 25M298 290l23 0M301 291l14 24M301 291l22 0M304 291l13 23M304 291l20 0M307 292l15 26M307 292l23 1M310 293l12 21M310 293l18 1M314 295l13 24M314 295l21 1M317 296l15 29M317 296l25 1M320 297l13 25M320 297l22 1M323 298l13 24M323 298l21 2M327 299l11 22M327 299l20 2M330 301l13 26M330 301l22 2M333 302l15 30M333 302l26 3M337 303l10 20M337 303l17 2M340 305l14 28M340 305l24 3M343 306l14 29M343 306l25 3M347 308l14 29M347 308l25 3M350 309l13 28M350 309l24 3M353 311l13 28M353 311l24 3M357 312l11 25M357 312l21 3M360 314l11 25M360 314l21 3M364 315l10 23M364 315l20 3M367 317l8 19M367 317l17 3M370 319l12 27M370 319l23 4M374 320l10 24M374 320l20 3M377 322l8 20M377 322l17 3M381 324l9 22M381 324l19 3M384 325l9 21M384 325l18 3M387 327l8 19M387 327l16 3M391 329l8 19M391 329l16 3M394 330l8 19M394 330l16 3M397 332l8 19M397 332l16 3M401 334l7 18M401 334l15 3M404 335l6 16M404 335l13 3M407 337l5 12M407 337l10 2M411 339l5 12M411 339l10 2M414 341l4 11M414 341l9 2M417 342l5 11M417 342l10 2M420 344l4 11M420 344l9 2M423 346l3 8M423 346l7 1M427 348l2 5M427 348l4 1M430 349l0 0M430 349l0 0M433 351l0 0M433 351l0 0"/><path id="f148" d="M237 304l-1 11M237 304l8 5M238 306l-1 12M238 306l9 6M240 308l-2 14M240 308l10 8M241 310l-2 13M241 310l9 7M242 313l-2 12M242 313l8 7M243 315l-3 16M243 315l11 10M244 318l-3 16M244 318l11 10M246 321l-4 18M246 321l12 11M247 323l-4 17M247 323l12 11M248 326l-5 19M248 326l13 12M249 330l-5 20M249 330l13 13M250 333l-4 16M250 333l11 11M251 336l-5 18M251 336l12 13M252 340l-5 18M252 340l12 13M253 343l-5 16M253 343l11 12M254 347l-5 18M254 347l12 13M256 350l-6 19M256 350l12 14M257 354l-7 21M257 354l14 15M258 357l-7 21M258 357l14 15M259 361l-5 16M259 361l10 12M259 365l-6 18M259 365l12 14M260 369l-5 14M260 369l9 10M261 373l-5 13M261 373l9 10M262 376l-6 16M262 376l10 12M263 380l-6 18M263 380l11 14M264 384l-5 12M264 384l8 10M265 388l-6 15M265 388l10 12M266 392l-6 15M266 392l10 12M266 396l-4 11M266 396l7 9M267 399l-5 12M267 399l8 10M268 403l-4 11M268 403l7 9M269 407l-3 8M269 407l5 7M269 411l-3 8M269 411l5 6M270 414l-2 6M270 414l4 5M271 418l-1 3M271 418l2 2M271 422l0 0M271 422l0 0"/><path id="f149" d="M271 257l16 7M271 257l8-9M274 256l12 5M274 256l6-7M277 254l17 8M277 254l9-10M279 253l18 9M279 253l10-10M282 252l16 8M282 252l9-8M285 251l14 8M285 251l8-7M288 250l17 9M288 250l10-9M291 249l19 11M291 249l12-10M294 248l21 13M294 248l14-11M297 247l22 14M297 247l15-11M301 246l17 11M301 246l12-8M304 245l16 11M304 245l12-8M307 244l17 12M307 244l12-8M310 243l24 18M310 243l18-11M313 243l22 16M313 243l17-9M316 242l17 13M316 242l14-7M320 242l22 17M320 242l18-9M323 241l24 20M323 241l20-10M326 241l21 18M326 241l18-8M329 240l18 15M329 240l15-7M333 240l24 21M333 240l21-9M336 239l22 19M336 239l19-8M339 239l17 15M339 239l16-6M343 239l22 20M343 239l20-8M346 239l19 18M346 239l18-7M349 239l20 19M349 239l19-7M353 238l18 17M353 238l17-6M356 238l17 17M356 238l16-5M359 238l18 18M359 238l17-6M363 238l18 18M363 238l18-6M366 238l17 18M366 238l17-5M370 238l20 21M370 238l20-6M373 238l14 14M373 238l14-4M376 238l14 15M376 238l15-4M380 238l18 20M380 238l19-5M383 239l16 17M383 239l17-4M386 239l15 17M386 239l16-4M390 239l15 16M390 239l16-4M393 239l12 13M393 239l13-3M396 239l12 14M396 239l13-3M399 240l10 12M399 240l11-2M403 240l9 11M403 240l11-2M406 240l12 15M406 240l14-3M409 240l10 12M409 240l12-2M412 241l10 12M412 241l11-2M416 241l6 7M416 241l7-1M419 241l7 8M419 241l8-1M422 242l4 5M422 242l5-1M425 242l3 4M425 242l3-1M428 243l0 0M428 243l0 0M431 243l0 0M431 243l0 0"/><path id="f150" d="M185 289l-11 0M185 289l-9 12M182 290l-13 0M182 290l-10 13M179 291l-12 0M179 291l-9 13M176 291l-17 1M176 291l-12 18M173 292l-15 1M173 292l-10 16M171 293l-17 2M171 293l-11 19M168 294l-19 3M168 294l-12 20M165 296l-19 3M165 296l-12 22M162 297l-20 4M162 297l-12 22M159 298l-21 4M159 298l-12 23M156 300l-17 4M156 300l-10 19M153 301l-23 6M153 301l-13 27M150 303l-17 4M150 303l-9 20M146 304l-24 6M146 304l-12 28M143 306l-23 7M143 306l-12 27M140 308l-24 7M140 308l-11 28M137 310l-17 5M137 310l-8 20M134 311l-17 6M134 311l-8 21M131 313l-24 8M131 313l-11 28M128 316l-21 7M128 316l-9 25M124 318l-20 7M124 318l-9 24M121 320l-25 9M121 320l-11 31M118 322l-17 6M118 322l-7 20M115 324l-21 8M115 324l-8 26M112 327l-20 8M112 327l-8 25M108 329l-17 7M108 329l-7 21M105 331l-19 8M105 331l-7 24M102 334l-21 9M102 334l-8 27M99 336l-22 10M99 336l-8 28M95 339l-15 7M95 339l-5 19M92 341l-19 8M92 341l-7 23M89 344l-15 7M89 344l-5 19M86 347l-20 9M86 347l-7 25M83 349l-14 7M83 349l-5 18M79 352l-13 6M79 352l-4 17M76 355l-15 7M76 355l-5 19M73 357l-16 8M73 357l-5 21M70 360l-13 6M70 360l-4 17M67 363l-11 6M67 363l-4 14M64 366l-14 7M64 366l-4 18M61 368l-13 7M61 368l-4 17M58 371l-12 6M58 371l-4 15M55 374l-8 4M55 374l-2 11M52 377l-8 4M52 377l-2 10M49 379l-5 3M49 379l-2 7M46 382l-4 2M46 382l-1 5M43 385l0 0M43 385l0 0M40 388l0 0M40 388l0 0"/><path id="f151" d="M244 233l13-3M244 233l-5-10M245 230l12-2M245 230l-4-9M247 227l12-2M247 227l-4-9M248 224l12-2M248 224l-4-9M249 221l17-3M249 221l-5-13M251 218l13-2M251 218l-4-10M252 215l17-2M252 215l-5-12M253 212l17-2M253 212l-5-12M255 209l14-2M255 209l-4-10M256 206l16-2M256 206l-4-12M258 203l21-2M258 203l-5-16M259 200l19-2M259 200l-4-14M261 198l23-2M261 198l-5-17M262 195l23-2M262 195l-5-17M263 192l17-1M263 192l-3-12M265 190l22-1M265 190l-4-16M266 187l17-1M266 187l-3-12M268 184l20-1M268 184l-3-15M269 182l20-1M269 182l-3-15M271 179l25-1M271 179l-4-18M272 177l22 0M272 177l-3-16M274 175l18 0M274 175l-2-13M275 172l21 0M275 172l-3-15M277 170l21 0M277 170l-2-15M278 168l18 0M278 168l-2-13M280 165l20 0M280 165l-2-14M282 163l24 1M282 163l-2-17M283 161l25 1M283 161l-2-18M285 159l23 1M285 159l-2-16M286 157l16 1M286 157l-1-12M288 154l23 1M288 154l-1-16M289 152l19 1M289 152l-1-14M291 150l21 1M291 150l-1-15M292 148l16 1M292 148l-1-11M294 146l15 1M294 146l-1-11M295 144l20 2M295 144l-1-14M297 142l15 1M297 142l0-11M298 141l13 1M298 141l0-9M300 139l15 2M300 139l0-11M301 137l17 2M301 137l0-12M303 135l15 2M303 135l0-11M304 133l11 1M304 133l0-8M305 132l13 2M305 132l0-9M307 130l11 1M307 130l0-8M308 128l9 1M308 128l0-7M310 126l7 1M310 126l0-5M311 125l4 1M311 125l0-3M313 123l0 0M313 123l0 0M314 122l0 0M314 122l0 0"/><path id="f152" d="M270 292l9 13M270 292l11-2M273 293l8 14M273 293l12-2M275 294l10 18M275 294l15-2M278 294l9 17M278 294l14-1M280 295l8 16M280 295l13-1M283 296l8 17M283 296l15 0M286 297l10 21M286 297l18 0M288 298l8 19M288 298l16 1M291 299l8 21M291 299l17 1M293 300l10 26M293 300l21 2M296 301l9 24M296 301l20 2M299 303l8 23M299 303l19 2M302 304l8 25M302 304l21 3M304 306l7 21M304 306l17 3M307 307l8 25M307 307l20 4M310 309l8 26M310 309l21 4M312 310l7 24M312 310l19 4M315 312l6 23M315 312l19 4M318 314l8 33M318 314l26 6M321 316l7 28M321 316l23 6M323 318l6 25M323 318l20 5M326 320l7 30M326 320l24 7M329 322l7 33M329 322l26 8M331 324l5 23M331 324l18 6M334 326l4 23M334 326l18 6M337 328l4 24M337 328l19 6M340 330l5 31M340 330l25 8M342 333l4 24M342 333l19 7M345 335l5 31M345 335l24 9M348 337l5 30M348 337l24 9M351 340l4 28M351 340l22 8M353 342l3 24M353 342l19 7M356 344l4 33M356 344l25 10M359 347l4 30M359 347l23 9M361 349l3 27M361 349l21 8M364 352l3 23M364 352l18 7M367 354l3 27M367 354l21 9M369 357l3 24M369 357l18 8M372 360l3 25M372 360l19 8M374 362l2 22M374 362l17 7M377 365l2 24M377 365l18 8M380 367l2 18M380 367l14 6M382 370l2 19M382 370l15 7M385 373l2 24M385 373l18 9M387 375l2 22M387 375l17 8M390 378l1 17M390 378l13 6M392 381l1 20M392 381l15 7M395 383l1 14M395 383l11 5M397 386l1 17M397 386l13 6M399 389l1 14M399 389l11 5M402 391l1 11M402 391l8 4M404 394l0 8M404 394l6 3M407 397l0 6M407 397l4 2M409 399l0 5M409 399l3 2M411 402l0 0M411 402l0 0M413 405l0 0M413 405l0 0"/><path id="f153" d="M251 309l2 14M251 309l10 6M252 311l3 20M252 311l15 10M254 313l3 21M254 313l15 10M255 315l3 22M255 315l16 11M257 317l2 19M257 317l14 10M259 319l2 22M259 319l16 12M260 321l2 24M260 321l17 13M262 323l2 21M262 323l15 11M264 326l2 24M264 326l17 13M266 328l1 21M266 328l15 11M267 331l1 20M267 331l14 11M269 333l1 22M269 333l15 12M271 336l1 29M271 336l20 16M273 339l1 26M273 339l18 15M275 341l1 30M275 341l21 17M276 344l1 25M276 344l18 15M278 347l1 24M278 347l16 14M280 350l1 29M280 350l20 17M282 353l1 30M282 353l21 18M284 356l0 21M284 356l14 12M286 359l1 28M286 359l19 17M288 362l0 22M288 362l15 13M289 365l0 22M289 365l15 13M291 368l0 31M291 368l21 18M293 371l0 21M293 371l14 13M295 374l0 23M295 374l16 14M297 377l0 31M297 377l21 19M299 381l0 24M299 381l16 15M301 384l0 21M301 384l14 13M303 387l0 21M303 387l14 13M305 390l0 21M305 390l14 13M307 394l0 26M307 394l17 16M309 397l0 19M309 397l13 12M311 400l0 26M311 400l18 16M312 403l0 21M312 403l14 13M314 407l0 25M314 407l17 15M316 410l0 24M316 410l16 15M318 413l0 18M318 413l12 11M320 417l0 17M320 417l11 10M322 420l0 17M322 420l12 11M324 423l0 14M324 423l9 8M326 426l0 16M326 426l11 10M328 429l0 11M328 429l8 7M329 433l0 10M329 433l7 6M331 436l0 14M331 436l9 8M333 439l0 9M333 439l6 5M335 442l0 8M335 442l5 5M337 445l0 5M337 445l3 3M338 448l0 0M338 448l0 0M340 451l0 0M340 451l0 0"/><path id="f154" d="M218 226l8-9M218 226l-11-6M217 223l6-7M217 223l-9-5M217 220l8-9M217 220l-11-6M216 217l8-10M216 217l-12-7M216 213l9-10M216 213l-13-7M215 210l10-12M215 210l-15-8M215 207l10-12M215 207l-15-8M214 204l8-9M214 204l-12-6M214 201l9-11M214 201l-13-7M214 198l8-10M214 198l-12-6M213 195l8-9M213 195l-12-6M213 192l8-10M213 192l-12-7M212 188l9-11M212 188l-13-7M212 185l11-14M212 185l-17-9M211 182l11-14M211 182l-17-9M211 179l12-14M211 179l-18-9M210 177l10-12M210 177l-15-8M210 174l9-11M210 174l-14-7M209 171l13-16M209 171l-20-10M209 168l12-15M209 168l-19-10M208 165l13-16M208 165l-20-10M208 162l8-11M208 162l-13-7M207 159l10-13M207 159l-16-8M207 156l11-14M207 156l-18-9M206 154l12-15M206 154l-18-9M206 151l12-16M206 151l-20-10M205 148l11-13M205 148l-17-8M205 145l10-12M205 145l-16-8M204 143l8-10M204 143l-13-6M204 140l11-14M204 140l-18-9M203 137l12-15M203 137l-19-9M203 135l11-15M203 135l-18-9M202 132l10-13M202 132l-17-8M202 129l9-11M202 129l-14-7M201 127l8-10M201 127l-13-6M201 124l10-13M201 124l-16-8M200 122l10-13M200 122l-17-8M200 119l10-13M200 119l-16-8M199 117l7-9M199 117l-11-6M199 114l8-10M199 114l-13-6M198 111l7-10M198 111l-12-6M198 109l7-9M198 109l-11-5M198 106l8-10M198 106l-12-6M197 104l7-10M197 104l-12-6M197 101l6-8M197 101l-10-5M196 99l6-7M196 99l-9-5M196 97l5-7M196 97l-8-4M195 94l5-6M195 94l-7-4M195 92l4-5M195 92l-6-3M194 89l2-3M194 89l-4-2M194 87l2-2M194 87l-3-1M194 85l0 0M194 85l0 0M193 82l0 0M193 82l0 0"/><path id="f155" d="M254 230l12-2M254 230l-2-9M255 227l12-2M255 227l-2-9M257 225l13-2M257 225l-2-10M258 222l15-2M258 222l-2-11M260 219l17-1M260 219l-2-13M261 217l15-1M261 217l-2-11M263 214l20-1M263 214l-2-15M265 211l21-1M265 211l-2-16M266 209l21 0M266 209l-1-15M268 206l15 0M268 206l-1-11M270 204l18 0M270 204l0-13M272 201l23 1M272 201l0-17M273 199l23 1M273 199l0-17M275 197l17 1M275 197l1-13M277 194l20 2M277 194l1-15M279 192l20 2M279 192l1-14M281 190l24 3M281 190l2-17M283 188l18 2M283 188l2-12M285 186l20 3M285 186l2-14M287 184l25 4M287 184l3-17M289 181l26 4M289 181l3-18M291 179l18 3M291 179l3-13M293 177l23 4M293 177l4-16M295 175l24 5M295 175l4-17M297 174l26 6M297 174l5-18M299 172l22 5M299 172l4-15M301 170l27 6M301 170l6-18M303 168l20 5M303 168l4-13M306 166l19 5M306 166l4-13M308 164l19 5M308 164l5-13M310 163l23 7M310 163l6-15M312 161l18 5M312 161l5-12M314 159l20 6M314 159l5-13M316 158l19 6M316 158l5-12M319 156l17 6M319 156l5-11M321 154l25 8M321 154l7-16M323 153l19 7M323 153l6-12M325 151l24 8M325 151l8-15M328 150l21 8M328 150l7-14M330 148l17 6M330 148l6-11M332 147l22 8M332 147l8-14M334 145l14 6M334 145l5-9M337 144l21 8M337 144l7-13M339 142l13 5M339 142l5-8M341 141l14 6M341 141l5-9M344 140l16 7M344 140l6-10M346 138l11 5M346 138l4-7M348 137l15 7M348 137l6-9M350 136l11 5M350 136l4-7M353 134l13 6M353 134l5-8M355 133l9 4M355 133l4-5M357 132l10 4M357 132l4-6M359 131l7 3M359 131l3-5M362 130l6 3M362 130l3-4M364 128l5 2M364 128l2-3M366 127l3 1M366 127l1-2M368 126l0 0M368 126l0 0M371 125l0 0M371 125l0 0"/><path id="f156" d="M187 244l-3-8M187 244l-11 2M185 242l-3-9M185 242l-14 3M182 240l-3-9M182 240l-14 3M180 238l-4-10M180 238l-15 3M177 236l-6-13M177 236l-19 5M175 234l-6-13M175 234l-19 5M172 232l-5-10M172 232l-15 4M170 230l-5-10M170 230l-16 5M167 229l-7-14M167 229l-22 7M165 227l-6-11M165 227l-17 5M162 225l-7-12M162 225l-19 6M160 223l-7-12M160 223l-19 7M157 222l-7-11M157 222l-17 6M155 220l-7-11M155 220l-17 7M152 219l-8-11M152 219l-19 7M149 217l-9-13M149 217l-21 9M147 216l-12-16M147 216l-26 11M144 214l-11-14M144 214l-24 10M141 213l-10-12M141 213l-20 9M139 212l-12-14M139 212l-24 11M136 210l-10-12M136 210l-20 10M133 209l-12-13M133 209l-23 11M131 208l-11-12M131 208l-21 10M128 207l-14-15M128 207l-26 14M125 206l-11-11M125 206l-21 11M123 205l-14-14M123 205l-25 13M120 204l-13-12M120 204l-23 13M118 203l-14-13M118 203l-24 14M115 202l-13-12M115 202l-22 13M112 201l-14-13M112 201l-24 14M110 200l-12-10M110 200l-19 12M107 199l-13-11M107 199l-21 13M104 198l-13-10M104 198l-20 13M102 197l-12-10M102 197l-19 12M99 196l-12-9M99 196l-19 12M96 196l-12-9M96 196l-18 12M94 195l-11-8M94 195l-16 11M91 194l-13-9M91 194l-19 13M89 194l-11-8M89 194l-16 12M86 193l-11-7M86 193l-15 11M84 192l-8-5M84 192l-11 8M81 192l-10-6M81 192l-13 10M79 191l-8-5M79 191l-10 8M76 191l-7-4M76 191l-10 7M74 190l-7-4M74 190l-10 8M71 190l-7-4M71 190l-9 7M69 190l-5-3M69 190l-6 5M67 189l-4-2M67 189l-5 4M64 189l-3-2M64 189l-4 3M62 188l0 0M62 188l0 0M59 188l0 0M59 188l0 0"/><path id="f157" d="M757 578l-2 19M757 578l14 10M758 580l-2 15M758 580l11 8M759 583l-3 23M759 583l16 13M761 585l-3 21M761 585l14 12M762 588l-3 22M762 588l15 13M763 590l-3 19M763 590l13 12M764 593l-3 18M764 593l12 11M766 596l-3 19M766 596l13 12M767 599l-4 21M767 599l14 14M768 602l-5 22M768 602l15 15M769 605l-5 21M769 605l14 14M771 608l-5 21M771 608l14 14M772 612l-7 28M772 612l19 19M773 615l-7 28M773 615l19 20M774 618l-8 31M774 618l20 21M775 622l-6 23M775 622l15 17M776 625l-8 29M776 625l19 21M778 629l-8 28M778 629l18 20M779 633l-6 23M779 633l15 16M780 637l-9 32M780 637l20 23M781 640l-8 26M781 640l17 19M782 644l-7 24M782 644l15 18M783 648l-7 24M783 648l15 18M784 652l-10 33M784 652l21 25M785 656l-8 25M785 656l16 19M786 660l-8 26M786 660l17 20M787 665l-9 28M787 665l18 22M788 669l-9 26M788 669l16 20M789 673l-10 29M789 673l18 23M790 677l-8 23M790 677l14 18M791 682l-9 27M791 682l16 21M792 686l-10 28M792 686l17 22M793 690l-10 28M793 690l18 23M794 695l-10 28M794 695l17 23M795 699l-9 24M795 699l15 19M796 704l-10 28M796 704l17 23M796 708l-11 31M796 708l19 25M797 713l-9 25M797 713l15 21M798 718l-10 27M798 718l16 22M799 722l-11 28M799 722l17 23M800 727l-8 22M800 727l13 18M800 732l-8 22M800 732l13 18M801 736l-11 28M801 736l17 24M802 741l-8 21M802 741l13 18M803 746l-9 22M803 746l13 18M803 750l-8 21M803 750l12 17M804 755l-10 26M804 755l15 22M805 760l-8 21M805 760l12 18M806 765l-9 23M806 765l14 20M806 769l-7 16M806 769l10 14M807 774l-7 17M807 774l10 14M808 779l-8 19M808 779l11 16M808 784l-6 15M808 784l9 13M809 788l-7 17M809 788l10 15M809 793l-6 15M809 793l9 13M810 798l-5 11M810 798l7 10M810 803l-5 11M810 803l6 9M811 807l-5 11M811 807l7 10M812 812l-5 10M812 812l6 9M812 817l-3 8M812 817l4 7M813 821l-3 6M813 821l4 6M813 826l-2 4M813 826l2 4M813 831l-1 1M813 831l1 1M814 835l0 0M814 835l0 0M814 840l0 0M814 840l0 0"/><path id="f158" d="M696 510l-5-7M696 510l-12 4M693 509l-7-8M693 509l-14 6M690 507l-8-9M690 507l-15 7M687 506l-6-6M687 506l-11 6M684 505l-8-7M684 505l-13 7M681 504l-9-7M681 504l-14 9M678 503l-8-6M678 503l-12 8M675 502l-12-8M675 502l-17 12M672 501l-13-8M672 501l-17 13M668 500l-12-6M668 500l-15 12M665 500l-14-7M665 500l-17 14M662 499l-17-8M662 499l-20 17M658 499l-15-6M658 499l-16 15M655 499l-13-5M655 499l-14 14M652 499l-16-5M652 499l-16 16M648 499l-18-5M648 499l-17 18M645 499l-14-4M645 499l-13 15M641 499l-18-4M641 499l-16 19M638 499l-18-4M638 499l-16 20M634 500l-14-2M634 500l-12 15M631 500l-18-3M631 500l-14 19M627 501l-14-2M627 501l-11 15M624 501l-18-2M624 501l-14 20M620 502l-16-1M620 502l-11 17M617 503l-15-1M617 503l-10 16M613 504l-17-1M613 504l-12 19M610 505l-18 0M610 505l-12 20M606 506l-13 0M606 506l-9 15M603 507l-18 0M603 507l-12 21M599 508l-15 1M599 508l-9 17M595 509l-16 1M595 509l-9 18M592 511l-15 1M592 511l-9 17M588 512l-14 1M588 512l-8 16M585 513l-11 1M585 513l-6 13M581 515l-10 1M581 515l-5 12M578 517l-11 1M578 517l-6 12M574 518l-13 2M574 518l-7 15M571 520l-10 2M571 520l-5 12M567 521l-7 1M567 521l-3 8M564 523l-7 1M564 523l-3 8M561 525l-5 1M561 525l-2 6M557 527l-1 0M557 527l-1 1M554 529l0 0M554 529l0 0"/><path id="f159" d="M761 560l1 20M761 560l15 9M763 561l1 22M763 561l16 10M765 563l1 17M765 563l13 8M766 566l1 23M766 566l17 10M768 568l1 19M768 568l14 9M770 570l1 19M770 570l14 9M771 572l1 28M771 572l21 14M773 575l0 20M773 575l14 10M775 577l1 30M775 577l21 14M777 580l0 28M777 580l21 14M779 583l0 28M779 583l20 14M781 585l0 29M781 585l21 14M783 588l0 29M783 588l21 14M785 591l0 25M785 591l18 13M787 594l0 27M787 594l20 14M789 597l0 25M789 597l18 12M791 600l0 33M791 600l24 17M793 603l0 32M793 603l23 16M795 606l0 33M795 606l23 16M797 609l0 26M797 609l19 13M799 612l0 31M799 612l22 15M802 615l0 26M802 615l19 13M804 618l0 33M804 618l24 17M806 622l0 32M806 622l23 17M808 625l0 35M808 625l25 18M811 629l0 32M811 629l23 16M813 632l0 31M813 632l22 16M815 635l0 32M815 635l23 17M818 639l0 24M818 639l17 12M820 642l0 29M820 642l21 15M822 646l0 22M822 646l16 12M825 649l0 26M825 649l19 13M827 653l0 23M827 653l16 12M829 657l-1 32M829 657l23 16M832 660l0 21M832 660l15 11M834 664l0 30M834 664l21 15M836 667l0 30M836 667l21 15M839 671l0 23M839 671l17 12M841 675l0 27M841 675l19 14M844 678l0 18M844 678l13 9M846 682l0 18M846 682l13 10M848 686l0 16M848 686l12 9M851 689l0 16M851 689l12 8M853 693l0 15M853 693l11 8M856 697l0 20M856 697l14 10M858 700l0 13M858 700l10 7M861 704l0 16M861 704l11 8M863 707l0 12M863 707l9 6M865 711l0 10M865 711l7 5M868 715l0 10M868 715l7 5M870 718l0 7M870 718l5 3M872 722l0 5M872 722l4 3M875 725l0 0M875 725l0 0M877 729l0 0M877 729l0 0"/><path id="f160" d="M771 487l11 0M771 487l3-8M773 485l13 0M773 485l3-9M775 483l14 1M775 483l4-10M777 481l14 1M777 481l4-9M779 479l17 1M779 479l5-12M781 477l17 1M781 477l5-11M783 475l19 2M783 475l6-13M786 473l16 2M786 473l5-11M788 471l18 2M788 471l6-12M790 469l19 2M790 469l6-12M792 467l24 3M792 467l8-15M794 465l19 3M794 465l7-12M797 463l18 3M797 463l7-11M799 461l23 4M799 461l9-15M801 460l22 4M801 460l9-14M803 458l18 3M803 458l7-11M806 456l25 5M806 456l10-16M808 455l19 4M808 455l8-12M810 453l24 5M810 453l10-14M813 451l18 4M813 451l8-11M815 450l22 5M815 450l10-13M817 448l20 5M817 448l9-12M820 447l21 5M820 447l10-12M822 445l20 5M822 445l10-12M824 444l18 5M824 444l9-11M827 443l23 7M827 443l11-13M829 441l26 8M829 441l13-15M831 440l27 8M831 440l14-15M834 438l21 7M834 438l11-12M836 437l18 6M836 437l9-10M838 436l24 8M838 436l12-13M841 435l24 8M841 435l13-13M843 433l25 9M843 433l14-14M845 432l24 9M845 432l13-13M848 431l22 8M848 431l12-12M850 430l18 7M850 430l10-10M852 429l18 7M852 429l10-9M854 428l21 8M854 428l12-11M857 426l16 6M857 426l9-8M859 425l16 6M859 425l9-8M861 424l15 6M861 424l9-8M864 423l21 9M864 423l12-11M866 422l17 7M866 422l10-9M868 421l15 6M868 421l9-8M870 420l17 7M870 420l10-9M873 419l15 6M873 419l9-7M875 418l14 6M875 418l9-7M877 418l15 7M877 418l9-7M879 417l13 6M879 417l8-7M881 416l12 6M881 416l8-6M883 415l13 6M883 415l8-6M886 414l9 4M886 414l5-4M888 413l8 4M888 413l5-4M890 412l7 3M890 412l4-3M892 412l5 2M892 412l3-2M894 411l2 1M894 411l2-1M896 410l0 0M896 410l0 0M898 409l0 0M898 409l0 0"/><path id="f161" d="M730 484l8-7M730 484l-9-6M729 481l6-5M729 481l-7-5M729 477l9-8M729 477l-10-6M729 474l8-7M729 474l-9-6M729 470l10-9M729 470l-12-8M729 467l8-8M729 467l-10-6M728 464l8-8M728 464l-10-6M728 461l9-9M728 461l-12-7M728 457l9-9M728 457l-12-7M727 454l10-10M727 454l-13-7M727 451l9-10M727 451l-13-7M726 448l9-10M726 448l-13-7M726 445l10-11M726 445l-14-7M726 442l12-13M726 442l-17-8M725 439l9-10M725 439l-14-7M725 436l11-12M725 436l-16-7M724 433l10-12M724 433l-16-7M724 431l9-10M724 431l-14-6M723 428l8-10M723 428l-13-5M722 425l9-11M722 425l-15-6M722 422l8-11M722 422l-15-6M721 420l8-10M721 420l-14-5M721 417l8-11M721 417l-15-6M720 415l8-11M720 415l-14-5M719 412l7-11M719 412l-14-5M719 410l7-11M719 410l-14-5M718 407l8-12M718 407l-17-5M717 405l7-11M717 405l-15-5M717 402l7-12M717 402l-16-5M716 400l7-11M716 400l-14-4M715 398l6-9M715 398l-12-4M714 395l5-8M714 395l-11-3M714 393l5-9M714 393l-12-3M713 391l5-9M713 391l-12-3M712 389l3-6M712 389l-8-2M711 387l3-6M711 387l-8-2M711 385l4-7M711 385l-10-2M710 382l2-5M710 382l-6-1M709 380l2-3M709 380l-5-1M708 378l2-4M708 378l-5-1M708 376l1-1M708 376l-2 0M707 375l0 0M707 375l0 0"/><path id="f162" d="M785 510l16 10M785 510l10-8M788 509l16 11M788 509l11-8M790 509l12 8M790 509l8-6M793 508l15 11M793 508l11-7M796 507l15 11M796 507l11-7M799 507l19 15M799 507l15-8M802 506l13 11M802 506l11-6M805 506l15 12M805 506l12-6M808 505l19 17M808 505l16-8M811 505l16 14M811 505l14-6M814 505l19 17M814 505l17-7M817 504l18 17M817 504l17-7M820 504l16 15M820 504l15-6M823 504l18 18M823 504l17-6M826 504l15 16M826 504l15-5M829 504l16 17M829 504l16-5M832 504l21 23M832 504l22-7M835 504l21 23M835 504l22-6M839 504l20 22M839 504l21-6M842 504l20 23M842 504l21-5M845 504l20 24M845 504l22-5M848 505l18 22M848 505l20-5M851 505l21 26M851 505l24-5M855 505l18 24M855 505l22-4M858 506l19 24M858 506l22-4M861 506l19 26M861 506l24-4M864 506l18 25M864 506l23-3M867 507l13 19M867 507l17-2M871 507l13 18M871 507l17-2M874 508l13 20M874 508l18-2M877 509l17 25M877 509l22-2M880 509l16 24M880 509l22-2M884 510l12 19M884 510l17-1M887 511l13 20M887 511l18-1M890 512l17 27M890 512l24-1M893 512l15 24M893 512l21-1M896 513l12 19M896 513l17 0M900 514l15 25M900 514l22 0M903 515l10 18M903 515l16 0M906 516l13 23M906 516l20 0M909 517l12 21M909 517l18 0M912 518l10 19M912 518l16 0M916 519l9 18M916 519l15 1M919 520l9 17M919 520l15 1M922 522l10 20M922 522l18 1M925 523l9 18M925 523l16 1M928 524l7 14M928 524l12 1M931 525l7 15M931 525l13 1M934 526l8 17M934 526l14 1M937 528l5 12M937 528l10 1M940 529l6 13M940 529l11 1M943 530l6 13M943 530l11 1M946 532l4 10M946 532l9 1M949 533l4 10M949 533l8 1M952 535l4 10M952 535l8 1M955 536l2 6M955 536l5 1M958 538l1 3M958 538l3 0M961 539l0 0M961 539l0 0M964 541l0 0M964 541l0 0"/><path id="f163" d="M690 562l-16 5M690 562l-3 21M688 563l-17 6M688 563l-3 22M686 565l-17 6M686 565l-3 22M684 567l-13 5M684 567l-2 17M682 569l-20 7M682 569l-3 26M680 571l-15 6M680 571l-2 19M678 573l-14 6M678 573l-2 18M676 575l-18 7M676 575l-2 24M674 577l-15 6M674 577l-2 20M671 579l-16 6M671 579l-2 20M669 582l-17 7M669 582l-2 22M667 584l-24 10M667 584l-2 31M664 586l-18 8M664 586l-2 24M662 589l-24 10M662 589l-2 31M660 591l-25 11M660 591l-2 33M657 594l-19 8M657 594l-1 25M655 596l-18 8M655 596l-1 23M652 599l-19 9M652 599l-1 25M650 602l-23 11M650 602l-2 30M648 604l-24 11M648 604l-1 31M645 607l-20 10M645 607l-1 27M643 610l-25 12M643 610l-1 33M640 613l-18 9M640 613l-1 24M638 616l-18 9M638 616l-1 24M635 619l-21 10M635 619l-1 28M632 622l-24 12M632 622l-1 32M630 625l-26 13M630 625l-1 34M627 628l-27 13M627 628l-1 35M625 631l-26 13M625 631l-1 35M622 634l-27 13M622 634l-1 35M619 637l-23 12M619 637l-1 31M617 640l-21 11M617 640l-1 28M614 643l-18 9M614 643l0 24M612 646l-22 11M612 646l0 30M609 649l-25 13M609 649l0 33M606 653l-24 12M606 653l0 32M604 656l-21 11M604 656l0 28M601 659l-22 11M601 659l0 29M598 662l-23 12M598 662l0 30M596 666l-24 13M596 666l0 32M593 669l-22 11M593 669l0 29M590 672l-20 11M590 672l0 27M588 676l-23 12M588 676l0 30M585 679l-22 12M585 679l0 30M582 682l-14 8M582 682l0 19M579 686l-21 11M579 686l0 28M577 689l-16 8M577 689l0 21M574 692l-13 7M574 692l0 17M571 696l-15 8M571 696l0 19M569 699l-13 7M569 699l0 17M566 702l-12 6M566 702l0 16M563 706l-16 8M563 706l0 21M561 709l-13 7M561 709l0 17M558 712l-10 6M558 712l0 14M555 715l-13 7M555 715l0 17M553 719l-9 5M553 719l0 13M550 722l-9 5M550 722l0 12M548 725l-8 4M548 725l0 11M545 728l-7 4M545 728l0 9M542 732l-7 4M542 732l0 9M540 735l-4 2M540 735l0 5M537 738l-2 1M537 738l0 2M535 741l0 0M535 741l0 0M532 744l0 0M532 744l0 0"/><path id="f164" d="M704 489l1-9M704 489l-13 0M702 486l1-9M702 486l-13 0M701 484l0-10M701 484l-13 1M699 481l0-12M699 481l-16 1M697 479l0-10M697 479l-14 1M695 477l0-11M695 477l-15 1M693 474l-1-14M693 474l-19 2M691 472l-1-13M691 472l-18 2M689 470l-1-11M689 470l-15 2M687 468l-2-15M687 468l-21 3M685 466l-2-13M685 466l-18 3M683 464l-2-12M683 464l-17 3M681 461l-2-12M681 461l-17 3M679 459l-3-15M679 459l-22 5M677 458l-3-12M677 458l-18 4M675 456l-3-15M675 456l-22 5M673 454l-3-12M673 454l-18 4M671 452l-4-13M671 452l-20 5M669 450l-4-15M669 450l-21 6M667 448l-4-12M667 448l-18 5M665 446l-4-11M665 446l-17 5M663 445l-5-14M663 445l-20 6M660 443l-5-15M660 443l-22 7M658 441l-4-11M658 441l-17 6M656 440l-5-13M656 440l-20 7M654 438l-5-12M654 438l-19 7M652 437l-6-14M652 437l-22 8M649 435l-5-11M649 435l-16 6M647 434l-5-11M647 434l-16 6M645 432l-5-10M645 432l-15 6M643 431l-7-14M643 431l-21 9M641 429l-6-13M641 429l-20 8M638 428l-7-13M638 428l-20 8M636 426l-6-12M636 426l-19 8M634 425l-7-13M634 425l-20 9M632 424l-5-10M632 424l-15 7M630 422l-4-8M630 422l-12 6M627 421l-6-10M627 421l-16 7M625 420l-5-8M625 420l-13 6M623 419l-4-7M623 419l-12 5M621 417l-4-7M621 417l-11 5M619 416l-5-8M619 416l-13 6M617 415l-5-8M617 415l-13 6M614 414l-3-5M614 414l-8 4M612 413l-3-5M612 413l-8 4M610 412l-4-5M610 412l-9 4M608 411l-3-4M608 411l-6 3M606 409l-2-3M606 409l-4 2M604 408l0 0M604 408l0 0M602 407l0 0M602 407l0 0"/><path id="f165" d="M788 524l12 11M788 524l10-5M791 523l14 13M791 523l12-6M793 523l12 12M793 523l11-5M796 523l15 16M796 523l14-6M799 523l12 13M799 523l12-5M802 523l15 18M802 523l16-6M804 523l15 18M804 523l16-5M807 523l13 17M807 523l15-4M810 523l14 18M810 523l16-4M813 523l15 20M813 523l18-4M816 524l12 17M816 524l15-3M819 524l14 21M819 524l18-4M822 524l16 23M822 524l20-4M824 525l13 19M824 525l17-3M827 525l16 25M827 525l21-3M830 526l15 24M830 526l21-2M833 527l16 26M833 527l23-2M836 527l13 22M836 527l19-2M839 528l11 20M839 528l17-1M842 529l15 27M842 529l23-1M845 530l15 28M845 530l24-1M848 531l13 24M848 531l21 0M851 532l11 21M851 532l18 0M855 533l11 22M855 533l19 0M858 534l13 27M858 534l23 0M861 535l11 24M861 535l20 1M864 536l14 31M864 536l26 1M867 538l12 27M867 538l23 1M870 539l10 23M870 539l19 1M873 540l12 28M873 540l24 2M876 542l10 25M876 542l21 2M879 543l13 31M879 543l26 3M882 545l12 31M882 545l26 3M886 546l10 27M886 546l22 3M889 548l11 28M889 548l23 3M892 549l10 29M892 549l23 3M895 551l11 30M895 551l24 4M898 552l11 31M898 552l26 4M901 554l7 21M901 554l17 3M904 556l8 24M904 556l20 3M907 558l9 26M907 558l21 4M911 559l7 23M911 559l19 4M914 561l8 25M914 561l21 4M917 563l6 20M917 563l16 3M920 565l8 27M920 565l22 5M923 567l7 23M923 567l19 4M926 569l5 19M926 569l15 4M929 571l7 24M929 571l19 5M932 573l5 20M932 573l16 4M935 575l5 18M935 575l15 4M938 577l5 20M938 577l16 4M941 579l4 16M941 579l13 3M944 581l4 16M944 581l13 4M947 583l5 20M947 583l16 5M950 585l4 18M950 585l15 4M953 588l3 13M953 588l10 3M956 590l4 17M956 590l13 4M959 592l2 11M959 592l9 3M962 594l3 12M962 594l9 3M965 596l3 13M965 596l10 3M968 599l2 10M968 599l8 3M971 601l1 7M971 601l6 2M974 603l1 5M974 603l4 1M977 605l0 1M977 605l1 0M980 608l0 0M980 608l0 0M982 610l0 0M982 610l0 0"/><path id="f166" d="M734 579l-9 17M734 579l8 17M734 582l-10 19M734 582l9 19M734 584l-8 15M734 584l8 15M734 587l-7 14M734 587l7 14M734 589l-8 15M734 589l8 15M734 592l-10 19M734 592l10 19M734 594l-12 23M734 594l12 23M734 597l-9 17M734 597l9 17M734 600l-12 23M734 600l12 23M734 603l-11 23M734 603l12 22M734 606l-12 25M734 606l13 25M734 609l-13 26M734 609l14 26M734 612l-9 19M734 612l10 19M734 615l-13 26M734 615l14 25M734 619l-10 20M734 619l10 19M734 622l-10 20M734 622l11 19M734 625l-11 23M734 625l12 22M734 629l-12 24M734 629l13 24M734 632l-10 20M734 632l11 20M734 636l-11 23M734 636l12 22M735 639l-10 22M735 639l12 21M735 643l-10 22M735 643l12 21M735 646l-10 21M735 646l11 20M735 650l-10 21M735 650l11 20M735 654l-11 23M735 654l12 22M735 658l-11 24M735 658l13 23M736 661l-12 25M736 661l14 24M736 665l-13 28M736 665l15 27M736 669l-13 27M736 669l15 26M736 673l-12 26M736 673l14 25M737 677l-11 24M737 677l13 23M737 681l-12 27M737 681l15 26M737 685l-10 23M737 685l12 21M737 689l-10 22M737 689l12 21M738 693l-10 22M738 693l12 20M738 697l-12 27M738 697l15 26M738 701l-10 22M738 701l12 20M738 705l-10 22M738 705l12 21M739 709l-10 23M739 709l13 22M739 713l-11 25M739 713l14 24M739 718l-11 26M739 718l14 24M740 722l-11 25M740 722l14 23M740 726l-11 25M740 726l14 23M740 730l-9 20M740 730l11 19M741 734l-12 27M741 734l15 25M741 739l-11 25M741 739l14 23M741 743l-9 21M741 743l12 19M742 747l-9 21M742 747l11 19M742 751l-9 22M742 751l12 20M742 755l-7 17M742 755l9 16M743 760l-9 21M743 760l12 19M743 764l-10 23M743 764l12 20M744 768l-7 17M744 768l10 16M744 772l-8 18M744 772l10 16M744 776l-6 15M744 776l8 14M745 780l-8 19M745 780l11 17M745 785l-6 15M745 785l8 13M746 789l-6 14M746 789l8 12M746 793l-6 15M746 793l8 13M746 797l-5 12M746 797l7 11M747 801l-5 13M747 801l7 12M747 805l-4 10M747 805l5 9M748 809l-4 9M748 809l5 8M748 813l-3 6M748 813l4 6M748 817l-2 5M748 817l3 4M749 821l0 0M749 821l0 0M749 825l0 0M749 825l0 0M750 829l0 0M750 829l0 0"/><path id="f167" d="M744 482l7-4M744 482l-4-7M745 478l10-6M745 478l-5-9M746 475l11-6M746 475l-5-10M746 472l10-5M746 472l-5-9M747 469l11-5M747 469l-4-9M748 466l10-5M748 466l-4-9M749 463l14-6M749 463l-5-12M750 460l13-6M750 460l-4-11M751 457l17-7M751 457l-5-14M752 454l16-6M752 454l-5-14M753 451l16-6M753 451l-4-13M754 448l18-6M754 448l-4-15M755 446l19-6M755 446l-4-16M756 443l16-5M756 443l-3-13M757 441l17-5M757 441l-3-14M758 438l14-4M758 438l-2-11M760 436l17-4M760 436l-2-14M761 433l16-3M761 433l-2-13M762 431l14-3M762 431l-1-11M763 429l21-4M763 429l-1-16M765 426l14-2M765 426l0-11M766 424l15-2M766 424l0-12M767 422l16-2M767 422l0-12M769 420l20-2M769 420l1-15M770 418l16-1M770 418l1-12M772 416l20-1M772 416l1-15M773 414l18-1M773 414l2-13M775 412l16 0M775 412l2-12M776 410l15 0M776 410l2-11M778 409l16 0M778 409l2-11M779 407l17 1M779 407l3-12M781 405l16 1M781 405l3-11M782 404l12 1M782 404l2-8M784 402l13 1M784 402l3-9M785 400l10 1M785 400l2-7M787 399l10 1M787 399l2-6M788 397l11 2M788 397l3-8M790 396l8 1M790 396l2-5M791 395l7 1M791 395l2-5M793 393l8 2M793 393l2-5M795 392l4 1M795 392l1-2M796 391l1 0M796 391l0-1M798 390l0 0M798 390l0 0"/><path id="f168" d="M707 570l-10 9M707 570l-1 15M705 572l-13 12M705 572l0 20M704 574l-13 12M704 574l0 20M703 577l-11 10M703 577l0 17M701 579l-13 12M701 579l0 19M700 582l-14 13M700 582l0 21M698 584l-18 18M698 584l1 28M697 587l-18 18M697 587l1 28M695 590l-13 13M695 590l1 20M694 593l-16 16M694 593l1 24M692 596l-16 16M692 596l1 24M691 599l-14 15M691 599l1 22M689 602l-16 16M689 602l1 24M688 605l-21 22M688 605l2 33M686 608l-21 22M686 608l2 33M685 611l-16 17M685 611l2 25M683 615l-20 21M683 615l2 32M681 618l-15 16M681 618l2 24M680 622l-19 21M680 622l2 30M678 625l-15 16M678 625l2 24M677 629l-19 21M677 629l3 31M675 633l-19 21M675 633l3 31M673 636l-22 25M673 636l3 36M672 640l-19 21M672 640l3 30M670 644l-21 24M670 644l3 35M669 648l-16 18M669 648l3 26M667 652l-19 22M667 652l3 31M665 656l-16 18M665 656l3 26M664 660l-15 17M664 660l3 24M662 664l-21 25M662 664l4 35M660 668l-14 16M660 668l3 23M659 672l-16 19M659 672l3 27M657 676l-16 19M657 676l3 26M655 681l-15 18M655 681l3 24M654 685l-19 23M654 685l4 32M652 689l-18 22M652 689l4 30M650 693l-15 18M650 693l3 25M649 698l-16 20M649 698l3 27M647 702l-18 21M647 702l4 29M645 706l-12 15M645 706l3 21M644 711l-16 19M644 711l3 26M642 715l-17 20M642 715l4 28M641 720l-15 18M641 720l3 24M639 724l-14 17M639 724l3 23M637 728l-12 14M637 728l3 20M636 733l-11 13M636 733l2 18M634 737l-10 13M634 737l2 18M632 742l-11 13M632 742l2 18M631 746l-10 12M631 746l2 17M629 750l-12 14M629 750l3 19M628 755l-8 10M628 755l2 14M626 759l-8 9M626 759l2 13M625 764l-9 11M625 764l2 15M623 768l-7 9M623 768l2 12M621 772l-5 7M621 772l1 9M620 777l-6 7M620 777l1 10M618 781l-3 4M618 781l1 5M617 785l-2 2M617 785l0 3M615 789l0 0M615 789l0 0M614 794l0 0M614 794l0 0"/><path id="f169" d="M780 524l15 12M780 524l13-5M783 523l15 13M783 523l14-5M786 523l14 13M786 523l14-5M789 523l16 16M789 523l16-5M793 523l14 14M793 523l14-4M796 523l17 18M796 523l18-4M799 523l17 19M799 523l18-3M803 523l15 18M803 523l17-3M806 524l15 18M806 524l18-2M809 524l16 21M809 524l20-2M813 525l14 20M813 525l18-1M816 526l12 17M816 526l16-1M820 526l16 24M820 526l22-1M823 527l13 20M823 527l19 0M827 528l15 23M827 528l21 0M831 529l16 27M831 529l24 1M834 530l12 21M834 530l19 1M838 532l11 20M838 532l18 1M842 533l12 21M842 533l19 2M845 534l14 26M845 534l23 3M849 536l12 24M849 536l21 3M853 537l11 23M853 537l20 3M856 539l12 25M856 539l22 3M860 541l14 31M860 541l26 5M864 542l11 23M864 542l20 4M867 544l11 25M867 544l21 4M871 546l13 30M871 546l25 5M875 548l11 27M875 548l23 5M879 550l9 23M879 550l19 5M882 552l10 25M882 552l21 5M886 554l9 24M886 554l20 5M890 557l8 20M890 557l17 5M893 559l8 22M893 559l19 5M897 561l7 21M897 561l18 5M901 563l9 25M901 563l21 6M905 566l7 20M905 566l16 5M908 568l7 22M908 568l18 6M912 571l8 24M912 571l20 7M915 573l7 22M915 573l18 6M919 576l5 17M919 576l14 5M923 579l5 17M923 579l14 5M926 581l4 14M926 581l11 4M930 584l4 13M930 584l11 4M933 587l3 12M933 587l10 4M937 589l3 12M937 589l9 4M940 592l2 10M940 592l8 3M944 595l1 5M944 595l4 2M947 598l0 0M947 598l0 0M950 601l0 0M950 601l0 0"/><path id="f170" d="M717 478l4-11M717 478l-13-5M716 475l4-10M716 475l-12-5M714 472l4-10M714 472l-12-5M713 469l4-12M713 469l-14-5M712 466l4-13M712 466l-15-6M711 463l4-11M711 463l-13-5M710 460l4-13M710 460l-16-6M709 457l4-14M709 457l-17-6M708 454l4-12M708 454l-14-5M707 452l4-14M707 452l-16-6M706 449l4-15M706 449l-17-6M705 446l3-11M705 446l-13-5M704 443l4-15M704 443l-18-6M703 440l4-13M703 440l-16-6M701 438l4-14M701 438l-16-5M700 435l5-16M700 435l-20-7M699 432l4-13M699 432l-16-5M698 430l3-12M698 430l-14-5M697 427l4-15M697 427l-18-6M696 425l4-13M696 425l-16-5M695 422l5-18M695 422l-21-7M694 420l3-14M694 420l-16-5M693 417l4-17M693 417l-21-6M692 415l4-14M692 415l-17-5M691 412l4-17M691 412l-20-6M690 410l4-16M690 410l-20-6M689 407l4-16M689 407l-20-6M688 405l4-16M688 405l-19-6M687 403l4-17M687 403l-20-6M686 400l4-16M686 400l-20-6M685 398l3-14M685 398l-18-5M684 396l4-16M684 396l-19-6M683 393l3-12M683 393l-14-4M682 391l2-11M682 391l-13-4M681 389l3-14M681 389l-17-5M680 387l3-12M680 387l-15-4M679 385l3-12M679 385l-15-4M678 383l2-9M678 383l-11-3M677 380l2-9M677 380l-11-3M676 378l3-11M676 378l-14-4M675 376l2-8M675 376l-10-3M674 374l2-10M674 374l-12-4M673 372l2-9M673 372l-11-4M672 370l2-8M672 370l-10-3M672 368l1-5M672 368l-6-2M671 366l1-6M671 366l-7-2M670 364l1-5M670 364l-6-2M669 362l1-2M669 362l-3-1M668 360l0 0M668 360l0 0M667 358l0 0M667 358l0 0"/><path id="f171" d="M752 564l-2 19M752 564l12 12M753 567l-2 22M753 567l14 14M754 569l-2 22M754 569l14 15M755 571l-2 20M755 571l13 14M756 574l-2 18M756 574l12 12M757 576l-3 23M757 576l15 16M758 579l-3 23M758 579l14 15M759 582l-3 27M759 582l17 18M761 584l-3 25M761 584l16 17M762 587l-3 28M762 587l18 19M763 590l-3 31M763 590l20 21M764 593l-3 28M764 593l18 19M766 596l-4 31M766 596l20 21M767 600l-3 24M767 600l16 17M769 603l-2 22M769 603l14 15M770 606l-4 32M770 606l21 22M771 609l-3 22M771 609l14 15M773 613l-4 34M773 613l22 23M774 616l-3 28M774 616l18 19M776 620l-3 23M776 620l15 16M777 623l-3 26M777 623l17 18M779 627l-4 31M779 627l20 21M781 630l-3 27M781 630l17 18M782 634l-3 30M782 634l19 20M784 638l-3 24M784 638l15 16M785 642l-4 33M785 642l21 22M787 645l-3 27M787 645l17 18M789 649l-4 32M789 649l21 22M790 653l-3 24M790 653l15 16M792 657l-3 30M792 657l19 20M794 661l-3 27M794 661l17 18M796 665l-3 26M796 665l17 17M797 669l-2 21M797 669l14 14M799 673l-3 26M799 673l17 18M801 677l-3 29M801 677l19 19M803 681l-2 21M803 681l13 14M804 685l-3 24M804 685l15 16M806 689l-2 19M806 689l12 13M808 693l-3 28M808 693l18 18M810 697l-3 26M810 697l17 18M812 701l-2 23M812 701l15 15M813 705l-2 20M813 705l13 13M815 709l-2 16M815 709l10 11M817 713l-2 15M817 713l10 10M819 717l-2 19M819 717l12 12M821 721l-2 18M821 721l12 12M822 725l-2 18M822 725l11 12M824 729l-1 15M824 729l10 10M826 733l-1 11M826 733l7 7M828 737l-1 9M828 737l6 6M830 741l-1 8M830 741l5 5M832 745l0 4M832 745l3 3M833 749l0 0M833 749l0 0M835 752l0 0M835 752l0 0"/><path id="f172" d="M778 562l3 17M778 562l13 4M780 563l3 23M780 563l18 6M782 565l3 19M782 565l15 5M784 566l3 24M784 566l19 7M786 568l2 17M786 568l13 5M788 570l2 18M788 570l14 5M790 572l3 26M790 572l20 7M792 574l3 25M792 574l19 7M794 576l3 24M794 576l19 7M796 578l2 20M796 578l15 6M798 580l2 22M798 580l17 6M800 582l3 24M800 582l19 7M802 584l2 21M802 584l16 6M805 586l3 32M805 586l25 10M807 588l3 30M807 588l23 9M809 590l3 32M809 590l25 10M811 592l3 30M811 592l23 9M814 595l2 26M814 595l20 8M816 597l2 23M816 597l18 7M818 599l3 31M818 599l24 10M821 602l2 24M821 602l18 8M823 604l2 29M823 604l23 10M826 607l2 29M826 607l22 9M828 609l2 29M828 609l22 10M830 612l2 24M830 612l18 8M833 614l2 24M833 614l18 8M835 617l2 30M835 617l23 10M838 619l2 24M838 619l18 8M840 622l2 30M840 622l23 10M843 625l2 25M843 625l19 8M845 627l2 27M845 627l20 9M848 630l2 25M848 630l19 9M851 633l2 30M851 633l23 10M853 635l2 28M853 635l21 10M856 638l2 26M856 638l20 9M858 641l2 26M858 641l20 9M861 644l2 30M861 644l23 10M863 646l2 34M863 646l26 12M866 649l2 27M866 649l21 9M869 652l1 24M869 652l18 8M871 655l2 26M871 655l20 9M874 658l1 25M874 658l19 8M877 661l2 28M877 661l21 10M879 663l2 30M879 663l23 10M882 666l2 27M882 666l21 9M885 669l1 23M885 669l17 8M887 672l1 24M887 672l18 8M890 675l1 24M890 675l18 8M893 678l1 24M893 678l18 8M895 681l1 23M895 681l17 8M898 684l2 28M898 684l22 10M901 686l1 23M901 686l18 8M903 689l1 24M903 689l18 8M906 692l1 23M906 692l18 8M909 695l1 22M909 695l17 8M911 698l1 23M911 698l17 8M914 701l1 18M914 701l14 6M917 704l1 20M917 704l15 7M919 707l1 21M919 707l16 7M922 709l1 14M922 709l11 5M925 712l1 16M925 712l12 6M927 715l1 14M927 715l10 5M930 718l1 11M930 718l8 4M932 721l1 10M932 721l7 3M935 723l1 12M935 723l9 4M938 726l0 7M938 726l6 3M940 729l0 8M940 729l6 3M943 732l0 4M943 732l3 1M945 734l0 0M945 734l0 0M948 737l0 0M948 737l0 0M951 740l0 0M951 740l0 0"/><path id="f173" d="M734 575l-9 19M734 575l10 18M734 577l-6 13M734 577l7 13M734 579l-10 20M734 579l10 20M734 582l-9 19M734 582l10 19M734 584l-9 19M734 584l10 18M734 587l-10 21M734 587l11 20M735 590l-10 21M735 590l11 21M735 593l-11 24M735 593l12 23M735 595l-12 26M735 595l13 25M735 598l-11 22M735 598l11 22M735 601l-10 21M735 601l11 21M735 605l-10 21M735 605l11 21M735 608l-13 27M735 608l14 27M735 611l-11 23M735 611l12 23M735 614l-10 20M735 614l10 19M735 618l-12 25M735 618l13 25M735 621l-10 21M735 621l11 20M735 625l-11 23M735 625l12 23M735 628l-13 27M735 628l14 26M735 632l-13 26M735 632l14 26M735 635l-13 26M735 635l13 25M735 639l-14 29M735 639l15 29M735 643l-13 27M735 643l14 26M735 646l-15 31M735 646l16 30M736 650l-14 29M736 650l15 29M736 654l-11 23M736 654l12 23M736 658l-14 29M736 658l15 28M736 662l-12 24M736 662l12 24M736 666l-15 30M736 666l16 30M736 670l-13 27M736 670l14 27M736 674l-12 25M736 674l12 24M736 678l-11 22M736 678l11 22M736 682l-14 29M736 682l15 28M736 686l-12 23M736 686l12 23M736 690l-10 20M736 690l10 19M736 694l-14 27M736 694l14 27M736 698l-9 19M736 698l10 19M736 702l-9 19M736 702l10 19M736 707l-9 19M736 707l9 18M736 711l-12 24M736 711l12 24M736 715l-11 23M736 715l12 23M736 719l-11 22M736 719l11 22M736 723l-13 25M736 723l13 25M736 727l-10 21M736 727l10 20M736 732l-9 18M736 732l9 18M736 736l-12 24M736 736l12 24M736 740l-8 16M736 740l8 16M736 744l-7 15M736 744l7 15M736 748l-8 15M736 748l8 15M736 752l-10 20M736 752l10 20M736 756l-8 15M736 756l8 15M736 761l-7 14M736 761l7 14M736 765l-7 13M736 765l7 13M736 769l-6 12M736 769l6 12M736 773l-6 13M736 773l7 13M737 777l-6 11M737 777l6 11M737 781l-4 8M737 781l4 8M737 785l-3 6M737 785l3 6M737 789l-3 6M737 789l3 6M737 793l-1 2M737 793l1 2M737 797l0 0M737 797l0 0M737 800l0 0M737 800l0 0"/><path id="f174" d="M735 481l10-6M735 481l-8-8M735 478l10-7M735 478l-8-8M736 475l9-6M736 475l-7-7M736 472l9-6M736 472l-8-7M736 468l9-6M736 468l-8-7M736 465l10-7M736 465l-9-8M737 462l12-9M737 462l-11-10M737 459l10-7M737 459l-9-8M737 456l13-10M737 456l-12-10M737 453l13-10M737 453l-12-10M737 450l10-7M737 450l-9-8M737 447l10-8M737 447l-10-8M737 444l12-10M737 444l-12-10M737 441l10-8M737 441l-10-8M737 438l9-8M737 438l-10-7M737 435l11-9M737 435l-12-9M737 432l11-10M737 432l-12-9M737 429l11-9M737 429l-12-8M737 426l12-11M737 426l-13-9M737 423l12-11M737 423l-14-10M736 420l13-12M736 420l-15-10M736 417l12-11M736 417l-14-9M736 415l12-12M736 415l-15-10M736 412l9-8M736 412l-11-7M736 409l11-11M736 409l-14-9M735 406l10-10M735 406l-13-8M735 404l9-9M735 404l-11-7M735 401l8-8M735 401l-10-6M735 398l11-12M735 398l-15-9M734 395l8-8M734 395l-10-6M734 393l7-8M734 393l-10-6M734 390l7-8M734 390l-11-6M733 388l7-8M733 388l-10-5M733 385l8-9M733 385l-11-6M732 382l7-8M732 382l-11-6M732 380l6-7M732 380l-9-5M732 377l6-7M732 377l-10-5M731 375l6-8M731 375l-10-5M731 372l5-7M731 372l-8-4M730 370l6-7M730 370l-9-4M730 367l5-6M730 367l-8-4M729 364l3-4M729 364l-5-2M729 362l3-4M729 362l-5-2M728 360l2-2M728 360l-3-1M728 357l0 0M728 357l0 0M727 355l0 0M727 355l0 0"/><path id="f175" d="M690 507l-5-7M690 507l-11 6M688 505l-6-8M688 505l-13 7M685 504l-9-10M685 504l-17 10M682 503l-10-11M682 503l-18 11M679 502l-8-8M679 502l-14 9M675 501l-8-8M675 501l-15 10M672 500l-11-10M672 500l-19 13M669 499l-10-9M669 499l-17 12M666 498l-10-8M666 498l-16 12M663 497l-13-10M663 497l-19 15M660 496l-14-10M660 496l-20 16M656 495l-11-8M656 495l-15 12M653 495l-13-9M653 495l-18 16M650 494l-14-10M650 494l-19 17M647 494l-13-8M647 494l-17 16M643 493l-13-8M643 493l-17 16M640 493l-18-10M640 493l-22 21M637 492l-13-7M637 492l-15 15M633 492l-13-7M633 492l-15 15M630 492l-16-8M630 492l-18 18M627 491l-13-6M627 491l-15 16M623 491l-14-7M623 491l-15 17M620 491l-16-7M620 491l-17 19M617 491l-17-7M617 491l-17 20M613 491l-20-8M613 491l-20 23M610 491l-15-6M610 491l-15 17M607 491l-15-5M607 491l-14 17M603 491l-17-6M603 491l-16 20M600 491l-16-5M600 491l-15 19M597 491l-13-4M597 491l-12 16M593 492l-13-4M593 492l-12 15M590 492l-17-5M590 492l-15 20M587 492l-16-5M587 492l-14 19M583 492l-13-4M583 492l-11 15M580 493l-12-3M580 493l-10 15M577 493l-12-3M577 493l-9 14M573 494l-12-3M573 494l-10 15M570 494l-14-3M570 494l-11 17M567 495l-13-3M567 495l-10 15M564 495l-12-2M564 495l-9 15M561 496l-11-2M561 496l-8 13M558 496l-9-2M558 496l-6 10M554 497l-6-1M554 497l-4 7M551 498l-5-1M551 498l-4 6M548 498l-3 0M548 498l-2 4M545 499l0 0M545 499l0 0M542 500l0 0M542 500l0 0"/><path id="f176" d="M686 555l-11 3M686 555l-6 13M684 556l-16 4M684 556l-8 18M681 557l-17 5M681 557l-8 20M679 559l-15 5M679 559l-7 17M677 560l-16 5M677 560l-7 19M675 562l-19 7M675 562l-8 23M672 563l-14 5M672 563l-6 17M670 565l-16 6M670 565l-7 20M668 566l-20 8M668 566l-8 25M665 568l-17 7M665 568l-6 21M663 570l-17 7M663 570l-6 21M660 572l-20 8M660 572l-7 25M658 574l-18 8M658 574l-6 23M655 576l-17 8M655 576l-6 22M653 578l-17 7M653 578l-6 21M650 580l-25 11M650 580l-8 32M648 582l-24 11M648 582l-8 30M645 584l-19 9M645 584l-6 24M643 586l-18 9M643 586l-6 23M640 588l-22 11M640 588l-7 28M638 591l-22 11M638 591l-6 28M635 593l-26 13M635 593l-7 33M632 595l-21 11M632 595l-6 27M630 598l-19 10M630 598l-5 24M627 600l-25 13M627 600l-7 33M625 603l-19 10M625 603l-5 25M622 605l-20 11M622 605l-5 26M619 608l-20 11M619 608l-5 26M617 610l-26 14M617 610l-6 33M614 613l-26 15M614 613l-7 35M611 616l-21 12M611 616l-5 27M609 618l-23 13M609 618l-6 30M606 621l-24 13M606 621l-6 31M603 624l-21 12M603 624l-5 28M600 627l-24 14M600 627l-6 32M598 630l-20 11M598 630l-4 26M595 632l-23 14M595 632l-5 31M592 635l-18 11M592 635l-4 24M590 638l-18 10M590 638l-4 23M587 641l-18 10M587 641l-4 23M584 644l-18 10M584 644l-4 23M582 647l-24 14M582 647l-5 32M579 650l-18 11M579 650l-4 23M576 653l-21 12M576 653l-4 27M573 656l-15 9M573 656l-3 20M571 659l-21 13M571 659l-4 29M568 662l-20 12M568 662l-4 27M565 665l-19 12M565 665l-4 25M563 668l-21 13M563 668l-4 28M560 671l-13 8M560 671l-3 18M557 674l-18 11M557 674l-3 24M555 677l-13 8M555 677l-2 18M552 680l-18 11M552 680l-3 24M549 683l-12 7M549 683l-2 16M547 686l-13 8M547 686l-2 17M544 689l-14 9M544 689l-2 18M541 692l-12 8M541 692l-2 17M539 695l-13 8M539 695l-2 18M536 698l-9 6M536 698l-2 12M534 701l-12 8M534 701l-2 16M531 704l-7 5M531 704l-1 10M528 707l-10 6M528 707l-2 13M526 710l-8 5M526 710l-1 10M523 713l-4 3M523 713l-1 6M521 716l-3 2M521 716l-1 4M518 719l0 0M518 719l0 0M516 722l0 0M516 722l0 0M513 725l0 0M513 725l0 0"/><path id="f177" d="M776 529l13 13M776 529l13-4M779 529l13 14M779 529l13-3M782 529l9 11M782 529l10-2M785 530l10 13M785 530l12-2M788 530l14 19M788 530l17-2M791 531l12 18M791 531l16-1M794 531l11 17M794 531l16-1M798 532l13 21M798 532l19 0M801 533l13 22M801 533l20 1M804 534l11 20M804 534l18 1M807 536l11 21M807 536l18 2M811 537l9 18M811 537l16 2M814 538l10 21M814 538l18 3M817 540l8 19M817 540l17 3M821 542l10 25M821 542l21 4M824 543l10 25M824 543l21 4M828 545l8 20M828 545l17 4M831 547l9 26M831 547l21 5M835 549l7 20M835 549l17 5M838 552l7 20M838 552l17 5M841 554l8 26M841 554l21 7M845 556l7 24M845 556l20 6M848 559l8 29M848 559l23 8M852 561l7 26M852 561l21 7M855 564l7 26M855 564l21 8M859 567l5 20M859 567l16 6M862 569l6 27M862 569l21 9M866 572l4 19M866 572l15 6M869 575l5 23M869 575l18 8M872 578l5 25M872 578l20 9M876 581l5 25M876 581l19 9M879 585l4 24M879 585l18 9M883 588l3 19M883 588l15 7M886 591l3 20M886 591l15 8M889 594l3 20M889 594l15 8M893 598l2 14M893 598l11 6M896 601l2 18M896 601l14 7M899 605l2 16M899 605l12 7M902 608l1 12M902 608l9 5M905 612l1 12M905 612l9 5M909 615l1 8M909 615l6 4M912 619l0 5M912 619l4 2M915 622l0 1M915 622l1 0M918 626l0 0M918 626l0 0"/><path id="f178" d="M774 509l13 8M774 509l6-8M777 508l16 10M777 508l8-9M780 507l12 7M780 507l6-7M783 505l12 8M783 505l6-7M785 504l15 10M785 504l8-9M788 503l15 10M788 503l9-9M791 502l16 11M791 502l9-9M794 501l19 14M794 501l11-11M797 500l18 13M797 500l11-10M800 499l14 11M800 499l9-8M803 499l15 11M803 499l9-8M806 498l19 14M806 498l12-10M809 497l17 13M809 497l11-10M812 496l19 14M812 496l12-10M815 495l16 13M815 495l11-9M819 494l22 18M819 494l15-12M822 494l18 15M822 494l12-10M825 493l18 15M825 493l12-10M828 492l18 15M828 492l12-10M831 492l15 12M831 492l11-8M834 491l22 19M834 491l16-12M837 490l17 15M837 490l12-9M840 490l21 18M840 490l15-11M843 489l19 16M843 489l14-10M846 488l18 16M846 488l13-9M849 488l21 18M849 488l16-11M852 487l17 15M852 487l12-9M855 487l17 15M855 487l13-9M859 486l14 13M859 486l11-7M862 486l17 15M862 486l13-9M865 485l18 16M865 485l14-9M868 485l18 16M868 485l13-9M871 484l16 15M871 484l12-8M874 483l14 13M874 483l11-7M877 483l14 12M877 483l10-7M879 482l16 14M879 482l12-8M882 482l16 14M882 482l12-8M885 481l11 10M885 481l9-6M888 481l11 10M888 481l8-5M891 481l9 8M891 481l7-5M894 480l10 9M894 480l8-5M897 480l10 9M897 480l7-5M899 479l8 7M899 479l6-4M902 479l7 6M902 479l5-3M905 478l5 4M905 478l3-2M908 478l4 3M908 478l3-2M910 477l0 0M910 477l0 0M913 477l0 0M913 477l0 0"/><path id="f179" d="M702 573l-13 10M702 573l0 19M701 575l-14 11M701 575l0 20M700 577l-13 10M700 577l0 18M698 580l-17 13M698 580l1 24M697 582l-13 10M697 582l1 18M695 585l-19 15M695 585l1 27M694 587l-16 13M694 587l1 22M692 590l-17 14M692 590l1 24M690 592l-14 12M690 592l1 20M689 595l-17 15M689 595l1 25M687 598l-16 14M687 598l1 24M686 601l-19 16M686 601l2 27M684 604l-20 17M684 604l2 29M682 607l-15 13M682 607l2 22M681 610l-15 13M681 610l2 22M679 613l-22 19M679 613l3 32M677 617l-17 15M677 617l2 24M675 620l-21 18M675 620l3 30M674 623l-21 19M674 623l3 31M672 627l-22 20M672 627l3 32M670 630l-15 14M670 630l2 23M668 634l-21 19M668 634l3 31M667 637l-23 21M667 637l3 33M665 641l-16 15M665 641l2 24M663 645l-16 14M663 645l2 23M661 648l-23 21M661 648l3 34M659 652l-21 20M659 652l3 32M657 656l-21 20M657 656l3 32M656 660l-22 20M656 660l3 33M654 664l-20 19M654 664l3 31M652 667l-17 16M652 667l3 25M650 671l-17 16M650 671l3 25M648 675l-15 14M648 675l3 23M646 679l-20 19M646 679l3 31M644 683l-20 19M644 683l3 30M642 687l-23 21M642 687l4 34M640 691l-17 16M640 691l3 25M638 696l-16 15M638 696l3 23M636 700l-17 16M636 700l3 26M635 704l-21 20M635 704l4 32M633 708l-16 15M633 708l3 23M631 712l-20 19M631 712l4 30M629 716l-18 17M629 716l3 27M627 721l-18 18M627 721l3 28M625 725l-13 13M625 725l2 20M623 729l-18 17M623 729l3 27M621 733l-15 14M621 733l3 22M619 737l-16 16M619 737l3 25M617 742l-12 11M617 742l2 18M615 746l-13 12M615 746l2 19M613 750l-14 13M613 750l3 21M611 754l-12 11M611 754l2 17M609 759l-12 12M609 759l2 19M607 763l-10 9M607 763l2 15M605 767l-10 9M605 767l2 15M604 771l-11 10M604 771l2 16M602 776l-9 8M602 776l2 13M600 780l-10 10M600 780l2 15M598 784l-7 7M598 784l1 11M596 788l-6 6M596 788l1 9M594 792l-5 5M594 792l1 8M592 796l-4 4M592 796l1 6M590 801l-1 1M590 801l0 1M588 805l0 0M588 805l0 0M587 809l0 0M587 809l0 0"/><path id="f180" d="M686 490l-4-10M686 490l-14 2M683 488l-4-9M683 488l-13 2M681 486l-6-12M681 486l-18 4M678 484l-7-12M678 484l-20 5M675 482l-7-12M675 482l-19 5M673 480l-7-10M673 480l-17 5M670 478l-9-13M670 478l-21 6M667 476l-8-11M667 476l-18 6M664 475l-8-10M664 475l-17 6M661 473l-9-11M661 473l-19 8M659 471l-9-10M659 471l-18 8M656 470l-13-14M656 470l-24 11M653 469l-9-9M653 469l-17 8M650 467l-14-13M650 467l-24 12M647 466l-12-11M647 466l-21 11M644 465l-11-9M644 465l-17 9M641 464l-16-12M641 464l-25 14M638 463l-14-10M638 463l-20 12M634 462l-12-9M634 462l-18 11M631 461l-16-11M631 461l-23 15M628 460l-15-10M628 460l-21 14M625 459l-16-9M625 459l-21 14M622 459l-15-8M622 459l-20 14M619 458l-14-8M619 458l-18 13M615 458l-20-10M615 458l-24 19M612 457l-14-7M612 457l-17 14M609 457l-14-6M609 457l-17 14M606 456l-17-7M606 456l-20 17M602 456l-19-8M602 456l-21 18M599 456l-17-6M599 456l-18 16M596 455l-21-8M596 455l-23 21M592 455l-20-7M592 455l-21 20M589 455l-18-6M589 455l-19 18M586 455l-20-6M586 455l-21 20M583 455l-21-6M583 455l-20 21M579 455l-15-4M579 455l-15 15M576 455l-15-4M576 455l-15 15M573 455l-20-5M573 455l-19 20M569 455l-15-3M569 455l-14 16M566 455l-19-4M566 455l-17 20M563 456l-17-3M563 456l-15 18M559 456l-16-3M559 456l-14 17M556 456l-16-3M556 456l-13 16M553 457l-15-2M553 457l-13 16M549 457l-15-2M549 457l-13 16M546 458l-13-2M546 458l-11 14M543 458l-10-1M543 458l-8 11M540 459l-9-1M540 459l-7 10M536 459l-9-1M536 459l-7 9M533 460l-10-1M533 460l-8 11M530 461l-7 0M530 461l-5 8M527 461l-5 0M527 461l-4 6M523 462l-5 0M523 462l-3 5M520 463l-3 0M520 463l-2 3M517 464l0 0M517 464l0 0M514 464l0 0M514 464l0 0"/><path id="f181" d="M698 492l-4-10M698 492l-15 1M696 490l-3-8M696 490l-12 1M694 488l-4-10M694 488l-15 1M691 486l-4-9M691 486l-14 1M689 484l-5-11M689 484l-16 2M687 482l-5-10M687 482l-16 2M685 480l-7-13M685 480l-20 3M682 478l-7-13M682 478l-20 3M680 476l-8-14M680 476l-22 4M678 474l-7-12M678 474l-20 3M675 472l-6-10M675 472l-16 3M673 471l-9-14M673 471l-23 4M670 469l-7-11M670 469l-18 4M668 467l-10-14M668 467l-23 5M666 466l-10-14M666 466l-22 5M663 464l-8-11M663 464l-19 4M661 462l-11-15M661 462l-25 6M659 461l-10-14M659 461l-23 6M656 459l-10-13M656 459l-21 6M654 458l-9-11M654 458l-19 5M651 456l-9-11M651 456l-19 5M649 455l-9-10M649 455l-18 5M647 453l-8-10M647 453l-17 5M644 452l-10-11M644 452l-19 6M642 451l-10-11M642 451l-19 6M640 449l-13-14M640 449l-25 8M637 448l-10-11M637 448l-19 6M635 447l-13-14M635 447l-25 8M632 446l-11-11M632 446l-20 7M630 444l-9-9M630 444l-17 6M628 443l-9-9M628 443l-16 6M625 442l-13-12M625 442l-23 9M623 441l-9-8M623 441l-16 6M621 440l-11-10M621 440l-19 7M619 439l-11-10M619 439l-19 7M616 438l-9-8M616 438l-16 6M614 437l-8-7M614 437l-14 6M612 436l-9-8M612 436l-16 7M610 435l-9-8M610 435l-15 6M607 434l-8-7M607 434l-14 6M605 433l-7-6M605 433l-11 5M603 432l-6-5M603 432l-11 5M601 431l-7-6M601 431l-11 5M599 430l-6-5M599 430l-9 4M597 429l-6-5M597 429l-10 4M594 428l-5-4M594 428l-8 4M592 427l-4-3M592 427l-6 3M590 427l-2-2M590 427l-4 2M588 426l0 0M588 426l0 0M586 425l0 0M586 425l0 0"/><path id="f182" d="M709 570l-15 13M709 570l0 22M707 572l-15 14M707 572l0 23M706 574l-11 10M706 574l0 17M705 577l-12 11M705 577l0 18M703 579l-16 15M703 579l1 24M702 582l-16 16M702 582l1 25M700 585l-13 14M700 585l1 21M699 588l-19 20M699 588l2 30M697 591l-13 14M697 591l1 21M696 594l-17 18M696 594l2 26M695 597l-16 18M695 597l2 26M693 600l-15 17M693 600l2 25M692 603l-18 20M692 603l3 29M690 607l-17 19M690 607l3 27M689 610l-19 22M689 610l3 31M687 614l-19 22M687 614l4 31M686 618l-14 16M686 618l3 23M685 621l-16 19M685 621l3 27M683 625l-18 21M683 625l4 29M682 629l-16 19M682 629l4 27M680 633l-18 22M680 633l4 30M679 637l-14 17M679 637l3 23M677 641l-14 18M677 641l4 24M676 645l-17 22M676 645l4 29M675 649l-15 19M675 649l4 26M673 653l-15 19M673 653l4 25M672 658l-16 21M672 658l5 28M670 662l-17 23M670 662l5 30M669 666l-18 23M669 666l5 30M667 671l-17 22M667 671l5 29M666 675l-16 21M666 675l5 28M665 679l-16 21M665 679l5 27M663 684l-18 24M663 684l6 32M662 689l-18 24M662 689l6 31M660 693l-18 24M660 693l6 31M659 698l-18 24M659 698l6 31M658 702l-16 21M658 702l5 27M656 707l-12 17M656 707l4 22M655 712l-15 21M655 712l5 26M654 716l-12 17M654 716l4 21M652 721l-12 17M652 721l4 21M651 726l-12 17M651 726l4 21M650 731l-10 14M650 731l3 17M648 735l-11 16M648 735l4 20M647 740l-10 14M647 740l4 17M646 745l-9 13M646 745l3 17M645 750l-10 14M645 750l4 17M643 755l-10 15M643 755l4 18M642 759l-9 13M642 759l3 16M641 764l-7 10M641 764l3 13M640 769l-8 11M640 769l3 14M638 774l-6 8M638 774l2 10M637 778l-5 7M637 778l2 8M636 783l-4 5M636 783l1 7M635 788l-2 3M635 788l1 3M634 793l0 0M634 793l0 0M633 797l0 0M633 797l0 0"/><path id="f183" d="M682 520l-8-4M682 520l-10 9M679 520l-12-6M679 520l-14 12M676 519l-14-6M676 519l-16 15M673 519l-13-5M673 519l-14 13M670 519l-13-5M670 519l-14 14M667 519l-15-5M667 519l-15 17M664 519l-14-4M664 519l-13 15M660 519l-14-4M660 519l-13 16M657 519l-17-4M657 519l-15 18M654 519l-15-3M654 519l-13 16M650 520l-18-3M650 520l-15 20M647 520l-18-3M647 520l-15 20M644 521l-19-3M644 521l-15 21M640 521l-19-2M640 521l-15 22M637 522l-21-2M637 522l-15 23M633 523l-23-2M633 523l-16 26M630 524l-24-1M630 524l-17 27M626 525l-21-1M626 525l-14 23M623 526l-23 0M623 526l-15 26M619 527l-20 0M619 527l-13 23M616 528l-19 0M616 528l-12 22M612 529l-22 1M612 529l-13 25M609 530l-20 1M609 530l-12 23M605 532l-20 1M605 532l-12 24M601 533l-24 2M601 533l-13 28M598 534l-23 2M598 534l-12 26M594 536l-19 2M594 536l-10 22M591 538l-23 3M591 538l-12 27M587 539l-26 3M587 539l-13 31M583 541l-19 3M583 541l-9 23M580 543l-23 4M580 543l-11 28M576 545l-19 3M576 545l-9 23M573 546l-22 4M573 546l-10 27M569 548l-24 4M569 548l-11 29M565 550l-24 5M565 550l-10 29M562 552l-22 5M562 552l-9 27M558 554l-17 4M558 554l-7 21M555 557l-21 5M555 557l-8 25M551 559l-15 4M551 559l-6 18M548 561l-19 5M548 561l-7 24M544 563l-17 5M544 563l-6 21M541 566l-19 5M541 566l-7 23M537 568l-14 4M537 568l-5 17M534 570l-16 5M534 570l-5 20M530 573l-13 4M530 573l-4 16M527 575l-10 3M527 575l-3 12M523 578l-12 4M523 578l-4 16M520 580l-8 3M520 580l-2 10M516 583l-8 3M516 583l-2 10M513 585l-6 2M513 585l-2 8M510 588l-4 1M510 588l-1 5M506 591l0 0M506 591l0 0M503 593l0 0M503 593l0 0"/><path id="f184" d="M686 528l-9-5M686 528l-10 11M683 528l-11-5M683 528l-11 13M680 527l-13-6M680 527l-13 16M677 527l-14-5M677 527l-13 17M674 528l-16-6M674 528l-14 20M671 528l-16-5M671 528l-13 19M668 528l-14-4M668 528l-11 17M665 529l-19-4M665 529l-14 23M662 529l-15-3M662 529l-11 19M659 530l-14-2M659 530l-10 17M656 531l-17-2M656 531l-11 21M653 531l-23-2M653 531l-14 28M650 532l-16-1M650 532l-9 19M647 533l-23-1M647 533l-13 28M644 534l-22-1M644 534l-12 27M640 536l-22 0M640 536l-11 28M637 537l-22 0M637 537l-11 28M634 538l-19 1M634 538l-9 23M631 540l-22 1M631 540l-10 27M628 541l-27 2M628 541l-11 33M624 543l-25 2M624 543l-10 32M621 544l-22 2M621 544l-9 27M618 546l-22 3M618 546l-8 27M615 548l-22 3M615 548l-8 27M612 550l-21 3M612 550l-7 27M608 552l-21 3M608 552l-7 27M605 554l-20 3M605 554l-6 25M602 556l-26 5M602 556l-8 33M599 558l-18 4M599 558l-5 22M595 560l-19 4M595 560l-5 24M592 562l-23 5M592 562l-6 29M589 565l-24 6M589 565l-6 31M586 567l-23 6M586 567l-6 29M582 569l-17 5M582 569l-4 22M579 572l-20 6M579 572l-4 26M576 574l-24 7M576 574l-5 30M573 577l-22 7M573 577l-4 28M569 579l-17 5M569 579l-3 21M566 582l-22 7M566 582l-4 28M563 585l-21 7M563 585l-4 27M560 587l-14 5M560 587l-2 18M557 590l-18 6M557 590l-3 24M554 593l-13 5M554 593l-2 17M551 596l-12 4M551 596l-2 15M548 599l-13 5M548 599l-2 17M544 602l-15 6M544 602l-2 20M541 605l-13 5M541 605l-1 16M538 608l-9 4M538 608l-1 12M535 611l-10 4M535 611l-1 14M532 614l-7 3M532 614l-1 9M529 617l-7 3M529 617l-1 9M527 620l-3 2M527 620l0 5M524 623l0 0M524 623l0 0M521 626l0 0M521 626l0 0"/><path id="f185" d="M772 510l10 6M772 510l5-6M774 509l10 6M774 509l5-6M777 507l12 7M777 507l6-7M780 506l11 7M780 506l6-6M783 505l15 10M783 505l8-8M786 504l12 9M786 504l7-7M789 503l12 9M789 503l8-7M792 503l13 10M792 503l9-7M795 502l17 14M795 502l12-9M798 501l18 15M798 501l13-9M801 501l19 17M801 501l14-10M804 500l15 14M804 500l12-8M807 500l17 16M807 500l14-8M810 499l18 18M810 499l15-9M813 499l18 18M813 499l15-8M816 499l18 19M816 499l16-8M819 498l18 20M819 498l17-8M823 498l17 19M823 498l16-7M826 498l17 20M826 498l17-7M829 498l17 20M829 498l17-7M832 498l14 17M832 498l15-6M835 498l15 18M835 498l16-6M839 498l16 20M839 498l17-6M842 498l11 14M842 498l12-4M845 499l12 16M845 499l13-4M848 499l14 19M848 499l16-5M852 499l12 17M852 499l14-4M855 500l10 14M855 500l12-3M858 500l13 19M858 500l16-4M861 500l12 18M861 500l15-4M865 501l10 15M865 501l13-3M868 501l12 19M868 501l16-3M871 502l11 18M871 502l15-3M874 502l8 13M874 502l11-2M878 503l10 16M878 503l13-2M881 504l9 15M881 504l13-2M884 504l6 11M884 504l9-1M887 505l7 12M887 505l10-1M890 506l5 9M890 506l7-1M893 506l4 7M893 506l6-1M896 507l4 7M896 507l6-1M899 508l3 5M899 508l5 0M902 509l0 1M902 509l1 0M905 510l0 0M905 510l0 0"/><path id="f186" d="M768 482l14 1M768 482l1-10M770 480l16 1M770 480l1-12M772 477l18 1M772 477l1-13M774 475l14 1M774 475l1-10M776 473l13 1M776 473l1-10M778 470l18 2M778 470l2-13M780 468l19 2M780 468l2-14M782 466l14 2M782 466l2-10M784 464l17 2M784 464l2-12M786 462l21 3M786 462l3-14M788 460l23 3M788 460l3-16M790 458l18 3M790 458l3-12M792 455l18 3M792 455l3-13M794 453l19 3M794 453l3-13M796 451l19 3M796 451l3-13M798 449l22 4M798 449l4-15M800 448l25 5M800 448l5-17M802 446l21 4M802 446l4-14M805 444l20 4M805 444l4-14M807 442l21 4M807 442l5-14M809 440l21 5M809 440l5-15M811 438l19 4M811 438l4-13M813 437l20 5M813 437l5-13M815 435l21 5M815 435l5-14M817 433l26 6M817 433l6-17M819 431l20 5M819 431l5-14M821 430l28 7M821 430l7-18M823 428l19 5M823 428l5-12M825 427l18 5M825 427l5-12M827 425l20 6M827 425l6-13M829 423l25 7M829 423l7-16M831 422l19 6M831 422l6-12M833 420l20 6M833 420l6-13M835 419l25 8M835 419l8-16M837 417l19 6M837 417l6-12M839 416l23 7M839 416l7-15M841 415l19 6M841 415l6-12M843 413l24 8M843 413l8-15M845 412l20 7M845 412l7-13M847 411l23 8M847 411l8-14M849 409l20 7M849 409l7-13M851 408l16 6M851 408l6-10M853 407l17 6M853 407l6-11M855 405l18 7M855 405l7-11M857 404l18 7M857 404l7-11M859 403l20 8M859 403l8-13M861 402l13 5M861 402l5-8M863 401l13 5M863 401l5-8M865 400l15 6M865 400l6-9M867 398l12 5M867 398l5-8M869 397l12 5M869 397l5-7M870 396l12 5M870 396l5-7M872 395l10 4M872 395l4-6M874 394l12 5M874 394l5-7M876 393l11 5M876 393l4-6M878 392l10 4M878 392l4-6M879 391l7 3M879 391l3-5M881 390l5 2M881 390l2-3M883 389l2 1M883 389l1-1M885 389l0 0M885 389l0 0M886 388l0 0M886 388l0 0"/><path id="f187" d="M688 547l-14 2M688 547l-7 17M685 548l-17 2M685 548l-8 20M682 550l-16 2M682 550l-8 20M680 551l-19 3M680 551l-8 23M677 553l-20 4M677 553l-8 24M674 554l-17 3M674 554l-7 21M671 556l-21 5M671 556l-8 26M668 558l-20 5M668 558l-8 25M665 559l-16 4M665 559l-6 19M662 561l-19 5M662 561l-7 23M659 563l-22 6M659 563l-8 27M656 565l-23 6M656 565l-8 28M653 568l-23 7M653 568l-8 29M650 570l-24 7M650 570l-8 30M647 572l-24 7M647 572l-7 30M644 574l-26 8M644 574l-8 33M640 577l-20 6M640 577l-6 25M637 579l-26 9M637 579l-7 33M634 582l-26 9M634 582l-7 33M631 584l-26 9M631 584l-7 32M627 587l-20 7M627 587l-5 26M624 590l-24 9M624 590l-6 30M621 592l-26 10M621 592l-7 33M618 595l-26 10M618 595l-6 33M614 598l-20 8M614 598l-5 25M611 601l-18 7M611 601l-4 23M607 604l-23 9M607 604l-5 29M604 607l-18 7M604 607l-4 23M601 610l-22 9M601 610l-5 28M597 613l-18 7M597 613l-4 23M594 616l-18 7M594 616l-4 23M591 619l-24 10M591 619l-5 31M587 622l-21 9M587 622l-4 28M584 625l-16 7M584 625l-3 21M580 628l-20 8M580 628l-4 25M577 631l-17 7M577 631l-3 22M574 634l-18 8M574 634l-3 23M570 638l-20 9M570 638l-4 25M567 641l-20 9M567 641l-4 26M564 644l-13 6M564 644l-2 17M560 647l-12 6M560 647l-2 16M557 650l-17 8M557 650l-3 22M554 654l-12 5M554 654l-2 15M550 657l-15 7M550 657l-2 19M547 660l-12 6M547 660l-2 16M544 664l-11 5M544 664l-2 14M540 667l-10 5M540 667l-2 13M537 670l-8 4M537 670l-1 10M534 673l-7 3M534 673l-1 9M531 677l-4 2M531 677l-1 6M528 680l0 0M528 680l0 0M524 683l0 0M524 683l0 0"/><path id="f188" d="M754 476l12-4M754 476l-4-10M756 473l15-4M756 473l-5-12M757 469l12-3M757 469l-3-10M758 466l14-4M758 466l-4-11M759 463l16-4M759 463l-4-12M761 460l14-3M761 460l-3-11M762 457l13-3M762 457l-3-10M764 454l15-3M764 454l-3-12M765 451l16-3M765 451l-3-13M766 448l19-3M766 448l-3-15M768 445l22-4M768 445l-3-17M769 442l18-3M769 442l-3-14M771 439l18-2M771 439l-2-14M773 437l20-2M773 437l-2-15M774 434l23-3M774 434l-2-18M776 431l23-2M776 431l-2-17M777 429l17-1M777 429l-1-13M779 426l23-2M779 426l-1-18M781 423l21-1M781 423l-1-16M782 421l18-1M782 421l-1-13M784 418l19-1M784 418l-1-14M786 416l17 0M786 416l0-13M787 413l20 0M787 413l0-15M789 411l20 0M789 411l0-15M791 409l23 0M791 409l0-17M793 406l19 0M793 406l1-14M794 404l22 1M794 404l1-16M796 402l22 1M796 402l1-16M798 400l25 1M798 400l1-18M800 397l22 1M800 397l1-16M801 395l19 1M801 395l1-14M803 393l20 1M803 393l2-15M805 391l21 2M805 391l2-15M807 389l15 1M807 389l2-11M809 387l18 2M809 387l2-13M811 385l19 2M811 385l2-14M812 383l14 2M812 383l2-10M814 381l14 2M814 381l2-10M816 379l14 2M816 379l2-9M818 377l18 2M818 377l3-12M820 375l12 2M820 375l2-8M821 374l13 2M821 374l2-9M823 372l15 2M823 372l3-11M825 370l14 2M825 370l2-10M827 368l11 2M827 368l2-8M829 366l9 2M829 366l2-6M831 365l7 1M831 365l1-5M832 363l6 1M832 363l1-4M834 361l3 1M834 361l1-2M836 360l0 0M836 360l0 0M838 358l0 0M838 358l0 0"/><path id="f189" d="M734 482l7-7M734 482l-7-7M734 479l7-7M734 479l-7-7M734 475l8-8M734 475l-8-8M734 472l10-9M734 472l-9-9M734 469l10-10M734 469l-10-10M734 466l11-10M734 466l-10-10M734 463l9-8M734 463l-8-8M734 460l10-9M734 460l-9-9M734 457l9-9M734 457l-9-9M734 454l8-8M734 454l-8-8M734 451l8-8M734 451l-8-8M734 448l10-9M734 448l-10-10M734 445l12-11M734 445l-11-11M734 442l10-10M734 442l-10-10M734 440l11-10M734 440l-10-10M734 437l9-9M734 437l-9-9M734 434l10-10M734 434l-10-10M734 431l13-13M734 431l-13-13M734 428l12-12M734 428l-12-12M734 426l13-13M734 426l-13-13M734 423l11-11M734 423l-11-11M734 420l10-10M734 420l-10-10M734 417l11-11M734 417l-11-11M734 415l10-10M734 415l-10-10M734 412l10-10M734 412l-10-10M734 409l10-10M734 409l-10-10M734 407l12-12M734 407l-12-11M734 404l12-12M734 404l-12-11M734 402l9-9M734 402l-10-9M734 399l12-12M734 399l-12-12M734 396l11-12M734 396l-12-11M734 394l8-8M734 394l-9-8M734 391l8-8M734 391l-8-8M734 389l9-10M734 389l-10-9M734 386l8-8M734 386l-8-8M734 384l10-11M734 384l-11-10M734 381l7-7M734 381l-8-7M734 379l9-9M734 379l-9-8M734 376l6-7M734 376l-7-6M734 374l8-8M734 374l-8-8M733 372l6-6M733 372l-7-6M733 369l6-6M733 369l-6-6M733 367l6-6M733 367l-6-6M733 364l5-5M733 364l-5-5M733 362l5-5M733 362l-5-5M733 360l5-5M733 360l-5-4M733 357l3-3M733 357l-3-3M733 355l2-2M733 355l-2-2M733 353l0 0M733 353l0 0M733 351l0 0M733 351l0 0"/><path id="f190" d="M768 564l2 16M768 564l12 5M769 566l2 19M769 566l15 6M771 568l2 23M771 568l18 8M773 570l1 22M773 570l17 8M775 572l1 26M775 572l20 9M777 574l1 26M777 574l19 10M778 576l0 24M778 576l18 9M780 578l0 20M780 578l15 8M782 580l0 26M782 580l19 10M784 582l-1 25M784 582l19 10M786 585l-1 30M786 585l22 13M787 587l-1 27M787 587l20 12M789 590l-1 29M789 590l21 13M791 593l-2 31M791 593l23 14M793 595l-2 27M793 595l20 12M795 598l-2 32M795 598l23 15M797 601l-3 33M797 601l24 16M799 604l-2 24M799 604l18 12M800 607l-3 34M800 607l25 16M802 610l-3 33M802 610l24 16M804 613l-4 33M804 613l24 17M806 616l-3 27M806 616l20 14M808 619l-3 26M808 619l19 13M810 622l-3 25M810 622l18 13M812 625l-4 28M812 625l20 14M813 629l-4 34M813 629l24 18M815 632l-4 28M815 632l20 15M817 635l-3 23M817 635l17 12M819 639l-4 27M819 639l19 14M821 642l-4 24M821 642l17 13M823 646l-5 30M823 646l22 17M824 649l-5 32M824 649l23 18M826 653l-5 34M826 653l24 19M828 656l-4 23M828 656l17 13M830 660l-4 27M830 660l19 15M832 664l-4 23M832 664l17 13M834 667l-6 32M834 667l23 18M835 671l-6 31M835 671l22 18M837 675l-5 27M837 675l19 15M839 679l-6 31M839 679l22 18M841 683l-5 26M841 683l18 15M843 686l-5 28M843 686l20 16M844 690l-5 25M844 690l17 14M846 694l-4 23M846 694l16 13M848 698l-6 28M848 698l20 17M850 702l-5 26M850 702l18 16M851 706l-5 23M851 706l16 14M853 710l-5 25M853 710l17 15M855 714l-5 22M855 714l15 13M857 717l-5 22M857 717l16 14M858 721l-3 16M858 721l11 9M860 725l-3 15M860 725l11 9M862 729l-3 14M862 729l10 9M863 733l-4 17M863 733l12 10M865 737l-4 16M865 737l12 10M867 741l-3 12M867 741l8 7M868 745l-3 13M868 745l9 8M870 749l-2 9M870 749l7 6M871 753l-2 10M871 753l7 7M873 757l-2 9M873 757l6 6M874 760l-1 5M874 760l3 3M876 764l-1 2M876 764l2 1M877 768l0 0M877 768l0 0M879 772l0 0M879 772l0 0"/></defs><rect width="1154" height="648" fill="url(#sand)"/><rect width="1154" height="648" filter="url(#nz)" opacity="0.55"/><rect x="0" y="0" width="1" height="648" fill="#a49a74"/><g filter="url(#bl3s)" fill="#a2a184"><path d="M1154 36L1068 52L954 84L850 124L790 170L830 260L960 330L1060 380L1154 390Z"/><path d="M960 466L1154 368L1154 402L975 494Z" fill="#9e9d7e"/><path d="M822 640L1154 442L1154 484L858 648L815 648Z" fill="#9e9d7e"/><path d="M1154 405L1060 450L1000 480L990 470L1100 410Z" opacity="0.6"/><path d="M455 590L520 560L525 580L470 605Z" fill="#8f8d6c"/></g><g fill="none"><g fill="none"><ellipse cx="438" cy="162" rx="90" ry="81" fill="#35503d" opacity="0.7" filter="url(#bl)"/><use href="#f1" stroke="#55735a" stroke-width="1.9" opacity="0.9"/><use href="#f1" stroke="#9fb891" stroke-width="0.9" opacity="0.95"/><use href="#f2" stroke="#55735a" stroke-width="1.9" opacity="0.9"/><use href="#f2" stroke="#9fb891" stroke-width="0.9" opacity="0.95"/><use href="#f3" stroke="#55735a" stroke-width="1.9" opacity="0.9"/><use href="#f3" stroke="#9fb891" stroke-width="0.9" opacity="0.95"/><use href="#f4" stroke="#55735a" stroke-width="1.9" opacity="0.9"/><use href="#f4" stroke="#9fb891" stroke-width="0.9" opacity="0.95"/><use href="#f5" stroke="#55735a" stroke-width="1.9" opacity="0.9"/><use href="#f5" stroke="#9fb891" stroke-width="0.9" opacity="0.95"/><use href="#f6" stroke="#55735a" stroke-width="1.9" opacity="0.9"/><use href="#f6" stroke="#9fb891" stroke-width="0.9" opacity="0.95"/><use href="#f7" stroke="#55735a" stroke-width="1.9" opacity="0.9"/><use href="#f7" stroke="#9fb891" stroke-width="0.9" opacity="0.95"/><use href="#f8" stroke="#55735a" stroke-width="1.9" opacity="0.9"/><use href="#f8" stroke="#9fb891" stroke-width="0.9" opacity="0.95"/><use href="#f9" stroke="#55735a" stroke-width="1.9" opacity="0.9"/><use href="#f9" stroke="#9fb891" stroke-width="0.9" opacity="0.95"/><use href="#f10" stroke="#55735a" stroke-width="1.9" opacity="0.9"/><use href="#f10" stroke="#9fb891" stroke-width="0.9" opacity="0.95"/><use href="#f11" stroke="#55735a" stroke-width="1.9" opacity="0.9"/><use href="#f11" stroke="#9fb891" stroke-width="0.9" opacity="0.95"/><use href="#f12" stroke="#55735a" stroke-width="1.9" opacity="0.9"/><use href="#f12" stroke="#9fb891" stroke-width="0.9" opacity="0.95"/><use href="#f13" stroke="#55735a" stroke-width="1.9" opacity="0.9"/><use href="#f13" stroke="#9fb891" stroke-width="0.9" opacity="0.95"/><use href="#f14" stroke="#55735a" stroke-width="1.9" opacity="0.9"/><use href="#f14" stroke="#9fb891" stroke-width="0.9" opacity="0.95"/><use href="#f15" stroke="#55735a" stroke-width="1.9" opacity="0.9"/><use href="#f15" stroke="#9fb891" stroke-width="0.9" opacity="0.95"/><ellipse cx="438" cy="152" rx="68" ry="60" fill="#2a4232" opacity="0.6" filter="url(#bl3)"/><use href="#f16" stroke="#819e78" stroke-width="1.9" opacity="0.9"/><use href="#f16" stroke="#c3d6b0" stroke-width="0.9" opacity="0.95"/><path d="M427 177C408 203 377 308 352 380" stroke="#cbd09c" stroke-width="0.9" opacity="0.8"/><use href="#f17" stroke="#93b187" stroke-width="1.9" opacity="0.9"/><use href="#f17" stroke="#d5e4c4" stroke-width="0.9" opacity="0.95"/><path d="M417 144C375 118 313 118 266 118" stroke="#cbd09c" stroke-width="0.9" opacity="0.8"/><use href="#f18" stroke="#819e78" stroke-width="1.9" opacity="0.9"/><use href="#f18" stroke="#c3d6b0" stroke-width="0.9" opacity="0.95"/><path d="M456 136C485 81 542 64 588 60" stroke="#cbd09c" stroke-width="0.9" opacity="0.8"/><use href="#f19" stroke="#819e78" stroke-width="1.9" opacity="0.9"/><use href="#f19" stroke="#c3d6b0" stroke-width="0.9" opacity="0.95"/><path d="M459 159C496 165 564 212 616 243" stroke="#cbd09c" stroke-width="0.9" opacity="0.8"/><use href="#f20" stroke="#93b187" stroke-width="1.9" opacity="0.9"/><use href="#f20" stroke="#d5e4c4" stroke-width="0.9" opacity="0.95"/><path d="M447 129C453 62 485 21 516-6" stroke="#cbd09c" stroke-width="0.9" opacity="0.8"/><use href="#f21" stroke="#819e78" stroke-width="1.9" opacity="0.9"/><use href="#f21" stroke="#c3d6b0" stroke-width="0.9" opacity="0.95"/><path d="M445 177C445 208 470 312 496 377" stroke="#cbd09c" stroke-width="0.9" opacity="0.8"/><use href="#f22" stroke="#819e78" stroke-width="1.9" opacity="0.9"/><use href="#f22" stroke="#c3d6b0" stroke-width="0.9" opacity="0.95"/><path d="M432 176C413 201 400 302 395 372" stroke="#cbd09c" stroke-width="0.9" opacity="0.8"/><use href="#f23" stroke="#819e78" stroke-width="1.9" opacity="0.9"/><use href="#f23" stroke="#c3d6b0" stroke-width="0.9" opacity="0.95"/><path d="M452 172C467 198 513 285 554 341" stroke="#cbd09c" stroke-width="0.9" opacity="0.8"/><use href="#f24" stroke="#819e78" stroke-width="1.9" opacity="0.9"/><use href="#f24" stroke="#c3d6b0" stroke-width="0.9" opacity="0.95"/><path d="M434 172C428 195 416 281 406 342" stroke="#cbd09c" stroke-width="0.9" opacity="0.8"/><use href="#f25" stroke="#93b187" stroke-width="1.9" opacity="0.9"/><use href="#f25" stroke="#d5e4c4" stroke-width="0.9" opacity="0.95"/><path d="M415 166C376 177 307 251 252 308" stroke="#cbd09c" stroke-width="0.9" opacity="0.8"/><use href="#f26" stroke="#819e78" stroke-width="1.9" opacity="0.9"/><use href="#f26" stroke="#c3d6b0" stroke-width="0.9" opacity="0.95"/><path d="M460 147C502 118 570 132 622 144" stroke="#cbd09c" stroke-width="0.9" opacity="0.8"/><use href="#f27" stroke="#93b187" stroke-width="1.9" opacity="0.9"/><use href="#f27" stroke="#d5e4c4" stroke-width="0.9" opacity="0.95"/><path d="M432 128C430 61 411 12 392-33" stroke="#cbd09c" stroke-width="0.9" opacity="0.8"/><use href="#f28" stroke="#93b187" stroke-width="1.9" opacity="0.9"/><use href="#f28" stroke="#d5e4c4" stroke-width="0.9" opacity="0.95"/><path d="M416 162C376 161 311 217 262 254" stroke="#cbd09c" stroke-width="0.9" opacity="0.8"/><use href="#f29" stroke="#819e78" stroke-width="1.9" opacity="0.9"/><use href="#f29" stroke="#c3d6b0" stroke-width="0.9" opacity="0.95"/><path d="M437 174C437 199 436 290 435 352" stroke="#cbd09c" stroke-width="0.9" opacity="0.8"/><use href="#f30" stroke="#819e78" stroke-width="1.9" opacity="0.9"/><use href="#f30" stroke="#c3d6b0" stroke-width="0.9" opacity="0.95"/><path d="M456 161C489 165 546 215 589 246" stroke="#cbd09c" stroke-width="0.9" opacity="0.8"/><ellipse cx="438" cy="152" rx="27" ry="23" fill="#263a2b" opacity="0.6" filter="url(#bl3)"/></g><g fill="none"><ellipse cx="621" cy="252" rx="105" ry="95" fill="#35503d" opacity="0.7" filter="url(#bl)"/><use href="#f31" stroke="#55735a" stroke-width="1.9" opacity="0.9"/><use href="#f31" stroke="#9fb891" stroke-width="0.9" opacity="0.95"/><use href="#f32" stroke="#55735a" stroke-width="1.9" opacity="0.9"/><use href="#f32" stroke="#9fb891" stroke-width="0.9" opacity="0.95"/><use href="#f33" stroke="#55735a" stroke-width="1.9" opacity="0.9"/><use href="#f33" stroke="#9fb891" stroke-width="0.9" opacity="0.95"/><use href="#f34" stroke="#55735a" stroke-width="1.9" opacity="0.9"/><use href="#f34" stroke="#9fb891" stroke-width="0.9" opacity="0.95"/><use href="#f35" stroke="#55735a" stroke-width="1.9" opacity="0.9"/><use href="#f35" stroke="#9fb891" stroke-width="0.9" opacity="0.95"/><use href="#f36" stroke="#55735a" stroke-width="1.9" opacity="0.9"/><use href="#f36" stroke="#9fb891" stroke-width="0.9" opacity="0.95"/><use href="#f37" stroke="#55735a" stroke-width="1.9" opacity="0.9"/><use href="#f37" stroke="#9fb891" stroke-width="0.9" opacity="0.95"/><use href="#f38" stroke="#55735a" stroke-width="1.9" opacity="0.9"/><use href="#f38" stroke="#9fb891" stroke-width="0.9" opacity="0.95"/><use href="#f39" stroke="#55735a" stroke-width="1.9" opacity="0.9"/><use href="#f39" stroke="#9fb891" stroke-width="0.9" opacity="0.95"/><use href="#f40" stroke="#55735a" stroke-width="1.9" opacity="0.9"/><use href="#f40" stroke="#9fb891" stroke-width="0.9" opacity="0.95"/><use href="#f41" stroke="#55735a" stroke-width="1.9" opacity="0.9"/><use href="#f41" stroke="#9fb891" stroke-width="0.9" opacity="0.95"/><use href="#f42" stroke="#55735a" stroke-width="1.9" opacity="0.9"/><use href="#f42" stroke="#9fb891" stroke-width="0.9" opacity="0.95"/><use href="#f43" stroke="#55735a" stroke-width="1.9" opacity="0.9"/><use href="#f43" stroke="#9fb891" stroke-width="0.9" opacity="0.95"/><use href="#f44" stroke="#55735a" stroke-width="1.9" opacity="0.9"/><use href="#f44" stroke="#9fb891" stroke-width="0.9" opacity="0.95"/><use href="#f45" stroke="#55735a" stroke-width="1.9" opacity="0.9"/><use href="#f45" stroke="#9fb891" stroke-width="0.9" opacity="0.95"/><use href="#f46" stroke="#55735a" stroke-width="1.9" opacity="0.9"/><use href="#f46" stroke="#9fb891" stroke-width="0.9" opacity="0.95"/><ellipse cx="621" cy="240" rx="80" ry="70" fill="#2a4232" opacity="0.6" filter="url(#bl3)"/><use href="#f47" stroke="#819e78" stroke-width="1.9" opacity="0.9"/><use href="#f47" stroke="#c3d6b0" stroke-width="0.9" opacity="0.95"/><path d="M609 264C597 293 558 398 522 479" stroke="#cbd09c" stroke-width="0.9" opacity="0.8"/><use href="#f48" stroke="#93b187" stroke-width="1.9" opacity="0.9"/><use href="#f48" stroke="#d5e4c4" stroke-width="0.9" opacity="0.95"/><path d="M607 222C585 167 541 138 505 114" stroke="#cbd09c" stroke-width="0.9" opacity="0.8"/><use href="#f49" stroke="#819e78" stroke-width="1.9" opacity="0.9"/><use href="#f49" stroke="#c3d6b0" stroke-width="0.9" opacity="0.95"/><path d="M629 266C639 296 668 406 693 482" stroke="#cbd09c" stroke-width="0.9" opacity="0.8"/><use href="#f50" stroke="#93b187" stroke-width="1.9" opacity="0.9"/><use href="#f50" stroke="#d5e4c4" stroke-width="0.9" opacity="0.95"/><path d="M634 215C669 150 707 105 732 70" stroke="#cbd09c" stroke-width="0.9" opacity="0.8"/><use href="#f51" stroke="#93b187" stroke-width="1.9" opacity="0.9"/><use href="#f51" stroke="#d5e4c4" stroke-width="0.9" opacity="0.95"/><path d="M598 236C555 199 484 220 429 247" stroke="#cbd09c" stroke-width="0.9" opacity="0.8"/><use href="#f52" stroke="#93b187" stroke-width="1.9" opacity="0.9"/><use href="#f52" stroke="#d5e4c4" stroke-width="0.9" opacity="0.95"/><path d="M621 214C626 145 625 91 621 39" stroke="#cbd09c" stroke-width="0.9" opacity="0.8"/><use href="#f53" stroke="#819e78" stroke-width="1.9" opacity="0.9"/><use href="#f53" stroke="#c3d6b0" stroke-width="0.9" opacity="0.95"/><path d="M644 261C683 281 757 378 816 445" stroke="#cbd09c" stroke-width="0.9" opacity="0.8"/><use href="#f54" stroke="#93b187" stroke-width="1.9" opacity="0.9"/><use href="#f54" stroke="#d5e4c4" stroke-width="0.9" opacity="0.95"/><path d="M637 220C676 169 723 133 755 98" stroke="#cbd09c" stroke-width="0.9" opacity="0.8"/><use href="#f55" stroke="#819e78" stroke-width="1.9" opacity="0.9"/><use href="#f55" stroke="#c3d6b0" stroke-width="0.9" opacity="0.95"/><path d="M620 265C611 292 611 394 616 461" stroke="#cbd09c" stroke-width="0.9" opacity="0.8"/><use href="#f56" stroke="#93b187" stroke-width="1.9" opacity="0.9"/><use href="#f56" stroke="#d5e4c4" stroke-width="0.9" opacity="0.95"/><path d="M610 218C584 159 554 117 534 81" stroke="#cbd09c" stroke-width="0.9" opacity="0.8"/><use href="#f57" stroke="#819e78" stroke-width="1.9" opacity="0.9"/><use href="#f57" stroke="#c3d6b0" stroke-width="0.9" opacity="0.95"/><path d="M640 223C667 159 729 142 781 138" stroke="#cbd09c" stroke-width="0.9" opacity="0.8"/><use href="#f58" stroke="#819e78" stroke-width="1.9" opacity="0.9"/><use href="#f58" stroke="#c3d6b0" stroke-width="0.9" opacity="0.95"/><path d="M631 265C639 296 674 406 705 486" stroke="#cbd09c" stroke-width="0.9" opacity="0.8"/><use href="#f59" stroke="#93b187" stroke-width="1.9" opacity="0.9"/><use href="#f59" stroke="#d5e4c4" stroke-width="0.9" opacity="0.95"/><path d="M594 246C545 240 464 290 402 330" stroke="#cbd09c" stroke-width="0.9" opacity="0.8"/><use href="#f60" stroke="#819e78" stroke-width="1.9" opacity="0.9"/><use href="#f60" stroke="#c3d6b0" stroke-width="0.9" opacity="0.95"/><path d="M648 247C702 229 786 291 848 359" stroke="#cbd09c" stroke-width="0.9" opacity="0.8"/><use href="#f61" stroke="#93b187" stroke-width="1.9" opacity="0.9"/><use href="#f61" stroke="#d5e4c4" stroke-width="0.9" opacity="0.95"/><path d="M635 224C656 170 702 150 740 143" stroke="#cbd09c" stroke-width="0.9" opacity="0.8"/><use href="#f62" stroke="#93b187" stroke-width="1.9" opacity="0.9"/><use href="#f62" stroke="#d5e4c4" stroke-width="0.9" opacity="0.95"/><path d="M627 217C640 153 660 106 676 65" stroke="#cbd09c" stroke-width="0.9" opacity="0.8"/><ellipse cx="621" cy="240" rx="32" ry="27" fill="#263a2b" opacity="0.6" filter="url(#bl3)"/></g><g fill="none"><ellipse cx="918" cy="301" rx="109" ry="98" fill="#35503d" opacity="0.7" filter="url(#bl)"/><use href="#f63" stroke="#55735a" stroke-width="1.9" opacity="0.9"/><use href="#f63" stroke="#9fb891" stroke-width="0.9" opacity="0.95"/><use href="#f64" stroke="#55735a" stroke-width="1.9" opacity="0.9"/><use href="#f64" stroke="#9fb891" stroke-width="0.9" opacity="0.95"/><use href="#f65" stroke="#55735a" stroke-width="1.9" opacity="0.9"/><use href="#f65" stroke="#9fb891" stroke-width="0.9" opacity="0.95"/><use href="#f66" stroke="#55735a" stroke-width="1.9" opacity="0.9"/><use href="#f66" stroke="#9fb891" stroke-width="0.9" opacity="0.95"/><use href="#f67" stroke="#55735a" stroke-width="1.9" opacity="0.9"/><use href="#f67" stroke="#9fb891" stroke-width="0.9" opacity="0.95"/><use href="#f68" stroke="#55735a" stroke-width="1.9" opacity="0.9"/><use href="#f68" stroke="#9fb891" stroke-width="0.9" opacity="0.95"/><use href="#f69" stroke="#55735a" stroke-width="1.9" opacity="0.9"/><use href="#f69" stroke="#9fb891" stroke-width="0.9" opacity="0.95"/><use href="#f70" stroke="#55735a" stroke-width="1.9" opacity="0.9"/><use href="#f70" stroke="#9fb891" stroke-width="0.9" opacity="0.95"/><use href="#f71" stroke="#55735a" stroke-width="1.9" opacity="0.9"/><use href="#f71" stroke="#9fb891" stroke-width="0.9" opacity="0.95"/><use href="#f72" stroke="#55735a" stroke-width="1.9" opacity="0.9"/><use href="#f72" stroke="#9fb891" stroke-width="0.9" opacity="0.95"/><use href="#f73" stroke="#55735a" stroke-width="1.9" opacity="0.9"/><use href="#f73" stroke="#9fb891" stroke-width="0.9" opacity="0.95"/><use href="#f74" stroke="#55735a" stroke-width="1.9" opacity="0.9"/><use href="#f74" stroke="#9fb891" stroke-width="0.9" opacity="0.95"/><use href="#f75" stroke="#55735a" stroke-width="1.9" opacity="0.9"/><use href="#f75" stroke="#9fb891" stroke-width="0.9" opacity="0.95"/><use href="#f76" stroke="#55735a" stroke-width="1.9" opacity="0.9"/><use href="#f76" stroke="#9fb891" stroke-width="0.9" opacity="0.95"/><use href="#f77" stroke="#55735a" stroke-width="1.9" opacity="0.9"/><use href="#f77" stroke="#9fb891" stroke-width="0.9" opacity="0.95"/><use href="#f78" stroke="#55735a" stroke-width="1.9" opacity="0.9"/><use href="#f78" stroke="#9fb891" stroke-width="0.9" opacity="0.95"/><ellipse cx="918" cy="288" rx="83" ry="72" fill="#2a4232" opacity="0.6" filter="url(#bl3)"/><use href="#f79" stroke="#819e78" stroke-width="1.9" opacity="0.9"/><use href="#f79" stroke="#c3d6b0" stroke-width="0.9" opacity="0.95"/><path d="M940 282C986 258 1056 266 1109 266" stroke="#cbd09c" stroke-width="0.9" opacity="0.8"/><use href="#f80" stroke="#819e78" stroke-width="1.9" opacity="0.9"/><use href="#f80" stroke="#c3d6b0" stroke-width="0.9" opacity="0.95"/><path d="M947 289C1005 269 1097 309 1167 342" stroke="#cbd09c" stroke-width="0.9" opacity="0.8"/><use href="#f81" stroke="#819e78" stroke-width="1.9" opacity="0.9"/><use href="#f81" stroke="#c3d6b0" stroke-width="0.9" opacity="0.95"/><path d="M926 313C951 336 973 443 985 519" stroke="#cbd09c" stroke-width="0.9" opacity="0.8"/><use href="#f82" stroke="#93b187" stroke-width="1.9" opacity="0.9"/><use href="#f82" stroke="#d5e4c4" stroke-width="0.9" opacity="0.95"/><path d="M894 275C854 223 782 215 725 209" stroke="#cbd09c" stroke-width="0.9" opacity="0.8"/><use href="#f83" stroke="#93b187" stroke-width="1.9" opacity="0.9"/><use href="#f83" stroke="#d5e4c4" stroke-width="0.9" opacity="0.95"/><path d="M920 265C927 204 934 158 938 120" stroke="#cbd09c" stroke-width="0.9" opacity="0.8"/><use href="#f84" stroke="#819e78" stroke-width="1.9" opacity="0.9"/><use href="#f84" stroke="#c3d6b0" stroke-width="0.9" opacity="0.95"/><path d="M912 319C884 351 870 484 870 582" stroke="#cbd09c" stroke-width="0.9" opacity="0.8"/><use href="#f85" stroke="#819e78" stroke-width="1.9" opacity="0.9"/><use href="#f85" stroke="#c3d6b0" stroke-width="0.9" opacity="0.95"/><path d="M902 307C870 321 824 411 792 487" stroke="#cbd09c" stroke-width="0.9" opacity="0.8"/><use href="#f86" stroke="#819e78" stroke-width="1.9" opacity="0.9"/><use href="#f86" stroke="#c3d6b0" stroke-width="0.9" opacity="0.95"/><path d="M943 295C988 301 1068 357 1130 411" stroke="#cbd09c" stroke-width="0.9" opacity="0.8"/><use href="#f87" stroke="#93b187" stroke-width="1.9" opacity="0.9"/><use href="#f87" stroke="#d5e4c4" stroke-width="0.9" opacity="0.95"/><path d="M914 266C904 208 895 165 889 131" stroke="#cbd09c" stroke-width="0.9" opacity="0.8"/><use href="#f88" stroke="#819e78" stroke-width="1.9" opacity="0.9"/><use href="#f88" stroke="#c3d6b0" stroke-width="0.9" opacity="0.95"/><path d="M936 305C962 329 1022 410 1074 466" stroke="#cbd09c" stroke-width="0.9" opacity="0.8"/><use href="#f89" stroke="#93b187" stroke-width="1.9" opacity="0.9"/><use href="#f89" stroke="#d5e4c4" stroke-width="0.9" opacity="0.95"/><path d="M886 292C827 274 731 326 658 372" stroke="#cbd09c" stroke-width="0.9" opacity="0.8"/><use href="#f90" stroke="#819e78" stroke-width="1.9" opacity="0.9"/><use href="#f90" stroke="#c3d6b0" stroke-width="0.9" opacity="0.95"/><path d="M942 303C988 313 1065 399 1125 474" stroke="#cbd09c" stroke-width="0.9" opacity="0.8"/><use href="#f91" stroke="#93b187" stroke-width="1.9" opacity="0.9"/><use href="#f91" stroke="#d5e4c4" stroke-width="0.9" opacity="0.95"/><path d="M905 264C870 202 834 157 814 118" stroke="#cbd09c" stroke-width="0.9" opacity="0.8"/><use href="#f92" stroke="#819e78" stroke-width="1.9" opacity="0.9"/><use href="#f92" stroke="#c3d6b0" stroke-width="0.9" opacity="0.95"/><path d="M941 278C984 236 1057 236 1112 240" stroke="#cbd09c" stroke-width="0.9" opacity="0.8"/><use href="#f93" stroke="#93b187" stroke-width="1.9" opacity="0.9"/><use href="#f93" stroke="#d5e4c4" stroke-width="0.9" opacity="0.95"/><path d="M893 277C850 228 776 227 717 232" stroke="#cbd09c" stroke-width="0.9" opacity="0.8"/><use href="#f94" stroke="#93b187" stroke-width="1.9" opacity="0.9"/><use href="#f94" stroke="#d5e4c4" stroke-width="0.9" opacity="0.95"/><path d="M893 310C859 339 781 442 715 510" stroke="#cbd09c" stroke-width="0.9" opacity="0.8"/><ellipse cx="918" cy="288" rx="33" ry="28" fill="#263a2b" opacity="0.6" filter="url(#bl3)"/></g><g fill="none"><ellipse cx="430" cy="411" rx="94" ry="85" fill="#35503d" opacity="0.7" filter="url(#bl)"/><use href="#f95" stroke="#55735a" stroke-width="1.9" opacity="0.9"/><use href="#f95" stroke="#9fb891" stroke-width="0.9" opacity="0.95"/><use href="#f96" stroke="#55735a" stroke-width="1.9" opacity="0.9"/><use href="#f96" stroke="#9fb891" stroke-width="0.9" opacity="0.95"/><use href="#f97" stroke="#55735a" stroke-width="1.9" opacity="0.9"/><use href="#f97" stroke="#9fb891" stroke-width="0.9" opacity="0.95"/><use href="#f98" stroke="#55735a" stroke-width="1.9" opacity="0.9"/><use href="#f98" stroke="#9fb891" stroke-width="0.9" opacity="0.95"/><use href="#f99" stroke="#55735a" stroke-width="1.9" opacity="0.9"/><use href="#f99" stroke="#9fb891" stroke-width="0.9" opacity="0.95"/><use href="#f100" stroke="#55735a" stroke-width="1.9" opacity="0.9"/><use href="#f100" stroke="#9fb891" stroke-width="0.9" opacity="0.95"/><use href="#f101" stroke="#55735a" stroke-width="1.9" opacity="0.9"/><use href="#f101" stroke="#9fb891" stroke-width="0.9" opacity="0.95"/><use href="#f102" stroke="#55735a" stroke-width="1.9" opacity="0.9"/><use href="#f102" stroke="#9fb891" stroke-width="0.9" opacity="0.95"/><use href="#f103" stroke="#55735a" stroke-width="1.9" opacity="0.9"/><use href="#f103" stroke="#9fb891" stroke-width="0.9" opacity="0.95"/><use href="#f104" stroke="#55735a" stroke-width="1.9" opacity="0.9"/><use href="#f104" stroke="#9fb891" stroke-width="0.9" opacity="0.95"/><use href="#f105" stroke="#55735a" stroke-width="1.9" opacity="0.9"/><use href="#f105" stroke="#9fb891" stroke-width="0.9" opacity="0.95"/><use href="#f106" stroke="#55735a" stroke-width="1.9" opacity="0.9"/><use href="#f106" stroke="#9fb891" stroke-width="0.9" opacity="0.95"/><use href="#f107" stroke="#55735a" stroke-width="1.9" opacity="0.9"/><use href="#f107" stroke="#9fb891" stroke-width="0.9" opacity="0.95"/><use href="#f108" stroke="#55735a" stroke-width="1.9" opacity="0.9"/><use href="#f108" stroke="#9fb891" stroke-width="0.9" opacity="0.95"/><use href="#f109" stroke="#55735a" stroke-width="1.9" opacity="0.9"/><use href="#f109" stroke="#9fb891" stroke-width="0.9" opacity="0.95"/><ellipse cx="430" cy="400" rx="72" ry="63" fill="#2a4232" opacity="0.6" filter="url(#bl3)"/><use href="#f110" stroke="#93b187" stroke-width="1.9" opacity="0.9"/><use href="#f110" stroke="#d5e4c4" stroke-width="0.9" opacity="0.95"/><path d="M434 381C443 328 458 290 469 259" stroke="#cbd09c" stroke-width="0.9" opacity="0.8"/><use href="#f111" stroke="#93b187" stroke-width="1.9" opacity="0.9"/><use href="#f111" stroke="#d5e4c4" stroke-width="0.9" opacity="0.95"/><path d="M411 383C385 322 327 313 278 336" stroke="#cbd09c" stroke-width="0.9" opacity="0.8"/><use href="#f112" stroke="#819e78" stroke-width="1.9" opacity="0.9"/><use href="#f112" stroke="#c3d6b0" stroke-width="0.9" opacity="0.95"/><path d="M450 398C487 370 549 395 597 432" stroke="#cbd09c" stroke-width="0.9" opacity="0.8"/><use href="#f113" stroke="#819e78" stroke-width="1.9" opacity="0.9"/><use href="#f113" stroke="#c3d6b0" stroke-width="0.9" opacity="0.95"/><path d="M448 389C488 358 543 356 581 373" stroke="#cbd09c" stroke-width="0.9" opacity="0.8"/><use href="#f114" stroke="#93b187" stroke-width="1.9" opacity="0.9"/><use href="#f114" stroke="#d5e4c4" stroke-width="0.9" opacity="0.95"/><path d="M403 393C352 364 272 381 212 407" stroke="#cbd09c" stroke-width="0.9" opacity="0.8"/><use href="#f115" stroke="#819e78" stroke-width="1.9" opacity="0.9"/><use href="#f115" stroke="#c3d6b0" stroke-width="0.9" opacity="0.95"/><path d="M451 405C491 396 556 445 605 500" stroke="#cbd09c" stroke-width="0.9" opacity="0.8"/><use href="#f116" stroke="#93b187" stroke-width="1.9" opacity="0.9"/><use href="#f116" stroke="#d5e4c4" stroke-width="0.9" opacity="0.95"/><path d="M442 379C468 319 506 285 535 267" stroke="#cbd09c" stroke-width="0.9" opacity="0.8"/><use href="#f117" stroke="#93b187" stroke-width="1.9" opacity="0.9"/><use href="#f117" stroke="#d5e4c4" stroke-width="0.9" opacity="0.95"/><path d="M425 379C417 323 402 286 391 263" stroke="#cbd09c" stroke-width="0.9" opacity="0.8"/><use href="#f118" stroke="#93b187" stroke-width="1.9" opacity="0.9"/><use href="#f118" stroke="#d5e4c4" stroke-width="0.9" opacity="0.95"/><path d="M424 377C413 314 396 274 385 251" stroke="#cbd09c" stroke-width="0.9" opacity="0.8"/><use href="#f119" stroke="#93b187" stroke-width="1.9" opacity="0.9"/><use href="#f119" stroke="#d5e4c4" stroke-width="0.9" opacity="0.95"/><path d="M410 387C376 339 316 334 269 350" stroke="#cbd09c" stroke-width="0.9" opacity="0.8"/><use href="#f120" stroke="#819e78" stroke-width="1.9" opacity="0.9"/><use href="#f120" stroke="#c3d6b0" stroke-width="0.9" opacity="0.95"/><path d="M419 415C391 423 361 495 343 557" stroke="#cbd09c" stroke-width="0.9" opacity="0.8"/><use href="#f121" stroke="#819e78" stroke-width="1.9" opacity="0.9"/><use href="#f121" stroke="#c3d6b0" stroke-width="0.9" opacity="0.95"/><path d="M445 413C474 422 521 495 557 567" stroke="#cbd09c" stroke-width="0.9" opacity="0.8"/><use href="#f122" stroke="#93b187" stroke-width="1.9" opacity="0.9"/><use href="#f122" stroke="#d5e4c4" stroke-width="0.9" opacity="0.95"/><path d="M410 404C370 387 310 432 266 485" stroke="#cbd09c" stroke-width="0.9" opacity="0.8"/><use href="#f123" stroke="#819e78" stroke-width="1.9" opacity="0.9"/><use href="#f123" stroke="#c3d6b0" stroke-width="0.9" opacity="0.95"/><path d="M434 420C440 443 456 527 470 588" stroke="#cbd09c" stroke-width="0.9" opacity="0.8"/><use href="#f124" stroke="#819e78" stroke-width="1.9" opacity="0.9"/><use href="#f124" stroke="#c3d6b0" stroke-width="0.9" opacity="0.95"/><path d="M447 416C478 431 534 513 578 583" stroke="#cbd09c" stroke-width="0.9" opacity="0.8"/><ellipse cx="430" cy="400" rx="29" ry="24" fill="#263a2b" opacity="0.6" filter="url(#bl3)"/></g><path d="M209 352L227 352L251 500L227 500Z" fill="#d9cfbc"/><path d="M221 352L227 352L251 500L243 500Z" fill="#6e6452" opacity="0.45"/><path d="M209 354q2 3 4 0M215 354q2 3 4 0M220 354q2 3 4 0M214 359q2 3 4 0M219 359q2 3 4 0M225 359q2 3 4 0M210 364q2 3 4 0M216 364q2 3 4 0M222 364q2 3 4 0M215 369q2 3 4 0M221 369q2 3 4 0M226 369q2 3 4 0M212 374q2 3 5 0M217 374q2 3 5 0M223 374q2 3 5 0M217 380q2 3 5 0M222 380q2 3 5 0M228 380q2 3 5 0M213 385q2 3 5 0M219 385q2 3 5 0M225 385q2 3 5 0M218 390q2 3 5 0M224 390q2 3 5 0M230 390q2 3 5 0M214 395q2 3 5 0M220 395q2 3 5 0M226 395q2 3 5 0M219 400q2 3 5 0M225 400q2 3 5 0M231 400q2 3 5 0M215 405q2 3 5 0M221 405q2 3 5 0M228 405q2 3 5 0M221 410q2 3 5 0M227 410q2 3 5 0M233 410q2 3 5 0M217 415q2 3 5 0M223 415q2 3 5 0M229 415q2 3 5 0M222 420q2 3 5 0M228 420q2 3 5 0M234 420q2 3 5 0M218 426q3 3 5 0M224 426q3 3 5 0M231 426q3 3 5 0M223 431q3 3 5 0M230 431q3 3 5 0M236 431q3 3 5 0M219 436q3 3 5 0M226 436q3 3 5 0M232 436q3 3 5 0M225 441q3 3 5 0M231 441q3 3 5 0M238 441q3 3 5 0M220 446q3 3 5 0M227 446q3 3 5 0M234 446q3 3 5 0M226 451q3 3 5 0M233 451q3 3 5 0M239 451q3 3 5 0M222 456q3 3 5 0M228 456q3 3 5 0M235 456q3 3 5 0M227 461q3 3 5 0M234 461q3 3 5 0M241 461q3 3 5 0M223 466q3 3 5 0M230 466q3 3 5 0M237 466q3 3 5 0M229 471q3 3 5 0M235 471q3 3 5 0M242 471q3 3 5 0M224 477q3 3 6 0M231 477q3 3 6 0M238 477q3 3 6 0M230 482q3 3 6 0M237 482q3 3 6 0M244 482q3 3 6 0M225 487q3 3 6 0M232 487q3 3 6 0M240 487q3 3 6 0M231 492q3 3 6 0M238 492q3 3 6 0M245 492q3 3 6 0M227 497q3 3 6 0M234 497q3 3 6 0M241 497q3 3 6 0" stroke="#43392d" stroke-width="1.6" fill="none" opacity="0.85"/><g fill="none"><ellipse cx="225" cy="292" rx="105" ry="95" fill="#35503d" opacity="0.7" filter="url(#bl)"/><use href="#f125" stroke="#55735a" stroke-width="1.9" opacity="0.9"/><use href="#f125" stroke="#9fb891" stroke-width="0.9" opacity="0.95"/><use href="#f126" stroke="#55735a" stroke-width="1.9" opacity="0.9"/><use href="#f126" stroke="#9fb891" stroke-width="0.9" opacity="0.95"/><use href="#f127" stroke="#55735a" stroke-width="1.9" opacity="0.9"/><use href="#f127" stroke="#9fb891" stroke-width="0.9" opacity="0.95"/><use href="#f128" stroke="#55735a" stroke-width="1.9" opacity="0.9"/><use href="#f128" stroke="#9fb891" stroke-width="0.9" opacity="0.95"/><use href="#f129" stroke="#55735a" stroke-width="1.9" opacity="0.9"/><use href="#f129" stroke="#9fb891" stroke-width="0.9" opacity="0.95"/><use href="#f130" stroke="#55735a" stroke-width="1.9" opacity="0.9"/><use href="#f130" stroke="#9fb891" stroke-width="0.9" opacity="0.95"/><use href="#f131" stroke="#55735a" stroke-width="1.9" opacity="0.9"/><use href="#f131" stroke="#9fb891" stroke-width="0.9" opacity="0.95"/><use href="#f132" stroke="#55735a" stroke-width="1.9" opacity="0.9"/><use href="#f132" stroke="#9fb891" stroke-width="0.9" opacity="0.95"/><use href="#f133" stroke="#55735a" stroke-width="1.9" opacity="0.9"/><use href="#f133" stroke="#9fb891" stroke-width="0.9" opacity="0.95"/><use href="#f134" stroke="#55735a" stroke-width="1.9" opacity="0.9"/><use href="#f134" stroke="#9fb891" stroke-width="0.9" opacity="0.95"/><use href="#f135" stroke="#55735a" stroke-width="1.9" opacity="0.9"/><use href="#f135" stroke="#9fb891" stroke-width="0.9" opacity="0.95"/><use href="#f136" stroke="#55735a" stroke-width="1.9" opacity="0.9"/><use href="#f136" stroke="#9fb891" stroke-width="0.9" opacity="0.95"/><use href="#f137" stroke="#55735a" stroke-width="1.9" opacity="0.9"/><use href="#f137" stroke="#9fb891" stroke-width="0.9" opacity="0.95"/><use href="#f138" stroke="#55735a" stroke-width="1.9" opacity="0.9"/><use href="#f138" stroke="#9fb891" stroke-width="0.9" opacity="0.95"/><use href="#f139" stroke="#55735a" stroke-width="1.9" opacity="0.9"/><use href="#f139" stroke="#9fb891" stroke-width="0.9" opacity="0.95"/><use href="#f140" stroke="#55735a" stroke-width="1.9" opacity="0.9"/><use href="#f140" stroke="#9fb891" stroke-width="0.9" opacity="0.95"/><ellipse cx="225" cy="280" rx="80" ry="70" fill="#2a4232" opacity="0.6" filter="url(#bl3)"/><use href="#f141" stroke="#93b187" stroke-width="1.9" opacity="0.9"/><use href="#f141" stroke="#d5e4c4" stroke-width="0.9" opacity="0.95"/><path d="M226 253C237 181 240 124 238 70" stroke="#cbd09c" stroke-width="0.9" opacity="0.8"/><use href="#f142" stroke="#93b187" stroke-width="1.9" opacity="0.9"/><use href="#f142" stroke="#d5e4c4" stroke-width="0.9" opacity="0.95"/><path d="M241 261C272 204 324 177 363 165" stroke="#cbd09c" stroke-width="0.9" opacity="0.8"/><use href="#f143" stroke="#93b187" stroke-width="1.9" opacity="0.9"/><use href="#f143" stroke="#d5e4c4" stroke-width="0.9" opacity="0.95"/><path d="M196 271C137 247 50 251-12 246" stroke="#cbd09c" stroke-width="0.9" opacity="0.8"/><use href="#f144" stroke="#93b187" stroke-width="1.9" opacity="0.9"/><use href="#f144" stroke="#d5e4c4" stroke-width="0.9" opacity="0.95"/><path d="M216 258C211 193 181 153 152 119" stroke="#cbd09c" stroke-width="0.9" opacity="0.8"/><use href="#f145" stroke="#819e78" stroke-width="1.9" opacity="0.9"/><use href="#f145" stroke="#c3d6b0" stroke-width="0.9" opacity="0.95"/><path d="M213 296C188 308 152 381 127 438" stroke="#cbd09c" stroke-width="0.9" opacity="0.8"/><use href="#f146" stroke="#819e78" stroke-width="1.9" opacity="0.9"/><use href="#f146" stroke="#c3d6b0" stroke-width="0.9" opacity="0.95"/><path d="M222 294C215 309 208 367 203 409" stroke="#cbd09c" stroke-width="0.9" opacity="0.8"/><use href="#f147" stroke="#819e78" stroke-width="1.9" opacity="0.9"/><use href="#f147" stroke="#c3d6b0" stroke-width="0.9" opacity="0.95"/><path d="M250 284C297 278 375 319 435 352" stroke="#cbd09c" stroke-width="0.9" opacity="0.8"/><use href="#f148" stroke="#819e78" stroke-width="1.9" opacity="0.9"/><use href="#f148" stroke="#c3d6b0" stroke-width="0.9" opacity="0.95"/><path d="M230 296C248 310 264 377 271 425" stroke="#cbd09c" stroke-width="0.9" opacity="0.8"/><use href="#f149" stroke="#819e78" stroke-width="1.9" opacity="0.9"/><use href="#f149" stroke="#c3d6b0" stroke-width="0.9" opacity="0.95"/><path d="M250 271C297 230 375 235 434 243" stroke="#cbd09c" stroke-width="0.9" opacity="0.8"/><use href="#f150" stroke="#93b187" stroke-width="1.9" opacity="0.9"/><use href="#f150" stroke="#d5e4c4" stroke-width="0.9" opacity="0.95"/><path d="M202 288C158 283 89 340 36 390" stroke="#cbd09c" stroke-width="0.9" opacity="0.8"/><use href="#f151" stroke="#93b187" stroke-width="1.9" opacity="0.9"/><use href="#f151" stroke="#d5e4c4" stroke-width="0.9" opacity="0.95"/><path d="M235 256C256 190 290 149 315 120" stroke="#cbd09c" stroke-width="0.9" opacity="0.8"/><use href="#f152" stroke="#819e78" stroke-width="1.9" opacity="0.9"/><use href="#f152" stroke="#c3d6b0" stroke-width="0.9" opacity="0.95"/><path d="M247 292C298 281 367 351 415 407" stroke="#cbd09c" stroke-width="0.9" opacity="0.8"/><use href="#f153" stroke="#819e78" stroke-width="1.9" opacity="0.9"/><use href="#f153" stroke="#c3d6b0" stroke-width="0.9" opacity="0.95"/><path d="M239 298C264 315 308 397 341 454" stroke="#cbd09c" stroke-width="0.9" opacity="0.8"/><use href="#f154" stroke="#93b187" stroke-width="1.9" opacity="0.9"/><use href="#f154" stroke="#d5e4c4" stroke-width="0.9" opacity="0.95"/><path d="M221 253C212 181 201 127 192 79" stroke="#cbd09c" stroke-width="0.9" opacity="0.8"/><use href="#f155" stroke="#93b187" stroke-width="1.9" opacity="0.9"/><use href="#f155" stroke="#d5e4c4" stroke-width="0.9" opacity="0.95"/><path d="M242 258C266 184 323 148 372 123" stroke="#cbd09c" stroke-width="0.9" opacity="0.8"/><use href="#f156" stroke="#93b187" stroke-width="1.9" opacity="0.9"/><use href="#f156" stroke="#d5e4c4" stroke-width="0.9" opacity="0.95"/><path d="M204 263C163 212 101 193 57 187" stroke="#cbd09c" stroke-width="0.9" opacity="0.8"/><ellipse cx="225" cy="280" rx="32" ry="27" fill="#263a2b" opacity="0.6" filter="url(#bl3)"/></g><path d="M424 492L448 492L471 596L441 596Z" fill="#d9cfbc"/><path d="M440 492L448 492L471 596L462 596Z" fill="#6e6452" opacity="0.45"/><path d="M424 494q3 3 6 0M432 494q3 3 6 0M439 494q3 3 6 0M431 499q3 3 6 0M438 499q3 3 6 0M445 499q3 3 6 0M426 505q3 3 6 0M434 505q3 3 6 0M441 505q3 3 6 0M432 510q3 3 6 0M440 510q3 3 6 0M448 510q3 3 6 0M428 515q3 3 6 0M435 515q3 3 6 0M443 515q3 3 6 0M434 520q3 3 6 0M442 520q3 3 6 0M450 520q3 3 6 0M430 525q3 3 6 0M437 525q3 3 6 0M445 525q3 3 6 0M436 531q3 3 6 0M444 531q3 3 6 0M452 531q3 3 6 0M431 536q3 3 6 0M439 536q3 3 6 0M447 536q3 3 6 0M455 536q3 3 6 0M438 541q3 3 6 0M446 541q3 3 6 0M454 541q3 3 6 0M433 546q3 3 7 0M441 546q3 3 7 0M449 546q3 3 7 0M457 546q3 3 7 0M440 551q3 3 7 0M448 551q3 3 7 0M456 551q3 3 7 0M435 557q3 3 7 0M443 557q3 3 7 0M451 557q3 3 7 0M442 562q3 3 7 0M450 562q3 3 7 0M459 562q3 3 7 0M436 567q3 3 7 0M445 567q3 3 7 0M453 567q3 3 7 0M444 572q3 3 7 0M452 572q3 3 7 0M461 572q3 3 7 0M438 577q3 3 7 0M447 577q3 3 7 0M455 577q3 3 7 0M445 583q4 3 7 0M454 583q4 3 7 0M463 583q4 3 7 0M440 588q4 3 7 0M449 588q4 3 7 0M458 588q4 3 7 0M447 593q4 3 7 0M456 593q4 3 7 0M465 593q4 3 7 0" stroke="#43392d" stroke-width="1.6" fill="none" opacity="0.85"/><path d="M872 450L890 450L898 498L876 498Z" fill="#d9cfbc"/><path d="M884 450L890 450L898 498L891 498Z" fill="#6e6452" opacity="0.45"/><path d="M872 452q2 3 4 0M878 452q2 3 4 0M883 452q2 3 4 0M877 458q2 3 4 0M882 458q2 3 4 0M888 458q2 3 4 0M873 463q2 3 5 0M879 463q2 3 5 0M884 463q2 3 5 0M878 468q2 3 5 0M884 468q2 3 5 0M889 468q2 3 5 0M874 474q2 3 5 0M880 474q2 3 5 0M886 474q2 3 5 0M879 479q2 3 5 0M885 479q2 3 5 0M891 479q2 3 5 0M875 484q3 3 5 0M881 484q3 3 5 0M887 484q3 3 5 0M880 490q3 3 5 0M886 490q3 3 5 0M893 490q3 3 5 0M876 495q3 3 5 0M882 495q3 3 5 0M889 495q3 3 5 0M895 495q3 3 5 0" stroke="#43392d" stroke-width="1.6" fill="none" opacity="0.85"/><g fill="none"><ellipse cx="733" cy="541" rx="109" ry="98" fill="#35503d" opacity="0.7" filter="url(#bl)"/><use href="#f157" stroke="#55735a" stroke-width="1.9" opacity="0.9"/><use href="#f157" stroke="#9fb891" stroke-width="0.9" opacity="0.95"/><use href="#f158" stroke="#55735a" stroke-width="1.9" opacity="0.9"/><use href="#f158" stroke="#9fb891" stroke-width="0.9" opacity="0.95"/><use href="#f159" stroke="#55735a" stroke-width="1.9" opacity="0.9"/><use href="#f159" stroke="#9fb891" stroke-width="0.9" opacity="0.95"/><use href="#f160" stroke="#55735a" stroke-width="1.9" opacity="0.9"/><use href="#f160" stroke="#9fb891" stroke-width="0.9" opacity="0.95"/><use href="#f161" stroke="#55735a" stroke-width="1.9" opacity="0.9"/><use href="#f161" stroke="#9fb891" stroke-width="0.9" opacity="0.95"/><use href="#f162" stroke="#55735a" stroke-width="1.9" opacity="0.9"/><use href="#f162" stroke="#9fb891" stroke-width="0.9" opacity="0.95"/><use href="#f163" stroke="#55735a" stroke-width="1.9" opacity="0.9"/><use href="#f163" stroke="#9fb891" stroke-width="0.9" opacity="0.95"/><use href="#f164" stroke="#55735a" stroke-width="1.9" opacity="0.9"/><use href="#f164" stroke="#9fb891" stroke-width="0.9" opacity="0.95"/><use href="#f165" stroke="#55735a" stroke-width="1.9" opacity="0.9"/><use href="#f165" stroke="#9fb891" stroke-width="0.9" opacity="0.95"/><use href="#f166" stroke="#55735a" stroke-width="1.9" opacity="0.9"/><use href="#f166" stroke="#9fb891" stroke-width="0.9" opacity="0.95"/><use href="#f167" stroke="#55735a" stroke-width="1.9" opacity="0.9"/><use href="#f167" stroke="#9fb891" stroke-width="0.9" opacity="0.95"/><use href="#f168" stroke="#55735a" stroke-width="1.9" opacity="0.9"/><use href="#f168" stroke="#9fb891" stroke-width="0.9" opacity="0.95"/><use href="#f169" stroke="#55735a" stroke-width="1.9" opacity="0.9"/><use href="#f169" stroke="#9fb891" stroke-width="0.9" opacity="0.95"/><use href="#f170" stroke="#55735a" stroke-width="1.9" opacity="0.9"/><use href="#f170" stroke="#9fb891" stroke-width="0.9" opacity="0.95"/><use href="#f171" stroke="#55735a" stroke-width="1.9" opacity="0.9"/><use href="#f171" stroke="#9fb891" stroke-width="0.9" opacity="0.95"/><use href="#f172" stroke="#55735a" stroke-width="1.9" opacity="0.9"/><use href="#f172" stroke="#9fb891" stroke-width="0.9" opacity="0.95"/><use href="#f173" stroke="#55735a" stroke-width="1.9" opacity="0.9"/><use href="#f173" stroke="#9fb891" stroke-width="0.9" opacity="0.95"/><ellipse cx="733" cy="528" rx="83" ry="72" fill="#2a4232" opacity="0.6" filter="url(#bl3)"/><use href="#f174" stroke="#93b187" stroke-width="1.9" opacity="0.9"/><use href="#f174" stroke="#d5e4c4" stroke-width="0.9" opacity="0.95"/><path d="M732 505C741 443 736 395 726 352" stroke="#cbd09c" stroke-width="0.9" opacity="0.8"/><use href="#f175" stroke="#93b187" stroke-width="1.9" opacity="0.9"/><use href="#f175" stroke="#d5e4c4" stroke-width="0.9" opacity="0.95"/><path d="M709 518C663 483 591 486 539 500" stroke="#cbd09c" stroke-width="0.9" opacity="0.8"/><use href="#f176" stroke="#93b187" stroke-width="1.9" opacity="0.9"/><use href="#f176" stroke="#d5e4c4" stroke-width="0.9" opacity="0.95"/><path d="M706 546C657 557 574 652 510 727" stroke="#cbd09c" stroke-width="0.9" opacity="0.8"/><use href="#f177" stroke="#819e78" stroke-width="1.9" opacity="0.9"/><use href="#f177" stroke="#c3d6b0" stroke-width="0.9" opacity="0.95"/><path d="M755 533C801 513 870 566 920 629" stroke="#cbd09c" stroke-width="0.9" opacity="0.8"/><use href="#f178" stroke="#819e78" stroke-width="1.9" opacity="0.9"/><use href="#f178" stroke="#c3d6b0" stroke-width="0.9" opacity="0.95"/><path d="M754 518C802 491 868 485 915 476" stroke="#cbd09c" stroke-width="0.9" opacity="0.8"/><use href="#f179" stroke="#819e78" stroke-width="1.9" opacity="0.9"/><use href="#f179" stroke="#c3d6b0" stroke-width="0.9" opacity="0.95"/><path d="M715 556C686 585 630 711 584 812" stroke="#cbd09c" stroke-width="0.9" opacity="0.8"/><use href="#f180" stroke="#93b187" stroke-width="1.9" opacity="0.9"/><use href="#f180" stroke="#d5e4c4" stroke-width="0.9" opacity="0.95"/><path d="M706 513C661 448 577 446 510 465" stroke="#cbd09c" stroke-width="0.9" opacity="0.8"/><use href="#f181" stroke="#93b187" stroke-width="1.9" opacity="0.9"/><use href="#f181" stroke="#d5e4c4" stroke-width="0.9" opacity="0.95"/><path d="M715 510C675 462 621 438 584 424" stroke="#cbd09c" stroke-width="0.9" opacity="0.8"/><use href="#f182" stroke="#819e78" stroke-width="1.9" opacity="0.9"/><use href="#f182" stroke="#c3d6b0" stroke-width="0.9" opacity="0.95"/><path d="M720 554C692 579 655 699 631 802" stroke="#cbd09c" stroke-width="0.9" opacity="0.8"/><use href="#f183" stroke="#93b187" stroke-width="1.9" opacity="0.9"/><use href="#f183" stroke="#d5e4c4" stroke-width="0.9" opacity="0.95"/><path d="M705 526C651 501 565 540 499 596" stroke="#cbd09c" stroke-width="0.9" opacity="0.8"/><use href="#f184" stroke="#93b187" stroke-width="1.9" opacity="0.9"/><use href="#f184" stroke="#d5e4c4" stroke-width="0.9" opacity="0.95"/><path d="M707 533C654 508 576 564 517 628" stroke="#cbd09c" stroke-width="0.9" opacity="0.8"/><use href="#f185" stroke="#819e78" stroke-width="1.9" opacity="0.9"/><use href="#f185" stroke="#c3d6b0" stroke-width="0.9" opacity="0.95"/><path d="M754 521C793 488 858 496 908 510" stroke="#cbd09c" stroke-width="0.9" opacity="0.8"/><use href="#f186" stroke="#93b187" stroke-width="1.9" opacity="0.9"/><use href="#f186" stroke="#d5e4c4" stroke-width="0.9" opacity="0.95"/><path d="M751 505C793 441 849 406 887 386" stroke="#cbd09c" stroke-width="0.9" opacity="0.8"/><use href="#f187" stroke="#93b187" stroke-width="1.9" opacity="0.9"/><use href="#f187" stroke="#d5e4c4" stroke-width="0.9" opacity="0.95"/><path d="M707 540C662 548 583 622 521 686" stroke="#cbd09c" stroke-width="0.9" opacity="0.8"/><use href="#f188" stroke="#93b187" stroke-width="1.9" opacity="0.9"/><use href="#f188" stroke="#d5e4c4" stroke-width="0.9" opacity="0.95"/><path d="M745 503C764 431 804 387 839 356" stroke="#cbd09c" stroke-width="0.9" opacity="0.8"/><use href="#f189" stroke="#93b187" stroke-width="1.9" opacity="0.9"/><use href="#f189" stroke="#d5e4c4" stroke-width="0.9" opacity="0.95"/><path d="M732 504C734 440 734 391 732 348" stroke="#cbd09c" stroke-width="0.9" opacity="0.8"/><use href="#f190" stroke="#819e78" stroke-width="1.9" opacity="0.9"/><use href="#f190" stroke="#c3d6b0" stroke-width="0.9" opacity="0.95"/><path d="M750 552C791 569 844 682 880 775" stroke="#cbd09c" stroke-width="0.9" opacity="0.8"/><ellipse cx="733" cy="528" rx="33" ry="28" fill="#263a2b" opacity="0.6" filter="url(#bl3)"/></g><path d="M727 598L749 598L757 648L731 648Z" fill="#d9cfbc"/><path d="M742 598L749 598L757 648L749 648Z" fill="#6e6452" opacity="0.45"/><path d="M727 600q3 3 5 0M734 600q3 3 5 0M740 600q3 3 5 0M733 605q3 3 5 0M739 605q3 3 5 0M746 605q3 3 5 0M728 610q3 3 6 0M735 610q3 3 6 0M742 610q3 3 6 0M734 615q3 3 6 0M741 615q3 3 6 0M748 615q3 3 6 0M729 620q3 3 6 0M736 620q3 3 6 0M743 620q3 3 6 0M735 625q3 3 6 0M742 625q3 3 6 0M749 625q3 3 6 0M730 630q3 3 6 0M737 630q3 3 6 0M744 630q3 3 6 0M736 635q3 3 6 0M743 635q3 3 6 0M751 635q3 3 6 0M730 640q3 3 6 0M738 640q3 3 6 0M746 640q3 3 6 0M736 645q3 3 6 0M744 645q3 3 6 0M752 645q3 3 6 0" stroke="#43392d" stroke-width="1.6" fill="none" opacity="0.85"/><g></g></svg>
<div class="r" style="left:1275px;top:601px;width:400px;height:172px;background:#1c1f27;"></div>
<div class="t" style="left:1311.00px;top:626.06px;font-size:13.52px;color:#e8e8ea;-webkit-text-stroke:0.38px #e8e8ea;transform:scaleX(0.9422);transform-origin:0 0;">Video rendering is in progress</div>
<div class="t" style="left:1614.00px;top:626.06px;font-size:13.52px;color:#e8e8ea;-webkit-text-stroke:0.38px #e8e8ea;transform:scaleX(0.9062);transform-origin:0 0;">99%</div>
<div class="t" style="left:1311.00px;top:665.06px;font-size:13.52px;color:#e8e8ea;-webkit-text-stroke:0.38px #e8e8ea;transform:scaleX(0.9578);transform-origin:0 0;">Exporting</div>
<div class="r" style="left:1311px;top:691px;width:325px;height:4px;background:linear-gradient(90deg,#7c84f2,#a47df6 50%,#9b6cec);border-radius:2px;"></div>
<div class="r" style="left:1576px;top:719px;width:63px;height:30px;background:#24272e;border-radius:2px;"></div>
<div class="t" style="left:1588.00px;top:727.06px;font-size:13.52px;color:#e8e8ea;-webkit-text-stroke:0.38px #e8e8ea;transform:scaleX(0.9333);transform-origin:0 0;">Cancel</div>
<div class="r" style="left:0px;top:76px;width:899px;height:890px;background:transparent;border-radius:8px;box-shadow:0 0 0 1px rgba(0,0,0,0.14);"></div>
<div class="r" style="left:0px;top:76px;width:899px;height:890px;background:#eef2f9;border-radius:8px;"></div>
<div class="r" style="left:47px;top:128px;width:852px;height:838px;background:#ffffff;border-top-left-radius:8px;border-bottom-right-radius:8px;box-shadow:-1px -1px 0 #e2e6ee;"></div>
<div class="r" style="left:47px;top:177px;width:852px;height:1px;background:#e8e8e8;"></div>
<svg class="r" style="left:17px;top:93px;" width="16" height="12" viewBox="0 0 16 12"><rect x="0" y="0" width="16" height="12" fill="#0b63c4"/><path d="M0 7 L3.2 2.8 L7.5 8.2 L11 3.2 L16 6 V12 H0Z" fill="#1aa2f2"/><path d="M0 9.5 L3.2 5.3 L7.5 10.7 L11 5.7 L16 8.5 V12 H0Z" fill="#a9def9"/></svg>
<div class="t" style="left:55.60px;top:96.51px;font-size:11.92px;color:#1b1b1b;transform:scaleX(0.9806);transform-origin:0 0;">Task Manager</div>
<div class="r" style="left:780px;top:90px;width:10px;height:1px;background:#222;"></div>
<svg class="r" style="left:824px;top:84px;" width="12" height="12" viewBox="0 0 12 12"><rect x="0.5" y="0.5" width="10" height="10" fill="none" stroke="#222" stroke-width="1.1"/></svg>
<svg class="r" style="left:870px;top:84px;" width="12" height="12" viewBox="0 0 12 12"><path d="M1 1 L11 11 M11 1 L1 11" stroke="#222" stroke-width="1.1"/></svg>
<div class="r" style="left:3px;top:213px;width:40px;height:35px;background:#e4e8ef;border-radius:5px;"></div>
<div class="r" style="left:3px;top:223px;width:3px;height:16px;background:#1867c0;border-radius:2px;"></div>
<svg class="r" style="left:15px;top:145px;" width="16" height="12" viewBox="0 0 16 12"><path d="M0.5 1.5 H15.5 M0.5 6.5 H15.5 M0.5 11.5 H15.5" stroke="#2b2b2b" stroke-width="1"/></svg>
<svg class="r" style="left:15px;top:183px;" width="16" height="16" viewBox="0 0 16 16"><path d="M1.5 1.5 H8 V8 H1.5Z M8 1.5 H14 V7.5 H8 M1.5 8 V14.5 H7.5 V8" fill="none" stroke="#2b2b2b" stroke-width="1.2"/></svg>
<svg class="r" style="left:15px;top:223px;" width="16" height="16" viewBox="0 0 16 16"><rect x="1.5" y="1.5" width="13" height="13" rx="2" fill="none" stroke="#2b2b2b" stroke-width="1.2"/><path d="M3 8.5 H5.5 L7 5 L9 11 L10.5 8.5 H13" fill="none" stroke="#2b2b2b" stroke-width="1.1"/></svg>
<svg class="r" style="left:14px;top:262px;" width="18" height="18" viewBox="0 0 18 18"><path d="M3.2 6 A7 7 0 1 1 2.5 10" fill="none" stroke="#2b2b2b" stroke-width="1.2"/><path d="M2.5 2.5 V6.2 H6" fill="none" stroke="#2b2b2b" stroke-width="1.2"/><path d="M9 5.5 V10 H12" fill="none" stroke="#2b2b2b" stroke-width="1.2"/></svg>
<svg class="r" style="left:14px;top:302px;" width="18" height="16" viewBox="0 0 18 16"><path d="M2 9 A7 7 0 0 1 16 9" fill="none" stroke="#2b2b2b" stroke-width="1.2" stroke-dasharray="3 2"/><path d="M9 13 L13 4" stroke="#2b2b2b" stroke-width="1.3"/></svg>
<svg class="r" style="left:14px;top:342px;" width="18" height="17" viewBox="0 0 18 17"><circle cx="6.5" cy="5" r="3.2" fill="none" stroke="#2b2b2b" stroke-width="1.2"/><path d="M1 15 C1 10 12 10 12 15Z" fill="none" stroke="#2b2b2b" stroke-width="1.2"/><circle cx="13" cy="6" r="2.3" fill="none" stroke="#2b2b2b" stroke-width="1.1"/><path d="M12 10.5 C15 10.3 17 12 17 14.5 H13" fill="none" stroke="#2b2b2b" stroke-width="1.1"/></svg>
<svg class="r" style="left:14px;top:383px;" width="18" height="15" viewBox="0 0 18 15"><path d="M5.5 2 H17 M5.5 7.5 H17 M5.5 13 H17" stroke="#2b2b2b" stroke-width="1.2"/><circle cx="1.8" cy="2" r="1" fill="#2b2b2b"/><circle cx="1.8" cy="7.5" r="1" fill="#2b2b2b"/><circle cx="1.8" cy="13" r="1" fill="#2b2b2b"/></svg>
<svg class="r" style="left:14px;top:422px;" width="18" height="18" viewBox="0 0 18 18"><path d="M9 1.5 L11 3.5 L14 3.5 L14 6.5 L16.5 9 L14 11.5 L14 14.5 L11 14.5 L9 16.5 L7 14.5 L4 14.5 L4 11.5 L1.5 9 L4 6.5 L4 3.5 L7 3.5Z" fill="none" stroke="#2b2b2b" stroke-width="1.2" stroke-linejoin="round"/><circle cx="9" cy="9" r="2.5" fill="none" stroke="#2b2b2b" stroke-width="1.2"/></svg>
<svg class="r" style="left:14px;top:933px;" width="18" height="18" viewBox="0 0 18 18"><path d="M9 1.5 L11 3.5 L14 3.5 L14 6.5 L16.5 9 L14 11.5 L14 14.5 L11 14.5 L9 16.5 L7 14.5 L4 14.5 L4 11.5 L1.5 9 L4 6.5 L4 3.5 L7 3.5Z" fill="none" stroke="#2b2b2b" stroke-width="1.2" stroke-linejoin="round"/><circle cx="9" cy="9" r="2.5" fill="none" stroke="#2b2b2b" stroke-width="1.2"/></svg>
<div class="t" style="left:64.50px;top:146.27px;font-size:14.10px;color:#1b1b1b;font-weight:700;transform:scaleX(0.9268);transform-origin:0 0;">Performance</div>
<svg class="r" style="left:738px;top:144px;" width="18" height="18" viewBox="0 0 18 18"><path d="M1.5 13.5 V2.5 A1 1 0 0 1 2.5 1.5 H12 A1 1 0 0 1 13 2.5 V7 M1.5 7.2 H13 M7.2 1.5 V7.2 M1.5 13.5 H7" fill="none" stroke="#1b1b1b" stroke-width="1.2"/><circle cx="12.5" cy="12.8" r="4.6" fill="#1b1b1b"/><path d="M12.5 10.3 V15.3 M10 12.8 H15" stroke="#fff" stroke-width="1.4"/></svg>
<div class="t" style="left:762.30px;top:145.56px;font-size:13.52px;color:#1b1b1b;transform:scaleX(0.8672);transform-origin:0 0;">Run new task</div>
<div class="r" style="left:848px;top:136px;width:1px;height:31px;background:#e6e6e6;"></div>
<svg class="r" style="left:863px;top:150px;" width="20" height="5" viewBox="0 0 20 5"><circle cx="2" cy="2.5" r="1.6" fill="#1b1b1b"/><circle cx="9" cy="2.5" r="1.6" fill="#1b1b1b"/><circle cx="16" cy="2.5" r="1.6" fill="#1b1b1b"/></svg>
<svg class="r" style="left:62px;top:196px;" width="60" height="40" viewBox="0 0 60 40"><rect x="0" y="0" width="60" height="40" fill="#fff"/><polygon points="0,40 0,39 4,38.5 8,39 12,38 14,35 18,36 22,34 26,35 28,32 30,35 32,31 34,34 36,28 38,33 40,27 42,30 44,27 46,31 48,28 50,30 52,29 54,31 56,28 58,29 60,28 60,40" fill="#d4eff7"/><polyline points="0,39 4,38.5 8,39 12,38 14,35 18,36 22,34 26,35 28,32 30,35 32,31 34,34 36,28 38,33 40,27 42,30 44,27 46,31 48,28 50,30 52,29 54,31 56,28 58,29 60,28" fill="none" stroke="#17809e" stroke-width="1"/><rect x="0.5" y="0.5" width="59" height="39" fill="none" stroke="#7d7d7d" stroke-width="1"/></svg>
<svg class="r" style="left:62px;top:256px;" width="60" height="40" viewBox="0 0 60 40"><rect x="0" y="0" width="60" height="40" fill="#fff"/><polygon points="0,40 0,24.5 10,25 12,26 20,25 32,24.5 40,24 60,24 60,40" fill="#c9ddf8"/><polyline points="0,24.5 10,25 12,26 20,25 32,24.5 40,24 60,24" fill="none" stroke="#2a6ad6" stroke-width="1.3"/><rect x="0.5" y="0.5" width="59" height="39" fill="none" stroke="#7d7d7d" stroke-width="1"/></svg>
<svg class="r" style="left:62px;top:316px;" width="60" height="46" viewBox="0 0 60 46"><rect x="0" y="0" width="60" height="46" fill="#fff"/><rect x="0.5" y="0.5" width="59" height="45" fill="none" stroke="#7d7d7d" stroke-width="1"/></svg>
<svg class="r" style="left:62px;top:382px;" width="60" height="46" viewBox="0 0 60 46"><rect x="0" y="0" width="60" height="46" fill="#fff"/><path d="M11 45 L12 43 L13 45 M35 45 L35.5 44 L36 45" stroke="#5aa02c" stroke-width="1"/><rect x="0.5" y="0.5" width="59" height="45" fill="none" stroke="#7d7d7d" stroke-width="1"/></svg>
<svg class="r" style="left:62px;top:448px;" width="60" height="46" viewBox="0 0 60 46"><rect x="0" y="0" width="60" height="46" fill="#fff"/><rect x="0.5" y="0.5" width="59" height="45" fill="none" stroke="#7d7d7d" stroke-width="1"/></svg>
<svg class="r" style="left:62px;top:514px;" width="60" height="45" viewBox="0 0 60 45"><rect x="0" y="0" width="60" height="45" fill="#fff"/><polygon points="10,45 10,46 10,18 14,17 16,15 18,17 20,15 22,16 24,14 26,16 28,15 30,16 32,14 34,16 36,15 40,16 41,22 44,23 46,21 48,24 50,22 52,24 54,21 56,24 58,22 60,23 60,45" fill="#f5c9d6"/><polyline points="10,46 10,18 14,17 16,15 18,17 20,15 22,16 24,14 26,16 28,15 30,16 32,14 34,16 36,15 40,16 41,22 44,23 46,21 48,24 50,22 52,24 54,21 56,24 58,22 60,23" fill="none" stroke="#c72a5d" stroke-width="1"/><path d="M0 27 H60" stroke="#c72a5d" stroke-width="1"/><path d="M1 30 L3 28 L5 31 L7 29 L9 31" stroke="#c72a5d" stroke-width="0.8" fill="none"/><path d="M41 42 L44 40 L47 41 L50 39 L53 41 L56 40 L60 40" stroke="#c72a5d" stroke-width="0.8" fill="none"/><rect x="0.5" y="0.5" width="59" height="44" fill="none" stroke="#7d7d7d" stroke-width="1"/></svg>
<div class="r" style="left:52px;top:570px;width:204px;height:68px;background:#f1f1f1;box-shadow:inset 0 0 0 1px #1b1b1b;"></div>
<svg class="r" style="left:63px;top:581px;" width="60" height="46" viewBox="0 0 60 46"><rect x="0" y="0" width="60" height="46" fill="#fff"/><polygon points="1,46 1,42 2,42.5 9,42.5 10,18 11,16 12,17 16,17 17,15.5 19,17 24,16 25,15 27,17 32,16.5 35,16 37,14.5 39,17 46,16 48,15.5 50,17 55,16 57,15 59,17 60,17 60,46" fill="#e3d2fc"/><polyline points="1,42 2,42.5 9,42.5 10,18 11,16 12,17 16,17 17,15.5 19,17 24,16 25,15 27,17 32,16.5 35,16 37,14.5 39,17 46,16 48,15.5 50,17 55,16 57,15 59,17 60,17" fill="none" stroke="#8f2bf0" stroke-width="1.2"/><path d="M1.5 42 V46" stroke="#8f2bf0" stroke-width="1.2"/><rect x="0.5" y="0.5" width="59" height="45" fill="none" stroke="#7d7d7d" stroke-width="1"/></svg>
<div class="t" style="left:132.50px;top:194.83px;font-size:14.97px;color:#1b1b1b;transform:scaleX(0.9086);transform-origin:0 0;">CPU</div>
<div class="t" style="left:132.80px;top:213.62px;font-size:12.50px;color:#5d5d5d;transform:scaleX(0.8614);transform-origin:0 0;">25%  5.28 GHz</div>
<div class="t" style="left:132.50px;top:255.53px;font-size:14.97px;color:#1b1b1b;transform:scaleX(1.0732);transform-origin:0 0;">Memory</div>
<div class="t" style="left:132.80px;top:273.72px;font-size:12.50px;color:#5d5d5d;transform:scaleX(0.8869);transform-origin:0 0;">24.1/63.6 GB (38%)</div>
<div class="t" style="left:133.00px;top:315.33px;font-size:14.97px;color:#1b1b1b;transform:scaleX(0.9835);transform-origin:0 0;">Disk 0 (D:)</div>
<div class="t" style="left:133.00px;top:334.32px;font-size:12.50px;color:#5d5d5d;transform:scaleX(0.8897);transform-origin:0 0;">HDD (SATA)</div>
<div class="t" style="left:133.00px;top:347.92px;font-size:12.50px;color:#5d5d5d;transform:scaleX(0.8304);transform-origin:0 0;">0%</div>
<div class="t" style="left:133.00px;top:381.53px;font-size:14.97px;color:#1b1b1b;transform:scaleX(0.9694);transform-origin:0 0;">Disk 1 (C:)</div>
<div class="t" style="left:133.00px;top:400.42px;font-size:12.50px;color:#5d5d5d;transform:scaleX(0.8789);transform-origin:0 0;">SSD (NVMe)</div>
<div class="t" style="left:133.00px;top:414.02px;font-size:12.50px;color:#5d5d5d;transform:scaleX(0.8304);transform-origin:0 0;">0%</div>
<div class="t" style="left:133.00px;top:447.53px;font-size:14.97px;color:#1b1b1b;transform:scaleX(0.9522);transform-origin:0 0;">Disk 2 (E:)</div>
<div class="t" style="left:133.00px;top:466.42px;font-size:12.50px;color:#5d5d5d;transform:scaleX(0.8309);transform-origin:0 0;">USB (USB)</div>
<div class="t" style="left:133.00px;top:480.02px;font-size:12.50px;color:#5d5d5d;transform:scaleX(0.8304);transform-origin:0 0;">0%</div>
<div class="t" style="left:133.00px;top:512.83px;font-size:14.97px;color:#1b1b1b;transform:scaleX(1.0072);transform-origin:0 0;">Ethernet</div>
<div class="t" style="left:133.00px;top:531.02px;font-size:12.50px;color:#5d5d5d;transform:scaleX(0.9206);transform-origin:0 0;">Ethernet</div>
<div class="t" style="left:133.00px;top:546.02px;font-size:12.50px;color:#5d5d5d;transform:scaleX(0.9005);transform-origin:0 0;">S: 61.0 R: 243 Mbps</div>
<div class="t" style="left:134.00px;top:580.03px;font-size:14.97px;color:#1b1b1b;transform:scaleX(0.9574);transform-origin:0 0;">GPU 0</div>
<div class="t" style="left:134.50px;top:598.42px;font-size:12.50px;color:#5d5d5d;transform:scaleX(0.8819);transform-origin:0 0;">NVIDIA GeForce R...</div>
<div class="t" style="left:134.50px;top:612.82px;font-size:12.50px;color:#5d5d5d;transform:scaleX(0.8579);transform-origin:0 0;">63%  (54 °C)</div>
<div class="t" style="left:284.00px;top:196.56px;font-size:26.74px;color:#111;transform:scaleX(0.9154);transform-origin:0 0;">GPU</div>
<div class="t" style="left:693.30px;top:205.97px;font-size:16.57px;color:#111;transform:scaleX(0.8946);transform-origin:0 0;">NVIDIA GeForce RTX 5090</div>
<svg class="r" style="left:290px;top:240px;" width="9" height="6" viewBox="0 0 9 6"><path d="M0.8 0.8 L4.5 4.6 L8.2 0.8" fill="none" stroke="#6a6a6a" stroke-width="1"/></svg>
<div class="t" style="left:303.20px;top:237.07px;font-size:12.79px;color:#5d5d5d;transform:scaleX(0.9284);transform-origin:0 0;">3D</div>
<div class="t" style="left:556.90px;top:238.18px;font-size:11.48px;color:#5d5d5d;transform:scaleX(0.9057);transform-origin:0 0;">63%</div>
<svg class="r" style="left:584px;top:240px;" width="9" height="6" viewBox="0 0 9 6"><path d="M0.8 0.8 L4.5 4.6 L8.2 0.8" fill="none" stroke="#6a6a6a" stroke-width="1"/></svg>
<div class="t" style="left:597.00px;top:237.07px;font-size:12.79px;color:#5d5d5d;transform:scaleX(1.0045);transform-origin:0 0;">Copy</div>
<div class="t" style="left:859.30px;top:238.18px;font-size:11.48px;color:#5d5d5d;transform:scaleX(0.8136);transform-origin:0 0;">0%</div>
<svg class="r" style="left:290px;top:430px;" width="9" height="6" viewBox="0 0 9 6"><path d="M0.8 0.8 L4.5 4.6 L8.2 0.8" fill="none" stroke="#6a6a6a" stroke-width="1"/></svg>
<div class="t" style="left:303.20px;top:427.07px;font-size:12.79px;color:#5d5d5d;transform:scaleX(1.0172);transform-origin:0 0;">Video Encode</div>
<div class="t" style="left:564.20px;top:428.18px;font-size:11.48px;color:#5d5d5d;transform:scaleX(0.8136);transform-origin:0 0;">0%</div>
<svg class="r" style="left:584px;top:430px;" width="9" height="6" viewBox="0 0 9 6"><path d="M0.8 0.8 L4.5 4.6 L8.2 0.8" fill="none" stroke="#6a6a6a" stroke-width="1"/></svg>
<div class="t" style="left:597.00px;top:427.07px;font-size:12.79px;color:#5d5d5d;transform:scaleX(1.0295);transform-origin:0 0;">Video Decode</div>
<div class="t" style="left:859.30px;top:428.18px;font-size:11.48px;color:#5d5d5d;transform:scaleX(0.8136);transform-origin:0 0;">0%</div>
<svg class="r" style="left:290px;top:256px;" width="286" height="162" viewBox="0 0 286 162"><rect x="0" y="0" width="286" height="162" fill="#fff"/><polygon points="1.0,161 1.0,149.8 3.9,151.3 43.5,151.3 48.3,141.0 53.4,57.5 58.1,60.4 68.4,60.4 72.8,56.3 77.9,57.5 82.6,60.4 86.7,59.0 92.3,54.6 98.4,59.0 107.2,59.3 116.0,56.3 121.9,55.3 130.7,54.6 140.2,55.3 146.0,59.7 149.7,60.4 155.6,53.9 160.0,57.8 168.8,54.3 174.6,56.8 180.5,60.2 193.7,60.4 198.1,58.2 202.5,60.4 213.4,60.4 217.8,55.3 222.2,54.3 230.3,59.0 237.6,58.2 242.0,60.4 262.5,60.4 271.3,57.5 280.1,60.4 285.2,60.4 285.2,161" fill="#e3d2fc"/><g opacity="0.9"><line x1="1" y1="17.5" x2="285" y2="17.5" stroke="#e3e3e3" stroke-width="1"/><line x1="1" y1="33.5" x2="285" y2="33.5" stroke="#e3e3e3" stroke-width="1"/><line x1="1" y1="49.5" x2="285" y2="49.5" stroke="#e3e3e3" stroke-width="1"/><line x1="1" y1="65.5" x2="285" y2="65.5" stroke="#e3e3e3" stroke-width="1"/><line x1="1" y1="81.5" x2="285" y2="81.5" stroke="#e3e3e3" stroke-width="1"/><line x1="1" y1="97.5" x2="285" y2="97.5" stroke="#e3e3e3" stroke-width="1"/><line x1="1" y1="113.5" x2="285" y2="113.5" stroke="#e3e3e3" stroke-width="1"/><line x1="1" y1="129.5" x2="285" y2="129.5" stroke="#e3e3e3" stroke-width="1"/><line x1="1" y1="145.5" x2="285" y2="145.5" stroke="#e3e3e3" stroke-width="1"/><line x1="34.5" y1="1" x2="34.5" y2="161" stroke="#e3e3e3" stroke-width="1"/><line x1="82.5" y1="1" x2="82.5" y2="161" stroke="#e3e3e3" stroke-width="1"/><line x1="130.5" y1="1" x2="130.5" y2="161" stroke="#e3e3e3" stroke-width="1"/><line x1="179.5" y1="1" x2="179.5" y2="161" stroke="#e3e3e3" stroke-width="1"/><line x1="227.5" y1="1" x2="227.5" y2="161" stroke="#e3e3e3" stroke-width="1"/><line x1="275.5" y1="1" x2="275.5" y2="161" stroke="#e3e3e3" stroke-width="1"/></g><polyline points="1.0,149.8 3.9,151.3 43.5,151.3 48.3,141.0 53.4,57.5 58.1,60.4 68.4,60.4 72.8,56.3 77.9,57.5 82.6,60.4 86.7,59.0 92.3,54.6 98.4,59.0 107.2,59.3 116.0,56.3 121.9,55.3 130.7,54.6 140.2,55.3 146.0,59.7 149.7,60.4 155.6,53.9 160.0,57.8 168.8,54.3 174.6,56.8 180.5,60.2 193.7,60.4 198.1,58.2 202.5,60.4 213.4,60.4 217.8,55.3 222.2,54.3 230.3,59.0 237.6,58.2 242.0,60.4 262.5,60.4 271.3,57.5 280.1,60.4 285.2,60.4" fill="none" stroke="#8f2bf0" stroke-width="1.3" stroke-linejoin="round"/><line x1="1" y1="149.8" x2="1" y2="161" stroke="#8f2bf0" stroke-width="1.3"/><rect x="0.5" y="0.5" width="285" height="161" fill="none" stroke="#8a8a8a" stroke-width="1"/></svg>
<svg class="r" style="left:584px;top:256px;" width="287" height="162" viewBox="0 0 287 162"><rect x="0" y="0" width="287" height="162" fill="#fff"/><polygon points="0.3,161 0.3,161.4 43.1,161.4 47.4,153.4 53.1,155.1 57.7,161.4 88.0,161.4 92.6,160.3 96.6,161.4 141.1,161.4 146.9,160.3 151.4,161.1 155.4,159.4 159.4,161.4 166.3,161.4 170.9,158.3 177.4,160.9 181.7,161.4 286.6,161.4 286.6,161" fill="#e3d2fc"/><g opacity="0.9"><line x1="1" y1="17.5" x2="286" y2="17.5" stroke="#e3e3e3" stroke-width="1"/><line x1="1" y1="33.5" x2="286" y2="33.5" stroke="#e3e3e3" stroke-width="1"/><line x1="1" y1="49.5" x2="286" y2="49.5" stroke="#e3e3e3" stroke-width="1"/><line x1="1" y1="65.5" x2="286" y2="65.5" stroke="#e3e3e3" stroke-width="1"/><line x1="1" y1="81.5" x2="286" y2="81.5" stroke="#e3e3e3" stroke-width="1"/><line x1="1" y1="97.5" x2="286" y2="97.5" stroke="#e3e3e3" stroke-width="1"/><line x1="1" y1="113.5" x2="286" y2="113.5" stroke="#e3e3e3" stroke-width="1"/><line x1="1" y1="129.5" x2="286" y2="129.5" stroke="#e3e3e3" stroke-width="1"/><line x1="1" y1="145.5" x2="286" y2="145.5" stroke="#e3e3e3" stroke-width="1"/><line x1="29.5" y1="1" x2="29.5" y2="161" stroke="#e3e3e3" stroke-width="1"/><line x1="77.5" y1="1" x2="77.5" y2="161" stroke="#e3e3e3" stroke-width="1"/><line x1="126.5" y1="1" x2="126.5" y2="161" stroke="#e3e3e3" stroke-width="1"/><line x1="174.5" y1="1" x2="174.5" y2="161" stroke="#e3e3e3" stroke-width="1"/><line x1="223.5" y1="1" x2="223.5" y2="161" stroke="#e3e3e3" stroke-width="1"/><line x1="271.5" y1="1" x2="271.5" y2="161" stroke="#e3e3e3" stroke-width="1"/></g><polyline points="0.3,161.4 43.1,161.4 47.4,153.4 53.1,155.1 57.7,161.4 88.0,161.4 92.6,160.3 96.6,161.4 141.1,161.4 146.9,160.3 151.4,161.1 155.4,159.4 159.4,161.4 166.3,161.4 170.9,158.3 177.4,160.9 181.7,161.4 286.6,161.4" fill="none" stroke="#8f2bf0" stroke-width="1.3" stroke-linejoin="round"/><rect x="0.5" y="0.5" width="286" height="161" fill="none" stroke="#8a8a8a" stroke-width="1"/></svg>
<svg class="r" style="left:290px;top:446px;" width="286" height="162" viewBox="0 0 286 162"><rect x="0" y="0" width="286" height="162" fill="#fff"/><g opacity="0.9"><line x1="1" y1="17.5" x2="285" y2="17.5" stroke="#e3e3e3" stroke-width="1"/><line x1="1" y1="33.5" x2="285" y2="33.5" stroke="#e3e3e3" stroke-width="1"/><line x1="1" y1="49.5" x2="285" y2="49.5" stroke="#e3e3e3" stroke-width="1"/><line x1="1" y1="65.5" x2="285" y2="65.5" stroke="#e3e3e3" stroke-width="1"/><line x1="1" y1="81.5" x2="285" y2="81.5" stroke="#e3e3e3" stroke-width="1"/><line x1="1" y1="97.5" x2="285" y2="97.5" stroke="#e3e3e3" stroke-width="1"/><line x1="1" y1="113.5" x2="285" y2="113.5" stroke="#e3e3e3" stroke-width="1"/><line x1="1" y1="129.5" x2="285" y2="129.5" stroke="#e3e3e3" stroke-width="1"/><line x1="1" y1="145.5" x2="285" y2="145.5" stroke="#e3e3e3" stroke-width="1"/><line x1="34.5" y1="1" x2="34.5" y2="161" stroke="#e3e3e3" stroke-width="1"/><line x1="82.5" y1="1" x2="82.5" y2="161" stroke="#e3e3e3" stroke-width="1"/><line x1="130.5" y1="1" x2="130.5" y2="161" stroke="#e3e3e3" stroke-width="1"/><line x1="179.5" y1="1" x2="179.5" y2="161" stroke="#e3e3e3" stroke-width="1"/><line x1="227.5" y1="1" x2="227.5" y2="161" stroke="#e3e3e3" stroke-width="1"/><line x1="275.5" y1="1" x2="275.5" y2="161" stroke="#e3e3e3" stroke-width="1"/></g><rect x="0.5" y="0.5" width="285" height="161" fill="none" stroke="#8a8a8a" stroke-width="1"/></svg>
<svg class="r" style="left:584px;top:446px;" width="287" height="162" viewBox="0 0 287 162"><rect x="0" y="0" width="287" height="162" fill="#fff"/><g opacity="0.9"><line x1="1" y1="17.5" x2="286" y2="17.5" stroke="#e3e3e3" stroke-width="1"/><line x1="1" y1="33.5" x2="286" y2="33.5" stroke="#e3e3e3" stroke-width="1"/><line x1="1" y1="49.5" x2="286" y2="49.5" stroke="#e3e3e3" stroke-width="1"/><line x1="1" y1="65.5" x2="286" y2="65.5" stroke="#e3e3e3" stroke-width="1"/><line x1="1" y1="81.5" x2="286" y2="81.5" stroke="#e3e3e3" stroke-width="1"/><line x1="1" y1="97.5" x2="286" y2="97.5" stroke="#e3e3e3" stroke-width="1"/><line x1="1" y1="113.5" x2="286" y2="113.5" stroke="#e3e3e3" stroke-width="1"/><line x1="1" y1="129.5" x2="286" y2="129.5" stroke="#e3e3e3" stroke-width="1"/><line x1="1" y1="145.5" x2="286" y2="145.5" stroke="#e3e3e3" stroke-width="1"/><line x1="29.5" y1="1" x2="29.5" y2="161" stroke="#e3e3e3" stroke-width="1"/><line x1="77.5" y1="1" x2="77.5" y2="161" stroke="#e3e3e3" stroke-width="1"/><line x1="126.5" y1="1" x2="126.5" y2="161" stroke="#e3e3e3" stroke-width="1"/><line x1="174.5" y1="1" x2="174.5" y2="161" stroke="#e3e3e3" stroke-width="1"/><line x1="223.5" y1="1" x2="223.5" y2="161" stroke="#e3e3e3" stroke-width="1"/><line x1="271.5" y1="1" x2="271.5" y2="161" stroke="#e3e3e3" stroke-width="1"/></g><rect x="0.5" y="0.5" width="286" height="161" fill="none" stroke="#8a8a8a" stroke-width="1"/></svg>
<div class="t" style="left:288.40px;top:620.53px;font-size:11.19px;color:#5d5d5d;transform:scaleX(0.9855);transform-origin:0 0;">Dedicated GPU memory</div>
<div class="t" style="left:834.20px;top:620.53px;font-size:11.19px;color:#5d5d5d;transform:scaleX(0.9276);transform-origin:0 0;">31.5 GB</div>
<svg class="r" style="left:288px;top:635px;" width="585" height="67" viewBox="0 0 585 67"><rect x="0" y="0" width="585" height="67" fill="#fff"/><polygon points="0.4,66 0.4,41.2 88.7,41.2 99.7,42.4 109.2,48.5 197.1,48.5 205.9,49.5 312.0,49.5 584.0,49.5 584.0,66" fill="#e3d2fc"/><g opacity="0.9"><line x1="1" y1="6.5" x2="584" y2="6.5" stroke="#e3e3e3" stroke-width="1"/><line x1="1" y1="13.5" x2="584" y2="13.5" stroke="#e3e3e3" stroke-width="1"/><line x1="1" y1="19.5" x2="584" y2="19.5" stroke="#e3e3e3" stroke-width="1"/><line x1="1" y1="26.5" x2="584" y2="26.5" stroke="#e3e3e3" stroke-width="1"/><line x1="1" y1="32.5" x2="584" y2="32.5" stroke="#e3e3e3" stroke-width="1"/><line x1="1" y1="39.5" x2="584" y2="39.5" stroke="#e3e3e3" stroke-width="1"/><line x1="1" y1="46.5" x2="584" y2="46.5" stroke="#e3e3e3" stroke-width="1"/><line x1="1" y1="52.5" x2="584" y2="52.5" stroke="#e3e3e3" stroke-width="1"/><line x1="1" y1="59.5" x2="584" y2="59.5" stroke="#e3e3e3" stroke-width="1"/><line x1="1" y1="65.5" x2="584" y2="65.5" stroke="#e3e3e3" stroke-width="1"/><line x1="40.5" y1="1" x2="40.5" y2="66" stroke="#e3e3e3" stroke-width="1"/><line x1="80.5" y1="1" x2="80.5" y2="66" stroke="#e3e3e3" stroke-width="1"/><line x1="119.5" y1="1" x2="119.5" y2="66" stroke="#e3e3e3" stroke-width="1"/><line x1="159.5" y1="1" x2="159.5" y2="66" stroke="#e3e3e3" stroke-width="1"/><line x1="199.5" y1="1" x2="199.5" y2="66" stroke="#e3e3e3" stroke-width="1"/><line x1="238.5" y1="1" x2="238.5" y2="66" stroke="#e3e3e3" stroke-width="1"/><line x1="278.5" y1="1" x2="278.5" y2="66" stroke="#e3e3e3" stroke-width="1"/><line x1="317.5" y1="1" x2="317.5" y2="66" stroke="#e3e3e3" stroke-width="1"/><line x1="357.5" y1="1" x2="357.5" y2="66" stroke="#e3e3e3" stroke-width="1"/><line x1="397.5" y1="1" x2="397.5" y2="66" stroke="#e3e3e3" stroke-width="1"/><line x1="436.5" y1="1" x2="436.5" y2="66" stroke="#e3e3e3" stroke-width="1"/><line x1="476.5" y1="1" x2="476.5" y2="66" stroke="#e3e3e3" stroke-width="1"/><line x1="516.5" y1="1" x2="516.5" y2="66" stroke="#e3e3e3" stroke-width="1"/><line x1="555.5" y1="1" x2="555.5" y2="66" stroke="#e3e3e3" stroke-width="1"/></g><polyline points="0.4,41.2 88.7,41.2 99.7,42.4 109.2,48.5 197.1,48.5 205.9,49.5 312.0,49.5 584.0,49.5" fill="none" stroke="#8f2bf0" stroke-width="1.3" stroke-linejoin="round"/><line x1="1" y1="41.2" x2="1" y2="66" stroke="#8f2bf0" stroke-width="1.3"/><rect x="0.5" y="0.5" width="584" height="66" fill="none" stroke="#8a8a8a" stroke-width="1"/></svg>
<div class="t" style="left:288.40px;top:707.33px;font-size:11.19px;color:#5d5d5d;transform:scaleX(0.9692);transform-origin:0 0;">Shared GPU memory</div>
<div class="t" style="left:834.20px;top:707.33px;font-size:11.19px;color:#5d5d5d;transform:scaleX(0.9276);transform-origin:0 0;">31.8 GB</div>
<svg class="r" style="left:288px;top:722px;" width="585" height="67" viewBox="0 0 585 67"><rect x="0" y="0" width="585" height="67" fill="#fff"/><polygon points="1.0,66 1.0,64.6 86.0,64.6 96.0,65.5 118.0,65.5 128.0,64.6 584.0,64.6 584.0,66" fill="#e3d2fc"/><g opacity="0.9"><line x1="1" y1="6.5" x2="584" y2="6.5" stroke="#e3e3e3" stroke-width="1"/><line x1="1" y1="13.5" x2="584" y2="13.5" stroke="#e3e3e3" stroke-width="1"/><line x1="1" y1="19.5" x2="584" y2="19.5" stroke="#e3e3e3" stroke-width="1"/><line x1="1" y1="26.5" x2="584" y2="26.5" stroke="#e3e3e3" stroke-width="1"/><line x1="1" y1="32.5" x2="584" y2="32.5" stroke="#e3e3e3" stroke-width="1"/><line x1="1" y1="39.5" x2="584" y2="39.5" stroke="#e3e3e3" stroke-width="1"/><line x1="1" y1="46.5" x2="584" y2="46.5" stroke="#e3e3e3" stroke-width="1"/><line x1="1" y1="52.5" x2="584" y2="52.5" stroke="#e3e3e3" stroke-width="1"/><line x1="1" y1="59.5" x2="584" y2="59.5" stroke="#e3e3e3" stroke-width="1"/><line x1="1" y1="65.5" x2="584" y2="65.5" stroke="#e3e3e3" stroke-width="1"/><line x1="40.5" y1="1" x2="40.5" y2="66" stroke="#e3e3e3" stroke-width="1"/><line x1="80.5" y1="1" x2="80.5" y2="66" stroke="#e3e3e3" stroke-width="1"/><line x1="119.5" y1="1" x2="119.5" y2="66" stroke="#e3e3e3" stroke-width="1"/><line x1="159.5" y1="1" x2="159.5" y2="66" stroke="#e3e3e3" stroke-width="1"/><line x1="199.5" y1="1" x2="199.5" y2="66" stroke="#e3e3e3" stroke-width="1"/><line x1="238.5" y1="1" x2="238.5" y2="66" stroke="#e3e3e3" stroke-width="1"/><line x1="278.5" y1="1" x2="278.5" y2="66" stroke="#e3e3e3" stroke-width="1"/><line x1="317.5" y1="1" x2="317.5" y2="66" stroke="#e3e3e3" stroke-width="1"/><line x1="357.5" y1="1" x2="357.5" y2="66" stroke="#e3e3e3" stroke-width="1"/><line x1="397.5" y1="1" x2="397.5" y2="66" stroke="#e3e3e3" stroke-width="1"/><line x1="436.5" y1="1" x2="436.5" y2="66" stroke="#e3e3e3" stroke-width="1"/><line x1="476.5" y1="1" x2="476.5" y2="66" stroke="#e3e3e3" stroke-width="1"/><line x1="516.5" y1="1" x2="516.5" y2="66" stroke="#e3e3e3" stroke-width="1"/><line x1="555.5" y1="1" x2="555.5" y2="66" stroke="#e3e3e3" stroke-width="1"/></g><polyline points="1.0,64.6 86.0,64.6 96.0,65.5 118.0,65.5 128.0,64.6 584.0,64.6" fill="none" stroke="#8f2bf0" stroke-width="1.6" stroke-linejoin="round"/><rect x="0.5" y="0.5" width="584" height="66" fill="none" stroke="#8a8a8a" stroke-width="1"/></svg>
<div class="t" style="left:286.60px;top:802.89px;font-size:12.06px;color:#5d5d5d;transform:scaleX(0.9943);transform-origin:0 0;">Utilization</div>
<div class="t" style="left:286.60px;top:823.12px;font-size:18.17px;color:#111;transform:scaleX(1.0182);transform-origin:0 0;">63%</div>
<div class="t" style="left:286.60px;top:853.79px;font-size:12.06px;color:#5d5d5d;transform:scaleX(0.9610);transform-origin:0 0;">GPU Memory</div>
<div class="t" style="left:286.60px;top:874.12px;font-size:18.17px;color:#111;transform:scaleX(1.0255);transform-origin:0 0;">9.0/63.3 GB</div>
<div class="t" style="left:407.40px;top:802.89px;font-size:12.06px;color:#5d5d5d;transform:scaleX(0.9662);transform-origin:0 0;">Dedicated GPU memory</div>
<div class="t" style="left:407.40px;top:823.12px;font-size:18.17px;color:#111;transform:scaleX(1.0296);transform-origin:0 0;">8.5/31.5 GB</div>
<div class="t" style="left:407.40px;top:853.79px;font-size:12.06px;color:#5d5d5d;transform:scaleX(0.9486);transform-origin:0 0;">Shared GPU memory</div>
<div class="t" style="left:407.40px;top:874.12px;font-size:18.17px;color:#111;transform:scaleX(1.0296);transform-origin:0 0;">0.5/31.8 GB</div>
<div class="t" style="left:407.40px;top:904.49px;font-size:12.06px;color:#5d5d5d;">Temperature</div>
<div class="t" style="left:407.40px;top:925.12px;font-size:18.17px;color:#111;transform:scaleX(1.0087);transform-origin:0 0;">54 °C</div>
<div class="t" style="left:546.30px;top:802.51px;font-size:11.92px;color:#5d5d5d;transform:scaleX(0.9647);transform-origin:0 0;">Driver version:</div>
<div class="t" style="left:709.30px;top:802.51px;font-size:11.92px;color:#111;transform:scaleX(0.8951);transform-origin:0 0;">32.0.15.8157</div>
<div class="t" style="left:546.30px;top:820.71px;font-size:11.92px;color:#5d5d5d;transform:scaleX(0.9559);transform-origin:0 0;">Driver date:</div>
<div class="t" style="left:709.30px;top:820.71px;font-size:11.92px;color:#111;transform:scaleX(0.9672);transform-origin:0 0;">10/9/2025</div>
<div class="t" style="left:546.30px;top:838.81px;font-size:11.92px;color:#5d5d5d;transform:scaleX(0.9602);transform-origin:0 0;">DirectX version:</div>
<div class="t" style="left:709.30px;top:838.81px;font-size:11.92px;color:#111;transform:scaleX(0.9011);transform-origin:0 0;">12 (FL 12.1)</div>
<div class="t" style="left:546.30px;top:856.71px;font-size:11.92px;color:#5d5d5d;transform:scaleX(0.9884);transform-origin:0 0;">Physical location:</div>
<div class="t" style="left:709.30px;top:856.71px;font-size:11.92px;color:#111;transform:scaleX(0.9754);transform-origin:0 0;">PCI bus 1, device 0, function 0</div>
<div class="t" style="left:546.30px;top:874.71px;font-size:11.92px;color:#5d5d5d;transform:scaleX(0.9827);transform-origin:0 0;">Hardware reserved memory:</div>
<div class="t" style="left:709.30px;top:874.71px;font-size:11.92px;color:#111;transform:scaleX(0.9328);transform-origin:0 0;">155 MB</div>
</body></html>
